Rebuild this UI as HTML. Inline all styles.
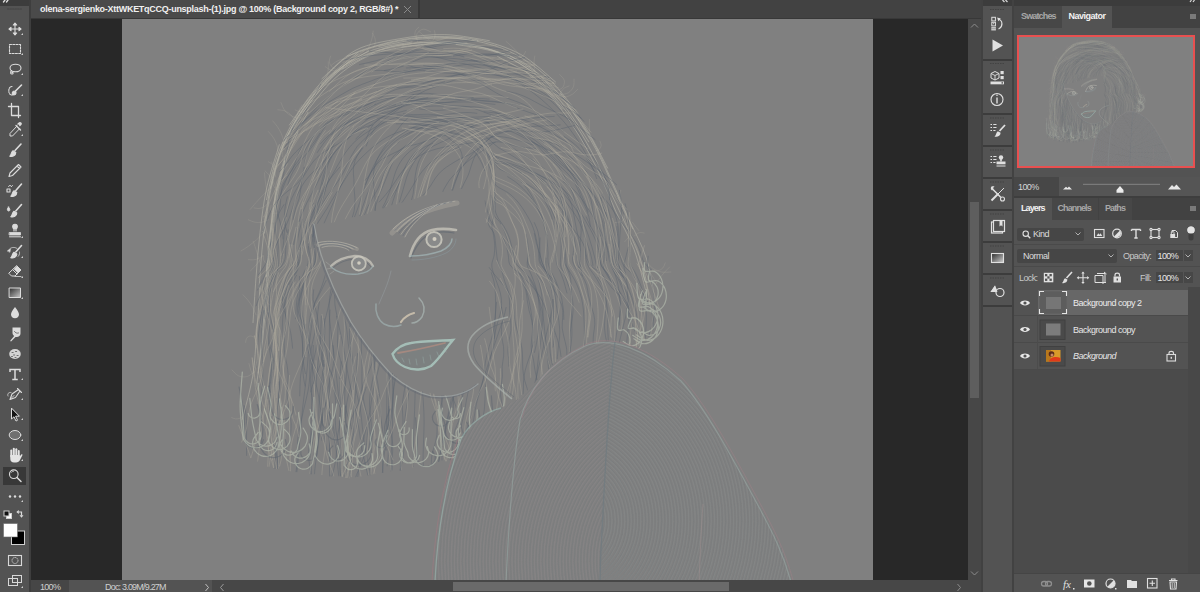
<!DOCTYPE html>
<html><head><meta charset="utf-8">
<style>
*{margin:0;padding:0;box-sizing:border-box}
html,body{width:1200px;height:592px;overflow:hidden;background:#282828;font-family:"Liberation Sans",sans-serif;}
.a{position:absolute}
.t{position:absolute;white-space:nowrap;color:#d6d6d6;font-size:9px;line-height:10px}
svg{position:absolute;overflow:visible}
</style></head><body>
<!-- top strip -->
<div class="a" style="left:0;top:0;width:1200px;height:6px;background:#3c3c3c"></div>
<!-- left toolbar -->
<div class="a" style="left:0;top:6px;width:29px;height:586px;background:#535353"></div>
<div class="a" style="left:29px;top:0;width:2px;height:592px;background:#3e3e3e"></div>
<svg style="left:0;top:0" width="29" height="592" viewBox="0 0 29 592">
<g fill="none" stroke="#dcdcdc" stroke-width="1.1" stroke-linecap="round" stroke-linejoin="round">
<!-- top » -->
<path d="M5 0L3.5 2M8 0L6.5 2" stroke="#e0e0e0" stroke-width="1.3"/>
<!-- grip -->
<path d="M7.5 9H21.5" stroke="#454545" stroke-width="1" stroke-dasharray="1.5 1"/>
<!-- move -->
<path d="M9.5 29H20.5M15 23.5V34.5"/>
<path d="M9 29L11 27.3V30.7Z M21 29L19 27.3V30.7Z M15 23L13.3 25H16.7Z M15 35L13.3 33H16.7Z" fill="#dcdcdc"/>
<!-- marquee -->
<rect x="9.5" y="44.5" width="11" height="9" stroke-dasharray="2 1.3"/>
<!-- lasso -->
<ellipse cx="15.5" cy="68" rx="5.5" ry="3.8"/>
<path d="M11.5 70.5C10 72 10.5 74.5 12.5 74C13.5 73.7 13 72 12 72.5"/>
<!-- quick select -->
<path d="M12 86.5C9 86.5 8.5 90 9 92.5C9.5 95 12 95.5 13.5 94.5" stroke-dasharray="1.2 1"/>
<path d="M21.5 85L15.5 91" stroke-width="1.6"/>
<path d="M13.2 91.3C11.5 93 12 95.3 14.5 94.8C16 94.3 16.5 92.5 15.5 91.3Z" fill="#dcdcdc"/>
<!-- crop -->
<path d="M11.5 103.5V115.5H20.5M8.5 106.5H18.5V117.5" stroke-width="1.3"/>
<!-- eyedropper -->
<path d="M17 126L10 133.5V136H12.5L19.5 128.8" stroke-width="1"/>
<path d="M16 125.5L20.5 130M18 124L19.5 122.8C20.3 122.2 21.6 123.4 21 124.3L19.8 125.6" fill="#dcdcdc" stroke-width="1.4"/>
<!-- brush -->
<path d="M21 144L15 150.5" stroke-width="1.6"/>
<path d="M13 150.8C11 152 11.5 155 9.8 156.2C12.5 157 15.8 155.5 15.8 152.5Z" fill="#dcdcdc"/>
<!-- pencil -->
<path d="M18.5 164.5L21 167L12.5 175.5L9 176.5L10 173Z M17 166L19.5 168.5"/>
<!-- color replacement -->
<path d="M21.5 184L15.8 190.5" stroke-width="1.6"/>
<path d="M14 190.8C12 192 12.5 195 10.8 196.2C13.5 197 16.8 195.5 16.8 192.5Z" fill="#dcdcdc"/>
<rect x="7" y="189" width="3" height="3"/>
<path d="M8.5 186.5C9 185 11 185 11.5 186.5M11.5 186.5L12.5 185.5" stroke-width="0.9"/>
<!-- spot healing -->
<path d="M21.5 204.5L15.8 211" stroke-width="1.6"/>
<path d="M14 211.3C12 212.5 12.5 215.5 10.8 216.7C13.5 217.5 16.8 216 16.8 213Z" fill="#dcdcdc"/>
<path d="M8.5 207C7.3 208.5 7 209.8 7.7 210.6C8.3 211.3 9.3 211.2 9.7 210.5C10.2 209.7 9.8 208.5 8.5 207Z" fill="#dcdcdc" stroke-width="0.8"/>
<!-- clone stamp -->
<circle cx="15" cy="226.5" r="2.3" fill="#dcdcdc"/>
<path d="M14 228.5V231M16 228.5V231" stroke-width="1.2"/>
<path d="M9.5 232.5H20.5V235H9.5Z" fill="#dcdcdc" stroke-width="0.8"/>
<path d="M9.5 236.8H20.5" stroke-width="1"/>
<!-- history brush -->
<path d="M21.5 245.5L15.8 252" stroke-width="1.6"/>
<path d="M14 252.3C12 253.5 12.5 256.5 10.8 257.7C13.5 258.5 16.8 257 16.8 254Z" fill="#dcdcdc"/>
<path d="M8.5 250.5C10 247.5 14 246.5 17 248.5M19.5 252C19.8 254 19 255.5 18 256.5" stroke-width="0.8" stroke-dasharray="1 0.8"/>
<path d="M7.5 250.8L10.5 249L10 252Z" fill="#dcdcdc" stroke-width="0.5"/>
<!-- eraser -->
<path d="M17 266L21 270L15 276H11.5L9 273.5Z M13 270L17 274" stroke-width="1"/>
<path d="M17 266L21 270L18 273L14 269Z" fill="#dcdcdc" stroke-width="0.6"/>
<path d="M15 276.5H21" stroke-width="0.8"/>
<!-- gradient -->
<defs><linearGradient id="gr" x1="0" y1="0" x2="1" y2="1"><stop offset="0" stop-color="#2e2e2e"/><stop offset="1" stop-color="#c8c8c8"/></linearGradient></defs>
<rect x="9.5" y="288" width="11" height="9.5" fill="url(#gr)" stroke="#dcdcdc" stroke-width="1"/>
<!-- blur drop -->
<path d="M15 307C12.5 310.5 11 312.5 11 314.5C11 316.8 12.8 318.3 15 318.3C17.2 318.3 19 316.8 19 314.5C19 312.5 17.5 310.5 15 307Z" fill="#dcdcdc" stroke="none"/>
<!-- smudge -->
<path d="M12.5 327.5H20.5V333.5C20.5 335.8 18.8 337 16.8 337H15.5L11.3 341.3C10.8 341.8 10 341.2 10.4 340.6L14.2 336C13 335.3 12.5 334 12.5 332.8Z" fill="#dcdcdc" stroke="none"/>
<path d="M14.5 331.5C15.5 333 17 333.5 18.5 333" stroke="#535353" stroke-width="0.8"/>
<!-- sponge -->
<ellipse cx="15" cy="354" rx="5.8" ry="5" fill="#d4d4d4" stroke="none"/>
<path d="M12 352.5h1.2M15.5 351.5h1.2M13.5 355h1.2M17 355.5h1.2M11.5 356.5h1M15 357.5h1" stroke="#707070" stroke-width="1"/>
<!-- type -->
<path d="M10 369.5H20M10 369.5V371.3M20 369.5V371.3M15 369.5V379.5M13 379.5H17" stroke-width="1.5" stroke-linecap="square"/>
<!-- pen -->
<path d="M17.5 388.5L21.5 392.5M20 391L15.5 397.5L10 399.5L12 394L18.5 389.5" stroke-width="1.1"/>
<path d="M10.5 399L14 395.5" stroke-width="0.9"/>
<path d="M8 396C7 394 8.5 392 11 392.5" stroke-width="0.8"/>
<!-- path selection -->
<path d="M11.5 408.5V419L14 416.8L16 421L17.5 420.3L15.6 416.2H19Z" fill="#141414" stroke="#dcdcdc" stroke-width="1"/>
<!-- ellipse -->
<ellipse cx="15" cy="435" rx="5.8" ry="4.5" fill="#707070" stroke="#dcdcdc" stroke-width="1"/>
<!-- hand -->
<g stroke="none" fill="#e4e4e4">
<rect x="10.3" y="449.5" width="2" height="8" rx="1"/>
<rect x="12.8" y="447.8" width="2" height="9" rx="1"/>
<rect x="15.3" y="448.3" width="2" height="9" rx="1"/>
<rect x="17.8" y="450" width="1.9" height="7.5" rx="0.95"/>
<path d="M10.3 455H19.7V456.5L21.2 454.5C21.8 453.8 22.8 454.3 22.4 455.2L20 460C19.2 461.6 18 462.5 16 462.5H14C11.8 462.5 10.3 461 10.3 459Z"/>
</g>
</g>
<!-- zoom selected -->
<rect x="3" y="467" width="23" height="18" fill="#383838"/>
<g fill="none" stroke="#dcdcdc" stroke-linecap="round">
<circle cx="13.8" cy="474.2" r="4.3" stroke-width="1.1"/>
<path d="M17 477.5L21 481.5" stroke-width="1.5"/>
<path d="M11.5 472.3C12 471.6 12.8 471.3 13.6 471.3" stroke-width="0.8"/>
</g>
<!-- dots -->
<g fill="#dcdcdc"><circle cx="10" cy="496.5" r="1.2"/><circle cx="15" cy="496.5" r="1.2"/><circle cx="20" cy="496.5" r="1.2"/></g>
<!-- default colors -->
<rect x="6.5" y="513.5" width="5" height="5" fill="#ffffff" stroke="#cfcfcf" stroke-width="1"/>
<rect x="4" y="511" width="5" height="5" fill="#111" stroke="#cfcfcf" stroke-width="1"/>
<path d="M18.5 512H21.5V515.5" fill="none" stroke="#dcdcdc" stroke-width="1.2"/><path d="M16.3 512L18.8 510V514Z M21.5 517.8L19.5 515.3H23.5Z" fill="#dcdcdc"/>
<!-- fg/bg -->
<rect x="11.5" y="531" width="13" height="13.5" fill="#000" stroke="#d0d0d0" stroke-width="1"/>
<rect x="3.5" y="523.5" width="14" height="13.5" fill="#fff" stroke="#6a6a6a" stroke-width="0.6"/>
<!-- quick mask -->
<rect x="8.5" y="555.5" width="13" height="10" fill="none" stroke="#d8d8d8" stroke-width="1.1"/>
<circle cx="15" cy="560.5" r="3" fill="none" stroke="#d8d8d8" stroke-width="1" stroke-dasharray="1.2 0.8"/>
<!-- screen mode -->
<rect x="12.5" y="575.5" width="9" height="7" fill="#535353" stroke="#d8d8d8" stroke-width="1"/>
<rect x="8.5" y="578.5" width="9" height="7" fill="#535353" stroke="#d8d8d8" stroke-width="1"/>
<rect x="12.5" y="575.5" width="9" height="7" fill="none" stroke="#d8d8d8" stroke-width="1"/>
<!-- corner triangles -->
<g fill="#cfcfcf">
<path d="M21 35h2v-2z"/><path d="M21 55h2v-2z"/><path d="M21 75h2v-2z"/><path d="M21 96h2v-2z"/><path d="M21 136h2v-2z"/>
<path d="M21 238h2v-2z"/><path d="M21 258h2v-2z"/><path d="M21 278h2v-2z"/><path d="M21 299h2v-2z"/>
<path d="M21 380h2v-2z"/><path d="M21 400h2v-2z"/><path d="M21 420h2v-2z"/><path d="M21 441h2v-2z"/><path d="M21 461h2v-2z"/>
<path d="M21 502h2v-2z"/><path d="M21 588h2v-2z"/>
</g>
</svg>

<!-- tab bar -->
<div class="a" style="left:31px;top:0;width:950px;height:18px;background:#424242"></div>
<div class="a" style="left:31px;top:0;width:387px;height:18px;background:#4a4a4a"></div>
<div class="a" style="left:418px;top:0;width:2px;height:18px;background:#383838"></div>
<div class="a" style="left:31px;top:18px;width:950px;height:1px;background:#383838"></div>
<div class="t" id="tabtxt" style="left:40px;top:4px;font-weight:bold;color:#f0f0f0;letter-spacing:-0.28px">olena-sergienko-XttWKETqCCQ-unsplash-(1).jpg @ 100% (Background copy 2, RGB/8#) *</div>
<svg style="left:403px;top:5px" width="9" height="9"><path d="M1 1L8 8M8 1L1 8" stroke="#8a8a8a" stroke-width="1"/></svg>
<!-- canvas -->
<div class="a" style="left:31px;top:19px;width:937px;height:561px;background:#282828"></div>
<div class="a" id="img" style="left:122px;top:19px;width:751px;height:561px;background:#808080;overflow:hidden">
<svg style="left:0;top:0" width="751" height="561" viewBox="122 19 751 561"><g id="imgc">
<g fill="none" stroke-linecap="round">
<path d="M346.2 58.6C345.3 58.7 342.5 59.1 340.7 59.6C339.0 60.2 337.2 61.0 335.6 62.0C334.1 62.9 332.0 64.8 331.2 65.4 M523.8 59.9C524.3 60.2 526.0 61.0 526.9 61.8C527.8 62.5 528.6 63.5 529.2 64.5C529.8 65.6 530.3 67.4 530.5 67.9 M295.7 122.3C295.9 121.3 296.2 118.2 296.8 116.2C297.3 114.2 298.0 112.2 298.8 110.3C299.7 108.4 301.3 105.8 301.8 104.9 M271.0 205.6C271.0 206.3 270.3 208.6 270.7 209.9C271.1 211.1 272.4 212.4 273.6 213.0C274.8 213.5 277.1 213.0 277.8 213.0 M629.1 222.7C629.3 223.9 630.6 227.2 630.6 229.5C630.7 231.7 630.1 234.2 629.1 236.2C628.1 238.2 625.5 240.7 624.8 241.6 M260.3 313.5C260.1 314.3 259.1 316.7 259.0 318.4C258.9 320.0 259.2 321.8 259.7 323.4C260.2 324.9 261.7 327.0 262.1 327.7 M655.4 284.5C656.1 283.4 658.1 280.3 659.6 278.3C661.1 276.3 662.7 274.3 664.3 272.5C666.0 270.6 668.7 268.0 669.5 267.1 M366.8 50.9C367.3 49.9 369.1 46.8 369.9 44.7C370.8 42.5 371.5 40.3 372.1 38.0C372.6 35.7 373.0 32.3 373.2 31.1 M595.6 150.9C596.2 150.6 598.5 150.0 599.4 149.1C600.4 148.2 601.1 146.6 601.2 145.2C601.2 143.9 600.1 141.9 599.9 141.2 M325.7 80.2C326.0 79.2 327.0 76.3 327.4 74.2C327.9 72.2 328.2 70.2 328.3 68.1C328.4 66.1 328.3 63.0 328.2 61.9 M647.0 262.7C648.1 263.7 651.1 267.3 653.6 268.8C656.1 270.4 659.1 271.5 661.9 272.1C664.8 272.6 669.4 272.0 670.9 272.0 M260.8 284.9C261.0 285.7 261.0 288.2 261.6 289.7C262.2 291.2 263.2 292.7 264.4 293.8C265.6 294.9 267.9 295.9 268.6 296.3 M516.9 57.6C516.3 57.1 514.4 55.7 513.0 55.0C511.6 54.2 510.1 53.6 508.6 53.1C507.2 52.6 504.8 52.2 504.0 52.0 M295.1 121.8C294.5 120.7 293.0 117.1 291.4 115.3C289.7 113.5 287.5 112.0 285.2 111.0C283.0 110.1 279.1 110.0 277.8 109.8 M301.8 118.0C300.2 117.8 295.3 117.7 292.6 116.5C289.8 115.3 287.0 113.3 285.1 111.0C283.1 108.6 281.7 104.0 281.0 102.6 M285.4 150.0C284.8 149.4 282.1 147.7 281.9 146.4C281.8 145.1 283.3 142.6 284.5 142.1C285.7 141.6 288.5 143.2 289.3 143.5 M403.0 44.1C401.7 44.0 397.8 43.4 395.3 43.7C392.8 44.1 390.2 44.9 387.9 46.0C385.6 47.1 382.7 49.8 381.7 50.6 M252.0 373.4C251.8 372.8 251.2 371.2 250.8 370.2C250.4 369.1 250.1 368.0 249.8 366.9C249.5 365.8 249.2 364.1 249.0 363.6 M417.0 39.4C416.7 38.7 415.2 36.7 415.0 35.2C414.7 33.8 415.0 32.0 415.6 30.6C416.3 29.3 418.2 27.7 418.8 27.2 M555.5 90.7C556.6 90.2 560.9 89.5 562.4 87.8C563.9 86.1 564.8 82.7 564.3 80.5C563.9 78.3 560.4 75.6 559.7 74.6 M272.3 175.5C272.2 176.2 271.8 178.4 271.8 179.8C271.9 181.2 272.2 182.7 272.7 184.1C273.2 185.4 274.4 187.3 274.8 187.9 M282.7 156.6C282.7 155.8 282.7 153.4 282.7 151.7C282.8 150.1 282.8 148.4 282.8 146.8C282.8 145.2 282.9 142.7 282.9 141.9 M275.7 176.9C275.5 176.1 275.3 173.5 274.9 171.8C274.6 170.1 274.1 168.4 273.6 166.8C273.1 165.1 272.0 162.8 271.7 162.0 M254.2 372.1C252.9 372.9 249.5 376.0 246.9 376.6C244.3 377.3 240.9 376.9 238.4 375.8C235.9 374.7 233.2 371.0 232.1 370.0 M647.8 269.7C648.3 270.4 650.0 272.6 651.1 274.1C652.1 275.5 653.1 277.0 654.1 278.6C655.0 280.1 656.3 282.5 656.8 283.3 M256.0 314.8C255.5 313.6 254.0 309.8 252.8 307.5C251.5 305.2 250.1 302.9 248.4 300.8C246.8 298.7 244.0 295.9 243.1 294.9 M516.6 58.5C517.3 58.3 519.4 58.1 520.6 57.5C521.8 56.9 522.9 56.0 523.8 55.0C524.6 53.9 525.3 52.0 525.6 51.4 M534.8 70.2C534.7 69.4 534.3 67.1 534.1 65.5C534.0 63.9 534.0 62.3 534.1 60.8C534.3 59.2 534.7 56.8 534.8 56.1 M523.7 60.3C522.8 59.1 520.3 55.7 518.4 53.5C516.6 51.3 514.6 49.2 512.6 47.2C510.5 45.2 507.2 42.4 506.1 41.5 M652.4 270.1C653.3 270.2 656.2 271.1 657.9 270.8C659.7 270.4 661.6 269.3 662.8 268.0C664.0 266.7 664.8 263.8 665.2 262.9 M243.1 416.0C242.5 416.4 241.0 417.8 239.7 418.3C238.5 418.8 237.0 419.0 235.6 418.9C234.3 418.7 232.4 417.8 231.7 417.6 M417.5 42.0C417.4 40.7 415.9 36.2 416.8 34.0C417.8 31.9 420.9 29.5 423.2 29.2C425.5 28.8 429.5 31.5 430.7 31.9 M619.9 203.2C619.7 202.5 619.2 200.4 618.8 199.0C618.5 197.6 618.1 196.3 617.6 194.9C617.2 193.6 616.5 191.5 616.3 190.9 M305.3 111.6C304.7 111.6 303.0 112.0 301.8 112.0C300.7 111.9 299.5 111.7 298.4 111.4C297.3 111.0 295.7 110.1 295.2 109.9 M621.0 202.8C620.9 202.1 620.6 200.0 620.5 198.6C620.4 197.2 620.4 195.8 620.4 194.4C620.4 193.0 620.6 190.9 620.7 190.2 M262.4 255.8C261.9 256.7 260.2 259.5 259.0 261.2C257.8 262.9 256.5 264.6 255.0 266.2C253.6 267.8 251.3 270.0 250.5 270.8 M560.9 94.9C560.3 94.3 558.7 92.2 557.3 91.5C555.9 90.8 554.0 90.5 552.4 90.7C550.8 90.9 548.6 92.5 547.9 92.8 M336.8 70.8C336.1 70.8 334.0 70.8 332.6 70.5C331.2 70.2 329.9 69.7 328.6 69.0C327.4 68.4 325.8 67.0 325.2 66.6 M268.4 219.8C267.3 220.2 264.1 221.8 261.8 222.2C259.6 222.6 257.1 222.6 254.8 222.2C252.5 221.8 249.3 220.1 248.3 219.7 M283.6 140.3C283.2 139.1 282.1 135.5 281.1 133.2C280.1 131.0 278.8 128.8 277.4 126.7C276.0 124.6 273.5 121.8 272.7 120.9 M274.5 184.2C274.1 183.3 273.0 180.8 272.0 179.2C271.1 177.7 270.0 176.2 268.9 174.8C267.7 173.4 265.7 171.5 265.0 170.8 M536.6 66.1C535.8 65.5 533.5 63.6 531.8 62.8C530.1 61.9 528.2 61.4 526.3 61.1C524.4 60.9 521.5 61.3 520.5 61.3 M626.4 208.8C626.4 209.9 627.1 213.7 626.3 215.8C625.6 217.9 623.8 220.1 621.9 221.2C620.0 222.3 616.2 222.4 615.0 222.6 M278.3 154.2C278.1 152.8 277.9 148.5 277.1 145.8C276.3 143.2 275.2 140.5 273.7 138.2C272.3 135.8 269.3 132.7 268.4 131.6 M578.0 118.8C578.7 119.5 580.7 121.8 581.9 123.4C583.0 125.0 584.1 126.8 585.0 128.5C585.9 130.3 587.0 133.1 587.4 134.0 M268.8 197.5C268.4 196.1 267.3 192.1 266.7 189.4C266.1 186.7 265.6 183.9 265.3 181.2C264.9 178.4 264.6 174.2 264.5 172.8 M634.6 235.9C635.0 235.5 636.2 234.1 637.2 233.5C638.2 233.0 639.4 232.6 640.6 232.5C641.8 232.4 643.5 233.0 644.1 233.1 M335.6 69.0C334.9 68.5 332.3 67.4 331.2 66.1C330.2 64.8 329.4 62.9 329.3 61.3C329.2 59.6 330.4 57.0 330.6 56.2 M263.5 255.8C263.5 256.5 263.3 258.8 263.7 260.1C264.2 261.4 265.2 262.8 266.3 263.6C267.4 264.5 269.6 265.0 270.3 265.2 M632.3 222.1C632.7 222.6 633.7 224.0 634.4 225.0C635.2 225.9 635.9 226.8 636.6 227.7C637.3 228.7 638.5 230.1 638.8 230.5 M268.6 189.7C267.5 190.7 264.2 193.9 262.1 196.0C260.0 198.2 258.0 200.4 256.0 202.6C254.0 204.9 251.1 208.4 250.1 209.5 M276.0 169.3C275.7 168.8 274.8 167.2 274.0 166.3C273.3 165.4 272.4 164.5 271.5 163.7C270.5 163.0 269.0 162.1 268.4 161.8 M260.2 263.2C259.8 261.9 258.7 258.3 258.0 255.9C257.2 253.5 256.4 251.0 255.7 248.6C254.9 246.2 253.7 242.6 253.3 241.4 M559.5 97.1C560.6 97.1 564.1 97.3 566.3 96.8C568.5 96.3 570.8 95.3 572.6 94.1C574.5 92.8 576.8 90.2 577.6 89.4 M262.8 255.8C262.1 256.2 260.0 257.8 258.5 258.5C257.0 259.2 255.3 259.6 253.6 259.8C251.9 260.0 249.4 259.6 248.5 259.6 M262.7 233.7C261.6 234.8 258.4 238.2 256.1 240.2C253.8 242.2 251.4 244.1 248.9 245.9C246.4 247.7 242.4 250.1 241.1 250.9 M432.2 42.3C431.4 41.7 429.2 40.0 427.7 38.8C426.3 37.6 424.8 36.4 423.3 35.2C421.9 34.0 419.7 32.1 419.0 31.5 M373.5 47.9C373.8 47.1 375.0 44.7 375.2 43.0C375.5 41.4 375.3 39.5 374.9 37.9C374.4 36.3 372.9 34.1 372.5 33.3 M260.9 284.9C260.8 286.2 259.8 290.4 260.3 293.0C260.7 295.6 262.0 298.3 263.7 300.4C265.4 302.4 269.2 304.3 270.3 305.1 M561.0 94.8C562.3 94.4 566.4 94.0 568.5 92.7C570.5 91.4 572.5 89.0 573.4 86.8C574.3 84.5 573.9 80.4 574.0 79.1 M254.2 337.1C253.5 336.9 251.4 335.8 250.1 336.0C248.8 336.2 247.2 337.2 246.5 338.3C245.8 339.3 245.9 341.7 245.7 342.4 M266.9 204.5C266.3 205.0 264.5 206.7 263.2 207.3C261.8 208.0 260.2 208.4 258.7 208.5C257.2 208.6 254.8 208.0 254.1 207.9 M267.7 212.2C267.3 213.3 266.1 216.2 265.5 218.3C264.9 220.4 264.4 222.5 264.1 224.6C263.8 226.7 263.6 230.0 263.6 231.0 M432.1 41.6C432.5 41.0 433.8 39.5 434.3 38.3C434.8 37.2 435.1 35.8 435.1 34.5C435.2 33.3 434.5 31.3 434.4 30.7 M556.7 88.6C556.3 88.3 555.2 86.8 554.2 86.4C553.3 85.9 552.0 85.6 551.0 85.7C549.9 85.8 548.3 86.7 547.8 86.9 M260.8 292.0C260.8 290.9 260.6 287.6 260.9 285.4C261.2 283.2 261.7 281.0 262.6 279.0C263.4 277.0 265.3 274.2 265.8 273.3 M559.4 97.3C559.6 96.4 560.0 93.7 560.8 92.2C561.6 90.6 562.9 89.2 564.2 88.1C565.6 87.1 568.3 86.4 569.1 86.0 M312.9 99.0C312.1 99.6 309.6 101.4 308.2 102.9C306.8 104.4 305.6 106.1 304.6 107.9C303.7 109.7 302.9 112.7 302.6 113.7 M281.4 147.5C281.8 146.5 282.6 143.4 283.4 141.5C284.1 139.5 285.1 137.6 286.2 135.8C287.2 134.0 289.2 131.5 289.8 130.6 M589.4 137.6C589.4 136.6 589.3 133.6 589.3 131.6C589.3 129.6 589.3 127.5 589.3 125.5C589.4 123.5 589.4 120.5 589.5 119.5" stroke="#a8a69c" stroke-width="0.7" opacity="0.4"/>
<path d="M259.0 288.2C259.6 280.8 261.1 258.7 262.6 244.0C264.1 229.3 265.4 214.5 268.0 200.1C270.6 185.6 273.5 170.9 278.5 157.1C283.4 143.3 289.8 129.7 297.5 117.3C305.2 104.9 314.7 93.0 324.8 82.5C334.9 72.0 352.6 59.0 358.2 54.3 M266.5 199.6C268.3 192.4 272.1 170.2 277.1 156.3C282.1 142.5 288.5 128.8 296.3 116.3C304.1 103.8 313.7 91.9 323.9 81.3C334.1 70.7 351.9 57.7 357.5 52.9 M265.9 276.4C266.6 269.3 268.2 247.9 269.9 233.7C271.6 219.5 273.1 205.2 276.1 191.3C279.0 177.3 282.4 163.2 287.7 150.0C293.0 136.9 304.6 118.6 308.0 112.3 M270.2 189.2C272.3 182.1 276.9 160.3 282.5 146.7C288.0 133.2 295.2 120.0 303.5 108.0C311.8 95.9 321.4 83.9 332.3 74.3C343.1 64.8 362.6 54.7 368.6 50.7 M242.2 419.5C244.0 412.2 250.2 390.8 252.7 376.2C255.1 361.7 255.5 346.8 256.7 332.1C257.9 317.4 259.4 295.4 259.9 288.0 M256.8 383.0C257.7 375.8 261.0 354.3 262.7 340.0C264.3 325.8 265.2 311.5 266.5 297.4C267.7 283.2 268.8 269.1 270.2 255.0C271.6 241.0 272.8 226.9 274.9 213.0C276.9 199.0 278.7 184.8 282.6 171.3C286.5 157.7 295.4 138.3 298.0 131.8 M566.8 103.3C570.9 109.3 584.3 126.8 591.6 139.4C599.0 152.0 604.8 165.5 610.9 178.8C617.1 192.0 622.8 205.5 628.7 218.8C634.7 232.2 642.2 245.1 646.6 259.0C651.0 272.8 653.8 294.9 655.2 302.1 M560.7 93.5C565.0 99.5 578.8 116.9 586.6 129.3C594.4 141.8 604.1 161.7 607.6 168.1 M258.1 373.0C258.9 365.8 261.3 344.1 262.7 329.8C264.0 315.4 264.9 301.2 266.1 287.0C267.4 272.7 268.4 258.6 269.9 244.4C271.4 230.3 272.5 216.1 275.0 202.1C277.5 188.1 283.2 167.5 284.8 160.6 M253.0 322.6C253.5 315.1 254.9 292.6 256.0 277.6C257.2 262.6 258.2 247.5 260.0 232.6C261.8 217.6 263.4 202.6 266.7 187.9C269.9 173.3 277.2 151.9 279.3 144.7 M288.7 137.9C292.5 131.7 302.7 112.2 311.5 100.7C320.4 89.2 330.3 77.4 341.7 68.9C353.1 60.4 366.5 54.1 380.1 49.7C393.6 45.2 408.8 43.4 423.2 42.3C437.7 41.2 459.6 42.9 466.9 43.0 M401.9 46.9C409.1 46.2 430.8 42.7 445.2 43.0C459.6 43.4 474.2 45.3 488.0 49.1C501.9 52.8 516.4 57.6 528.2 65.5C540.0 73.3 553.7 91.2 558.8 96.4 M292.7 127.6C297.0 121.7 309.0 103.2 318.4 92.0C327.9 80.9 344.1 65.9 349.2 60.6 M341.9 69.3C348.3 66.1 366.6 54.5 380.2 50.1C393.8 45.6 408.8 43.8 423.3 42.7C437.7 41.6 452.6 41.4 466.8 43.5C481.1 45.6 501.8 53.4 508.7 55.4 M264.5 233.1C265.5 225.8 267.8 203.8 270.9 189.4C274.0 175.1 277.6 160.6 283.1 147.1C288.6 133.6 295.8 120.5 304.1 108.5C312.3 96.5 321.9 84.5 332.7 74.9C343.5 65.4 355.7 56.9 368.9 51.4C382.1 45.9 404.8 43.6 412.0 42.0 M378.9 46.4C386.2 45.1 408.0 40.0 422.7 38.9C437.4 37.8 452.6 37.4 467.1 39.6C481.6 41.7 496.6 45.5 509.7 51.6C522.9 57.7 535.3 66.5 546.2 76.2C557.1 85.9 570.3 104.3 575.2 109.9 M266.3 276.4C266.9 269.3 268.5 247.9 270.2 233.7C271.9 219.6 273.4 205.3 276.4 191.4C279.3 177.5 286.1 157.1 288.0 150.2 M508.9 54.9C514.8 58.9 534.0 69.6 544.7 79.2C555.4 88.8 564.5 100.8 573.0 112.5C581.6 124.3 589.1 136.9 596.0 149.6C602.9 162.4 608.4 176.0 614.5 189.2C620.6 202.4 629.8 222.2 632.8 228.8 M497.6 56.5C503.7 60.0 523.2 68.9 534.1 77.6C544.9 86.4 557.8 103.8 562.5 109.1 M307.0 111.3C311.6 105.8 324.4 87.7 335.0 78.3C345.6 68.9 357.5 60.5 370.5 55.1C383.5 49.8 398.6 47.9 412.8 46.0C427.1 44.1 441.8 42.7 456.1 43.7C470.4 44.8 485.2 47.4 498.5 52.5C511.7 57.5 529.5 70.3 535.7 73.8 M525.8 71.5C530.7 76.6 546.3 91.0 555.3 101.8C564.2 112.6 572.1 124.3 579.4 136.2C586.7 148.0 592.9 160.5 599.0 173.0C605.0 185.5 609.9 198.5 615.7 211.2C621.5 223.9 628.9 236.0 633.9 249.1C638.9 262.2 643.6 282.9 645.5 289.6 M456.1 44.4C463.1 45.8 485.1 48.1 498.3 53.1C511.6 58.1 524.4 65.6 535.5 74.4C546.5 83.3 555.7 95.0 564.6 106.2C573.5 117.5 584.8 135.9 588.8 141.8 M542.5 83.6C547.0 89.0 561.6 104.8 569.9 116.3C578.1 127.8 585.4 140.1 592.1 152.6C598.8 165.0 604.0 178.2 609.9 191.0C615.9 203.9 622.4 216.5 628.0 229.5C633.6 242.6 639.7 255.6 643.5 269.2C647.4 282.9 649.8 304.4 651.1 311.4 M346.9 56.3C353.9 54.0 374.7 45.5 389.1 42.2C403.6 38.9 418.8 36.9 433.6 36.5C448.5 36.1 463.7 36.9 478.2 39.9C492.6 42.8 507.6 47.3 520.5 54.3C533.4 61.3 549.7 77.3 555.5 81.9 M321.9 78.7C327.6 73.9 343.1 56.7 356.1 50.0C369.1 43.4 385.0 41.3 399.8 38.7C414.6 36.1 429.9 34.2 444.8 34.6C459.7 34.9 482.0 39.7 489.4 40.7 M289.4 125.0C293.8 119.0 306.1 100.2 315.7 88.8C325.4 77.5 335.0 64.6 347.2 57.0C359.5 49.3 374.9 46.2 389.3 42.9C403.8 39.6 418.9 37.6 433.7 37.2C448.5 36.8 470.7 40.0 478.1 40.6" stroke="#b8b6aa" stroke-width="1" opacity="0.55"/>
<path d="M495.2 142.0C493.6 142.5 488.7 143.6 485.6 144.9C482.5 146.1 479.7 148.0 476.9 149.7C474.0 151.4 471.4 153.5 468.5 155.1C465.6 156.7 462.3 157.7 459.4 159.2C456.4 160.8 453.6 162.5 450.8 164.3C448.0 166.1 445.1 167.9 442.6 170.0C440.1 172.2 437.9 174.8 435.9 177.4C433.9 180.0 432.4 183.1 430.5 185.9C428.6 188.6 425.7 192.2 424.4 193.8C423.2 195.3 423.3 195.0 423.1 195.3 M616.9 226.6C617.0 228.3 617.4 233.2 617.7 236.6C618.0 239.9 618.2 243.2 618.6 246.5C619.1 249.8 619.5 253.2 620.3 256.4C621.2 259.5 621.9 262.8 623.6 265.5C625.4 268.2 628.6 270.0 630.7 272.5C632.8 275.1 634.7 277.9 636.4 280.7C638.2 283.6 639.5 286.6 641.1 289.6C642.7 292.5 644.4 295.4 645.9 298.4C647.4 301.3 648.9 304.3 650.1 307.4C651.2 310.5 652.2 313.8 652.8 317.0C653.3 320.3 653.3 325.0 653.4 327.0C653.5 329.0 653.4 328.7 653.4 329.0 M491.2 195.3C491.5 196.9 492.6 201.8 493.1 205.1C493.6 208.4 492.8 212.1 494.0 215.1C495.2 218.0 498.5 220.0 500.3 222.8C502.1 225.6 503.4 228.7 504.7 231.8C505.9 234.9 506.9 238.1 507.9 241.2C508.9 244.4 509.8 247.6 510.8 250.8C511.8 254.0 512.3 257.5 513.8 260.3C515.3 263.2 517.5 265.5 519.7 267.9C521.9 270.3 524.8 272.3 527.0 274.7C529.2 277.2 531.2 279.9 532.9 282.8C534.5 285.7 535.8 288.8 536.9 292.0C537.9 295.1 538.6 298.4 539.3 301.7C539.9 304.9 540.5 308.2 540.8 311.5C541.1 314.8 541.1 318.2 541.2 321.5C541.4 324.8 541.3 328.2 541.6 331.5C541.9 334.8 542.4 338.1 543.1 341.4C543.8 344.6 544.7 347.9 545.7 351.1C546.6 354.3 547.9 358.0 548.6 360.6C549.4 363.2 550.0 365.4 550.2 366.4 M451.3 398.8C451.0 400.5 450.0 405.4 449.3 408.6C448.7 411.9 448.0 415.2 447.4 418.4C446.7 421.7 446.0 425.0 445.4 428.2C444.7 431.5 444.0 434.8 443.4 438.0C442.7 441.3 442.0 444.6 441.4 447.8C440.7 451.1 439.8 455.3 439.4 457.6C438.9 459.9 438.7 460.9 438.6 461.5 M313.3 345.4C313.2 347.0 313.1 352.0 313.0 355.4C312.9 358.7 312.7 362.0 312.6 365.4C312.5 368.7 312.3 372.0 312.2 375.4C312.1 378.7 312.0 382.0 311.9 385.3C311.8 388.7 311.8 392.0 311.7 395.3C311.7 398.7 311.6 402.0 311.6 405.3C311.6 408.7 311.5 412.0 311.4 415.3C311.4 418.7 311.3 422.0 311.1 425.3C311.0 428.7 310.9 432.0 310.8 435.3C310.6 438.7 310.5 442.0 310.4 445.3C310.3 448.7 310.1 453.3 310.0 455.3C310.0 457.3 310.0 457.0 310.0 457.3 M489.2 267.5C490.2 268.8 493.1 272.9 495.2 275.4C497.3 278.0 499.6 280.4 501.7 283.0C503.9 285.6 506.1 288.1 507.8 290.9C509.5 293.7 510.9 296.9 511.9 300.0C512.9 303.2 513.2 306.5 513.7 309.8C514.2 313.1 514.2 316.5 514.7 319.8C515.3 323.1 516.0 326.3 516.9 329.5C517.7 332.8 519.0 335.9 519.9 339.1C520.7 342.3 521.6 345.5 522.0 348.8C522.5 352.1 522.5 355.5 522.6 358.8C522.7 362.1 522.5 365.5 522.8 368.8C523.1 372.1 523.6 375.4 524.3 378.7C525.0 381.9 526.5 386.4 527.1 388.3C527.6 390.2 527.5 389.9 527.6 390.2 M491.3 272.6C491.7 274.2 493.4 279.0 494.1 282.2C494.8 285.5 495.1 288.8 495.3 292.1C495.5 295.5 495.5 298.8 495.5 302.1C495.6 305.5 495.5 308.8 495.5 312.1C495.4 315.5 495.3 318.8 495.2 322.1C495.1 325.5 495.0 328.8 494.8 332.1C494.6 335.4 494.4 338.8 493.9 342.1C493.4 345.4 492.7 348.6 492.0 351.9C491.3 355.1 490.4 358.4 489.6 361.6C488.9 364.8 488.0 368.1 487.4 371.3C486.8 374.6 486.2 377.9 485.9 381.2C485.5 384.5 485.4 387.9 485.3 391.2C485.1 394.5 485.1 397.9 484.9 401.2C484.7 404.5 484.5 407.9 484.1 411.2C483.6 414.5 483.0 417.7 482.3 421.0C481.6 424.3 480.7 427.5 480.0 430.7C479.2 434.0 478.3 437.9 477.8 440.5C477.2 443.1 477.0 445.4 476.8 446.4 M453.4 396.7C453.0 398.4 451.6 403.2 450.8 406.4C449.9 409.6 449.1 412.8 448.4 416.1C447.7 419.4 447.2 422.7 446.6 426.0C446.1 429.2 445.6 432.5 444.9 435.8C444.2 439.0 443.2 442.3 442.4 445.5C441.6 448.7 440.6 452.6 440.0 455.2C439.4 457.8 439.1 460.1 438.9 461.1 M427.7 97.8C426.1 98.2 421.2 99.3 418.0 100.2C414.8 101.2 411.6 102.2 408.5 103.4C405.4 104.6 402.4 106.1 399.4 107.5C396.4 109.0 393.5 110.6 390.6 112.3C387.7 113.9 384.8 115.6 382.0 117.3C379.1 119.1 376.4 121.0 373.7 123.0C371.0 124.9 368.4 127.0 365.9 129.2C363.4 131.4 360.3 134.4 358.6 136.0C356.9 137.7 356.3 138.5 355.9 139.0 M334.7 295.2C334.8 296.9 334.7 301.9 335.0 305.2C335.4 308.5 336.3 311.7 336.8 315.0C337.3 318.3 337.8 321.6 337.9 324.9C338.1 328.3 337.8 331.6 337.7 334.9C337.6 338.3 337.3 341.6 337.5 344.9C337.7 348.2 338.3 351.6 339.0 354.8C339.7 358.0 341.0 361.1 341.9 364.4C342.8 367.6 343.9 370.7 344.5 374.0C345.0 377.3 345.2 380.6 345.2 384.0C345.3 387.3 344.8 390.6 344.8 394.0C344.7 397.3 344.6 400.7 345.0 403.9C345.4 407.2 346.2 410.5 347.1 413.7C348.0 416.9 349.4 420.7 350.1 423.2C350.9 425.8 351.3 428.1 351.6 429.1 M524.6 57.6C523.0 58.0 518.1 59.0 514.8 59.9C511.6 60.7 508.4 61.6 505.3 62.8C502.2 63.9 499.1 65.4 496.1 66.7C493.0 68.0 490.1 69.5 487.0 70.8C483.9 72.0 480.7 73.1 477.5 74.1C474.3 75.0 471.0 75.6 467.8 76.4C464.6 77.2 461.3 77.9 458.1 78.8C454.9 79.8 451.8 81.1 448.7 82.2C445.6 83.3 442.4 84.5 439.3 85.6C436.1 86.7 432.9 87.6 429.8 88.8C426.7 90.0 423.6 91.3 420.7 92.9C417.8 94.5 415.0 96.4 412.3 98.3C409.6 100.3 407.1 102.5 404.5 104.6C401.9 106.6 399.3 108.7 396.6 110.7C394.0 112.7 391.1 114.5 388.4 116.5C385.7 118.4 382.9 120.2 380.4 122.5C378.0 124.7 375.7 127.2 373.8 129.9C371.9 132.6 370.3 135.9 369.0 138.7C367.8 141.4 366.7 144.9 366.2 146.1 M388.9 406.6C388.8 408.3 388.6 413.3 388.7 416.6C388.7 419.9 388.6 423.3 389.1 426.5C389.6 429.8 391.0 433.0 391.6 436.2C392.3 439.5 392.7 442.8 392.8 446.1C392.9 449.4 392.4 452.8 392.3 456.1C392.2 459.4 392.2 463.8 392.2 466.1C392.1 468.4 392.0 469.4 392.0 470.1 M353.0 327.5C352.9 329.2 352.7 334.2 352.3 337.5C351.8 340.8 350.9 344.0 350.2 347.2C349.5 350.5 348.4 353.7 347.8 357.0C347.2 360.2 346.9 363.6 346.7 366.9C346.4 370.2 346.6 373.6 346.3 376.9C346.0 380.2 345.6 383.5 344.9 386.8C344.3 390.0 343.2 393.2 342.5 396.5C341.8 399.7 341.0 403.0 340.6 406.3C340.2 409.6 340.3 412.9 340.1 416.3C339.8 419.6 339.8 422.9 339.4 426.2C338.9 429.5 338.0 432.8 337.5 436.1C337.1 439.4 336.8 442.7 336.6 446.0C336.4 449.3 336.5 452.7 336.2 456.0C335.8 459.3 335.2 462.6 334.6 465.9C333.9 469.1 332.5 473.9 332.1 475.5 M377.3 90.9C378.9 90.5 383.7 89.0 386.9 88.1C390.1 87.2 393.3 86.2 396.5 85.5C399.8 84.7 403.0 84.1 406.3 83.6C409.6 83.2 413.0 82.9 416.3 82.6C419.6 82.3 422.9 82.1 426.3 81.8C429.6 81.4 432.9 81.0 436.2 80.4C439.4 79.8 442.7 79.0 445.9 78.2C449.1 77.4 452.3 76.3 455.5 75.4C458.7 74.5 461.9 73.6 465.2 73.0C468.5 72.4 471.8 72.0 475.1 71.8C478.5 71.7 481.8 71.8 485.1 72.0C488.5 72.1 491.8 72.5 495.1 72.8C498.4 73.1 501.7 73.4 505.1 73.6C508.4 73.8 511.7 73.9 515.1 74.0C518.4 74.1 521.7 74.0 525.0 74.2C528.4 74.3 531.7 74.4 535.0 74.8C538.3 75.2 542.6 76.1 544.9 76.5C547.1 77.0 548.1 77.4 548.7 77.6 M272.7 241.9C272.7 243.6 272.1 248.6 272.3 251.9C272.4 255.2 273.9 258.5 273.7 261.7C273.6 265.0 272.3 268.0 271.3 271.2C270.3 274.3 268.9 277.4 267.6 280.5C266.3 283.5 264.7 286.5 263.3 289.5C261.8 292.5 260.1 295.7 258.9 298.5C257.7 301.2 256.6 304.7 256.1 305.9 M382.1 89.0C383.7 88.8 388.7 88.2 392.0 87.9C395.3 87.6 398.7 87.5 402.0 87.1C405.3 86.8 408.6 86.5 411.9 86.0C415.2 85.4 418.5 84.8 421.7 84.0C424.9 83.2 428.1 82.1 431.3 81.2C434.5 80.2 437.7 79.2 440.9 78.3C444.1 77.4 447.3 76.5 450.6 75.9C453.9 75.3 457.2 74.8 460.5 74.5C463.8 74.2 467.1 74.2 470.5 74.2C473.8 74.1 477.1 74.3 480.5 74.3C483.8 74.4 487.1 74.3 490.5 74.6C493.8 74.8 497.1 75.2 500.4 75.6C503.7 76.0 507.0 76.6 510.3 77.0C513.6 77.4 516.9 77.8 520.2 78.1C523.6 78.4 526.9 78.6 530.2 78.8C533.5 79.0 536.9 79.1 540.2 79.5C543.5 79.9 548.1 80.6 550.1 80.9C552.1 81.3 551.7 81.3 552.0 81.4 M600.3 194.7C601.5 196.0 605.1 199.4 607.2 202.0C609.3 204.6 611.0 207.4 612.9 210.2C614.8 212.9 616.6 215.8 618.5 218.5C620.5 221.2 622.5 223.8 624.6 226.4C626.6 229.1 628.7 231.6 630.7 234.3C632.6 237.1 634.6 239.8 636.2 242.7C637.8 245.6 639.1 248.7 640.3 251.8C641.5 254.9 641.9 258.5 643.5 261.3C645.1 264.0 648.4 267.1 649.7 268.4C651.0 269.8 651.1 269.4 651.4 269.5 M554.2 116.4C552.5 116.5 547.5 116.8 544.2 117.0C540.9 117.3 537.5 117.6 534.2 118.0C530.9 118.3 527.6 118.8 524.3 119.1C521.0 119.5 517.7 119.8 514.3 120.1C511.0 120.4 507.7 120.6 504.4 120.8C501.0 121.1 497.7 121.2 494.4 121.6C491.1 122.0 487.8 122.6 484.5 123.3C481.3 124.0 478.0 124.8 474.8 125.6C471.6 126.3 468.3 127.1 465.1 127.9C461.9 128.7 458.6 129.4 455.4 130.4C452.2 131.4 449.0 132.5 446.0 133.9C443.0 135.3 440.1 137.0 437.3 138.8C434.6 140.6 431.9 142.6 429.3 144.8C426.8 147.0 424.4 149.3 422.2 151.8C419.9 154.2 417.8 156.8 415.8 159.5C413.9 162.2 412.1 165.0 410.6 168.0C409.0 170.9 407.8 174.0 406.7 177.2C405.6 180.3 404.9 183.6 403.9 186.8C403.0 190.0 401.9 193.8 401.1 196.4C400.4 198.9 399.6 201.1 399.3 202.1 M518.6 117.9C516.9 118.0 511.9 118.4 508.6 118.7C505.3 118.9 502.0 119.1 498.6 119.2C495.3 119.2 492.0 119.1 488.6 119.1C485.3 119.1 482.0 119.0 478.6 119.1C475.3 119.3 472.0 119.6 468.6 119.8C465.3 120.0 462.0 120.4 458.7 120.6C455.4 120.8 452.0 120.8 448.7 121.0C445.4 121.3 442.0 121.4 438.7 122.0C435.5 122.5 432.2 123.3 429.0 124.3C425.9 125.4 422.8 126.8 419.8 128.2C416.8 129.5 413.7 131.0 410.9 132.7C408.1 134.4 405.3 136.4 402.7 138.5C400.1 140.5 397.6 142.8 395.2 145.1C392.8 147.3 390.4 149.6 388.2 152.1C386.0 154.6 383.9 157.3 382.1 160.1C380.3 162.8 378.8 165.9 377.4 168.9C376.0 171.9 374.9 175.1 373.7 178.2C372.5 181.3 371.3 184.4 370.1 187.5C368.8 190.6 367.5 193.6 366.2 196.7C365.0 199.8 363.9 203.0 362.9 206.1C361.8 209.3 360.4 214.1 359.9 215.7 M495.0 104.4C493.3 104.2 488.4 103.7 485.1 103.3C481.8 103.0 478.4 102.5 475.1 102.2C471.8 102.0 468.5 101.9 465.1 101.9C461.8 101.9 458.5 102.1 455.1 102.2C451.8 102.3 448.5 102.5 445.1 102.5C441.8 102.6 438.5 102.5 435.1 102.6C431.8 102.6 428.5 102.5 425.2 102.7C421.8 102.8 418.5 103.0 415.2 103.6C411.9 104.1 408.7 104.9 405.5 105.8C402.3 106.8 399.2 108.0 396.0 109.1C392.9 110.2 389.7 111.3 386.6 112.4C383.4 113.4 380.2 114.3 377.0 115.4C373.9 116.5 369.5 118.1 367.6 118.8C365.8 119.5 366.1 119.5 365.8 119.6 M319.4 301.9C319.1 303.5 318.3 308.4 317.9 311.7C317.5 315.0 317.4 318.4 316.9 321.7C316.5 325.0 315.8 328.3 315.2 331.5C314.5 334.8 313.5 338.0 312.8 341.2C312.1 344.5 311.3 347.8 310.8 351.0C310.4 354.3 310.1 357.7 309.9 361.0C309.8 364.3 309.9 367.7 309.8 371.0C309.7 374.3 309.7 377.7 309.4 381.0C309.1 384.3 308.6 387.6 308.0 390.9C307.4 394.2 306.5 397.4 305.8 400.6C305.0 403.9 304.3 407.1 303.5 410.4C302.8 413.6 302.1 416.9 301.3 420.1C300.6 423.4 299.7 426.6 299.1 429.9C298.5 433.1 298.0 436.5 297.7 439.8C297.4 443.1 297.4 446.4 297.3 449.8C297.2 453.1 297.3 456.4 297.2 459.8C297.0 463.1 296.5 467.7 296.3 469.7C296.1 471.7 296.0 471.4 295.9 471.7 M507.6 176.7C509.0 177.6 513.2 180.2 515.9 182.2C518.5 184.3 521.1 186.5 523.4 188.8C525.7 191.2 528.0 193.7 530.0 196.4C532.0 199.0 533.8 201.8 535.5 204.7C537.2 207.6 538.7 210.6 540.0 213.6C541.3 216.7 542.4 219.8 543.4 223.0C544.3 226.2 545.1 229.5 545.7 232.7C546.4 236.0 546.8 239.3 547.2 242.6C547.6 245.9 547.8 249.3 548.0 252.6C548.1 255.9 547.6 259.4 548.1 262.6C548.6 265.8 549.9 268.7 551.1 271.7C552.4 274.7 554.3 277.6 555.7 280.6C557.0 283.7 558.2 286.8 559.3 289.9C560.3 293.1 561.2 296.3 561.9 299.6C562.5 302.8 563.0 306.2 563.4 309.5C563.7 312.8 563.7 317.8 563.8 319.5 M536.2 273.4C536.7 275.0 538.4 279.7 539.3 282.9C540.1 286.2 540.8 289.4 541.4 292.7C541.9 296.0 542.3 299.3 542.6 302.6C542.9 305.9 543.0 309.3 543.0 312.6C543.0 315.9 542.7 319.3 542.5 322.6C542.3 325.9 542.0 329.2 541.6 332.6C541.3 335.9 540.9 339.2 540.5 342.5C540.1 345.8 539.6 349.1 539.2 352.4C538.7 355.7 538.2 359.0 537.9 362.3C537.5 365.6 537.1 369.3 536.9 372.3C536.6 375.3 536.3 378.9 536.2 380.2 M432.6 95.1C431.0 95.5 426.1 96.5 422.9 97.5C419.7 98.5 416.7 99.9 413.6 101.0C410.4 102.2 407.3 103.3 404.1 104.3C400.9 105.3 397.7 106.0 394.4 106.8C391.2 107.7 387.9 108.4 384.8 109.5C381.7 110.6 378.6 111.9 375.7 113.6C372.8 115.2 370.1 117.2 367.5 119.2C364.8 121.3 362.3 123.5 359.9 125.8C357.5 128.1 355.3 130.6 353.0 133.0C350.7 135.4 348.4 137.8 346.1 140.2C343.7 142.6 341.3 144.9 339.1 147.4C336.9 149.9 334.6 152.4 332.8 155.2C331.0 157.9 329.6 161.0 328.3 164.1C327.1 167.1 326.3 170.4 325.4 173.6C324.4 176.8 323.2 181.3 322.6 183.2C322.0 185.1 322.0 184.8 321.9 185.1 M443.1 395.4C442.8 397.0 442.0 401.9 441.2 405.2C440.4 408.4 439.0 411.5 438.3 414.8C437.7 418.0 437.4 421.4 437.2 424.7C436.9 428.0 437.3 431.4 436.9 434.7C436.5 438.0 435.7 441.2 434.9 444.4C434.1 447.7 432.7 450.8 432.1 454.1C431.5 457.3 431.3 462.3 431.2 464.0 M363.1 147.9C362.1 149.2 358.8 153.1 356.9 155.8C355.0 158.5 353.2 161.3 351.5 164.2C349.8 167.0 348.2 170.0 346.8 173.0C345.3 176.0 344.0 179.0 342.6 182.1C341.2 185.1 339.8 188.1 338.5 191.2C337.1 194.2 335.8 197.3 334.4 200.3C333.0 203.3 331.7 206.4 330.3 209.4C328.9 212.5 327.3 216.1 326.2 218.5C325.1 221.0 324.1 223.1 323.7 224.0 M408.6 100.6C410.3 100.6 415.3 100.7 418.6 100.9C422.0 101.1 425.3 101.1 428.6 101.6C431.9 102.0 435.1 102.9 438.4 103.5C441.7 104.2 444.9 105.0 448.2 105.4C451.5 105.8 454.9 105.6 458.2 105.9C461.5 106.1 464.9 106.2 468.1 106.8C471.4 107.5 474.6 108.6 477.7 109.7C480.9 110.8 483.9 112.2 487.0 113.3C490.2 114.4 493.4 115.2 496.6 116.2C499.8 117.2 503.1 118.0 506.1 119.3C509.2 120.6 512.1 122.3 514.9 124.1C517.7 125.8 520.3 128.0 523.0 129.9C525.8 131.7 528.6 133.5 531.4 135.3C534.2 137.1 537.3 138.5 540.0 140.4C542.7 142.3 545.4 144.4 547.8 146.7C550.1 149.0 552.1 151.8 554.3 154.3C556.5 156.8 558.5 159.4 560.8 161.9C563.0 164.3 565.6 166.6 567.7 169.1C569.9 171.6 572.1 174.2 573.8 177.0C575.5 179.8 576.8 183.0 578.1 186.0C579.4 189.1 580.4 192.3 581.7 195.3C582.9 198.4 584.5 201.7 585.6 204.5C586.7 207.3 587.7 210.9 588.2 212.1 M526.4 183.6C527.7 184.5 532.0 187.1 534.7 189.1C537.4 191.0 539.8 193.4 542.5 195.3C545.2 197.2 548.2 198.7 551.0 200.5C553.8 202.4 556.8 204.0 559.1 206.3C561.5 208.6 563.3 211.5 565.1 214.3C566.8 217.2 567.9 220.4 569.6 223.3C571.2 226.1 573.2 228.9 575.1 231.6C577.0 234.3 579.4 236.7 581.1 239.6C582.7 242.5 584.0 245.6 585.0 248.7C586.0 251.9 585.9 255.6 587.0 258.5C588.1 261.5 589.6 264.3 591.8 266.6C593.9 268.9 597.5 270.1 599.9 272.3C602.3 274.6 604.2 277.5 606.2 280.1C608.2 282.8 610.0 285.6 612.1 288.2C614.3 290.7 616.9 292.8 619.1 295.3C621.4 297.8 623.8 300.1 625.5 302.9C627.2 305.8 628.2 309.0 629.2 312.2C630.2 315.4 630.4 318.8 631.4 322.0C632.4 325.1 633.7 328.2 635.1 331.2C636.6 334.2 638.9 338.2 639.8 340.0C640.8 341.8 640.5 341.6 640.6 341.9 M388.6 370.8C388.4 372.5 387.8 377.4 387.5 380.8C387.2 384.1 387.0 387.4 386.9 390.7C386.8 394.1 386.8 397.4 386.8 400.7C386.8 404.1 386.7 407.4 386.7 410.7C386.6 414.1 386.6 417.4 386.5 420.7C386.5 424.1 386.5 427.4 386.4 430.7C386.3 434.1 386.1 437.4 385.9 440.7C385.6 444.0 385.1 447.3 384.7 450.7C384.4 454.0 383.8 457.3 383.5 460.6C383.1 463.9 382.7 468.5 382.6 470.5C382.4 472.5 382.5 472.2 382.4 472.5 M489.0 153.8C489.9 155.2 491.8 160.6 494.3 162.2C496.8 163.9 501.0 163.0 504.2 163.7C507.5 164.3 510.7 165.1 513.9 166.1C517.1 167.2 520.1 168.6 523.1 170.0C526.2 171.3 529.2 172.7 532.2 174.2C535.2 175.6 538.3 176.9 541.2 178.6C544.0 180.3 546.8 182.2 549.4 184.2C552.0 186.3 554.3 188.7 556.7 191.1C559.0 193.5 561.2 195.9 563.4 198.5C565.5 201.1 567.3 203.9 569.3 206.6C571.3 209.3 573.3 211.9 575.1 214.7C576.9 217.5 578.6 220.4 580.0 223.4C581.4 226.4 582.4 229.6 583.5 232.8C584.7 235.9 585.6 239.1 586.7 242.2C587.8 245.4 589.0 248.5 590.0 251.7C590.9 254.9 591.8 259.1 592.3 261.4C592.8 263.7 592.8 264.7 592.9 265.4 M490.3 152.4C491.6 153.2 495.2 156.2 498.2 157.4C501.1 158.6 504.7 158.8 507.9 159.8C511.0 160.8 514.1 162.1 517.2 163.5C520.2 164.8 523.2 166.4 526.1 167.9C529.1 169.4 532.0 171.0 535.0 172.6C537.9 174.1 540.9 175.7 543.8 177.2C546.8 178.8 549.7 180.3 552.6 182.0C555.4 183.8 558.3 185.6 560.9 187.6C563.5 189.7 566.0 191.9 568.3 194.3C570.5 196.8 572.5 199.5 574.4 202.3C576.2 205.0 577.8 207.9 579.6 210.8C581.3 213.7 583.0 216.5 584.7 219.4C586.4 222.3 588.1 225.1 589.7 228.1C591.2 231.0 592.8 233.9 594.2 237.0C595.5 240.0 596.7 243.2 597.7 246.3C598.7 249.5 599.5 252.8 600.1 256.0C600.7 259.3 600.1 263.0 601.4 266.0C602.6 268.9 605.5 271.2 607.5 273.8C609.5 276.5 611.3 279.3 613.2 282.0C615.1 284.8 617.5 288.4 618.8 290.3C620.1 292.3 620.6 293.1 621.0 293.7 M417.8 149.3C416.7 150.6 413.2 154.2 411.3 156.9C409.3 159.6 407.5 162.4 406.0 165.3C404.4 168.3 403.1 171.4 401.9 174.5C400.7 177.6 399.7 180.8 398.7 183.9C397.6 187.1 396.5 190.3 395.5 193.4C394.4 196.6 393.0 201.0 392.4 202.9C391.8 204.8 391.9 204.5 391.8 204.8 M314.0 308.8C313.7 310.4 312.9 315.4 312.5 318.7C312.0 322.0 311.7 325.3 311.3 328.6C310.9 331.9 310.4 335.2 310.0 338.5C309.6 341.8 309.2 345.1 308.8 348.4C308.5 351.8 308.2 355.1 308.0 358.4C307.7 361.7 307.4 365.0 307.2 368.4C306.9 371.7 306.6 375.0 306.2 378.3C305.9 381.6 305.5 384.9 305.1 388.2C304.6 391.6 304.2 394.9 303.8 398.2C303.4 401.5 303.0 404.8 302.6 408.1C302.3 411.4 302.0 414.7 301.7 418.1C301.4 421.4 301.2 424.7 300.9 428.0C300.6 431.3 300.3 434.7 300.0 438.0C299.7 441.3 299.4 444.6 299.2 448.0C298.9 451.3 298.7 454.6 298.4 457.9C298.1 461.2 297.6 465.5 297.4 467.9C297.1 470.2 297.0 471.2 296.9 471.8 M619.4 190.3C619.6 191.9 620.7 196.8 621.0 200.1C621.3 203.4 621.4 206.8 621.4 210.1C621.4 213.4 621.3 216.8 621.1 220.1C620.9 223.4 620.6 226.7 620.3 230.1C620.0 233.4 619.8 236.7 619.6 240.0C619.4 243.4 619.2 246.7 619.1 250.0C618.9 253.4 618.4 256.8 618.6 260.0C618.7 263.3 619.4 267.3 619.8 269.6C620.3 271.8 621.1 272.6 621.4 273.2 M326.2 280.4C325.4 281.9 323.3 286.4 321.8 289.4C320.3 292.3 318.7 295.3 317.3 298.3C315.8 301.3 314.2 304.3 313.0 307.4C311.9 310.4 310.8 313.6 310.1 316.9C309.4 320.1 309.2 323.5 308.9 326.8C308.6 330.1 308.7 333.5 308.4 336.8C308.0 340.1 307.6 343.4 307.0 346.7C306.3 350.0 305.4 353.2 304.6 356.4C303.8 359.6 302.8 362.8 302.2 366.1C301.5 369.4 300.9 372.7 300.6 376.0C300.2 379.3 300.1 382.6 300.0 385.9C299.9 389.3 299.8 394.3 299.7 395.9 M403.3 113.7C404.9 113.9 409.9 114.5 413.2 114.6C416.6 114.7 419.9 114.4 423.2 114.4C426.6 114.3 429.9 114.2 433.2 114.5C436.5 114.7 439.8 115.4 443.1 115.8C446.4 116.3 449.7 116.9 453.0 117.2C456.3 117.5 459.7 117.4 463.0 117.6C466.3 117.7 469.7 117.7 473.0 118.2C476.3 118.7 479.6 119.4 482.7 120.5C485.8 121.6 488.7 123.5 491.7 124.8C494.8 126.1 497.9 127.2 501.1 128.3C504.2 129.4 507.5 130.1 510.6 131.3C513.7 132.5 516.7 134.0 519.7 135.5C522.7 137.0 525.6 138.6 528.5 140.2C531.5 141.7 534.6 143.0 537.4 144.8C540.1 146.6 542.8 148.7 545.3 150.9C547.8 153.1 549.9 155.7 552.2 158.1C554.5 160.5 556.8 163.0 559.1 165.3C561.5 167.7 564.1 169.8 566.4 172.2C568.6 174.7 570.9 177.1 572.8 179.9C574.7 182.6 576.1 185.6 577.5 188.7C578.9 191.7 580.0 194.8 581.3 197.9C582.6 201.0 584.0 204.0 585.3 207.1C586.5 210.2 587.9 213.3 588.8 216.5C589.6 219.7 590.1 224.7 590.4 226.3 M287.4 196.8C287.0 198.5 285.7 203.3 285.2 206.6C284.7 209.9 284.4 213.2 284.4 216.6C284.5 219.9 285.0 223.2 285.6 226.5C286.2 229.8 287.2 233.0 288.0 236.2C288.8 239.4 289.9 242.6 290.6 245.8C291.3 249.1 292.1 252.4 292.4 255.7C292.7 258.9 293.1 262.2 292.3 265.4C291.6 268.5 289.4 271.3 288.1 274.4C286.8 277.5 285.4 280.6 284.5 283.7C283.6 286.9 282.7 290.2 282.4 293.5C282.1 296.8 282.3 300.2 282.7 303.5C283.1 306.8 284.1 310.0 285.0 313.2C285.9 316.4 287.2 319.5 288.2 322.7C289.1 325.9 290.0 329.1 290.6 332.4C291.3 335.6 291.6 339.6 292.0 342.3C292.3 344.9 292.5 347.2 292.6 348.2 M314.9 319.9C315.1 321.5 316.1 326.4 316.4 329.8C316.8 333.1 317.0 336.4 316.9 339.7C316.9 343.1 316.4 346.4 315.9 349.7C315.3 352.9 314.4 356.2 313.7 359.4C312.9 362.7 312.0 365.9 311.4 369.2C310.9 372.4 310.5 375.8 310.4 379.1C310.3 382.4 310.5 385.8 310.9 389.1C311.2 392.4 311.9 395.7 312.4 398.9C312.9 402.2 313.6 405.5 313.9 408.8C314.2 412.2 314.3 415.5 314.1 418.8C313.9 422.1 313.4 425.5 312.8 428.7C312.2 432.0 311.2 435.2 310.5 438.5C309.9 441.7 309.2 445.0 308.9 448.3C308.6 451.6 308.6 455.0 308.8 458.3C309.0 461.6 309.7 465.6 310.1 468.2C310.5 470.9 310.9 473.2 311.1 474.1 M560.3 196.4C560.7 198.0 561.9 202.8 562.3 206.1C562.7 209.4 562.7 212.8 562.9 216.1C563.0 219.4 562.9 222.8 563.1 226.1C563.2 229.4 563.4 232.8 563.7 236.1C564.0 239.4 564.5 242.7 564.8 246.0C565.1 249.4 565.3 252.7 565.6 256.0C565.9 259.3 565.7 262.6 566.4 265.7C567.1 268.9 569.1 271.9 569.9 275.1C570.7 278.3 571.0 281.7 571.2 285.0C571.5 288.3 571.4 291.6 571.4 295.0C571.5 298.3 571.4 301.6 571.4 305.0C571.4 308.3 571.5 311.6 571.6 315.0C571.6 318.3 571.7 321.6 571.8 325.0C571.8 328.3 572.0 331.6 571.9 335.0C571.7 338.3 571.4 342.0 571.0 344.9C570.6 347.9 569.7 351.4 569.4 352.8 M577.2 209.4C577.8 210.9 579.9 215.5 580.9 218.6C581.9 221.8 582.7 225.1 583.3 228.3C583.9 231.6 584.2 234.9 584.5 238.2C584.8 241.6 584.9 244.9 585.2 248.2C585.4 251.6 585.2 255.0 585.8 258.2C586.4 261.4 587.3 264.4 588.8 267.3C590.2 270.2 592.7 272.7 594.5 275.5C596.3 278.3 598.0 281.2 599.5 284.1C601.1 287.1 602.6 290.1 603.7 293.2C604.9 296.3 605.8 299.6 606.5 302.8C607.2 306.1 607.5 309.4 607.7 312.7C607.9 316.0 607.7 319.4 607.7 322.7C607.7 326.1 607.7 329.7 607.9 332.7C608.0 335.7 608.3 339.4 608.4 340.7 M563.2 181.5C564.6 182.5 568.7 185.4 571.2 187.5C573.7 189.7 576.1 192.1 578.2 194.6C580.4 197.2 582.3 199.9 584.2 202.7C586.1 205.4 587.8 208.3 589.6 211.1C591.4 213.9 593.2 216.7 594.9 219.6C596.5 222.5 598.0 225.5 599.4 228.5C600.9 231.5 602.4 234.5 603.6 237.5C604.9 240.6 606.1 243.7 607.1 246.9C608.1 250.1 608.8 253.3 609.6 256.6C610.4 259.8 610.1 263.6 611.7 266.4C613.3 269.1 617.2 271.2 619.2 273.0C621.1 274.9 622.8 276.5 623.5 277.2 M326.2 184.8C325.9 186.4 325.0 191.4 324.1 194.6C323.3 197.8 322.2 201.0 321.0 204.1C319.8 207.2 318.4 210.2 317.1 213.3C315.9 216.4 314.3 219.4 313.5 222.6C312.7 225.8 312.6 229.2 312.6 232.5C312.6 235.8 313.1 239.1 313.5 242.5C313.8 245.8 314.3 249.1 314.6 252.4C314.9 255.7 315.8 259.3 315.1 262.4C314.5 265.5 312.2 268.1 310.7 271.0C309.1 273.9 307.3 276.8 306.0 279.8C304.7 282.9 303.8 286.1 302.8 289.3C301.7 292.4 300.6 295.6 299.7 298.8C298.9 302.0 298.1 305.3 297.8 308.6C297.5 311.9 297.6 315.3 297.9 318.6C298.3 321.9 299.2 325.1 299.9 328.4C300.5 331.7 301.3 334.9 301.8 338.2C302.3 341.5 302.6 344.8 302.8 348.1C303.0 351.5 302.8 354.8 302.8 358.1C302.8 361.5 302.6 364.8 302.7 368.1C302.9 371.5 303.2 375.1 303.6 378.1C304.0 381.1 304.8 384.6 305.1 386.0 M323.6 360.4C323.5 362.0 323.2 367.0 322.9 370.4C322.6 373.7 322.1 377.0 321.6 380.3C321.2 383.6 320.6 386.9 320.2 390.2C319.8 393.5 319.4 396.8 319.2 400.1C319.0 403.4 318.9 406.8 318.9 410.1C318.8 413.4 319.0 416.8 319.0 420.1C319.1 423.4 319.2 426.8 319.1 430.1C319.0 433.4 318.9 436.8 318.6 440.1C318.3 443.4 317.9 446.7 317.4 450.0C317.0 453.3 316.4 456.6 316.0 459.9C315.5 463.2 315.1 467.5 314.8 469.9C314.6 472.2 314.6 473.2 314.5 473.8 M476.9 113.3C475.3 113.1 470.3 112.5 467.0 112.5C463.6 112.5 460.3 112.8 457.0 113.1C453.7 113.4 450.4 113.9 447.1 114.4C443.8 114.8 440.5 115.3 437.1 115.6C433.8 115.9 430.5 116.1 427.2 116.2C423.8 116.2 420.5 116.0 417.2 116.0C413.8 116.0 410.5 115.8 407.2 116.0C403.8 116.2 400.5 116.6 397.3 117.3C394.0 118.1 390.8 119.1 387.8 120.6C384.8 122.0 382.0 123.9 379.3 125.8C376.7 127.8 374.2 130.1 371.7 132.3C369.3 134.5 366.8 136.8 364.4 139.1C362.0 141.4 359.5 143.7 357.4 146.2C355.4 148.8 353.7 151.8 352.1 154.7C350.4 157.6 349.2 160.7 347.7 163.7C346.2 166.7 344.9 169.7 343.3 172.6C341.7 175.6 339.9 178.4 338.1 181.2C336.3 184.0 334.2 186.6 332.2 189.3C330.3 192.0 328.2 194.6 326.3 197.4C324.5 200.1 322.7 203.0 321.2 206.0C319.8 208.9 318.6 212.1 317.4 215.2C316.3 218.3 315.3 221.5 314.6 224.8C313.9 228.0 313.8 231.4 313.3 234.7C312.9 238.0 312.4 242.3 312.0 244.6C311.6 246.9 311.3 247.9 311.2 248.5 M533.8 341.8C533.4 343.4 532.3 348.3 531.4 351.5C530.4 354.6 529.1 357.7 528.1 360.9C527.1 364.1 525.9 367.2 525.2 370.5C524.4 373.7 523.9 377.0 523.6 380.3C523.3 383.6 523.5 388.0 523.4 390.3C523.3 392.7 523.1 393.6 523.1 394.3 M559.1 223.0C559.5 224.7 561.1 229.4 561.8 232.7C562.5 235.9 563.0 239.2 563.4 242.5C563.8 245.9 564.0 249.2 564.2 252.5C564.4 255.8 563.7 259.4 564.5 262.5C565.4 265.6 567.6 268.2 569.2 271.0C570.9 273.9 572.8 276.7 574.4 279.6C575.9 282.5 577.4 285.6 578.6 288.7C579.7 291.8 580.7 295.0 581.5 298.2C582.3 301.5 582.8 304.8 583.2 308.1C583.6 311.4 583.8 314.7 583.9 318.0C584.1 321.4 584.2 324.7 584.3 328.0C584.3 331.4 584.4 335.0 584.5 338.0C584.5 341.0 584.5 344.7 584.5 346.0 M332.8 152.1C331.7 153.4 328.4 157.1 326.1 159.5C323.8 161.9 321.3 164.1 318.9 166.4C316.5 168.7 313.9 170.9 311.7 173.4C309.4 175.8 307.2 178.3 305.2 181.0C303.3 183.7 301.6 186.6 300.0 189.6C298.5 192.5 297.0 195.5 295.8 198.6C294.5 201.7 293.7 204.9 292.6 208.1C291.5 211.2 290.6 214.4 289.4 217.5C288.2 220.7 286.9 223.7 285.4 226.7C284.0 229.7 282.4 232.6 280.8 235.6C279.3 238.6 277.7 241.5 276.4 244.6C275.1 247.6 273.9 250.8 273.1 254.0C272.3 257.2 272.7 260.8 271.7 263.9C270.6 267.0 268.7 269.6 267.1 272.5C265.6 275.4 263.9 278.4 262.3 281.3C260.7 284.2 258.3 288.6 257.5 290.1 M415.2 390.6C415.1 392.3 415.0 397.3 414.9 400.6C414.8 403.9 414.7 407.3 414.6 410.6C414.5 413.9 414.3 417.3 414.2 420.6C414.1 423.9 414.0 427.3 413.9 430.6C413.8 433.9 413.7 437.2 413.6 440.6C413.5 443.9 413.5 447.2 413.4 450.6C413.4 453.9 413.4 457.9 413.3 460.6C413.3 463.2 413.3 465.6 413.3 466.6 M501.4 306.9C501.7 308.5 503.0 313.4 503.0 316.7C503.1 320.0 501.9 323.3 501.6 326.6C501.4 329.9 501.3 333.3 501.6 336.6C501.9 339.9 503.2 343.1 503.5 346.4C503.8 349.7 503.8 353.0 503.6 356.3C503.4 359.6 502.4 362.9 502.2 366.2C501.9 369.5 502.6 372.9 502.4 376.2C502.2 379.5 501.4 382.8 501.1 386.1C500.8 389.4 500.4 392.8 500.7 396.1C500.9 399.4 502.1 402.6 502.5 405.9C502.9 409.2 503.2 412.9 503.0 415.9C502.9 418.8 502.0 422.4 501.8 423.8 M444.6 81.8C443.0 82.2 438.2 83.6 434.9 84.4C431.7 85.1 428.4 85.9 425.1 86.4C421.8 86.8 418.5 86.9 415.2 87.1C411.8 87.3 408.5 87.1 405.2 87.6C401.9 88.0 398.6 88.6 395.4 89.7C392.3 90.7 389.3 92.3 386.4 93.9C383.5 95.5 380.8 97.6 377.9 99.2C375.0 100.9 372.2 102.6 369.1 104.0C366.1 105.4 362.9 106.4 359.8 107.6C356.7 108.8 353.5 109.9 350.4 111.1C347.3 112.3 344.2 113.5 341.2 114.9C338.2 116.4 335.2 117.9 332.5 119.8C329.8 121.8 327.4 124.2 325.3 126.7C323.2 129.2 321.5 132.2 319.7 135.0C317.9 137.8 316.3 140.7 314.5 143.5C312.6 146.2 310.5 148.8 308.4 151.5C306.3 154.1 304.1 156.6 302.0 159.2C299.9 161.7 297.7 164.2 295.8 167.0C294.0 169.8 292.4 172.7 291.0 175.7C289.7 178.8 288.3 183.6 287.7 185.2 M414.7 121.1C416.4 121.2 421.4 121.6 424.7 121.7C428.0 121.8 431.4 121.7 434.7 121.8C438.0 122.0 441.4 122.0 444.7 122.5C448.0 123.1 451.3 123.8 454.3 125.0C457.4 126.2 460.4 127.9 463.1 129.8C465.9 131.6 468.4 133.9 470.9 136.0C473.4 138.2 476.0 140.4 478.3 142.7C480.7 145.0 483.1 147.4 485.1 150.0C487.2 152.6 489.2 155.4 490.6 158.4C492.0 161.3 493.1 166.3 493.6 167.9 M490.9 150.5C491.9 151.7 494.4 155.7 496.8 157.8C499.2 159.8 502.6 161.1 505.4 162.8C508.3 164.6 511.1 166.4 513.9 168.1C516.7 169.9 519.6 171.6 522.4 173.5C525.1 175.4 527.9 177.3 530.3 179.5C532.8 181.8 535.0 184.3 537.0 186.9C539.0 189.6 540.6 192.5 542.2 195.5C543.8 198.4 545.2 201.4 546.6 204.5C548.0 207.5 549.6 210.5 550.7 213.6C551.8 216.7 552.7 220.0 553.3 223.2C553.9 226.5 554.2 229.8 554.5 233.1C554.8 236.5 555.0 239.8 555.3 243.1C555.5 246.4 555.9 249.8 556.1 253.1C556.3 256.4 555.8 259.9 556.5 263.1C557.2 266.2 559.1 269.0 560.3 272.0C561.5 275.1 562.8 278.2 563.8 281.4C564.8 284.6 565.9 289.1 566.4 291.1C567.0 293.0 566.8 292.7 566.9 293.0 M459.5 147.5C458.0 148.0 453.2 149.5 450.1 150.8C447.0 152.0 444.0 153.4 441.1 155.1C438.2 156.7 435.4 158.6 432.8 160.6C430.2 162.7 427.7 165.0 425.5 167.5C423.2 169.9 421.2 172.6 419.3 175.3C417.4 178.0 415.8 181.0 414.0 183.8C412.3 186.6 410.6 189.5 408.8 192.3C407.0 195.1 404.4 199.0 403.3 200.7C402.2 202.3 402.3 202.0 402.1 202.3 M576.6 166.2C577.9 167.4 581.6 170.7 583.9 173.1C586.2 175.5 588.5 177.9 590.5 180.6C592.5 183.2 594.4 186.0 596.0 188.9C597.6 191.8 599.0 194.9 600.3 198.0C601.5 201.0 602.6 204.2 603.6 207.4C604.6 210.6 605.5 213.8 606.4 217.0C607.3 220.2 608.2 223.4 609.1 226.6C609.9 229.9 610.8 233.1 611.5 236.3C612.3 239.6 613.1 242.8 613.7 246.1C614.3 249.4 614.6 252.7 615.1 256.0C615.6 259.2 615.6 262.6 616.8 265.6C618.0 268.6 620.4 271.2 622.0 274.1C623.6 277.0 625.0 280.0 626.3 283.1C627.7 286.2 628.9 289.3 630.0 292.4C631.2 295.5 632.3 298.7 633.2 301.9C634.2 305.1 635.1 308.3 635.9 311.5C636.6 314.8 637.2 318.1 637.6 321.3C638.1 324.6 638.4 328.0 638.7 331.3C638.9 334.6 639.1 339.3 639.2 341.3C639.3 343.3 639.2 342.9 639.2 343.3 M410.0 70.3C408.4 70.7 403.5 71.6 400.2 72.3C397.0 73.0 393.7 73.6 390.4 74.4C387.2 75.2 384.0 76.2 380.9 77.3C377.7 78.3 374.6 79.6 371.5 80.8C368.4 82.0 365.2 83.1 362.2 84.3C359.1 85.6 355.9 86.8 352.9 88.2C349.9 89.7 347.1 91.4 344.2 93.0C341.3 94.6 338.4 96.4 335.5 98.1C332.7 99.8 329.7 101.4 326.9 103.2C324.1 105.0 321.4 106.9 318.7 108.9C316.1 110.9 313.6 113.1 311.0 115.2C308.5 117.4 305.9 119.5 303.4 121.7C300.9 123.9 298.4 126.1 296.0 128.4C293.5 130.7 290.9 133.2 288.7 135.3C286.6 137.4 284.2 140.2 283.3 141.2 M531.9 141.8C533.4 142.6 537.8 144.9 540.8 146.4C543.8 147.9 546.8 149.3 549.7 150.9C552.6 152.6 555.5 154.3 558.2 156.3C560.8 158.2 563.3 160.5 565.7 162.8C568.1 165.2 570.2 167.8 572.4 170.2C574.6 172.7 576.8 175.2 579.0 177.7C581.3 180.2 583.6 182.6 585.8 185.1C587.9 187.7 590.1 190.2 591.9 193.0C593.7 195.8 595.3 198.8 596.6 201.8C597.9 204.9 598.8 208.1 599.8 211.3C600.7 214.5 601.6 217.7 602.4 221.0C603.1 224.2 603.7 227.5 604.2 230.8C604.8 234.1 605.1 237.4 605.7 240.7C606.2 244.0 606.9 247.2 607.5 250.5C608.2 253.8 608.6 257.2 609.4 260.3C610.3 263.5 611.2 266.5 612.6 269.4C614.0 272.4 616.2 275.1 617.7 278.0C619.3 281.0 620.5 284.1 621.8 287.1C623.2 290.2 624.5 293.3 625.7 296.3C627.0 299.4 628.3 302.5 629.3 305.7C630.3 308.8 631.3 312.7 631.8 315.3C632.3 318.0 632.2 320.3 632.3 321.3 M473.3 97.6C471.7 97.3 466.7 96.4 463.4 96.1C460.1 95.8 456.8 96.0 453.4 95.8C450.1 95.7 446.8 95.6 443.5 95.3C440.1 95.0 436.9 94.2 433.6 93.9C430.2 93.6 426.9 93.1 423.6 93.3C420.3 93.4 417.0 94.0 413.7 94.5C410.4 95.1 407.2 96.0 403.9 96.6C400.6 97.1 397.3 97.4 394.0 97.8C390.7 98.1 387.3 98.2 384.0 98.8C380.8 99.4 377.5 100.4 374.4 101.5C371.3 102.6 368.3 104.2 365.3 105.6C362.3 107.0 359.4 108.7 356.3 110.1C353.3 111.5 350.3 112.9 347.2 114.1C344.1 115.4 340.9 116.2 337.8 117.6C334.8 118.9 331.7 120.2 328.9 122.1C326.1 123.9 323.7 126.2 321.2 128.4C318.7 130.6 316.4 133.1 314.0 135.3C311.5 137.5 308.8 139.6 306.4 141.8C303.9 144.0 301.5 146.3 299.1 148.7C296.7 151.0 294.3 153.3 292.2 155.9C290.0 158.4 288.3 161.3 286.2 163.9C284.1 166.5 280.8 170.2 279.7 171.5 M509.5 51.1C507.8 51.5 503.0 52.5 499.7 53.2C496.5 53.9 493.2 55.0 489.9 55.4C486.7 55.8 483.3 55.7 480.0 55.6C476.6 55.5 473.3 54.9 470.0 54.8C466.7 54.6 463.3 54.7 460.0 55.0C456.7 55.3 453.5 56.2 450.2 56.5C446.8 56.9 443.5 56.7 440.2 56.8C436.8 56.8 433.5 56.4 430.2 56.8C426.9 57.1 423.5 57.7 420.4 58.7C417.2 59.7 414.3 61.3 411.2 62.6C408.1 63.9 405.1 65.4 402.0 66.5C398.8 67.5 395.2 68.2 392.3 68.9C389.4 69.6 385.8 70.3 384.5 70.5 M502.8 60.3C501.2 60.5 496.2 61.0 492.9 61.3C489.5 61.5 486.2 61.7 482.9 61.9C479.6 62.0 476.2 62.1 472.9 62.2C469.6 62.3 466.2 62.3 462.9 62.4C459.6 62.6 456.2 62.7 452.9 63.0C449.6 63.3 446.3 63.8 443.0 64.3C439.7 64.8 436.4 65.4 433.1 66.0C429.9 66.6 426.6 67.4 423.4 68.1C420.1 68.8 416.9 69.6 413.6 70.4C410.4 71.1 407.1 71.9 403.9 72.7C400.7 73.6 397.5 74.4 394.3 75.5C391.1 76.5 388.0 77.7 384.9 79.0C381.9 80.3 377.7 82.4 375.9 83.2C374.1 84.1 374.4 84.0 374.1 84.1 M488.9 214.7C488.9 216.4 487.7 221.6 488.6 224.7C489.4 227.8 492.7 230.1 493.8 233.1C495.0 236.2 495.1 239.7 495.5 243.0C495.9 246.3 496.0 249.6 496.5 252.9C496.9 256.2 497.1 259.6 498.1 262.8C499.0 265.9 500.9 268.7 502.0 271.8C503.1 274.9 503.7 278.2 504.7 281.4C505.7 284.6 507.2 287.6 508.0 290.8C508.8 294.0 509.3 297.4 509.5 300.7C509.8 304.0 509.3 307.3 509.5 310.7C509.6 314.0 510.3 317.3 510.5 320.6C510.8 323.9 511.2 327.3 510.9 330.6C510.7 333.9 509.5 337.1 509.0 340.4C508.6 343.7 508.0 347.0 507.9 350.3C507.9 353.6 508.6 357.6 508.8 360.3C509.0 362.9 508.9 365.2 508.9 366.2 M341.1 361.7C340.9 363.4 340.6 368.4 340.4 371.7C340.1 375.0 339.6 378.3 339.5 381.6C339.5 385.0 339.8 388.3 340.0 391.6C340.3 394.9 340.8 398.3 340.9 401.6C341.0 404.9 340.6 408.2 340.4 411.6C340.2 414.9 339.5 418.2 339.4 421.5C339.3 424.8 339.5 428.2 339.7 431.5C340.0 434.8 340.4 438.1 340.7 441.4C341.0 444.8 341.4 448.1 341.6 451.4C341.9 454.7 342.1 458.1 342.0 461.4C341.9 464.7 341.2 469.0 341.0 471.3C340.8 473.7 340.7 474.6 340.6 475.3 M324.0 364.3C324.1 366.0 324.3 371.0 324.5 374.3C324.7 377.6 325.0 380.9 325.3 384.3C325.6 387.6 325.9 390.9 326.2 394.2C326.4 397.5 326.7 400.9 326.9 404.2C327.1 407.5 327.2 410.9 327.3 414.2C327.5 417.5 327.6 420.8 327.8 424.2C328.0 427.5 328.3 430.8 328.6 434.1C328.9 437.5 329.2 440.8 329.5 444.1C329.8 447.4 330.0 450.8 330.2 454.1C330.4 457.4 330.5 460.7 330.6 464.1C330.8 467.4 331.0 472.1 331.1 474.1C331.3 476.1 331.3 475.7 331.3 476.0 M378.6 394.5C378.2 396.1 377.4 401.1 376.5 404.2C375.5 407.4 374.1 410.5 372.9 413.6C371.7 416.7 370.3 419.7 369.4 422.9C368.5 426.1 367.9 429.4 367.5 432.7C367.0 436.0 367.1 439.4 366.7 442.7C366.3 446.0 365.9 449.4 365.1 452.6C364.3 455.8 363.1 458.9 361.9 462.0C360.7 465.1 359.1 468.8 358.0 471.3C357.0 473.7 356.2 475.9 355.8 476.8 M307.1 166.8C306.5 168.3 304.7 173.0 303.4 176.0C302.0 179.1 300.5 182.0 298.9 185.0C297.4 187.9 295.5 190.7 294.0 193.7C292.5 196.6 291.1 199.7 289.9 202.8C288.7 205.9 287.8 209.1 287.0 212.3C286.2 215.6 285.7 218.9 285.3 222.2C284.9 225.5 284.7 228.8 284.4 232.1C284.1 235.5 283.9 238.8 283.6 242.1C283.3 245.4 283.0 248.8 282.6 252.1C282.3 255.4 282.7 259.0 281.7 262.0C280.7 265.1 278.4 267.6 276.8 270.5C275.2 273.3 273.4 276.2 272.0 279.2C270.7 282.3 269.7 285.5 268.7 288.6C267.7 291.8 266.9 295.1 266.1 298.3C265.4 301.6 264.7 304.8 264.1 308.1C263.6 311.4 263.1 314.7 262.7 318.0C262.3 321.3 262.1 324.6 261.9 328.0C261.7 331.3 261.6 334.6 261.5 338.0C261.5 341.3 261.6 344.6 261.7 348.0C261.9 351.3 262.2 354.6 262.3 357.9C262.5 361.3 262.7 364.6 262.8 367.9C262.8 371.3 262.8 374.6 262.7 377.9C262.6 381.3 262.3 384.6 262.1 387.9C261.8 391.2 261.5 394.6 261.3 397.9C261.2 401.2 261.0 404.5 261.0 407.9C261.1 411.2 261.3 416.2 261.4 417.9 M437.0 100.3C435.4 100.3 430.4 100.4 427.0 100.6C423.7 100.9 420.4 101.2 417.1 101.5C413.8 101.8 410.4 102.1 407.1 102.5C403.8 103.0 400.5 103.5 397.3 104.3C394.0 105.0 390.8 105.9 387.6 106.8C384.4 107.7 381.2 108.7 378.0 109.7C374.9 110.7 371.6 111.6 368.5 112.7C365.4 113.9 362.3 115.2 359.3 116.6C356.3 117.9 353.3 119.5 350.3 121.0C347.4 122.6 344.4 124.1 341.6 125.8C338.7 127.6 335.9 129.4 333.3 131.5C330.7 133.5 328.0 136.1 325.9 138.1C323.7 140.2 321.3 143.0 320.4 143.9 M480.9 145.0C481.9 146.4 484.9 150.4 486.5 153.3C488.2 156.2 489.6 159.2 490.7 162.3C491.9 165.5 492.8 168.7 493.3 172.0C493.8 175.3 493.4 178.8 493.6 182.0C493.8 185.1 494.3 187.9 494.6 190.9C494.8 193.9 494.8 197.0 494.8 200.1C494.9 203.2 494.4 206.5 494.9 209.5C495.5 212.5 496.7 215.3 498.2 218.1C499.7 220.9 502.2 223.5 503.9 226.4C505.6 229.2 507.2 232.2 508.4 235.3C509.7 238.3 510.5 241.6 511.3 244.8C512.2 248.0 512.9 251.3 513.5 254.6C514.1 257.9 513.8 261.4 514.8 264.5C515.8 267.6 518.0 270.1 519.5 273.1C521.0 276.0 522.6 279.0 523.9 282.1C525.1 285.1 526.0 288.4 526.9 291.6C527.7 294.8 528.4 298.1 529.1 301.3C529.8 304.6 530.4 307.9 531.0 311.2C531.5 314.4 532.0 317.7 532.3 321.1C532.6 324.4 532.9 327.7 533.0 331.0C533.1 334.4 533.1 338.4 533.1 341.0C533.0 343.7 532.8 346.0 532.7 347.0 M299.5 276.4C299.6 278.1 299.8 283.1 299.8 286.4C299.7 289.7 299.4 293.0 299.1 296.3C298.7 299.7 297.7 303.0 297.8 306.2C297.8 309.5 298.5 312.9 299.5 316.0C300.5 319.2 302.6 321.9 303.8 325.1C304.9 328.2 305.9 331.4 306.4 334.7C307.0 337.9 306.6 341.4 307.1 344.6C307.6 347.9 308.3 351.2 309.4 354.3C310.5 357.4 312.4 360.3 313.7 363.3C315.1 366.4 316.3 369.5 317.6 372.5C319.0 375.6 320.8 378.5 321.8 381.6C322.8 384.8 323.1 388.2 323.5 391.4C324.0 394.7 323.7 398.2 324.4 401.4C325.0 404.6 326.3 407.8 327.6 410.8C328.8 413.9 330.8 416.8 331.8 419.9C332.9 423.0 333.4 426.4 333.9 429.6C334.3 432.9 334.0 436.4 334.6 439.6C335.2 442.9 336.4 446.4 337.5 449.1C338.6 451.9 340.4 455.1 341.0 456.3 M554.2 194.7C555.3 196.0 558.9 199.6 560.7 202.3C562.5 205.1 564.0 208.2 565.0 211.3C566.1 214.4 566.1 217.9 566.8 221.1C567.5 224.4 568.3 227.6 569.2 230.8C570.2 234.0 571.8 237.0 572.5 240.2C573.3 243.5 573.6 246.8 573.6 250.1C573.6 253.4 572.1 257.0 572.5 260.1C572.9 263.2 574.4 266.1 576.0 268.8C577.7 271.5 580.7 273.6 582.5 276.4C584.2 279.2 585.7 282.3 586.7 285.4C587.7 288.6 587.7 292.0 588.4 295.3C589.1 298.5 589.9 301.8 590.8 305.0C591.7 308.2 593.1 311.3 593.8 314.5C594.5 317.8 594.9 321.1 594.8 324.4C594.8 327.7 593.8 331.0 593.5 334.3C593.2 337.6 593.1 342.6 593.1 344.3 M612.3 252.3C612.0 253.9 610.6 259.0 610.8 262.2C611.1 265.4 612.9 268.3 613.9 271.4C615.0 274.5 616.3 277.6 617.1 280.9C618.0 284.1 618.5 287.4 619.0 290.7C619.5 294.0 619.9 297.3 620.0 300.6C620.2 303.9 620.3 307.3 620.2 310.6C620.0 313.9 619.4 317.2 618.9 320.5C618.4 323.8 617.6 327.1 617.1 330.4C616.5 333.6 615.9 338.3 615.6 340.2C615.3 342.2 615.3 341.9 615.3 342.2 M487.6 162.6C488.2 164.1 490.2 168.7 491.1 171.9C492.0 175.1 491.6 179.1 493.0 181.7C494.3 184.4 496.6 185.9 499.1 187.7C501.6 189.5 505.1 190.6 507.8 192.5C510.5 194.4 513.1 196.7 515.4 199.1C517.6 201.4 519.7 204.1 521.6 206.8C523.5 209.5 525.3 212.4 527.0 215.3C528.6 218.2 530.4 221.0 531.7 224.1C533.0 227.1 534.1 230.3 535.0 233.5C535.9 236.7 536.5 240.0 537.1 243.3C537.8 246.5 538.3 249.8 538.9 253.1C539.5 256.4 539.5 260.0 540.7 263.0C541.8 266.0 543.7 268.5 545.7 271.1C547.6 273.7 550.4 276.2 552.3 278.6C554.2 280.9 556.2 284.0 556.9 285.1 M534.3 222.6C534.9 224.1 537.2 228.7 538.0 231.8C538.9 235.0 539.1 238.4 539.3 241.7C539.5 245.1 539.2 248.4 539.1 251.7C539.1 255.1 538.4 258.7 539.3 261.7C540.2 264.7 542.8 267.1 544.7 269.8C546.5 272.5 548.8 275.1 550.3 278.1C551.8 281.0 552.9 284.2 553.7 287.4C554.6 290.6 554.9 294.0 555.4 297.3C555.9 300.6 556.2 303.9 556.6 307.2C557.1 310.5 557.8 313.8 558.3 317.1C558.8 320.4 559.3 323.7 559.5 327.0C559.8 330.3 559.8 333.7 559.6 337.0C559.4 340.3 558.7 343.6 558.4 346.9C558.0 350.2 557.6 354.9 557.4 356.8C557.2 358.8 557.4 358.5 557.4 358.8 M357.6 353.5C357.5 355.2 357.0 360.1 356.8 363.5C356.6 366.8 356.6 370.1 356.5 373.5C356.4 376.8 356.4 380.1 356.3 383.5C356.1 386.8 355.9 390.1 355.6 393.4C355.3 396.7 354.9 400.1 354.6 403.4C354.2 406.7 353.9 410.0 353.7 413.3C353.5 416.7 353.4 420.0 353.3 423.3C353.3 426.7 353.3 430.0 353.2 433.3C353.1 436.7 353.0 440.0 352.7 443.3C352.5 446.6 352.1 450.0 351.8 453.3C351.5 456.6 351.0 459.9 350.8 463.2C350.5 466.5 350.3 470.9 350.2 473.2C350.1 475.5 350.2 476.5 350.2 477.2 M518.6 55.3C517.0 55.2 512.0 54.9 508.6 54.8C505.3 54.6 502.0 54.4 498.7 54.3C495.3 54.2 492.0 54.1 488.7 54.1C485.3 54.1 482.0 54.2 478.7 54.2C475.3 54.2 472.0 54.2 468.7 54.1C465.3 54.1 462.0 53.9 458.7 53.8C455.3 53.8 452.0 53.8 448.7 53.9C445.3 54.0 442.0 54.2 438.7 54.4C435.4 54.6 432.0 54.8 428.7 55.0C425.4 55.3 422.0 55.5 418.7 55.8C415.4 56.1 412.1 56.5 408.8 57.0C405.5 57.6 402.2 58.2 399.0 59.0C395.8 59.8 392.6 60.7 389.4 61.6C386.2 62.6 381.7 64.0 379.8 64.6C377.9 65.2 378.2 65.1 377.9 65.2 M529.0 255.0C528.7 256.6 526.8 261.6 527.2 264.8C527.5 268.0 529.8 271.0 531.0 274.1C532.2 277.1 533.5 280.2 534.6 283.4C535.7 286.5 536.7 289.7 537.4 293.0C538.1 296.2 538.5 299.5 538.8 302.9C539.1 306.2 539.2 309.5 539.3 312.8C539.3 316.2 539.3 319.5 539.1 322.8C538.9 326.2 538.6 329.5 538.2 332.8C537.8 336.1 537.2 339.4 536.6 342.7C536.0 345.9 534.9 350.8 534.5 352.4 M279.5 350.3C279.5 352.0 279.4 357.0 279.5 360.3C279.5 363.6 279.7 367.0 279.7 370.3C279.8 373.6 279.8 377.0 279.7 380.3C279.6 383.6 279.5 387.0 279.2 390.3C279.0 393.6 278.6 396.9 278.4 400.3C278.1 403.6 277.8 406.9 277.5 410.2C277.3 413.5 277.2 416.9 277.2 420.2C277.1 423.5 277.2 426.9 277.2 430.2C277.3 433.5 277.4 436.9 277.5 440.2C277.5 443.5 277.5 446.9 277.6 450.2C277.6 453.5 277.7 457.2 277.8 460.2C277.8 463.2 277.8 466.9 277.8 468.2 M336.7 316.2C337.1 317.9 338.1 322.7 338.9 326.0C339.6 329.2 340.4 332.5 341.1 335.7C341.9 339.0 342.6 342.2 343.2 345.5C343.8 348.8 344.4 352.1 344.9 355.4C345.4 358.7 345.9 362.0 346.4 365.3C346.9 368.6 347.5 371.8 348.1 375.1C348.7 378.4 349.3 381.7 350.0 384.9C350.7 388.2 351.5 391.4 352.3 394.7C353.0 397.9 353.8 401.2 354.5 404.4C355.2 407.7 355.9 410.9 356.5 414.2C357.1 417.5 357.6 420.8 358.2 424.1C358.7 427.4 359.2 430.7 359.7 434.0C360.2 437.3 360.7 440.6 361.2 443.8C361.8 447.1 362.3 450.4 363.0 453.7C363.6 457.0 364.4 460.2 365.1 463.5C365.8 466.7 366.9 471.2 367.4 473.2C367.8 475.1 367.8 474.8 367.8 475.1 M373.6 354.3C373.3 355.9 372.7 360.9 371.7 364.1C370.8 367.3 369.4 370.3 368.0 373.3C366.7 376.4 364.7 379.2 363.6 382.3C362.5 385.4 362.0 388.8 361.2 392.0C360.5 395.2 360.2 398.6 359.1 401.8C358.1 404.9 356.3 407.8 354.9 410.8C353.6 413.9 351.9 416.8 350.9 420.0C349.9 423.1 349.4 427.5 348.9 429.8C348.5 432.0 348.3 433.0 348.2 433.7 M420.4 90.3C418.7 90.7 413.8 91.6 410.6 92.4C407.4 93.2 404.1 94.1 400.9 95.0C397.8 96.0 394.6 97.0 391.4 98.1C388.3 99.2 385.2 100.4 382.1 101.7C379.0 103.0 376.0 104.4 373.0 105.8C370.0 107.2 367.0 108.8 364.1 110.4C361.2 111.9 358.2 113.6 355.4 115.3C352.5 117.0 349.7 118.8 347.0 120.7C344.2 122.6 341.5 124.6 339.0 126.7C336.5 128.9 334.1 131.2 331.8 133.6C329.5 136.0 327.3 138.5 325.2 141.2C323.2 143.8 320.7 147.4 319.4 149.3C318.1 151.2 317.6 152.1 317.2 152.7 M392.5 373.5C392.5 375.2 392.5 380.2 392.6 383.5C392.6 386.8 392.8 390.2 392.8 393.5C392.8 396.8 392.7 400.2 392.5 403.5C392.2 406.8 391.7 410.1 391.1 413.4C390.5 416.7 389.6 419.9 388.8 423.1C388.0 426.4 387.0 429.6 386.2 432.8C385.5 436.0 384.6 439.3 384.1 442.6C383.5 445.8 383.1 449.2 382.9 452.5C382.6 455.8 382.6 459.1 382.6 462.5C382.6 465.8 382.8 470.8 382.9 472.5 M403.8 71.0C405.4 70.8 410.4 70.4 413.7 70.1C417.0 69.8 420.4 69.4 423.7 68.9C427.0 68.4 430.2 67.9 433.5 67.3C436.8 66.6 440.0 65.9 443.3 65.3C446.6 64.6 449.8 63.8 453.1 63.2C456.4 62.6 459.6 61.9 462.9 61.5C466.2 61.1 469.6 60.8 472.9 60.6C476.2 60.5 480.6 60.6 482.9 60.7C485.2 60.7 486.2 60.8 486.9 60.8 M379.9 362.8C379.5 364.4 378.4 369.3 377.6 372.5C376.8 375.8 375.9 379.0 375.1 382.2C374.3 385.4 373.5 388.7 372.9 392.0C372.3 395.2 371.8 398.5 371.3 401.8C370.8 405.1 370.5 408.4 369.9 411.7C369.3 415.0 368.6 418.3 367.9 421.5C367.2 424.8 366.3 428.0 365.5 431.2C364.7 434.5 363.8 437.7 363.1 440.9C362.3 444.2 361.7 447.5 361.2 450.7C360.6 454.0 360.2 457.3 359.8 460.7C359.4 464.0 359.0 467.9 358.6 470.6C358.3 473.2 357.9 475.5 357.8 476.5 M527.9 276.4C528.8 277.9 531.4 282.1 533.0 285.0C534.5 288.0 536.0 291.0 537.2 294.1C538.5 297.2 539.6 300.3 540.5 303.5C541.4 306.7 542.1 310.0 542.6 313.3C543.2 316.6 543.5 319.9 543.9 323.2C544.2 326.5 544.6 329.8 544.9 333.2C545.3 336.5 545.7 339.8 546.0 343.1C546.4 346.4 546.7 349.7 547.0 353.0C547.4 356.4 547.8 360.3 548.0 363.0C548.3 365.6 548.5 368.0 548.6 369.0 M488.5 123.0C486.8 123.1 481.8 123.2 478.5 123.6C475.2 124.0 471.9 124.6 468.6 125.3C465.4 126.0 462.2 126.9 459.0 127.9C455.8 128.8 452.6 129.9 449.5 131.1C446.4 132.2 443.3 133.5 440.2 134.8C437.1 136.0 434.1 137.4 431.0 138.8C428.0 140.2 425.0 141.6 422.1 143.2C419.2 144.8 416.2 146.4 413.6 148.4C410.9 150.4 408.3 152.5 406.0 154.9C403.7 157.3 401.6 160.0 399.9 162.8C398.2 165.6 396.8 168.7 395.6 171.8C394.4 174.9 393.7 178.2 392.7 181.4C391.7 184.6 390.9 187.8 389.8 191.0C388.7 194.1 387.3 197.5 386.1 200.3C384.9 203.0 383.2 206.2 382.6 207.4 M483.9 111.7C485.5 111.9 490.5 112.4 493.8 112.8C497.1 113.3 500.4 113.8 503.7 114.4C506.9 115.0 510.2 115.7 513.4 116.6C516.6 117.4 519.8 118.4 523.0 119.5C526.1 120.6 529.2 121.8 532.3 123.1C535.4 124.4 538.4 125.9 541.3 127.4C544.3 128.9 547.2 130.5 550.2 132.1C553.1 133.7 555.9 135.4 558.8 137.2C561.6 138.9 564.4 140.7 567.2 142.6C570.0 144.4 572.7 146.4 575.3 148.4C578.0 150.4 580.6 152.5 583.1 154.6C585.7 156.8 588.2 159.0 590.6 161.3C592.9 163.7 595.2 166.1 597.4 168.6C599.6 171.1 601.7 173.7 603.7 176.4C605.7 179.0 607.6 181.8 609.4 184.6C611.2 187.4 612.9 190.3 614.5 193.2C616.1 196.1 617.6 199.1 619.0 202.1C620.4 205.2 621.7 208.2 622.9 211.3C624.2 214.4 625.3 217.6 626.3 220.7C627.3 223.9 628.5 228.8 628.9 230.4 M517.6 132.0C519.2 132.5 524.0 134.0 527.0 135.4C530.0 136.9 532.8 138.6 535.5 140.6C538.2 142.5 540.7 144.8 543.1 147.0C545.6 149.3 547.9 151.7 550.3 154.1C552.6 156.4 555.0 158.8 557.4 161.1C559.9 163.3 562.4 165.5 564.9 167.6C567.5 169.8 570.2 171.8 572.8 173.9C575.3 176.0 577.9 178.1 580.4 180.3C582.8 182.6 585.1 185.0 587.4 187.5C589.6 190.0 591.9 192.4 593.9 195.1C595.8 197.8 597.7 200.6 599.2 203.5C600.7 206.5 601.8 209.7 602.7 212.9C603.6 216.1 604.0 219.4 604.3 222.7C604.6 226.1 604.6 229.4 604.7 232.7C604.7 236.1 604.6 239.4 604.7 242.7C604.8 246.1 605.0 249.7 605.3 252.7C605.5 255.7 606.2 259.3 606.3 260.6 M458.3 122.0C459.9 122.6 464.6 124.1 467.7 125.3C470.9 126.4 474.0 127.6 477.1 128.9C480.1 130.2 483.3 131.4 486.2 133.0C489.1 134.6 491.5 137.0 494.4 138.6C497.4 140.2 500.7 140.9 503.7 142.4C506.6 143.9 509.4 145.8 512.2 147.6C515.0 149.4 517.7 151.3 520.6 153.1C523.4 154.9 526.3 156.6 529.1 158.3C532.0 160.0 534.9 161.6 537.6 163.5C540.3 165.5 542.9 167.6 545.4 169.8C547.8 172.1 549.8 174.8 552.1 177.2C554.4 179.6 556.8 181.9 559.1 184.4C561.3 186.9 563.6 189.4 565.4 192.1C567.3 194.9 568.9 197.8 570.2 200.9C571.5 203.9 572.2 207.2 573.0 210.5C573.8 213.7 574.2 217.0 574.8 220.3C575.4 223.6 576.1 226.8 576.7 230.1C577.4 233.4 578.3 236.6 578.9 239.9C579.4 243.2 580.0 246.5 580.2 249.8C580.3 253.1 579.9 256.8 579.8 259.8C579.8 262.7 579.8 266.2 579.8 267.5 M274.0 263.0C273.8 264.6 273.1 269.4 272.6 272.7C272.1 276.0 271.5 279.3 271.1 282.6C270.6 285.9 270.2 289.2 269.9 292.5C269.7 295.8 269.4 299.2 269.4 302.5C269.4 305.8 269.6 309.2 270.0 312.5C270.3 315.8 270.8 319.1 271.5 322.4C272.2 325.6 273.1 328.8 274.0 332.0C275.0 335.2 276.2 338.7 277.1 341.5C278.1 344.4 279.1 347.9 279.5 349.2 M507.5 74.1C508.9 75.0 513.1 77.7 515.9 79.6C518.7 81.4 521.4 83.3 524.3 85.0C527.1 86.7 530.1 88.3 533.0 89.9C535.9 91.5 538.9 92.9 541.8 94.6C544.6 96.3 547.5 98.1 550.1 100.2C552.7 102.2 555.1 104.6 557.4 107.0C559.7 109.4 561.7 112.1 563.9 114.6C566.0 117.2 568.0 119.8 570.1 122.4C572.3 125.0 574.6 127.4 576.6 130.0C578.6 132.7 580.3 135.6 582.0 138.5C583.7 141.3 585.2 144.3 586.8 147.2C588.5 150.1 590.2 153.0 592.0 155.8C593.8 158.6 595.7 161.3 597.5 164.1C599.3 166.9 601.2 169.7 602.8 172.6C604.3 175.6 605.7 178.6 606.8 181.8C607.8 184.9 608.5 188.5 609.0 191.5C609.5 194.4 609.7 198.1 609.8 199.5 M288.3 229.8C288.0 231.5 287.0 236.4 286.5 239.7C286.1 243.0 286.0 246.3 285.7 249.6C285.4 252.9 285.7 256.5 284.8 259.6C283.9 262.6 282.1 265.3 280.4 268.0C278.6 270.7 276.0 273.1 274.2 275.9C272.4 278.7 270.8 281.6 269.4 284.6C268.0 287.7 266.9 290.8 265.9 294.0C264.9 297.2 264.0 300.4 263.3 303.6C262.5 306.9 262.0 310.2 261.4 313.5C260.9 316.8 260.5 320.1 260.0 323.4C259.6 326.7 259.0 330.0 258.7 333.3C258.3 336.6 258.0 339.9 257.8 343.2C257.6 346.6 257.7 349.9 257.6 353.2C257.4 356.6 257.3 360.9 257.2 363.2C257.1 365.6 256.9 366.6 256.8 367.2 M319.7 133.3C318.8 134.7 316.0 138.9 314.2 141.6C312.3 144.4 310.0 146.9 308.5 149.9C307.0 152.8 306.0 156.1 305.3 159.3C304.5 162.5 304.5 165.9 303.9 169.2C303.3 172.4 302.2 175.6 301.7 178.9C301.1 182.2 301.2 185.6 300.8 188.9C300.3 192.2 299.9 195.5 299.1 198.7C298.3 201.9 296.6 204.9 295.7 208.1C294.8 211.3 293.8 215.9 293.4 217.8C293.0 219.8 293.4 219.5 293.3 219.8 M324.0 318.6C324.1 320.2 324.7 325.2 324.8 328.5C324.8 331.9 324.6 335.2 324.4 338.5C324.2 341.8 323.8 345.2 323.5 348.5C323.2 351.8 322.9 355.1 322.8 358.4C322.7 361.8 322.8 365.1 322.9 368.4C323.0 371.8 323.4 375.1 323.4 378.4C323.5 381.7 323.2 385.1 323.0 388.4C322.7 391.7 322.3 395.0 322.0 398.4C321.8 401.7 321.4 405.0 321.4 408.3C321.3 411.7 321.6 416.0 321.7 418.3C321.8 420.7 322.1 421.6 322.1 422.3 M463.5 391.6C463.1 393.3 462.0 398.1 461.6 401.4C461.2 404.7 461.5 408.1 461.0 411.4C460.6 414.7 459.7 417.9 458.6 421.1C457.6 424.2 455.8 427.2 454.9 430.4C454.0 433.5 453.5 436.9 453.1 440.2C452.7 443.5 453.1 446.9 452.6 450.1C452.1 453.4 450.6 458.2 450.2 459.8 M372.7 124.9C371.1 125.4 366.2 126.4 363.2 127.7C360.1 129.0 357.3 130.8 354.5 132.6C351.7 134.5 349.2 136.6 346.4 138.5C343.7 140.4 340.9 142.2 338.0 144.0C335.2 145.7 332.1 147.1 329.3 148.8C326.4 150.5 323.4 152.1 320.8 154.1C318.2 156.2 315.8 158.5 313.7 161.1C311.5 163.6 309.8 166.5 308.0 169.3C306.1 172.1 304.6 175.1 302.6 177.7C300.5 180.3 298.1 182.6 295.7 184.9C293.2 187.1 290.4 189.0 287.9 191.1C285.3 193.3 282.7 195.3 280.3 197.7C278.0 200.0 275.7 202.5 273.9 205.3C272.1 208.0 270.7 211.1 269.3 214.2C268.0 217.2 267.2 220.5 266.0 223.6C264.9 226.7 263.0 231.4 262.4 232.9 M541.4 189.3C542.2 190.8 544.6 195.2 546.0 198.2C547.5 201.2 548.8 204.2 550.2 207.3C551.5 210.3 552.9 213.4 554.1 216.5C555.4 219.6 556.6 222.7 557.6 225.8C558.6 229.0 559.6 232.2 560.2 235.5C560.8 238.8 561.1 242.1 561.2 245.4C561.3 248.7 560.9 252.1 560.8 255.4C560.7 258.7 559.9 262.0 560.5 265.1C561.1 268.3 563.1 271.3 564.3 274.4C565.6 277.5 566.7 280.6 567.8 283.7C569.0 286.9 570.3 290.0 571.1 293.2C572.0 296.4 572.6 299.7 572.9 303.0C573.2 306.3 573.1 309.7 572.9 313.0C572.7 316.3 572.0 319.6 571.5 322.9C571.1 326.2 570.5 329.5 570.2 332.8C570.0 336.1 569.8 339.5 569.8 342.8C569.8 346.1 570.1 351.1 570.1 352.8 M350.3 323.1C350.1 324.7 349.4 329.7 349.4 333.0C349.4 336.4 349.7 339.7 350.1 343.0C350.4 346.3 351.1 349.6 351.6 352.9C352.1 356.2 352.6 359.5 352.9 362.8C353.1 366.1 353.2 369.5 353.0 372.8C352.7 376.1 352.2 379.4 351.5 382.7C350.9 385.9 349.9 389.1 349.1 392.4C348.4 395.6 347.4 398.8 346.9 402.1C346.3 405.4 345.9 408.7 345.8 412.1C345.7 415.4 345.9 418.7 346.2 422.0C346.5 425.4 347.2 428.6 347.6 431.9C348.1 435.2 348.8 440.2 349.0 441.8 M320.7 84.3C319.9 85.8 317.7 90.3 316.2 93.2C314.6 96.2 313.4 99.3 311.7 102.2C310.0 105.0 308.0 107.7 305.9 110.4C303.9 113.0 301.5 115.3 299.5 118.0C297.4 120.6 295.3 123.2 293.7 126.1C292.1 129.0 291.0 132.2 290.0 135.4C289.1 138.6 288.7 141.9 288.1 145.2C287.4 148.5 286.7 151.7 286.2 155.0C285.7 158.3 285.6 161.7 285.1 165.0C284.7 168.3 284.2 171.6 283.5 174.8C282.7 178.1 281.5 181.2 280.5 184.4C279.5 187.5 278.1 190.6 277.4 193.9C276.7 197.1 276.2 200.5 276.2 203.8C276.2 207.1 276.9 210.4 277.6 213.6C278.3 216.9 279.6 220.0 280.4 223.3C281.2 226.5 282.1 230.4 282.5 233.0C283.0 235.6 283.0 238.0 283.1 239.0 M491.1 152.3C491.5 153.9 493.0 158.8 493.5 161.9C494.0 165.0 493.9 168.1 494.3 171.0C494.6 173.9 495.4 176.4 495.5 179.3C495.6 182.1 494.8 185.2 494.6 188.1C494.5 191.1 494.7 194.2 494.7 197.3C494.8 200.3 495.0 203.5 494.9 206.6C494.8 209.7 494.6 212.9 494.1 216.0C493.5 219.1 491.9 222.2 491.8 225.4C491.7 228.6 493.1 231.9 493.5 235.2C494.0 238.5 494.6 241.9 494.7 245.2C494.8 248.5 494.6 251.9 494.2 255.1C493.7 258.4 491.8 261.6 491.8 264.8C491.7 268.0 492.9 271.2 493.8 274.3C494.8 277.4 496.3 280.5 497.3 283.7C498.4 286.8 499.7 290.0 500.4 293.2C501.1 296.4 501.6 299.8 501.6 303.1C501.6 306.4 501.0 309.8 500.4 313.0C499.7 316.3 498.5 319.4 497.6 322.6C496.8 325.8 495.8 329.7 495.2 332.3C494.7 334.9 494.6 337.3 494.4 338.3 M509.6 56.9C508.0 56.7 503.0 55.8 499.7 55.4C496.4 54.9 493.1 54.5 489.8 54.3C486.5 54.1 483.1 54.3 479.8 54.3C476.5 54.4 473.1 54.6 469.8 54.5C466.5 54.4 463.2 54.1 459.8 53.7C456.5 53.4 453.3 52.6 450.0 52.2C446.6 51.9 443.3 51.6 440.0 51.6C436.7 51.7 433.3 52.2 430.0 52.4C426.7 52.6 423.4 52.7 420.0 52.8C416.7 52.8 413.3 52.7 410.0 52.8C406.7 53.0 403.4 53.3 400.1 53.9C396.8 54.5 393.6 55.5 390.4 56.4C387.2 57.3 384.1 58.5 380.9 59.4C377.7 60.4 374.5 61.2 371.2 61.9C368.0 62.7 363.4 63.6 361.4 64.1C359.5 64.5 359.8 64.5 359.5 64.6 M397.1 114.9C398.8 115.0 403.7 115.4 407.0 115.9C410.4 116.3 413.6 117.0 416.9 117.5C420.2 118.0 423.5 118.4 426.8 118.7C430.2 119.0 433.5 119.1 436.8 119.4C440.1 119.7 443.5 119.9 446.7 120.5C450.0 121.0 453.3 121.8 456.5 122.7C459.7 123.6 462.9 124.6 466.0 125.7C469.2 126.9 472.3 128.0 475.3 129.6C478.2 131.1 481.0 133.0 483.7 134.9C486.3 136.9 488.8 139.3 491.3 141.4C493.8 143.6 496.0 145.9 498.7 147.8C501.4 149.6 504.5 151.0 507.4 152.7C510.2 154.4 513.0 156.2 515.9 158.0C518.7 159.8 521.6 161.4 524.3 163.4C526.9 165.4 529.5 167.5 531.9 169.8C534.3 172.1 536.5 174.7 538.7 177.2C540.9 179.7 543.8 183.3 545.1 184.8C546.4 186.3 546.2 186.1 546.4 186.4 M384.1 122.3C382.6 123.1 378.2 125.4 375.3 127.0C372.4 128.7 369.6 130.5 366.8 132.4C364.1 134.2 361.3 136.1 358.7 138.2C356.2 140.4 353.7 142.6 351.4 145.1C349.2 147.5 347.2 150.2 345.3 152.9C343.4 155.7 341.7 158.6 340.0 161.4C338.3 164.3 336.6 167.2 335.0 170.1C333.3 173.0 331.7 175.9 330.1 178.8C328.5 181.7 326.9 184.7 325.4 187.6C323.9 190.6 322.4 193.6 320.9 196.5C319.3 199.5 317.7 202.4 316.1 205.3C314.6 208.3 313.1 211.3 311.6 214.3C310.2 217.3 308.7 220.3 307.6 223.4C306.6 226.6 306.0 229.9 305.3 233.1C304.6 236.4 304.0 239.7 303.4 242.9C302.8 246.2 302.1 249.5 301.6 252.8C301.1 256.1 301.2 259.6 300.4 262.7C299.6 265.9 297.7 269.6 296.8 271.6C295.8 273.7 295.0 274.5 294.7 275.0 M313.7 289.8C313.6 291.4 312.8 296.4 313.1 299.7C313.5 302.9 315.0 306.1 315.7 309.3C316.5 312.6 317.2 315.8 317.7 319.1C318.3 322.4 318.1 325.8 318.8 329.1C319.5 332.3 320.8 335.4 321.9 338.5C323.1 341.6 325.0 344.5 325.9 347.7C326.8 350.9 326.9 354.3 327.4 357.5C328.0 360.8 328.1 364.2 329.0 367.4C329.9 370.6 331.8 373.5 332.8 376.7C333.7 379.8 334.3 383.1 334.8 386.4C335.3 389.7 335.2 393.1 336.0 396.3C336.8 399.5 338.4 402.5 339.6 405.6C340.8 408.7 342.4 411.7 343.2 414.9C344.0 418.1 343.9 421.6 344.4 424.8C345.0 428.1 345.4 431.5 346.4 434.6C347.5 437.8 349.4 440.6 350.5 443.7C351.7 446.8 352.7 451.4 353.2 453.3C353.7 455.3 353.4 455.0 353.5 455.3 M369.4 51.2C371.0 51.3 376.0 51.7 379.3 52.0C382.7 52.2 386.0 52.4 389.3 52.7C392.6 52.9 395.9 53.2 399.3 53.5C402.6 53.8 405.9 54.2 409.2 54.6C412.5 54.9 415.8 55.3 419.1 55.7C422.5 56.0 425.8 56.4 429.1 56.7C432.4 57.0 435.7 57.2 439.1 57.5C442.4 57.7 445.7 57.9 449.0 58.2C452.4 58.4 455.7 58.6 459.0 59.0C462.3 59.4 465.6 59.9 468.9 60.5C472.2 61.0 475.4 61.7 478.7 62.5C482.0 63.2 485.2 64.0 488.4 64.8C491.6 65.6 494.9 66.4 498.1 67.4C501.3 68.3 504.4 69.4 507.6 70.5C510.7 71.6 513.8 72.8 516.9 74.1C520.0 75.4 523.0 76.7 526.1 78.1C529.1 79.5 532.1 80.9 535.1 82.3C538.1 83.8 541.1 85.2 544.1 86.8C547.0 88.4 549.9 90.0 552.7 91.8C555.6 93.5 558.3 95.4 561.1 97.3C563.8 99.3 566.7 101.5 569.0 103.4C571.3 105.3 574.1 107.7 575.1 108.5 M332.6 290.9C332.2 292.5 330.6 297.2 329.8 300.4C328.9 303.7 328.3 307.0 327.5 310.2C326.8 313.4 325.8 316.6 325.1 319.9C324.5 323.2 324.0 326.5 323.7 329.8C323.4 333.1 323.4 336.4 323.2 339.8C323.1 343.1 323.1 346.4 322.8 349.8C322.5 353.1 322.1 356.4 321.4 359.6C320.7 362.9 319.7 366.1 318.6 369.2C317.5 372.4 316.2 375.5 315.0 378.6C313.9 381.7 312.4 385.8 311.7 388.0C311.0 390.2 310.8 391.2 310.7 391.9 M533.6 145.2C532.0 144.7 527.3 142.9 524.1 141.9C520.9 140.9 517.7 140.0 514.5 139.2C511.2 138.4 508.0 137.7 504.7 137.2C501.4 136.8 498.1 136.1 494.8 136.5C491.6 136.8 488.4 138.2 485.2 139.1C482.0 140.0 478.8 141.1 475.6 141.9C472.4 142.7 469.1 143.3 465.8 143.8C462.5 144.3 459.2 144.5 455.9 145.0C452.6 145.5 449.3 146.0 446.0 146.7C442.8 147.4 439.5 148.1 436.3 149.0C433.1 149.9 429.9 150.9 426.8 152.2C423.8 153.5 420.7 155.0 417.9 156.7C415.1 158.5 412.4 160.6 410.0 162.8C407.5 165.0 405.3 167.5 403.2 170.1C401.1 172.7 399.3 175.5 397.4 178.3C395.5 181.0 393.8 183.9 391.9 186.6C389.9 189.3 387.9 191.9 385.8 194.5C383.7 197.1 380.3 200.8 379.2 202.0 M244.3 405.6C244.6 407.2 245.7 412.1 246.1 415.4C246.5 418.7 246.7 422.0 246.7 425.4C246.8 428.7 246.6 432.0 246.5 435.4C246.5 438.7 246.5 442.0 246.5 445.4C246.5 448.7 246.6 453.7 246.6 455.4 M597.8 277.3C598.7 278.8 601.6 282.8 603.0 285.9C604.3 288.9 605.2 292.2 605.7 295.5C606.2 298.7 606.2 302.1 606.1 305.4C606.0 308.8 605.5 312.1 605.2 315.4C604.9 318.7 604.5 322.0 604.5 325.4C604.5 328.7 605.0 332.7 605.4 335.3C605.7 338.0 606.4 340.2 606.6 341.2 M586.2 217.0C586.9 218.5 588.9 223.1 590.4 226.0C592.0 229.0 594.0 231.7 595.5 234.6C597.0 237.6 598.6 240.6 599.5 243.8C600.4 247.0 600.7 250.4 600.9 253.7C601.1 257.0 599.8 260.6 600.7 263.7C601.6 266.7 604.4 269.2 606.1 272.1C607.8 274.9 609.2 278.0 611.0 280.8C612.7 283.6 614.8 286.3 616.8 288.9C618.8 291.6 621.3 293.9 623.1 296.7C625.0 299.4 627.0 303.3 628.0 305.4C629.0 307.5 628.9 308.6 629.1 309.2 M506.5 91.3C508.1 91.6 513.1 92.5 516.3 93.4C519.5 94.4 522.6 95.6 525.6 96.9C528.7 98.3 531.6 99.9 534.5 101.5C537.5 103.0 540.4 104.7 543.3 106.2C546.3 107.7 549.3 109.2 552.3 110.6C555.3 112.1 558.4 113.4 561.4 114.9C564.3 116.4 567.3 118.0 570.1 119.8C572.8 121.6 575.4 123.8 578.0 125.9C580.6 128.0 583.1 130.2 585.7 132.3C588.3 134.4 592.0 137.2 593.6 138.4C595.1 139.7 594.9 139.5 595.1 139.7 M441.5 396.1C441.6 397.8 441.9 402.8 442.1 406.1C442.2 409.5 442.2 412.8 442.2 416.1C442.3 419.4 442.3 422.8 442.4 426.1C442.5 429.4 442.9 432.8 443.0 436.1C443.1 439.4 442.9 442.8 442.8 446.1C442.6 449.4 442.2 453.7 442.1 456.1C441.9 458.4 442.0 459.4 442.0 460.1 M445.2 135.6C443.5 135.8 438.5 135.9 435.3 136.8C432.1 137.7 429.2 139.6 426.2 140.9C423.1 142.1 419.9 143.3 416.8 144.2C413.6 145.2 410.1 145.3 407.0 146.5C403.9 147.6 401.1 149.5 398.2 151.0C395.2 152.5 392.1 153.9 389.2 155.4C386.3 157.0 383.0 158.2 380.5 160.3C378.0 162.4 376.0 165.2 374.1 167.9C372.1 170.5 370.1 174.1 368.6 176.2C367.0 178.4 365.2 179.9 364.5 180.7 M325.7 273.4C325.3 275.0 324.0 279.8 322.9 283.0C321.9 286.1 320.7 289.3 319.4 292.3C318.1 295.4 316.4 298.3 315.2 301.4C314.1 304.5 313.4 307.8 312.7 311.0C312.0 314.3 311.6 317.6 311.0 320.9C310.4 324.2 309.5 327.4 309.2 330.7C308.9 334.0 308.8 337.4 309.1 340.7C309.3 344.0 310.3 347.3 310.8 350.5C311.3 353.8 311.9 358.1 312.2 360.4C312.4 362.8 312.1 363.8 312.1 364.4 M302.5 219.1C302.1 220.7 300.7 225.5 299.9 228.7C299.1 231.9 298.3 235.2 297.8 238.5C297.4 241.8 297.1 245.1 297.2 248.5C297.3 251.8 298.4 255.1 298.5 258.4C298.7 261.6 298.8 264.8 297.9 267.8C297.0 270.9 294.7 273.7 293.1 276.6C291.5 279.5 289.5 282.3 288.2 285.3C286.9 288.4 285.8 291.6 285.3 294.9C284.7 298.1 284.8 301.5 284.9 304.8C284.9 308.2 285.4 311.5 285.5 314.8C285.7 318.1 285.7 321.5 285.5 324.8C285.4 328.1 285.0 331.4 284.7 334.8C284.5 338.1 284.1 341.4 284.1 344.7C284.1 348.1 284.4 351.4 284.9 354.7C285.3 358.0 286.3 361.2 286.9 364.5C287.4 367.8 288.0 371.1 288.1 374.4C288.2 377.7 287.9 381.1 287.7 384.4C287.6 387.7 287.1 391.1 287.1 394.4C287.2 397.7 287.6 401.0 288.0 404.3C288.5 407.6 289.5 410.8 290.0 414.1C290.5 417.4 291.0 420.7 291.2 424.1C291.3 427.4 290.9 430.7 290.7 434.0C290.5 437.4 290.2 441.4 290.2 444.0C290.1 446.7 290.5 449.0 290.6 450.0 M525.9 234.3C526.2 235.9 527.4 240.8 527.8 244.0C528.2 247.3 528.1 250.7 528.1 254.0C528.2 257.4 527.1 261.1 528.2 264.0C529.2 267.0 532.3 269.3 534.4 271.9C536.5 274.5 538.7 276.9 540.7 279.6C542.7 282.3 544.7 285.0 546.2 288.0C547.7 290.9 549.0 294.1 549.8 297.3C550.6 300.5 551.0 303.8 551.2 307.1C551.4 310.5 551.3 313.8 551.2 317.1C551.2 320.5 551.1 323.8 550.9 327.1C550.7 330.5 550.3 333.8 550.1 337.1C549.9 340.4 549.7 343.8 549.8 347.1C550.0 350.4 550.4 354.1 550.8 357.0C551.3 360.0 552.1 363.6 552.4 364.9 M334.2 390.5C334.4 392.2 335.3 397.1 335.5 400.4C335.8 403.7 335.7 407.1 335.6 410.4C335.6 413.8 335.2 417.1 335.3 420.4C335.4 423.7 335.6 427.1 336.0 430.4C336.4 433.7 337.2 436.9 337.8 440.2C338.4 443.5 339.2 446.8 339.5 450.1C339.9 453.4 339.8 456.7 339.9 460.0C340.0 463.4 339.8 467.4 339.9 470.0C340.0 472.7 340.4 475.0 340.5 476.0 M319.2 335.5C319.5 337.1 320.4 342.0 320.8 345.3C321.2 348.6 321.4 352.0 321.7 355.3C322.0 358.6 322.2 361.9 322.6 365.2C323.0 368.5 323.6 371.8 324.2 375.1C324.8 378.4 325.6 381.6 326.3 384.9C327.0 388.2 327.7 391.4 328.1 394.7C328.6 398.0 328.9 401.3 329.2 404.7C329.6 408.0 329.7 411.3 330.0 414.6C330.4 417.9 330.7 421.3 331.3 424.5C331.8 427.8 332.6 431.1 333.2 434.3C333.9 437.6 334.7 440.9 335.3 444.1C335.9 447.4 336.3 450.7 336.7 454.0C337.1 457.3 337.2 460.7 337.5 464.0C337.8 467.3 338.3 472.0 338.5 473.9C338.8 475.9 338.8 475.6 338.8 475.9 M275.1 275.3C274.2 276.8 271.4 280.9 269.9 283.9C268.4 286.8 267.0 289.9 266.1 293.1C265.2 296.3 264.6 299.6 264.4 302.9C264.1 306.2 264.3 309.6 264.6 312.9C264.9 316.2 265.6 319.5 266.0 322.8C266.5 326.1 266.8 329.4 267.2 332.8C267.6 336.1 267.9 339.4 268.3 342.7C268.8 346.0 269.5 349.2 270.0 352.5C270.5 355.8 271.1 359.1 271.5 362.4C271.8 365.7 272.0 369.1 272.0 372.4C272.1 375.7 271.9 379.1 271.6 382.4C271.4 385.7 270.8 390.7 270.6 392.3 M331.0 156.7C330.3 158.2 328.0 162.6 326.7 165.7C325.5 168.8 324.4 172.0 323.5 175.2C322.5 178.4 321.9 181.6 321.1 184.9C320.3 188.1 319.6 191.4 318.8 194.6C318.0 197.8 317.1 201.1 316.1 204.2C315.1 207.4 314.0 210.6 312.9 213.7C311.8 216.8 310.2 219.9 309.5 223.1C308.7 226.3 308.6 229.7 308.4 233.0C308.2 236.4 308.3 239.7 308.2 243.0C308.1 246.4 308.1 249.7 308.0 253.0C308.0 256.4 308.7 259.9 308.1 263.0C307.5 266.2 305.5 268.9 304.2 272.0C303.0 275.0 301.6 278.1 300.6 281.3C299.6 284.4 298.9 287.7 298.2 291.0C297.6 294.3 297.2 297.6 296.8 300.9C296.4 304.2 296.1 307.9 296.0 310.9C295.8 313.8 295.8 317.5 295.7 318.8 M405.4 384.8C405.1 386.4 404.2 391.3 403.7 394.6C403.2 397.9 402.5 401.2 402.3 404.5C402.2 407.8 402.6 411.2 402.7 414.5C402.8 417.8 403.2 421.2 403.0 424.5C402.7 427.8 402.0 431.1 401.4 434.4C400.9 437.7 400.1 440.9 399.8 444.2C399.6 447.5 399.9 450.9 400.0 454.2C400.1 457.5 400.4 461.5 400.4 464.2C400.5 466.9 400.3 469.2 400.2 470.2 M471.4 39.7C469.7 39.9 464.8 40.5 461.5 41.0C458.2 41.4 454.9 41.8 451.6 42.2C448.3 42.7 444.9 43.2 441.7 43.7C438.4 44.3 435.1 45.0 431.9 45.7C428.6 46.4 425.4 47.2 422.1 48.0C418.9 48.8 415.6 49.5 412.4 50.4C409.2 51.3 406.0 52.1 402.8 53.2C399.6 54.2 395.0 55.9 393.4 56.5 M313.1 203.6C312.4 205.1 310.4 209.6 309.0 212.7C307.7 215.7 306.0 218.7 305.0 221.8C303.9 225.0 303.2 228.2 302.5 231.5C301.9 234.7 301.5 238.1 301.0 241.4C300.6 244.7 300.4 248.0 300.1 251.3C299.8 254.7 300.2 258.2 299.5 261.3C298.7 264.4 297.3 267.3 295.8 270.2C294.3 273.0 292.1 275.7 290.5 278.6C288.9 281.6 287.4 284.6 286.1 287.6C284.7 290.7 283.2 295.4 282.6 297.0 M452.9 397.6C453.4 399.2 455.1 403.9 456.1 407.1C457.1 410.3 458.0 413.5 458.9 416.7C459.7 419.9 460.3 423.2 461.2 426.4C462.0 429.6 462.9 432.8 464.0 436.0C465.0 439.2 466.3 442.6 467.2 445.5C468.1 448.3 469.1 451.9 469.5 453.1 M419.5 108.9C421.1 109.1 426.1 109.9 429.4 110.2C432.7 110.4 436.1 110.5 439.4 110.4C442.7 110.2 446.0 109.8 449.3 109.3C452.6 108.9 455.9 108.1 459.2 107.7C462.5 107.2 465.8 106.7 469.1 106.7C472.4 106.6 475.8 106.8 479.1 107.3C482.4 107.8 485.6 108.6 488.8 109.7C491.9 110.7 495.0 112.1 498.1 113.4C501.1 114.7 504.1 116.2 507.1 117.6C510.2 118.9 513.3 120.1 516.4 121.5C519.4 122.8 522.5 124.1 525.4 125.8C528.2 127.5 530.9 129.5 533.6 131.4C536.3 133.4 538.8 135.6 541.4 137.6C544.1 139.7 546.7 141.8 549.4 143.7C552.1 145.6 554.9 147.4 557.8 149.2C560.6 151.0 563.5 152.6 566.3 154.4C569.1 156.2 572.0 157.9 574.6 159.9C577.2 162.0 579.8 164.1 582.1 166.6C584.4 169.0 586.4 171.7 588.2 174.4C590.0 177.2 592.1 181.8 592.9 183.3 M484.8 200.8C485.2 202.4 486.4 207.3 487.3 210.5C488.2 213.7 488.8 217.2 490.2 220.1C491.7 222.9 493.9 225.2 495.9 227.8C497.9 230.4 500.3 232.8 502.0 235.7C503.7 238.5 504.9 241.7 506.0 244.8C507.0 248.0 507.6 251.3 508.2 254.6C508.8 257.8 508.3 261.6 509.7 264.4C511.2 267.3 514.4 269.2 516.8 271.5C519.2 273.9 521.7 276.1 524.1 278.4C526.5 280.7 528.9 282.9 531.2 285.4C533.5 287.8 535.7 290.3 537.6 293.0C539.5 295.8 541.1 298.7 542.6 301.7C544.0 304.7 545.1 307.9 546.4 311.0C547.6 314.1 548.9 317.1 550.2 320.2C551.4 323.3 552.7 326.4 553.9 329.5C555.1 332.6 556.3 335.7 557.3 338.9C558.3 342.1 559.2 345.7 559.8 348.6C560.4 351.5 560.8 355.2 561.0 356.5 M563.9 136.3C565.3 137.3 569.5 140.1 572.1 142.1C574.7 144.2 577.3 146.3 579.5 148.8C581.7 151.2 583.6 154.0 585.5 156.8C587.3 159.6 588.8 162.6 590.6 165.4C592.4 168.2 594.4 170.9 596.3 173.6C598.3 176.3 600.6 178.7 602.4 181.5C604.2 184.3 605.9 187.2 607.2 190.3C608.5 193.3 609.1 196.7 610.0 199.8C611.0 203.0 612.1 206.2 613.1 209.4C614.2 212.5 615.6 215.6 616.4 218.8C617.3 222.0 618.0 225.3 618.3 228.6C618.6 231.9 618.3 235.3 618.2 238.6C618.1 241.9 617.6 245.2 617.6 248.6C617.5 251.9 617.5 255.3 617.9 258.5C618.3 261.8 619.3 266.2 619.8 268.1C620.3 270.0 620.8 269.4 621.0 269.7 M501.2 115.6C499.5 115.7 494.5 116.1 491.2 116.3C487.9 116.5 484.6 116.8 481.2 116.9C477.9 117.1 474.6 117.1 471.2 117.2C467.9 117.3 464.6 117.3 461.3 117.5C457.9 117.7 454.6 117.9 451.3 118.3C448.0 118.6 444.7 119.0 441.4 119.5C438.1 119.9 434.7 120.3 431.5 121.0C428.2 121.7 425.0 122.5 421.8 123.6C418.7 124.7 415.6 126.1 412.7 127.6C409.7 129.1 406.8 130.8 404.0 132.6C401.2 134.3 398.4 136.2 395.8 138.3C393.2 140.4 390.7 142.6 388.4 145.0C386.0 147.3 383.7 149.8 381.7 152.4C379.7 155.1 377.9 157.9 376.3 160.8C374.6 163.7 373.2 166.7 371.8 169.8C370.4 172.8 369.1 175.9 367.9 179.0C366.6 182.0 365.5 185.2 364.4 188.3C363.3 191.5 362.3 194.7 361.2 197.8C360.2 201.0 359.2 204.2 358.1 207.3C357.0 210.5 355.2 215.1 354.6 216.7 M546.0 258.1C546.0 259.7 545.6 264.5 546.2 267.7C546.7 270.8 548.4 274.0 549.3 277.2C550.1 280.4 550.9 283.7 551.4 286.9C551.9 290.2 552.2 293.6 552.3 296.9C552.5 300.2 552.4 303.6 552.1 306.9C551.8 310.2 551.2 313.5 550.6 316.8C549.9 320.0 549.0 323.2 548.2 326.5C547.4 329.7 546.7 333.0 545.9 336.2C545.1 339.5 544.4 342.7 543.7 346.0C543.0 349.2 542.2 352.5 541.5 355.7C540.7 359.0 539.9 362.2 539.1 365.4C538.3 368.7 537.4 372.2 536.8 375.1C536.1 378.1 535.2 381.6 534.9 382.9 M547.0 184.5C548.1 185.7 551.6 189.3 553.7 192.0C555.7 194.6 557.6 197.4 559.3 200.2C561.1 203.0 562.6 206.0 564.1 209.0C565.5 212.0 566.8 215.1 568.1 218.2C569.3 221.3 570.4 224.4 571.4 227.6C572.4 230.8 573.2 234.0 573.9 237.3C574.6 240.5 575.2 243.8 575.6 247.1C576.1 250.4 576.2 253.8 576.7 257.0C577.2 260.3 578.0 264.7 578.5 266.6C579.0 268.4 579.5 267.9 579.7 268.2 M506.1 307.5C505.7 309.1 504.7 314.0 503.8 317.2C502.8 320.4 501.7 323.5 500.6 326.7C499.5 329.8 498.5 333.0 497.4 336.1C496.3 339.3 495.3 342.5 494.2 345.6C493.1 348.8 492.1 351.9 491.0 355.1C490.0 358.3 489.0 361.5 488.0 364.6C486.9 367.8 485.9 371.0 484.9 374.2C483.9 377.3 482.9 380.5 481.9 383.7C480.9 386.9 479.9 390.0 478.9 393.2C477.8 396.4 476.8 399.5 475.7 402.7C474.7 405.9 473.6 409.0 472.5 412.2C471.5 415.3 470.4 418.5 469.3 421.7C468.3 424.8 467.2 428.0 466.1 431.1C465.1 434.3 463.7 438.4 463.0 440.6C462.3 442.9 462.0 443.8 461.8 444.4 M473.7 125.4C472.1 126.1 467.5 128.0 464.5 129.5C461.6 131.0 458.8 132.9 455.9 134.6C453.0 136.2 450.1 137.9 447.2 139.4C444.2 140.9 441.1 142.2 438.1 143.7C435.2 145.2 432.0 146.5 429.4 148.5C426.7 150.4 424.1 152.7 422.2 155.3C420.2 158.0 418.8 161.1 417.7 164.3C416.6 167.4 416.1 170.7 415.5 174.0C414.9 177.3 414.7 180.6 414.3 183.9C413.9 187.2 413.5 191.2 413.1 193.8C412.6 196.5 411.8 198.7 411.6 199.6 M560.2 124.9C558.6 125.1 553.6 125.4 550.3 125.6C546.9 125.8 543.6 125.8 540.3 126.0C536.9 126.2 533.6 126.3 530.3 126.7C527.0 127.1 523.7 127.6 520.4 128.2C517.1 128.9 513.9 129.7 510.7 130.5C507.5 131.4 504.2 132.1 501.0 133.2C497.9 134.2 494.8 135.3 491.9 136.9C489.1 138.5 486.6 140.8 484.0 143.0C481.4 145.1 478.9 147.3 476.6 149.7C474.2 152.0 472.1 154.6 469.9 157.1C467.8 159.7 465.6 162.2 463.7 164.9C461.8 167.6 460.1 170.5 458.5 173.5C457.0 176.4 455.7 179.9 454.6 182.6C453.5 185.4 452.5 189.0 452.0 190.2 M489.2 99.1C487.5 99.0 482.6 98.6 479.2 98.6C475.9 98.6 472.6 98.9 469.3 99.3C465.9 99.6 462.7 100.2 459.4 100.6C456.1 101.1 452.8 101.6 449.5 102.1C446.1 102.5 442.8 102.9 439.5 103.1C436.2 103.4 432.9 103.5 429.5 103.5C426.2 103.6 422.9 103.5 419.5 103.6C416.2 103.7 412.8 103.7 409.5 104.0C406.2 104.3 402.9 104.8 399.7 105.6C396.5 106.4 393.3 107.7 390.2 108.9C387.2 110.1 384.2 111.7 381.1 113.0C378.1 114.3 374.9 115.4 371.8 116.5C368.6 117.7 365.4 118.6 362.3 119.7C359.2 120.8 356.0 121.9 353.0 123.3C350.0 124.8 347.0 126.4 344.4 128.4C341.7 130.4 339.2 132.7 337.0 135.2C334.9 137.7 333.0 140.5 331.3 143.4C329.6 146.2 328.2 149.3 326.8 152.3C325.4 155.3 324.1 158.4 322.7 161.4C321.2 164.4 319.3 168.2 318.2 170.3C317.1 172.4 316.5 173.2 316.2 173.8 M476.5 41.1C474.8 41.2 469.8 41.7 466.5 42.0C463.2 42.4 459.9 42.7 456.6 43.2C453.3 43.6 450.0 44.0 446.7 44.5C443.4 45.1 440.1 45.6 436.8 46.2C433.5 46.8 430.3 47.5 427.0 48.2C423.7 48.9 420.5 49.6 417.3 50.4C414.0 51.3 410.8 52.2 407.6 53.2C404.5 54.2 401.3 55.3 398.2 56.5C395.1 57.7 392.0 58.9 389.0 60.3C385.9 61.6 382.9 63.0 379.8 64.4C376.8 65.8 373.8 67.2 370.9 68.8C367.9 70.3 365.0 72.0 362.1 73.7C359.3 75.3 356.4 77.1 353.6 78.9C350.8 80.7 348.0 82.5 345.2 84.4C342.5 86.2 339.7 88.1 337.0 90.1C334.4 92.1 331.7 94.1 329.1 96.2C326.5 98.3 324.0 100.5 321.6 102.8C319.2 105.0 316.8 107.4 314.5 109.8C312.2 112.2 309.9 114.7 307.7 117.1C305.5 119.6 303.3 122.2 301.2 124.8C299.1 127.3 297.0 129.9 295.0 132.6C293.0 135.2 290.8 138.2 289.1 140.7C287.4 143.1 285.5 146.3 284.7 147.4 M361.5 337.8C361.4 339.4 361.3 344.4 361.4 347.8C361.4 351.1 361.6 354.4 361.7 357.8C361.8 361.1 361.9 364.4 362.0 367.8C362.0 371.1 361.9 374.4 361.9 377.8C361.9 381.1 361.9 384.4 362.1 387.8C362.3 391.1 362.7 394.4 363.2 397.7C363.7 401.0 364.4 404.3 365.1 407.5C365.8 410.8 366.7 414.0 367.4 417.2C368.1 420.5 368.9 423.8 369.4 427.0C369.9 430.3 370.3 434.0 370.6 437.0C370.8 440.0 370.8 443.6 370.9 445.0 M443.3 106.2C441.6 106.1 436.6 105.9 433.3 106.0C430.0 106.2 426.6 106.4 423.3 106.9C420.0 107.3 416.8 108.0 413.5 108.7C410.2 109.4 407.0 110.3 403.8 111.1C400.6 111.9 397.3 112.7 394.1 113.6C390.9 114.5 387.6 115.3 384.5 116.3C381.3 117.3 378.1 118.4 375.1 119.7C372.1 121.1 369.1 122.7 366.3 124.4C363.4 126.2 360.8 128.2 358.1 130.2C355.5 132.2 352.9 134.3 350.4 136.5C347.8 138.7 345.3 140.9 343.0 143.2C340.6 145.6 338.2 148.0 336.1 150.5C333.9 153.0 331.9 155.7 330.1 158.5C328.2 161.2 326.6 164.2 325.1 167.1C323.5 170.1 322.2 173.1 320.7 176.1C319.2 179.1 317.8 182.1 316.3 185.1C314.8 188.1 313.1 191.0 311.6 193.9C310.0 196.9 308.4 199.8 306.9 202.8C305.5 205.8 304.1 208.8 302.8 211.9C301.5 214.9 300.2 218.0 299.2 221.2C298.1 224.3 297.6 227.6 296.8 230.9C296.0 234.1 295.0 238.3 294.5 240.6C294.0 242.9 293.8 243.9 293.7 244.5 M284.0 204.6C283.2 206.0 280.4 210.2 279.1 213.2C277.8 216.3 277.1 219.6 276.2 222.8C275.4 226.0 275.1 229.4 274.2 232.6C273.4 235.8 272.2 238.9 271.2 242.1C270.1 245.3 268.8 248.4 268.0 251.6C267.3 254.8 267.7 258.4 266.6 261.5C265.6 264.5 263.2 267.7 261.8 269.9C260.4 272.2 259.0 274.1 258.4 274.9 M411.6 142.5C410.1 143.4 405.7 145.8 403.0 147.8C400.3 149.7 397.7 151.8 395.4 154.2C393.2 156.6 391.1 159.4 389.4 162.2C387.7 165.0 386.4 168.1 385.1 171.2C383.7 174.2 382.8 177.5 381.5 180.5C380.2 183.6 378.9 186.7 377.4 189.6C375.8 192.6 374.0 195.4 372.4 198.3C370.8 201.2 369.0 204.4 367.7 207.1C366.4 209.8 365.2 213.3 364.6 214.5 M519.4 104.6C517.7 104.4 512.8 103.8 509.5 103.5C506.1 103.1 502.8 102.7 499.5 102.4C496.2 102.1 492.9 101.7 489.6 101.5C486.2 101.2 482.9 100.9 479.6 100.7C476.3 100.5 472.9 100.3 469.6 100.1C466.3 99.9 462.9 99.7 459.6 99.6C456.3 99.4 453.0 99.2 449.6 99.1C446.3 99.0 443.0 98.9 439.6 98.9C436.3 98.9 433.0 99.0 429.6 99.1C426.3 99.3 423.0 99.5 419.7 99.7C416.3 100.0 413.0 100.4 409.7 100.8C406.4 101.3 403.1 101.9 399.9 102.6C396.6 103.3 393.4 104.2 390.2 105.1C387.0 106.0 383.8 107.1 380.7 108.2C377.6 109.4 374.5 110.6 371.4 111.9C368.3 113.2 365.3 114.5 362.3 115.9C359.2 117.3 356.2 118.8 353.3 120.3C350.3 121.8 347.4 123.4 344.5 125.2C341.7 126.9 338.4 129.3 336.3 130.8C334.1 132.4 332.4 134.0 331.6 134.6 M296.5 275.3C295.7 276.7 293.2 281.1 291.7 284.1C290.3 287.1 289.0 290.2 287.9 293.3C286.8 296.4 285.8 299.6 285.0 302.9C284.3 306.1 283.6 309.4 283.2 312.7C282.8 316.0 282.7 319.3 282.5 322.7C282.3 326.0 282.1 329.3 282.0 332.7C281.8 336.0 281.7 339.3 281.5 342.6C281.3 346.0 281.2 349.3 281.0 352.6C280.8 356.0 280.6 359.3 280.4 362.6C280.2 365.9 280.0 369.3 279.9 372.6C279.7 375.9 279.5 379.3 279.3 382.6C279.2 385.9 279.0 389.2 278.9 392.6C278.7 395.9 278.5 399.2 278.4 402.6C278.2 405.9 278.1 409.2 277.9 412.6C277.7 415.9 277.6 419.2 277.4 422.5C277.2 425.9 277.0 429.2 276.9 432.5C276.7 435.9 276.5 439.2 276.3 442.5C276.1 445.8 275.9 449.2 275.7 452.5C275.6 455.8 275.4 459.8 275.2 462.5C275.1 465.1 275.0 467.5 275.0 468.5 M329.6 172.6C329.3 174.3 328.4 179.2 327.6 182.4C326.7 185.6 325.7 188.8 324.6 192.0C323.5 195.1 322.1 198.2 320.9 201.3C319.7 204.4 318.3 207.4 317.2 210.5C316.1 213.7 314.9 216.9 314.3 220.1C313.7 223.3 313.5 226.7 313.5 230.0C313.5 233.3 314.1 236.6 314.3 240.0C314.6 243.3 314.9 246.6 315.1 249.9C315.2 253.3 315.8 256.8 315.2 259.9C314.7 263.1 313.2 265.9 311.8 268.9C310.4 271.8 308.3 274.6 306.8 277.5C305.2 280.5 303.6 283.4 302.5 286.5C301.3 289.7 300.4 292.9 299.9 296.2C299.4 299.4 299.3 302.8 299.4 306.2C299.5 309.5 300.0 312.8 300.5 316.1C300.9 319.4 301.7 322.7 302.0 326.0C302.4 329.3 302.6 332.6 302.7 335.9C302.8 339.3 302.6 342.6 302.6 345.9C302.7 349.3 302.6 352.6 302.8 355.9C303.0 359.3 303.4 362.9 303.9 365.9C304.3 368.8 305.2 372.4 305.4 373.7 M424.1 45.9C425.7 46.3 430.6 47.6 433.8 48.4C437.0 49.3 440.2 50.3 443.4 51.1C446.6 52.0 449.9 52.9 453.1 53.8C456.3 54.7 459.5 55.5 462.7 56.5C465.9 57.4 469.0 58.5 472.2 59.7C475.3 60.8 478.4 62.1 481.5 63.3C484.6 64.6 487.6 65.9 490.7 67.3C493.7 68.6 496.7 70.1 499.7 71.6C502.6 73.1 505.5 74.8 508.4 76.4C511.3 78.1 514.1 79.9 517.0 81.7C519.8 83.4 522.6 85.3 525.3 87.2C528.0 89.1 530.8 91.0 533.4 93.0C536.1 95.0 538.7 97.1 541.2 99.2C543.8 101.4 546.2 103.6 548.7 105.9C551.1 108.2 553.4 110.6 555.8 113.0C558.1 115.4 560.4 117.8 562.6 120.3C564.8 122.8 566.9 125.3 569.0 128.0C571.0 130.6 572.9 133.3 574.8 136.1C576.7 138.8 578.6 141.6 580.4 144.4C582.1 147.2 583.9 150.1 585.4 153.0C587.0 155.9 588.5 158.9 589.9 162.0C591.3 165.0 592.7 168.4 593.9 171.2C595.0 173.9 596.2 177.4 596.7 178.6 M422.6 127.1C421.0 127.7 416.4 129.4 413.3 130.8C410.3 132.1 407.2 133.5 404.3 135.2C401.4 136.8 398.6 138.6 396.0 140.7C393.4 142.7 391.0 145.1 388.8 147.6C386.5 150.0 384.5 152.7 382.5 155.3C380.4 158.0 378.5 160.7 376.6 163.4C374.7 166.2 372.9 169.0 371.2 171.9C369.6 174.8 367.8 178.7 366.9 180.8C365.9 183.0 365.6 183.9 365.4 184.6 M280.0 315.5C279.8 317.2 279.3 322.1 278.9 325.5C278.5 328.8 278.2 332.1 277.7 335.4C277.2 338.7 276.7 342.0 276.1 345.2C275.5 348.5 274.8 351.8 274.2 355.1C273.6 358.3 273.0 361.6 272.4 364.9C271.8 368.2 271.1 371.5 270.6 374.7C270.1 378.0 269.7 381.3 269.3 384.7C268.9 388.0 268.5 392.3 268.2 394.6C268.0 396.9 267.9 397.9 267.8 398.6 M375.0 355.5C375.0 357.1 375.2 362.1 374.9 365.4C374.7 368.8 374.0 372.1 373.5 375.3C372.9 378.6 372.2 381.9 371.6 385.2C371.0 388.4 370.3 391.7 370.0 395.0C369.6 398.3 369.5 401.7 369.6 405.0C369.6 408.3 370.1 411.7 370.4 415.0C370.7 418.3 371.2 421.6 371.3 424.9C371.4 428.3 371.3 431.6 371.0 434.9C370.7 438.2 370.0 441.5 369.4 444.8C368.9 448.1 368.1 451.3 367.7 454.6C367.4 457.9 367.1 461.3 367.2 464.6C367.2 467.9 367.8 472.9 367.9 474.6 M504.4 124.1C505.8 125.0 509.9 127.9 512.7 129.6C515.6 131.4 518.5 133.0 521.4 134.6C524.3 136.2 527.4 137.5 530.2 139.4C532.9 141.3 535.3 143.6 537.7 145.9C540.1 148.3 542.1 151.0 544.4 153.3C546.8 155.7 549.4 157.8 551.8 160.2C554.1 162.5 556.7 164.6 558.8 167.2C560.8 169.8 562.4 172.8 564.1 175.7C565.7 178.6 567.1 181.6 568.6 184.6C570.1 187.6 571.7 190.5 572.9 193.7C574.0 196.8 574.4 200.1 575.3 203.3C576.2 206.6 577.2 209.7 578.1 212.9C579.0 216.2 580.2 219.3 580.7 222.6C581.2 225.9 581.1 229.2 581.1 232.6C581.0 235.9 580.4 239.2 580.2 242.5C580.1 245.9 580.4 249.2 580.4 252.5C580.3 255.9 580.0 259.2 580.2 262.5C580.4 265.8 581.1 269.9 581.5 272.1C581.9 274.3 582.5 275.3 582.6 275.9 M304.7 143.1C303.8 144.5 300.8 148.5 299.3 151.5C297.9 154.4 297.0 157.7 295.8 160.8C294.6 163.9 293.6 167.1 292.1 170.1C290.5 173.0 288.2 175.5 286.5 178.4C284.8 181.2 283.0 184.1 282.0 187.2C281.1 190.4 281.2 193.8 280.8 197.1C280.5 200.5 280.6 203.8 280.0 207.1C279.4 210.4 278.0 213.5 277.2 216.7C276.4 219.9 275.4 223.2 275.3 226.5C275.2 229.7 276.1 233.1 276.6 236.4C277.1 239.6 278.1 242.9 278.2 246.2C278.4 249.5 277.6 252.9 277.6 256.2C277.6 259.5 278.5 262.8 278.2 266.1C277.9 269.4 276.5 272.6 275.6 275.8C274.7 279.0 273.9 282.2 272.7 285.3C271.5 288.4 269.5 291.2 268.5 294.4C267.5 297.5 266.7 300.9 266.7 304.1C266.6 307.4 267.8 310.7 268.3 314.0C268.8 317.3 269.6 320.6 269.7 323.9C269.8 327.2 269.0 330.5 269.0 333.8C268.9 337.2 268.8 340.5 269.4 343.8C269.9 347.1 271.4 350.1 272.2 353.4C273.0 356.6 273.8 360.5 274.1 363.2C274.4 365.8 273.9 368.2 273.8 369.2 M496.6 302.2C496.4 303.9 496.0 308.9 495.6 312.2C495.3 315.5 495.0 318.8 494.6 322.1C494.2 325.4 493.9 328.8 493.2 332.0C492.6 335.3 491.6 338.5 490.7 341.7C489.8 344.9 488.6 348.0 487.8 351.3C486.9 354.5 486.2 357.7 485.6 361.0C485.0 364.3 484.8 367.6 484.4 370.9C483.9 374.2 483.6 377.6 482.9 380.8C482.2 384.1 481.2 387.3 480.3 390.5C479.4 393.7 478.2 396.8 477.4 400.0C476.5 403.3 475.9 406.6 475.3 409.8C474.7 413.1 474.4 416.4 473.7 419.7C473.0 422.9 471.9 426.1 471.0 429.3C470.1 432.5 468.9 435.7 468.1 438.9C467.3 442.1 466.6 446.1 466.2 448.7C465.8 451.3 465.6 453.7 465.5 454.7 M537.8 139.1C539.4 139.5 544.3 140.6 547.5 141.6C550.7 142.5 553.9 143.6 557.0 144.8C560.0 146.1 563.1 147.5 566.0 149.0C569.0 150.5 571.9 152.2 574.7 154.0C577.6 155.7 580.3 157.6 583.1 159.4C585.9 161.3 588.6 163.1 591.4 165.1C594.1 167.0 596.8 168.9 599.5 170.8C602.2 172.8 604.9 174.8 607.5 176.9C610.1 179.0 613.6 182.0 615.1 183.4C616.6 184.7 616.3 184.5 616.6 184.7 M394.1 374.8C394.1 376.5 394.0 381.5 393.9 384.8C393.8 388.2 393.6 391.5 393.4 394.8C393.3 398.2 393.1 401.5 392.9 404.8C392.8 408.1 392.7 411.5 392.6 414.8C392.5 418.1 392.5 421.5 392.5 424.8C392.4 428.1 392.3 431.5 392.2 434.8C392.0 438.1 391.9 441.5 391.7 444.8C391.5 448.1 391.3 451.5 391.2 454.8C391.1 458.1 391.0 462.1 390.9 464.8C390.8 467.4 390.8 469.8 390.8 470.8 M413.7 94.6C412.3 95.6 408.1 98.3 405.5 100.4C403.0 102.5 400.9 105.2 398.3 107.3C395.7 109.4 393.0 111.3 390.2 113.1C387.4 114.9 384.1 116.0 381.4 117.9C378.6 119.7 375.8 121.6 373.7 124.1C371.5 126.6 370.2 129.8 368.7 132.8C367.2 135.7 366.4 139.0 364.9 142.0C363.5 145.0 361.8 147.9 360.2 150.8C358.6 153.7 356.6 156.5 355.4 159.6C354.3 162.7 353.6 166.0 353.3 169.3C353.1 172.6 353.7 176.0 353.9 179.3C354.0 182.6 353.9 186.0 354.1 189.3C354.3 192.6 354.9 195.9 355.0 199.3C355.0 202.6 354.9 206.3 354.4 209.2C354.0 212.2 352.7 215.7 352.4 216.9 M390.0 372.1C389.9 373.8 389.6 378.8 389.4 382.1C389.3 385.4 389.1 388.8 388.9 392.1C388.8 395.4 388.8 398.8 388.7 402.1C388.6 405.4 388.5 408.8 388.4 412.1C388.3 415.4 388.1 418.8 387.9 422.1C387.7 425.4 387.4 428.7 387.2 432.1C387.1 435.4 386.9 439.1 386.8 442.1C386.7 445.1 386.7 448.7 386.7 450.1 M308.5 246.5C308.8 248.1 309.7 253.1 310.0 256.4C310.3 259.6 311.0 262.9 310.4 266.1C309.7 269.2 307.5 272.1 306.3 275.2C305.1 278.3 304.1 281.5 303.2 284.7C302.4 288.0 301.8 291.3 301.4 294.6C301.0 297.9 300.9 301.2 301.1 304.5C301.2 307.9 301.6 311.2 302.2 314.5C302.7 317.8 303.6 321.0 304.3 324.2C305.0 327.5 305.8 330.7 306.4 334.0C307.1 337.3 307.6 340.6 308.2 343.9C308.7 347.2 309.1 350.5 309.6 353.8C310.2 357.0 310.8 360.3 311.4 363.6C312.1 366.9 312.8 370.1 313.6 373.4C314.3 376.6 315.1 379.8 315.8 383.1C316.6 386.4 317.3 389.6 318.0 392.9C318.6 396.1 319.2 399.4 319.7 402.7C320.2 406.0 320.7 409.3 321.1 412.6C321.5 415.9 321.9 419.2 322.3 422.5C322.8 425.9 323.2 429.2 323.7 432.5C324.2 435.8 324.8 439.4 325.3 442.3C325.9 445.3 326.7 448.8 326.9 450.2 M628.4 247.2C627.9 248.8 626.6 253.7 625.9 256.9C625.1 260.1 624.0 263.2 624.0 266.4C624.0 269.6 625.6 272.9 626.1 276.2C626.7 279.5 627.1 282.8 627.3 286.1C627.6 289.4 627.7 292.8 627.7 296.1C627.7 299.4 627.5 302.8 627.2 306.1C626.9 309.4 626.4 312.7 625.8 316.0C625.1 319.3 624.2 322.5 623.4 325.7C622.6 328.9 621.7 332.5 621.0 335.4C620.3 338.3 619.4 341.9 619.1 343.2 M602.8 193.7C603.4 195.3 605.3 199.9 606.4 203.0C607.5 206.2 608.4 209.4 609.3 212.6C610.2 215.8 611.1 219.0 611.9 222.2C612.6 225.5 613.3 228.8 613.8 232.1C614.3 235.3 614.7 238.7 615.1 242.0C615.4 245.3 615.8 248.6 616.1 251.9C616.3 255.2 616.0 258.7 616.6 261.9C617.2 265.1 618.6 268.3 619.8 271.0C621.0 273.6 623.0 276.8 623.7 278.0 M396.8 118.0C398.4 118.5 403.1 120.3 406.3 121.2C409.5 122.1 412.7 123.0 416.0 123.5C419.3 124.0 422.8 123.6 426.0 124.3C429.2 124.9 432.6 125.7 435.5 127.2C438.4 128.8 440.8 131.3 443.3 133.4C445.9 135.5 448.4 137.7 450.9 139.9C453.4 142.1 456.5 144.0 458.3 146.6C460.2 149.2 461.7 152.5 462.1 155.7C462.6 158.8 461.7 162.3 461.0 165.6C460.3 168.8 459.0 171.9 457.9 175.1C456.9 178.2 455.5 182.0 454.6 184.5C453.7 187.0 453.0 189.2 452.7 190.2 M269.4 389.8C269.6 391.4 270.4 396.4 270.5 399.7C270.6 403.0 270.1 406.4 269.9 409.7C269.7 413.0 269.1 416.3 269.2 419.7C269.2 423.0 269.5 426.3 270.0 429.6C270.6 432.9 271.6 436.1 272.5 439.3C273.3 442.5 274.3 445.7 275.1 448.9C275.9 452.2 276.8 455.4 277.3 458.7C277.7 462.0 277.7 467.0 277.8 468.7 M408.1 117.5C407.0 118.7 403.5 122.3 401.3 124.8C399.2 127.4 397.2 130.1 395.2 132.7C393.1 135.3 391.1 138.0 389.1 140.7C387.1 143.3 385.1 146.0 383.2 148.7C381.4 151.5 379.5 154.3 378.1 157.3C376.6 160.3 375.4 163.4 374.6 166.6C373.8 169.9 373.4 173.2 373.3 176.5C373.2 179.9 373.6 183.2 373.9 186.5C374.1 189.8 374.7 193.1 374.9 196.5C375.2 199.8 375.3 204.1 375.3 206.5C375.4 208.8 375.4 209.8 375.4 210.5 M331.1 289.2C330.8 290.9 329.9 295.8 329.5 299.1C329.2 302.4 329.0 305.7 329.1 309.1C329.1 312.4 329.4 315.7 329.6 319.0C329.9 322.4 330.3 325.7 330.7 329.0C331.1 332.3 331.5 335.6 331.9 338.9C332.3 342.2 332.7 345.5 333.1 348.8C333.5 352.2 333.9 355.5 334.3 358.8C334.7 362.1 335.0 365.4 335.4 368.7C335.8 372.0 336.3 375.3 336.7 378.6C337.1 381.9 337.4 385.3 337.8 388.6C338.2 391.9 338.5 395.2 338.9 398.5C339.3 401.8 339.6 405.1 340.0 408.4C340.4 411.8 340.8 415.1 341.2 418.4C341.6 421.7 342.0 425.0 342.4 428.3C342.8 431.6 343.2 434.9 343.5 438.2C343.9 441.6 344.3 445.5 344.6 448.2C344.9 450.8 345.2 453.1 345.3 454.1 M648.2 256.2C648.1 257.8 647.1 262.7 647.5 265.9C647.8 269.1 649.4 272.3 650.2 275.5C651.0 278.8 651.5 282.1 652.1 285.3C652.7 288.6 653.3 291.9 653.8 295.2C654.2 298.5 654.7 301.8 654.8 305.2C654.8 308.5 654.7 311.8 654.3 315.1C653.8 318.4 652.8 321.6 652.0 324.9C651.2 328.1 649.9 332.6 649.4 334.5C648.9 336.5 649.0 336.1 648.9 336.5 M574.6 125.5C573.0 125.9 568.1 127.0 564.9 127.8C561.6 128.5 558.4 129.5 555.2 130.2C551.9 130.9 548.6 131.5 545.3 131.7C542.0 132.0 538.6 132.0 535.3 131.9C532.0 131.8 528.7 131.3 525.3 131.2C522.0 131.0 518.7 130.7 515.3 130.8C512.0 130.8 508.7 131.1 505.4 131.6C502.1 132.1 498.5 132.4 495.6 133.8C492.7 135.2 490.4 137.8 487.9 140.1C485.4 142.3 482.8 144.5 480.7 147.0C478.6 149.6 476.8 152.5 475.3 155.4C473.7 158.3 472.7 161.6 471.6 164.7C470.5 167.8 469.8 171.1 468.6 174.2C467.4 177.3 465.4 180.8 464.2 183.2C463.1 185.6 462.0 187.7 461.6 188.6 M413.3 127.8C415.0 127.9 419.9 128.2 423.3 128.5C426.6 128.7 429.9 128.9 433.2 129.3C436.5 129.7 439.9 130.1 443.1 130.6C446.4 131.2 449.7 131.9 452.9 132.8C456.1 133.6 459.3 134.6 462.4 135.9C465.5 137.1 468.5 138.6 471.4 140.2C474.4 141.7 477.4 143.2 480.1 145.2C482.8 147.1 485.3 149.4 487.5 151.8C489.7 154.3 490.7 158.3 493.3 160.0C495.9 161.6 499.9 161.1 503.1 161.9C506.4 162.6 509.6 163.4 512.8 164.4C516.0 165.3 519.2 166.3 522.3 167.5C525.4 168.7 528.5 170.0 531.5 171.4C534.5 172.8 537.5 174.3 540.4 175.9C543.4 177.5 546.3 179.2 549.0 181.0C551.7 182.9 554.4 185.0 556.9 187.2C559.4 189.4 561.7 191.8 564.0 194.2C566.2 196.7 568.4 199.2 570.4 201.9C572.5 204.5 574.5 207.2 576.3 210.0C578.1 212.7 579.8 215.6 581.4 218.6C582.9 221.5 584.3 224.6 585.5 227.7C586.8 230.7 587.8 233.9 588.9 237.1C589.9 240.2 590.9 243.4 591.8 246.6C592.7 249.8 593.6 253.1 594.4 256.3C595.2 259.5 596.0 264.2 596.6 266.0C597.2 267.9 597.8 267.2 598.1 267.4 M490.5 85.0C488.9 84.4 484.2 82.7 481.1 81.5C478.0 80.3 475.0 78.7 471.9 77.6C468.8 76.5 465.6 75.4 462.3 74.7C459.1 74.0 455.8 73.7 452.4 73.4C449.1 73.1 445.8 73.1 442.5 72.8C439.1 72.5 435.9 71.8 432.6 71.4C429.3 71.0 425.9 70.5 422.6 70.4C419.3 70.4 416.0 70.8 412.7 71.1C409.3 71.3 406.0 71.8 402.7 71.9C399.4 71.9 396.0 71.8 392.7 71.5C389.4 71.3 386.1 70.7 382.8 70.5C379.4 70.3 374.4 70.4 372.8 70.4 M433.0 143.2C431.5 143.9 426.8 145.7 424.0 147.4C421.2 149.1 418.5 151.2 416.1 153.5C413.8 155.8 411.7 158.6 409.9 161.3C408.1 164.1 406.6 167.1 405.2 170.1C403.7 173.1 402.6 176.3 401.2 179.3C399.8 182.3 398.5 185.4 396.8 188.3C395.2 191.2 393.4 194.0 391.5 196.8C389.7 199.5 387.1 203.0 385.7 204.9C384.3 206.8 383.8 207.6 383.4 208.1 M406.3 68.0C408.0 67.9 413.0 67.7 416.3 67.7C419.7 67.8 423.0 68.1 426.3 68.2C429.6 68.4 433.0 68.6 436.3 68.5C439.6 68.4 443.0 68.1 446.3 67.7C449.6 67.3 452.8 66.5 456.1 65.9C459.4 65.4 462.7 64.7 466.0 64.5C469.3 64.2 472.7 64.1 476.0 64.3C479.3 64.5 482.6 65.2 485.9 65.7C489.2 66.2 492.4 66.9 495.7 67.4C499.0 67.9 502.4 68.2 505.7 68.5C509.0 68.8 512.3 68.9 515.7 69.2C519.0 69.5 522.3 69.7 525.6 70.3C528.8 71.0 532.1 71.8 535.2 72.9C538.4 73.9 541.7 75.5 544.4 76.8C547.1 78.1 550.4 79.9 551.5 80.5 M333.1 345.7C333.3 347.3 333.8 352.3 333.8 355.6C333.8 359.0 333.6 362.3 333.2 365.6C332.7 368.9 331.8 372.1 331.0 375.4C330.3 378.6 329.2 381.8 328.6 385.1C328.0 388.3 327.8 391.7 327.3 395.0C326.7 398.3 326.1 401.5 325.4 404.8C324.7 408.0 323.6 411.2 322.9 414.5C322.3 417.7 321.6 421.0 321.3 424.3C321.0 427.6 321.2 431.7 321.3 434.3C321.4 437.0 321.7 439.3 321.8 440.3 M396.3 123.8C397.9 123.8 402.9 123.7 406.3 123.8C409.6 123.9 412.9 124.2 416.2 124.6C419.5 125.0 422.8 125.6 426.1 126.2C429.4 126.9 432.6 127.8 435.8 128.7C439.0 129.6 442.2 130.5 445.4 131.6C448.5 132.6 451.8 133.5 454.8 134.9C457.8 136.3 460.8 137.9 463.4 139.9C466.0 141.9 468.2 144.5 470.5 146.9C472.7 149.4 474.9 151.9 476.8 154.6C478.7 157.4 480.5 160.6 481.8 163.3C483.1 166.0 484.2 169.5 484.7 170.8 M406.6 65.0C408.2 65.4 413.0 67.0 416.2 67.6C419.5 68.2 422.9 68.4 426.2 68.6C429.5 68.8 432.8 68.7 436.2 68.9C439.5 69.1 442.8 69.3 446.1 69.9C449.4 70.4 452.7 71.2 455.8 72.3C459.0 73.3 462.0 74.8 465.0 76.2C468.1 77.6 471.0 79.1 474.0 80.5C477.0 82.0 480.1 83.3 483.0 84.9C485.9 86.5 488.7 88.5 491.5 90.1C494.4 91.8 497.3 93.6 500.2 95.0C503.2 96.5 506.3 97.8 509.4 99.0C512.5 100.2 515.7 101.2 518.8 102.4C521.9 103.7 525.0 104.9 527.9 106.6C530.8 108.2 534.2 110.9 536.1 112.3C537.9 113.7 538.5 114.6 539.0 115.1 M534.4 233.5C534.8 235.2 535.5 240.1 536.4 243.3C537.2 246.5 538.6 249.6 539.5 252.8C540.5 256.0 540.9 259.4 542.0 262.5C543.1 265.6 545.0 268.3 546.3 271.3C547.6 274.3 548.5 277.6 549.8 280.7C551.1 283.8 552.4 286.8 553.9 289.8C555.4 292.8 557.4 295.5 558.8 298.5C560.2 301.5 561.7 304.6 562.3 307.8C563.0 311.0 562.6 314.4 562.6 317.8C562.6 321.1 562.0 324.5 562.2 327.8C562.5 331.1 563.4 334.3 564.1 337.6C564.8 340.8 565.9 344.3 566.4 347.3C566.9 350.2 566.8 353.9 566.9 355.3 M339.9 167.0C338.8 168.3 335.5 172.1 333.4 174.7C331.3 177.3 329.2 179.8 327.4 182.6C325.5 185.4 323.8 188.3 322.4 191.3C321.0 194.3 319.9 197.4 318.7 200.6C317.6 203.7 316.7 206.9 315.5 210.0C314.3 213.1 312.9 216.2 311.5 219.2C310.0 222.2 308.3 225.0 306.8 228.0C305.4 231.0 304.0 234.1 302.8 237.2C301.5 240.2 300.3 243.4 299.4 246.6C298.6 249.8 298.3 253.2 297.9 256.4C297.4 259.7 297.8 263.1 296.8 266.1C295.8 269.2 293.6 272.0 292.0 274.9C290.5 277.9 288.9 280.8 287.7 283.9C286.4 287.0 285.6 290.2 284.6 293.4C283.7 296.6 283.0 299.9 282.1 303.1C281.2 306.3 280.2 309.5 279.2 312.7C278.2 315.9 277.1 319.0 276.1 322.2C275.2 325.4 274.2 328.6 273.5 331.8C272.8 335.1 272.3 338.4 272.0 341.7C271.8 345.0 271.9 348.4 272.0 351.7C272.1 355.1 272.5 358.4 272.5 361.7C272.6 365.0 272.7 368.4 272.4 371.7C272.0 375.0 271.4 378.3 270.7 381.6C270.0 384.8 268.8 388.3 268.0 391.2C267.2 394.1 266.2 397.6 265.9 398.9 M321.4 315.9C321.3 317.6 321.1 322.5 321.0 325.9C320.9 329.2 320.8 332.5 320.6 335.9C320.4 339.2 320.2 342.5 319.9 345.8C319.6 349.2 319.3 352.5 318.9 355.8C318.5 359.1 318.1 362.4 317.7 365.7C317.4 369.0 317.0 372.3 316.7 375.7C316.4 379.0 316.1 382.3 315.9 385.6C315.7 389.0 315.6 392.3 315.5 395.6C315.4 399.0 315.3 402.3 315.2 405.6C315.0 409.0 314.9 412.3 314.7 415.6C314.5 418.9 314.1 422.3 313.8 425.6C313.5 428.9 313.1 432.2 312.9 435.5C312.6 438.9 312.4 442.2 312.3 445.5C312.1 448.8 312.0 452.2 311.9 455.5C311.8 458.8 311.7 462.5 311.5 465.5C311.4 468.5 311.2 472.2 311.1 473.5 M600.9 197.7C601.3 199.4 602.2 204.3 603.3 207.4C604.3 210.6 606.0 213.5 607.1 216.7C608.2 219.8 609.5 222.9 610.0 226.2C610.5 229.5 610.0 232.9 610.0 236.2C610.1 239.5 609.9 242.9 610.3 246.2C610.7 249.5 611.6 252.7 612.2 256.0C612.8 259.2 612.9 262.5 613.8 265.7C614.7 268.8 616.2 271.9 617.6 274.9C618.9 278.0 620.3 281.0 621.8 283.9C623.4 286.9 625.5 289.6 626.6 292.7C627.8 295.8 628.4 299.1 628.7 302.4C629.0 305.7 628.4 309.1 628.4 312.4C628.5 315.8 629.1 319.1 629.0 322.4C628.8 325.7 628.0 329.0 627.7 332.3C627.3 335.6 627.0 340.3 626.8 342.3C626.7 344.2 627.0 343.9 627.0 344.2 M540.0 237.9C540.0 239.5 539.7 244.5 539.8 247.9C540.0 251.2 540.0 254.6 540.7 257.8C541.4 261.0 542.6 263.9 543.8 266.9C545.1 270.0 547.1 272.8 548.2 275.9C549.3 279.0 549.8 282.4 550.6 285.6C551.3 288.9 552.4 292.1 552.9 295.3C553.4 298.6 553.3 302.0 553.4 305.3C553.5 308.6 553.3 312.0 553.4 315.3C553.5 318.6 554.0 322.0 554.2 325.3C554.4 328.6 554.8 331.9 554.7 335.3C554.6 338.6 553.7 343.2 553.4 345.2C553.1 347.1 553.0 346.8 553.0 347.1 M535.6 148.3C533.9 148.2 528.9 148.1 525.6 147.7C522.3 147.4 519.0 146.7 515.7 146.0C512.5 145.3 509.4 144.1 506.1 143.4C502.8 142.7 499.3 141.3 496.2 141.9C493.2 142.6 490.6 145.5 487.8 147.3C485.0 149.1 482.1 150.9 479.4 152.8C476.7 154.7 474.0 156.6 471.3 158.6C468.7 160.7 466.1 162.7 463.7 165.0C461.2 167.3 459.0 169.8 456.7 172.2C454.4 174.6 451.9 176.9 449.9 179.5C447.9 182.2 445.8 186.0 444.6 188.0C443.4 190.0 443.2 191.0 442.9 191.6 M375.3 104.2C373.7 104.9 369.1 106.7 366.1 108.2C363.1 109.7 360.1 111.3 357.4 113.2C354.7 115.1 352.1 117.3 349.8 119.7C347.5 122.1 345.5 124.8 343.6 127.5C341.6 130.2 339.8 133.0 338.2 135.9C336.5 138.8 335.1 141.8 333.6 144.8C332.0 147.7 330.5 150.7 328.9 153.6C327.3 156.5 325.3 159.6 323.8 162.2C322.3 164.8 320.6 168.0 319.9 169.2 M423.6 65.7C425.3 65.9 430.2 66.6 433.6 66.9C436.9 67.2 440.2 67.4 443.5 67.5C446.9 67.6 450.2 67.4 453.5 67.4C456.9 67.4 460.2 67.2 463.5 67.5C466.9 67.7 470.2 68.1 473.5 68.7C476.7 69.3 480.0 70.2 483.2 71.1C486.4 72.0 489.5 73.0 492.7 74.0C495.9 75.0 499.1 75.9 502.3 76.8C505.5 77.7 508.8 78.5 512.0 79.4C515.2 80.2 518.5 81.0 521.6 82.1C524.7 83.2 527.9 84.4 530.9 85.9C533.9 87.3 536.7 89.0 539.6 90.7C542.4 92.5 545.2 94.4 548.0 96.2C550.8 98.0 553.6 99.8 556.4 101.6C559.2 103.4 562.1 105.0 564.9 106.8C567.8 108.5 570.7 110.2 573.4 112.1C576.1 114.0 580.0 117.2 581.3 118.2 M396.0 376.6C395.7 378.2 394.6 383.1 394.0 386.4C393.5 389.7 393.0 393.0 392.8 396.3C392.5 399.6 392.8 403.0 392.6 406.3C392.4 409.6 392.1 413.0 391.6 416.3C391.1 419.6 390.2 422.8 389.7 426.1C389.1 429.4 388.6 432.7 388.3 436.0C388.1 439.3 388.2 442.6 388.2 446.0C388.2 449.3 388.4 452.7 388.2 456.0C388.0 459.3 387.3 464.3 387.1 465.9 M422.5 392.0C422.7 393.7 423.1 398.7 423.3 402.0C423.5 405.3 423.8 408.7 423.9 412.0C424.0 415.3 424.1 418.7 424.1 422.0C424.1 425.3 424.0 428.7 423.9 432.0C423.8 435.3 423.7 438.7 423.5 442.0C423.4 445.3 423.3 448.7 423.2 452.0C423.1 455.3 423.1 459.7 423.2 462.0C423.2 464.3 423.2 465.3 423.3 466.0 M411.3 98.6C413.0 98.6 418.0 98.4 421.3 98.5C424.7 98.6 428.0 99.2 431.3 99.2C434.6 99.3 438.0 99.3 441.3 99.1C444.6 98.8 447.9 98.2 451.2 97.9C454.6 97.7 457.9 97.5 461.2 97.6C464.5 97.8 467.8 98.5 471.1 98.9C474.4 99.4 477.7 100.0 481.0 100.4C484.3 100.7 487.7 100.8 491.0 101.1C494.3 101.5 497.7 101.6 500.9 102.3C504.2 103.0 507.3 104.1 510.5 105.2C513.6 106.3 516.6 107.8 519.7 109.0C522.8 110.2 526.0 111.3 529.1 112.4C532.3 113.4 535.6 114.3 538.6 115.6C541.7 116.9 544.7 118.4 547.5 120.1C550.3 121.8 552.9 124.0 555.6 125.9C558.4 127.8 562.5 130.6 563.9 131.6 M522.0 281.8C522.6 283.4 525.0 287.8 525.9 290.9C526.8 294.1 526.7 297.6 527.3 300.8C527.8 304.1 528.4 307.4 529.1 310.7C529.9 313.9 531.2 317.0 531.7 320.3C532.3 323.6 532.7 326.9 532.6 330.2C532.6 333.6 531.7 336.9 531.5 340.2C531.2 343.5 531.0 346.9 531.4 350.1C531.7 353.4 532.9 356.6 533.5 359.9C534.1 363.2 534.3 366.5 534.9 369.8C535.5 373.1 536.6 377.9 537.0 379.6 M554.7 152.9C555.9 154.1 559.8 157.2 561.9 159.8C564.0 162.3 565.5 165.4 567.4 168.1C569.3 170.8 571.2 173.6 573.3 176.2C575.5 178.7 578.1 180.8 580.4 183.2C582.7 185.6 585.2 187.9 587.0 190.7C588.8 193.5 590.1 196.7 591.0 199.8C591.9 203.0 592.0 206.4 592.6 209.7C593.2 213.0 593.7 216.3 594.6 219.5C595.5 222.7 596.9 225.7 598.0 228.9C599.1 232.0 600.3 235.1 601.3 238.3C602.3 241.5 603.5 244.7 603.9 247.9C604.4 251.2 604.2 254.6 604.1 257.9C604.0 261.2 602.8 264.5 603.4 267.6C604.0 270.7 606.2 273.7 607.8 276.6C609.5 279.4 611.6 282.0 613.4 284.9C615.2 287.7 617.2 290.4 618.4 293.5C619.6 296.5 620.3 299.9 620.6 303.2C620.8 306.5 620.2 309.8 620.0 313.2C619.8 316.5 619.6 321.2 619.5 323.1C619.4 325.1 619.6 324.8 619.6 325.1 M373.7 354.8C373.8 356.5 374.2 361.4 374.7 364.7C375.1 368.0 375.7 371.3 376.2 374.6C376.8 377.9 377.4 381.2 377.9 384.5C378.4 387.8 379.0 391.1 379.4 394.4C379.8 397.7 380.0 401.0 380.3 404.3C380.5 407.6 380.6 411.0 380.8 414.3C381.0 417.6 381.3 421.0 381.7 424.3C382.1 427.6 382.7 430.9 383.2 434.2C383.7 437.4 384.4 441.4 384.8 444.0C385.2 446.7 385.4 449.0 385.5 450.0 M330.0 310.0C329.9 311.7 329.6 316.7 329.5 320.0C329.4 323.3 329.4 326.7 329.4 330.0C329.4 333.3 329.4 336.7 329.4 340.0C329.4 343.3 329.5 346.7 329.5 350.0C329.5 353.3 329.5 356.7 329.5 360.0C329.5 363.3 329.4 366.7 329.4 370.0C329.4 373.3 329.4 376.7 329.4 380.0C329.4 383.3 329.5 386.7 329.5 390.0C329.5 393.3 329.6 396.7 329.6 400.0C329.6 403.3 329.5 406.7 329.5 410.0C329.4 413.3 329.4 416.7 329.4 420.0C329.4 423.3 329.5 426.7 329.5 430.0C329.5 433.3 329.6 436.7 329.6 440.0C329.6 443.3 329.6 446.7 329.6 450.0C329.5 453.3 329.5 456.7 329.5 460.0C329.5 463.3 329.5 467.3 329.5 470.0C329.5 472.7 329.6 475.0 329.6 476.0 M486.7 69.8C485.1 69.4 480.3 67.9 477.1 67.0C473.9 66.1 470.7 65.3 467.5 64.5C464.2 63.7 460.9 63.1 457.7 62.3C454.5 61.6 451.2 60.8 448.0 60.0C444.7 59.2 441.5 58.3 438.2 57.7C435.0 57.0 431.7 56.5 428.4 56.1C425.1 55.7 421.7 55.6 418.4 55.3C415.1 55.1 411.7 54.9 408.4 54.7C405.1 54.5 401.8 54.1 398.4 54.0C395.1 53.9 391.8 53.9 388.4 54.1C385.1 54.2 381.8 54.6 378.5 54.9C375.2 55.2 371.8 55.5 368.5 55.9C365.2 56.3 361.9 56.8 358.6 57.4C355.4 57.9 351.1 58.8 348.8 59.2C346.5 59.6 345.5 59.8 344.9 59.9 M366.2 387.1C365.7 388.7 364.2 393.4 363.2 396.6C362.3 399.8 361.4 403.0 360.6 406.3C359.9 409.5 359.5 412.8 358.8 416.1C358.2 419.4 357.4 422.6 356.5 425.8C355.7 429.0 354.4 432.2 353.5 435.4C352.6 438.6 351.8 441.8 351.1 445.1C350.4 448.3 350.0 451.6 349.3 454.9C348.6 458.2 347.7 461.4 347.0 464.6C346.4 467.9 345.6 472.5 345.2 474.5C344.9 476.4 344.9 476.1 344.9 476.4 M343.0 309.3C343.3 310.9 344.2 315.8 344.8 319.1C345.4 322.4 346.2 325.6 346.7 328.9C347.2 332.2 347.3 335.6 347.7 338.9C348.1 342.2 348.5 345.5 349.1 348.8C349.7 352.0 350.6 355.3 351.3 358.5C352.0 361.8 352.9 365.0 353.4 368.3C353.9 371.6 354.1 374.9 354.5 378.2C354.9 381.5 355.2 384.9 355.7 388.2C356.3 391.4 357.1 394.7 357.8 397.9C358.6 401.2 359.5 404.4 360.1 407.7C360.6 411.0 361.0 414.3 361.4 417.6C361.8 420.9 362.0 424.2 362.4 427.5C362.8 430.8 363.3 434.1 363.7 437.4C364.1 440.8 364.3 444.1 364.8 447.4C365.3 450.7 366.0 453.9 366.7 457.2C367.4 460.5 368.4 464.0 369.0 466.9C369.6 469.9 370.1 473.5 370.3 474.8 M502.5 49.4C500.8 49.1 495.9 48.3 492.6 47.8C489.3 47.3 486.0 46.9 482.7 46.5C479.4 46.1 476.1 45.8 472.8 45.4C469.4 45.0 466.1 44.7 462.8 44.3C459.5 44.0 456.2 43.5 452.9 43.1C449.6 42.8 446.3 42.3 443.0 42.0C439.6 41.6 436.3 41.3 433.0 41.1C429.7 40.8 426.3 40.6 423.0 40.5C419.7 40.4 415.7 40.3 413.0 40.3C410.4 40.3 408.0 40.3 407.0 40.3 M468.4 390.6C468.1 392.2 467.0 397.1 466.4 400.4C465.8 403.6 465.4 406.9 464.7 410.2C464.1 413.5 463.4 416.8 462.6 420.0C461.9 423.2 460.9 426.4 460.1 429.7C459.3 432.9 458.5 436.2 457.9 439.4C457.2 442.7 456.6 446.3 456.1 449.3C455.6 452.2 455.0 455.8 454.8 457.2 M450.6 124.5C448.9 124.5 443.9 124.5 440.6 124.6C437.2 124.6 433.9 124.7 430.6 125.0C427.3 125.2 423.9 125.4 420.6 125.9C417.4 126.4 414.1 127.2 410.9 128.1C407.7 128.9 404.5 130.0 401.3 131.1C398.2 132.2 395.1 133.3 392.0 134.7C389.0 136.1 386.1 137.7 383.2 139.5C380.4 141.2 377.8 143.3 375.1 145.3C372.5 147.4 370.0 149.5 367.5 151.8C365.0 154.0 362.6 156.3 360.3 158.7C358.0 161.2 355.8 163.7 353.8 166.3C351.8 168.9 350.0 171.8 348.1 174.5C346.3 177.3 344.6 180.2 342.8 183.0C341.0 185.8 339.1 188.6 337.3 191.4C335.6 194.2 333.8 197.1 332.1 199.9C330.4 202.8 328.8 205.7 327.0 208.5C325.3 211.4 323.4 214.1 321.6 216.9C319.9 219.8 317.7 222.4 316.3 225.4C314.9 228.4 313.7 233.0 313.1 234.9C312.4 236.7 312.6 236.4 312.5 236.8 M411.3 119.5C413.0 119.6 418.0 119.9 421.3 120.0C424.6 120.1 428.0 120.0 431.3 120.1C434.6 120.3 438.0 120.4 441.3 120.9C444.6 121.3 447.9 121.9 451.0 122.9C454.2 123.8 457.4 124.9 460.4 126.4C463.4 127.8 466.2 129.6 469.0 131.4C471.9 133.1 474.7 134.9 477.4 136.9C480.0 138.9 482.6 141.1 484.9 143.5C487.1 145.9 489.2 148.7 490.7 151.6C492.3 154.5 492.7 158.2 494.0 161.0C495.4 163.8 496.6 166.5 498.9 168.5C501.2 170.4 505.0 171.1 507.9 172.7C510.9 174.3 513.8 176.0 516.4 178.0C519.1 180.0 521.6 182.2 523.9 184.7C526.1 187.1 528.0 189.9 529.8 192.7C531.6 195.5 533.2 198.4 534.7 201.4C536.3 204.3 537.7 207.3 539.1 210.4C540.5 213.4 541.9 216.4 543.1 219.5C544.3 222.6 545.5 226.5 546.2 229.0C546.8 231.6 547.1 234.0 547.2 234.9 M513.0 119.1C511.4 119.3 506.4 119.8 503.1 119.9C499.8 120.1 496.4 119.9 493.1 119.9C489.7 119.9 486.4 119.7 483.1 119.8C479.8 120.0 476.4 120.3 473.1 120.7C469.8 121.1 466.6 121.8 463.3 122.4C460.0 122.9 456.7 123.4 453.4 123.8C450.1 124.3 446.7 124.6 443.5 125.1C440.2 125.7 436.9 126.3 433.7 127.3C430.6 128.4 427.5 129.7 424.6 131.4C421.7 133.0 419.0 135.1 416.4 137.1C413.7 139.1 411.2 141.3 408.7 143.5C406.2 145.7 403.6 147.8 401.3 150.2C399.1 152.7 397.0 155.3 395.2 158.1C393.4 160.9 392.1 164.0 390.7 167.0C389.4 170.1 388.3 173.2 387.0 176.3C385.7 179.4 384.5 182.5 383.2 185.6C381.9 188.6 380.5 191.7 379.3 194.8C378.2 197.9 377.0 201.7 376.2 204.3C375.4 206.8 374.9 209.1 374.7 210.1 M508.4 64.9C510.0 65.3 514.9 66.3 518.1 67.4C521.2 68.4 524.3 69.7 527.3 71.2C530.2 72.7 533.1 74.5 535.8 76.4C538.5 78.3 541.1 80.4 543.7 82.5C546.3 84.6 548.8 86.8 551.4 88.9C554.0 91.0 556.7 92.9 559.3 95.1C561.8 97.2 564.3 99.4 566.7 101.8C569.0 104.1 571.2 106.7 573.4 109.2C575.6 111.7 578.1 114.8 579.8 116.8C581.6 118.8 583.2 120.5 583.9 121.3 M625.1 203.8C625.5 205.4 626.8 210.2 627.4 213.5C628.0 216.8 628.5 220.1 628.8 223.4C629.2 226.7 629.4 230.0 629.7 233.3C629.9 236.7 630.1 240.0 630.2 243.3C630.3 246.7 630.4 250.0 630.3 253.3C630.3 256.7 629.2 260.2 629.9 263.3C630.7 266.4 633.3 269.1 634.9 272.0C636.4 275.0 637.9 278.0 639.1 281.1C640.4 284.1 641.5 287.3 642.4 290.5C643.3 293.7 644.1 297.0 644.7 300.2C645.3 303.5 645.8 306.8 646.0 310.1C646.3 313.5 646.4 316.8 646.3 320.1C646.3 323.5 646.0 327.1 645.8 330.1C645.6 333.1 645.4 336.8 645.3 338.1 M409.0 386.7C408.9 388.4 408.7 393.4 408.3 396.7C407.9 400.0 407.3 403.3 406.7 406.6C406.2 409.9 405.5 413.1 405.2 416.4C404.8 419.8 404.6 423.1 404.5 426.4C404.4 429.8 404.5 433.1 404.4 436.4C404.4 439.8 404.4 443.1 404.2 446.4C403.9 449.7 403.6 453.1 403.1 456.4C402.6 459.6 401.6 463.9 401.2 466.2C400.7 468.5 400.4 469.4 400.3 470.1 M328.1 121.4C326.8 122.5 322.8 125.6 320.5 127.9C318.1 130.3 316.0 132.9 314.0 135.5C312.1 138.2 310.4 141.1 308.7 144.0C307.0 146.9 305.5 149.9 303.8 152.7C302.0 155.5 300.2 158.3 298.2 161.0C296.3 163.7 294.1 166.2 292.3 169.0C290.4 171.8 288.8 174.7 287.3 177.7C285.8 180.7 284.6 183.8 283.4 186.9C282.1 190.0 281.0 193.1 279.9 196.2C278.7 199.4 277.5 202.5 276.7 205.7C275.8 208.9 275.3 212.2 274.8 215.5C274.2 218.8 273.8 222.1 273.3 225.4C272.8 228.7 272.3 232.0 271.8 235.3C271.3 238.6 270.7 241.9 270.4 245.2C270.1 248.5 269.9 251.9 269.9 255.2C269.9 258.5 271.2 262.1 270.4 265.2C269.7 268.3 267.1 270.9 265.4 273.8C263.8 276.7 261.7 280.5 260.6 282.6C259.5 284.6 259.1 285.6 258.8 286.2" stroke="#5b636e" stroke-width="0.9" opacity="0.5"/>
<path d="M544.3 143.9C545.6 144.8 549.8 147.6 552.4 149.7C555.0 151.7 557.6 153.9 560.1 156.1C562.6 158.3 565.0 160.6 567.3 163.0C569.7 165.3 571.9 167.8 574.1 170.3C576.4 172.8 578.5 175.3 580.6 178.0C582.6 180.6 584.6 183.3 586.4 186.1C588.2 188.9 589.8 191.8 591.3 194.8C592.8 197.8 594.1 200.8 595.3 203.9C596.5 207.1 597.5 210.2 598.5 213.4C599.4 216.6 600.2 219.9 601.0 223.1C601.7 226.3 602.4 229.6 603.0 232.9C603.5 236.2 604.0 239.5 604.4 242.8C604.8 246.1 605.1 249.4 605.3 252.8C605.5 256.1 605.1 259.6 605.7 262.8C606.3 265.9 607.6 268.8 608.9 271.8C610.3 274.8 612.3 277.6 613.7 280.6C615.2 283.5 616.9 287.9 617.7 289.7C618.5 291.6 618.3 291.3 618.4 291.6 M322.0 314.4C322.3 316.0 323.4 320.9 323.7 324.2C324.0 327.5 324.0 330.9 323.9 334.2C323.8 337.5 323.0 340.9 323.1 344.2C323.2 347.5 323.9 350.8 324.4 354.1C324.8 357.4 325.6 360.7 325.7 364.0C325.8 367.3 325.1 370.6 325.0 373.9C324.8 377.3 324.7 380.6 325.1 383.9C325.4 387.2 326.5 390.4 326.9 393.7C327.2 397.0 327.2 400.4 327.1 403.7C327.0 407.0 326.2 410.4 326.3 413.7C326.4 417.0 327.1 420.3 327.5 423.6C328.0 426.9 328.4 430.2 328.9 433.5C329.3 436.8 329.8 440.1 330.2 443.4C330.7 446.7 331.4 450.0 331.5 453.3C331.6 456.6 330.8 459.9 330.7 463.2C330.6 466.6 330.8 471.2 330.9 473.2C331.0 475.2 331.2 474.8 331.2 475.2 M349.7 327.6C350.4 329.1 352.3 333.8 353.7 336.8C355.1 339.8 356.7 342.8 358.0 345.8C359.2 348.9 360.4 352.1 361.2 355.3C362.1 358.5 362.5 361.8 363.1 365.1C363.7 368.4 364.0 371.7 364.7 375.0C365.4 378.2 366.3 381.5 367.4 384.6C368.5 387.7 370.0 390.7 371.4 393.8C372.7 396.8 374.2 399.8 375.3 402.9C376.4 406.1 377.3 409.3 378.0 412.6C378.7 415.8 379.0 419.2 379.6 422.4C380.2 425.7 380.6 429.0 381.5 432.2C382.3 435.5 383.5 438.6 384.7 441.7C386.0 444.8 387.6 447.7 389.0 450.7C390.4 453.8 392.3 458.4 393.0 459.9 M537.6 187.0C538.9 188.1 542.9 191.2 545.3 193.5C547.7 195.8 550.0 198.2 552.2 200.7C554.3 203.3 556.3 205.9 558.2 208.7C560.1 211.4 561.8 214.3 563.5 217.2C565.1 220.1 566.5 223.1 567.8 226.2C569.2 229.2 570.4 232.3 571.5 235.5C572.6 238.6 573.5 241.8 574.4 245.0C575.3 248.3 576.0 251.5 576.8 254.8C577.5 258.0 577.4 261.6 578.7 264.6C580.0 267.5 582.5 269.8 584.5 272.4C586.5 275.0 588.8 277.5 590.7 280.2C592.7 282.9 594.5 285.7 596.3 288.5C598.0 291.4 599.5 294.3 601.0 297.4C602.4 300.4 603.7 303.5 604.8 306.6C605.9 309.7 606.8 312.9 607.6 316.2C608.4 319.4 608.9 322.7 609.5 326.0C610.2 329.3 611.0 333.9 611.3 335.8C611.7 337.8 611.6 337.5 611.7 337.8 M299.1 250.4C298.8 252.1 298.6 257.3 297.5 260.3C296.4 263.3 294.2 265.7 292.5 268.5C290.9 271.3 288.8 274.1 287.5 277.1C286.2 280.2 285.7 283.5 284.7 286.7C283.7 289.9 282.7 293.1 281.6 296.2C280.4 299.3 278.7 302.3 277.7 305.5C276.7 308.6 275.8 311.9 275.5 315.2C275.3 318.5 276.0 321.8 276.3 325.1C276.6 328.4 277.2 331.8 277.2 335.1C277.2 338.4 276.5 341.7 276.3 345.0C276.1 348.3 276.0 351.7 276.1 355.0C276.3 358.3 277.2 361.6 277.4 364.9C277.6 368.2 277.7 371.6 277.5 374.9C277.2 378.2 276.2 381.4 275.6 384.7C275.1 388.0 274.4 391.3 274.3 394.6C274.2 397.9 274.7 401.3 275.0 404.6C275.3 407.9 276.0 411.2 276.0 414.5C276.1 417.8 275.6 421.2 275.2 424.5C274.7 427.8 273.6 431.6 273.2 434.3C272.8 436.9 272.7 439.2 272.6 440.2 M546.1 75.3C544.5 75.6 539.6 76.5 536.3 77.0C533.0 77.5 529.7 78.1 526.4 78.3C523.1 78.5 519.7 78.3 516.4 78.4C513.0 78.5 509.7 78.6 506.4 79.0C503.1 79.4 499.9 80.3 496.6 80.8C493.3 81.3 490.0 81.7 486.6 81.9C483.3 82.1 480.0 81.8 476.6 81.9C473.3 82.0 470.0 82.5 466.7 82.6C463.3 82.7 460.0 82.5 456.7 82.7C453.3 82.8 450.0 83.0 446.7 83.6C443.4 84.1 440.3 85.2 437.0 86.0C433.8 86.7 430.5 87.4 427.2 88.0C423.9 88.6 420.6 88.8 417.4 89.6C414.1 90.4 411.0 91.5 407.9 92.8C404.8 94.0 401.9 95.7 398.8 97.0C395.8 98.4 392.7 99.5 389.6 100.8C386.5 102.0 383.2 103.0 380.3 104.5C377.3 106.0 374.5 107.8 371.8 109.7C369.0 111.6 365.7 114.3 363.8 115.7C361.9 117.1 361.0 117.6 360.5 117.9 M373.1 352.6C373.0 354.3 372.5 359.3 372.6 362.6C372.6 365.9 372.8 369.3 373.3 372.6C373.7 375.9 374.6 379.1 375.3 382.3C376.0 385.6 376.9 388.8 377.7 392.1C378.4 395.3 379.3 398.5 379.9 401.8C380.4 405.1 380.8 408.4 380.9 411.8C381.0 415.1 380.7 418.4 380.5 421.7C380.3 425.1 379.8 428.4 379.8 431.7C379.7 435.0 379.8 438.4 380.2 441.7C380.5 445.0 381.3 448.3 382.0 451.5C382.7 454.8 383.9 459.3 384.3 461.3C384.8 463.2 384.6 462.9 384.7 463.2 M355.2 92.7C354.0 93.9 350.4 97.3 348.0 99.6C345.7 102.0 343.5 104.5 341.2 107.0C338.9 109.4 336.7 111.9 334.4 114.2C332.0 116.6 329.6 118.9 327.2 121.2C324.8 123.6 322.3 125.8 320.1 128.3C318.0 130.8 315.9 133.5 314.2 136.3C312.4 139.1 311.0 142.2 309.8 145.3C308.6 148.4 307.7 151.6 306.8 154.8C306.0 158.0 305.1 162.6 304.6 164.6C304.2 166.5 304.3 166.2 304.2 166.5 M402.3 128.1C403.9 128.4 408.9 129.0 412.2 129.6C415.5 130.2 418.7 130.8 422.0 131.6C425.2 132.5 428.4 133.4 431.5 134.6C434.6 135.8 437.7 137.1 440.6 138.7C443.5 140.4 446.4 142.2 448.9 144.2C451.5 146.3 454.0 148.7 456.0 151.3C458.0 153.9 459.8 156.9 461.0 159.9C462.1 163.0 462.8 166.4 463.0 169.7C463.2 173.0 462.6 176.7 462.2 179.6C461.7 182.6 460.6 186.1 460.3 187.4 M490.1 123.3C491.5 124.3 495.4 127.4 498.2 129.1C501.0 130.9 504.0 132.4 507.0 133.9C510.0 135.4 513.1 136.7 516.1 138.1C519.1 139.6 522.1 140.9 525.0 142.6C527.9 144.3 530.5 146.4 533.2 148.3C536.0 150.2 538.8 152.0 541.5 154.0C544.2 155.9 546.9 157.9 549.3 160.2C551.7 162.5 553.9 165.1 555.8 167.8C557.7 170.5 559.7 174.8 560.7 176.5C561.6 178.3 561.4 178.0 561.5 178.3 M452.7 55.9C451.0 55.8 446.0 55.5 442.7 55.5C439.4 55.4 436.0 55.4 432.7 55.5C429.4 55.5 426.0 55.7 422.7 55.9C419.4 56.2 416.1 56.6 412.8 57.0C409.5 57.4 406.2 58.0 402.9 58.5C399.6 59.1 396.3 59.7 393.1 60.4C389.8 61.1 386.6 61.8 383.3 62.6C380.1 63.4 376.9 64.3 373.7 65.2C370.5 66.2 367.3 67.2 364.2 68.3C361.0 69.4 357.9 70.6 354.8 71.8C351.7 73.0 348.6 74.3 345.5 75.6C342.5 76.9 339.4 78.3 336.4 79.7C333.4 81.1 329.3 83.3 327.5 84.2C325.7 85.1 326.0 85.0 325.7 85.1 M367.7 128.3C366.1 128.8 361.3 130.4 358.3 131.7C355.2 133.0 352.1 134.4 349.3 136.1C346.5 137.9 343.8 139.9 341.4 142.1C338.9 144.4 336.8 147.0 334.8 149.6C332.8 152.3 331.1 155.2 329.3 158.0C327.5 160.8 325.9 163.8 324.2 166.6C322.4 169.4 320.6 172.2 318.7 174.9C316.7 177.7 314.6 180.2 312.6 182.9C310.5 185.5 308.4 188.1 306.5 190.8C304.6 193.6 302.8 196.4 301.3 199.4C299.8 202.3 298.5 205.4 297.3 208.5C296.2 211.6 295.4 214.9 294.4 218.1C293.4 221.3 292.6 224.5 291.6 227.7C290.6 230.8 289.5 234.0 288.3 237.1C287.1 240.2 285.8 243.3 284.6 246.4C283.4 249.5 281.6 254.2 281.0 255.7 M387.1 370.8C387.1 372.4 387.0 377.5 387.2 380.8C387.4 384.1 387.9 387.4 388.3 390.7C388.8 394.0 389.4 397.3 389.8 400.6C390.1 403.9 390.4 407.2 390.4 410.6C390.5 413.9 390.2 417.2 389.9 420.6C389.7 423.9 389.1 427.2 388.8 430.5C388.5 433.8 388.2 437.1 388.2 440.5C388.2 443.8 388.5 447.1 388.8 450.4C389.1 453.8 389.8 457.0 390.1 460.4C390.5 463.7 390.8 468.7 390.9 470.3 M563.7 145.2C564.9 146.3 568.8 149.5 571.0 152.0C573.2 154.4 575.0 157.3 576.9 160.0C578.8 162.7 580.5 165.6 582.5 168.3C584.5 170.9 586.7 173.5 588.8 176.0C591.0 178.5 593.5 180.8 595.6 183.4C597.7 185.9 599.9 188.5 601.6 191.4C603.2 194.2 604.6 197.4 605.5 200.5C606.5 203.7 606.9 207.1 607.4 210.4C607.9 213.6 608.0 217.0 608.5 220.3C609.0 223.6 609.6 226.9 610.4 230.1C611.2 233.4 612.2 236.5 613.1 239.7C613.9 243.0 614.8 246.2 615.3 249.5C615.7 252.8 615.2 256.3 615.8 259.5C616.4 262.6 617.2 265.7 618.8 268.4C620.4 271.2 623.4 273.3 625.3 276.0C627.3 278.7 629.3 281.4 630.6 284.4C632.0 287.4 632.9 290.7 633.6 294.0C634.2 297.2 634.3 300.6 634.5 303.9C634.7 307.3 634.6 310.6 634.8 313.9C635.0 317.2 635.3 320.6 635.7 323.9C636.2 327.2 636.9 330.4 637.4 333.7C637.9 337.0 638.4 341.7 638.6 343.7C638.8 345.6 638.6 345.3 638.6 345.7 M520.5 120.7C518.9 121.0 514.0 122.0 510.8 122.8C507.5 123.5 504.2 124.2 501.0 125.1C497.8 125.9 494.6 126.7 491.4 127.7C488.3 128.8 485.2 130.1 482.1 131.4C479.0 132.7 476.0 134.1 473.0 135.4C469.9 136.8 466.8 138.1 463.9 139.6C461.0 141.2 458.1 142.9 455.4 144.8C452.6 146.8 450.1 148.9 447.6 151.1C445.1 153.3 442.7 155.6 440.5 158.1C438.3 160.6 436.2 163.3 434.5 166.1C432.7 168.9 431.3 172.0 430.1 175.1C429.0 178.2 428.4 181.6 427.8 184.8C427.1 188.1 426.4 193.0 426.2 194.7 M446.0 96.5C447.6 96.7 452.6 97.4 455.9 97.9C459.2 98.5 462.5 99.1 465.7 99.9C468.9 100.6 472.2 101.5 475.3 102.5C478.5 103.4 481.7 104.5 484.9 105.5C488.0 106.6 491.2 107.7 494.3 109.0C497.4 110.2 500.4 111.5 503.4 113.0C506.4 114.4 509.4 116.0 512.3 117.6C515.2 119.3 518.0 121.0 520.8 122.8C523.7 124.6 526.4 126.4 529.2 128.3C531.9 130.2 534.6 132.2 537.2 134.2C539.9 136.3 542.4 138.4 544.9 140.6C547.4 142.9 549.8 145.2 552.1 147.6C554.4 150.0 556.6 152.5 558.7 155.1C560.9 157.6 563.2 160.5 565.0 162.8C566.9 165.2 569.0 168.2 569.7 169.3 M389.6 86.6C388.1 87.2 383.2 88.7 380.3 90.2C377.4 91.8 374.7 93.8 372.2 96.0C369.8 98.2 367.8 101.0 365.5 103.4C363.3 105.9 361.3 108.6 358.8 110.9C356.4 113.1 353.7 115.1 351.0 117.1C348.4 119.1 345.3 120.6 342.8 122.8C340.3 124.9 337.8 127.3 336.0 130.0C334.2 132.8 333.0 136.0 331.9 139.1C330.9 142.3 330.3 145.6 329.6 148.9C328.8 152.1 327.8 155.3 327.3 158.6C326.8 161.9 326.8 165.2 326.5 168.5C326.1 171.8 325.8 175.2 325.1 178.4C324.3 181.7 323.1 184.8 321.9 187.9C320.8 191.0 319.2 194.0 318.2 197.2C317.3 200.4 316.5 203.7 316.1 206.9C315.7 210.2 316.0 213.6 316.0 216.9C315.9 220.3 315.8 223.6 315.8 226.9C315.8 230.3 316.0 233.9 315.9 236.9C315.7 239.9 315.2 243.5 315.0 244.9 M398.4 120.8C396.9 121.5 392.2 123.2 389.1 124.5C386.0 125.8 382.8 127.0 380.1 128.8C377.3 130.6 375.0 133.1 372.6 135.4C370.3 137.8 368.3 140.5 366.0 142.9C363.7 145.3 361.1 147.5 359.0 150.0C356.8 152.5 354.7 155.1 353.0 158.0C351.4 160.9 350.4 164.1 349.1 167.2C347.7 170.2 346.4 173.3 344.9 176.3C343.5 179.3 341.4 182.7 340.2 185.1C339.0 187.5 338.3 189.7 337.9 190.6 M553.8 197.6C554.2 199.2 555.5 204.0 556.4 207.2C557.3 210.5 558.1 213.7 559.0 216.9C559.9 220.1 560.9 223.3 561.8 226.5C562.6 229.7 563.5 233.0 564.0 236.2C564.5 239.5 564.8 242.9 564.8 246.2C564.7 249.5 564.0 252.9 563.7 256.1C563.3 259.4 562.2 262.6 562.6 265.8C562.9 269.0 564.8 272.1 565.9 275.2C567.0 278.4 568.4 281.4 569.3 284.6C570.2 287.8 571.1 291.1 571.4 294.4C571.8 297.7 571.7 301.0 571.5 304.3C571.4 307.7 570.9 311.0 570.5 314.3C570.2 317.6 569.7 320.9 569.5 324.2C569.4 327.6 569.4 330.9 569.5 334.2C569.5 337.6 569.7 341.2 569.7 344.2C569.7 347.2 569.5 350.9 569.4 352.2 M438.7 122.2C437.1 122.8 432.3 124.2 429.3 125.7C426.4 127.2 423.6 129.2 421.0 131.2C418.4 133.2 416.0 135.6 413.7 138.0C411.3 140.3 409.1 142.8 406.8 145.3C404.6 147.8 402.4 150.2 400.2 152.8C398.0 155.3 395.8 157.8 393.9 160.5C391.9 163.2 389.9 165.9 388.3 168.8C386.7 171.7 385.5 174.9 384.3 178.0C383.2 181.1 382.4 184.4 381.2 187.5C380.1 190.6 378.6 193.6 377.3 196.7C375.9 199.7 374.2 203.3 373.1 205.8C372.1 208.2 371.2 210.4 370.9 211.3 M396.4 104.2C398.0 104.0 403.0 103.5 406.3 103.3C409.6 103.0 413.0 102.7 416.3 102.7C419.6 102.6 423.0 102.7 426.3 102.9C429.6 103.2 432.9 103.6 436.2 104.0C439.5 104.5 442.8 105.1 446.1 105.6C449.4 106.1 452.7 106.5 456.0 106.9C459.3 107.3 462.7 107.6 466.0 107.9C469.3 108.2 472.6 108.3 476.0 108.5C479.3 108.8 482.6 108.9 485.9 109.2C489.2 109.6 492.6 109.9 495.8 110.5C499.1 111.2 502.4 112.0 505.5 113.1C508.6 114.2 511.7 115.5 514.7 117.0C517.7 118.5 520.5 120.3 523.3 122.0C526.2 123.8 529.0 125.6 531.8 127.3C534.7 129.1 537.5 130.8 540.4 132.4C543.3 134.1 546.3 135.6 549.2 137.3C552.1 138.9 555.0 140.5 557.8 142.3C560.6 144.1 563.5 145.9 566.1 148.0C568.7 150.0 571.2 152.3 573.4 154.7C575.7 157.1 577.8 159.7 579.7 162.4C581.7 165.1 583.4 168.0 585.1 170.9C586.7 173.8 588.3 176.7 589.9 179.7C591.5 182.6 593.0 185.5 594.6 188.5C596.1 191.4 597.7 194.4 599.2 197.3C600.7 200.3 602.5 203.9 603.7 206.3C604.8 208.7 605.7 210.9 606.1 211.8 M535.2 65.2C533.6 64.9 528.7 64.0 525.4 63.5C522.1 63.0 518.8 62.5 515.5 62.1C512.2 61.6 508.9 61.1 505.6 60.6C502.3 60.2 499.0 59.7 495.7 59.1C492.4 58.6 489.1 58.0 485.9 57.4C482.6 56.8 479.3 56.2 476.0 55.6C472.7 55.1 469.4 54.5 466.2 54.0C462.9 53.4 459.6 52.9 456.3 52.4C453.0 51.9 449.7 51.3 446.4 50.8C443.1 50.3 439.8 49.9 436.5 49.6C433.2 49.2 429.8 49.0 426.5 48.8C423.2 48.7 419.8 48.7 416.5 48.7C413.2 48.7 409.8 48.9 406.5 49.0C403.2 49.2 399.9 49.4 396.5 49.7C393.2 50.0 389.9 50.2 386.6 50.6C383.3 50.9 379.0 51.5 376.7 51.8C374.3 52.1 373.4 52.3 372.7 52.4 M299.0 222.3C298.6 224.0 297.3 228.8 297.0 232.1C296.7 235.4 297.2 238.8 297.2 242.1C297.2 245.4 297.4 248.8 297.0 252.1C296.6 255.4 296.4 259.0 295.1 261.9C293.8 264.8 290.9 266.9 289.2 269.7C287.4 272.4 285.8 275.4 284.6 278.5C283.4 281.6 282.9 285.0 281.9 288.2C281.0 291.3 280.0 294.5 278.8 297.6C277.7 300.8 276.0 303.7 275.0 306.9C274.0 310.1 273.1 313.4 272.9 316.6C272.7 319.9 273.4 323.3 273.7 326.6C274.0 329.9 274.6 333.2 274.8 336.5C275.1 339.8 275.1 343.2 275.4 346.5C275.7 349.8 276.5 353.1 276.7 356.4C276.8 359.7 276.7 363.1 276.3 366.4C275.9 369.7 274.7 372.9 274.2 376.2C273.7 379.4 273.1 382.8 273.1 386.1C273.0 389.4 273.7 392.7 274.0 396.0C274.3 399.3 275.0 402.7 275.0 406.0C275.0 409.3 274.5 412.6 274.0 415.9C273.5 419.2 272.4 422.4 271.9 425.7C271.5 429.0 271.3 432.3 271.4 435.6C271.5 439.0 272.3 442.2 272.7 445.6C273.0 448.9 273.2 453.2 273.2 455.5C273.2 457.8 272.9 458.8 272.8 459.5 M433.6 395.0C434.0 396.6 435.1 401.5 435.7 404.8C436.3 408.1 436.7 411.4 437.1 414.7C437.5 418.0 437.6 421.3 438.0 424.6C438.3 427.9 438.7 431.3 439.3 434.5C439.8 437.8 440.5 441.1 441.2 444.4C441.9 447.6 442.9 451.5 443.5 454.1C444.1 456.7 444.6 459.0 444.9 459.9 M454.9 98.3C453.2 98.0 448.3 97.2 445.0 96.8C441.7 96.5 438.3 96.4 435.0 96.2C431.7 96.0 428.4 96.0 425.0 95.8C421.7 95.7 418.4 95.6 415.0 95.5C411.7 95.4 408.4 95.3 405.0 95.4C401.7 95.5 398.4 95.7 395.1 96.2C391.8 96.6 388.5 97.2 385.2 97.9C382.0 98.6 378.7 99.5 375.5 100.3C372.3 101.2 369.1 102.2 365.9 103.1C362.7 104.1 359.5 105.1 356.4 106.1C353.2 107.0 350.0 108.0 346.8 109.0C343.6 110.0 340.5 111.1 337.4 112.3C334.3 113.5 331.2 114.9 328.2 116.4C325.3 117.9 322.4 119.6 319.6 121.4C316.8 123.2 313.5 125.5 311.3 127.0C309.2 128.6 307.3 130.0 306.5 130.6 M522.9 109.1C521.3 109.5 516.4 110.8 513.2 111.5C510.0 112.3 506.7 113.0 503.5 113.8C500.2 114.6 497.0 115.3 493.7 116.1C490.5 116.9 487.3 117.8 484.1 118.7C480.9 119.6 477.6 120.5 474.5 121.4C471.3 122.4 468.1 123.5 465.0 124.6C461.8 125.8 458.7 126.9 455.7 128.2C452.6 129.6 449.6 131.0 446.7 132.8C443.9 134.5 441.2 136.5 438.7 138.7C436.2 140.9 433.9 143.4 431.8 145.9C429.8 148.5 427.9 151.3 426.2 154.2C424.5 157.1 423.0 160.1 421.7 163.1C420.5 166.2 419.5 169.4 418.7 172.6C417.9 175.9 417.5 179.2 417.0 182.5C416.5 185.8 416.0 189.8 415.6 192.4C415.2 195.0 414.8 197.3 414.7 198.3 M490.8 165.2C491.2 166.8 491.4 172.6 493.1 174.9C494.7 177.3 498.0 178.0 500.9 179.4C503.7 180.8 507.1 181.8 510.0 183.4C513.0 184.9 515.8 186.6 518.6 188.5C521.3 190.4 523.9 192.5 526.4 194.8C528.8 197.0 531.2 199.4 533.4 201.9C535.5 204.4 537.6 207.1 539.4 209.8C541.3 212.6 543.0 215.5 544.5 218.4C546.1 221.4 547.5 224.4 548.7 227.5C550.0 230.6 551.2 233.7 552.2 236.9C553.2 240.1 554.0 243.3 554.8 246.5C555.6 249.8 556.2 253.1 556.7 256.4C557.2 259.6 556.8 263.3 558.0 266.3C559.3 269.2 562.3 271.4 564.3 274.1C566.3 276.8 568.1 279.5 569.8 282.4C571.5 285.2 573.1 288.2 574.6 291.2C576.0 294.2 577.7 298.5 578.5 300.4C579.2 302.2 579.0 302.0 579.1 302.3 M461.2 147.1C459.7 147.8 455.2 149.9 452.3 151.5C449.4 153.2 446.5 154.9 443.9 156.9C441.3 159.0 438.8 161.3 436.7 163.9C434.7 166.5 433.0 169.5 431.6 172.5C430.3 175.5 429.6 178.8 428.7 182.0C427.8 185.2 426.9 189.5 426.3 191.7C425.7 194.0 425.3 194.9 425.1 195.5 M344.0 311.2C344.1 312.9 344.1 317.9 344.2 321.2C344.3 324.5 344.8 327.9 344.8 331.2C344.7 334.5 344.1 337.8 343.9 341.1C343.6 344.5 343.2 347.8 343.2 351.1C343.2 354.4 343.7 357.8 343.8 361.1C344.0 364.4 344.3 367.7 344.2 371.1C344.1 374.4 343.4 377.7 343.2 381.0C342.9 384.3 342.6 387.7 342.7 391.0C342.7 394.3 343.3 397.6 343.5 401.0C343.6 404.3 343.7 407.6 343.6 411.0C343.4 414.3 342.7 417.6 342.5 420.9C342.3 424.2 342.1 427.6 342.2 430.9C342.3 434.2 342.9 437.5 343.1 440.8C343.2 444.2 343.3 447.5 343.1 450.8C342.9 454.2 342.2 457.4 342.0 460.8C341.8 464.1 341.8 468.1 341.8 470.8C341.9 473.4 342.2 475.7 342.3 476.7 M553.4 164.4C554.5 165.6 557.8 169.4 559.9 172.0C562.0 174.6 564.0 177.2 565.9 180.0C567.8 182.7 569.7 185.5 571.3 188.4C573.0 191.3 574.5 194.2 575.9 197.3C577.2 200.3 578.3 203.5 579.2 206.7C580.2 209.9 580.9 213.2 581.6 216.4C582.2 219.7 582.7 223.0 583.2 226.3C583.7 229.6 584.1 232.9 584.3 236.2C584.6 239.5 584.8 242.9 584.8 246.2C584.8 249.5 584.5 252.9 584.5 256.2C584.5 259.5 584.0 262.8 584.8 265.9C585.6 269.0 588.0 271.8 589.4 274.8C590.8 277.8 592.1 280.9 593.2 284.0C594.3 287.2 595.3 290.4 596.0 293.6C596.7 296.9 597.2 300.2 597.5 303.5C597.9 306.8 598.1 310.2 598.1 313.5C598.2 316.8 598.0 320.2 597.9 323.5C597.7 326.8 597.5 330.2 597.3 333.5C597.0 336.8 596.5 341.8 596.4 343.4 M534.5 180.7C535.6 181.9 539.3 185.3 541.3 187.9C543.3 190.6 544.5 193.8 546.4 196.5C548.4 199.2 550.9 201.5 552.9 204.2C554.9 206.8 556.9 209.4 558.6 212.3C560.2 215.2 561.2 218.4 562.7 221.4C564.1 224.4 566.3 227.2 567.3 230.3C568.4 233.4 568.7 236.8 568.9 240.1C569.1 243.4 568.7 247.7 568.8 250.1C568.8 252.4 569.2 253.4 569.3 254.0 M273.4 215.9C273.3 217.6 272.9 222.6 272.6 225.9C272.4 229.2 272.0 232.5 271.9 235.9C271.9 239.2 272.1 242.5 272.4 245.8C272.7 249.1 273.4 252.4 273.9 255.7C274.4 259.0 275.7 262.4 275.3 265.6C274.8 268.8 272.5 271.7 271.4 274.8C270.3 278.0 269.5 281.2 268.6 284.4C267.6 287.6 266.7 290.8 265.9 294.1C265.1 297.3 264.4 301.2 264.0 303.9C263.7 306.5 263.8 308.9 263.8 309.9 M314.2 248.3C313.9 250.0 313.3 255.0 312.6 258.2C311.8 261.3 311.0 264.4 309.5 267.3C308.0 270.2 305.6 272.7 303.8 275.5C301.9 278.3 300.2 281.1 298.5 284.0C296.8 286.8 295.1 289.7 293.7 292.7C292.2 295.7 290.8 298.8 289.8 301.9C288.8 305.1 288.0 308.4 287.4 311.6C286.7 314.9 286.3 318.2 285.8 321.5C285.3 324.8 284.8 328.1 284.3 331.4C283.8 334.7 283.2 338.0 282.7 341.3C282.3 344.6 281.9 347.9 281.6 351.2C281.3 354.5 281.1 357.8 280.8 361.2C280.6 364.5 280.4 367.8 280.1 371.1C279.7 374.4 279.0 379.4 278.8 381.1 M428.3 52.6C426.8 53.3 422.3 55.5 419.3 56.9C416.2 58.3 413.2 59.5 410.1 60.9C407.1 62.3 404.0 63.6 401.0 65.1C398.1 66.6 395.1 68.2 392.3 70.0C389.5 71.8 386.8 73.7 384.2 75.8C381.6 77.9 379.1 80.2 376.7 82.4C374.3 84.7 371.9 87.1 369.5 89.4C367.1 91.7 364.8 94.1 362.4 96.4C360.0 98.7 357.5 100.9 355.1 103.2C352.6 105.5 350.1 107.7 347.7 110.0C345.4 112.3 343.0 114.7 340.8 117.2C338.6 119.7 336.0 123.2 334.7 125.1C333.3 127.0 333.0 128.0 332.7 128.6 M506.6 194.1C507.8 195.3 511.5 198.6 513.6 201.2C515.7 203.8 517.5 206.6 519.2 209.5C520.9 212.3 522.4 215.4 523.8 218.4C525.2 221.4 526.5 224.5 527.7 227.6C528.9 230.7 530.1 233.8 531.1 237.0C532.1 240.2 533.0 243.4 533.6 246.7C534.2 249.9 534.3 253.3 534.7 256.6C535.0 259.9 534.7 263.2 535.6 266.3C536.6 269.4 538.8 272.2 540.2 275.2C541.7 278.2 543.0 281.3 544.2 284.3C545.5 287.4 546.8 290.5 547.9 293.6C549.0 296.8 550.2 299.9 550.9 303.2C551.6 306.4 552.1 309.7 552.3 313.1C552.5 316.4 552.2 319.7 552.1 323.0C551.9 326.4 551.6 329.7 551.5 333.0C551.4 336.4 551.4 339.7 551.5 343.0C551.7 346.4 551.9 349.7 552.2 353.0C552.4 356.3 552.9 361.3 553.0 363.0 M313.9 384.7C314.0 386.3 314.6 391.3 314.8 394.6C315.0 397.9 314.8 401.3 315.0 404.6C315.1 407.9 315.2 411.3 315.7 414.6C316.1 417.9 316.9 421.2 317.8 424.4C318.7 427.6 319.9 430.7 321.0 433.8C322.0 437.0 323.2 440.1 324.1 443.3C325.0 446.5 325.5 449.9 326.3 453.1C327.2 456.3 328.2 459.4 329.3 462.6C330.3 465.8 331.9 469.8 332.6 472.0C333.3 474.3 333.5 475.2 333.7 475.9 M501.3 224.6C502.0 226.0 504.6 230.4 505.9 233.4C507.3 236.4 508.4 239.6 509.4 242.8C510.3 246.0 511.1 249.2 511.8 252.5C512.5 255.7 512.4 259.3 513.6 262.3C514.7 265.3 517.1 267.7 519.0 270.4C520.8 273.1 522.9 275.8 524.6 278.7C526.3 281.5 527.8 284.5 529.2 287.5C530.5 290.6 531.7 293.7 532.7 296.9C533.7 300.1 534.5 303.3 535.3 306.6C536.0 309.8 536.7 313.1 537.1 316.4C537.5 319.7 537.6 323.0 537.8 326.4C538.0 329.7 538.2 333.0 538.4 336.3C538.6 339.7 538.9 343.0 539.3 346.3C539.6 349.6 540.0 352.9 540.4 356.2C540.8 359.6 541.3 363.2 541.6 366.2C542.0 369.2 542.3 372.8 542.5 374.1 M533.6 115.7C531.9 115.9 526.9 116.6 523.7 117.2C520.4 117.9 517.2 118.8 514.0 119.6C510.8 120.4 507.5 121.4 504.3 122.1C501.0 122.8 497.7 123.3 494.5 123.9C491.2 124.6 487.9 125.2 484.7 125.9C481.4 126.7 478.1 127.4 475.0 128.4C471.8 129.4 468.6 130.5 465.6 131.9C462.7 133.4 459.8 135.1 457.0 137.0C454.3 138.9 451.7 141.0 449.2 143.2C446.7 145.4 444.3 147.8 442.0 150.1C439.6 152.5 437.3 154.9 435.2 157.5C433.1 160.1 431.1 162.8 429.4 165.6C427.8 168.5 426.6 171.7 425.4 174.8C424.1 177.8 423.0 181.0 422.0 184.2C420.9 187.3 419.6 191.4 418.9 193.7C418.2 195.9 418.0 196.9 417.9 197.5 M330.4 286.9C329.3 288.1 326.0 291.9 323.9 294.5C321.8 297.1 319.7 299.7 318.0 302.5C316.2 305.3 314.5 308.3 313.3 311.3C312.1 314.4 311.3 317.7 310.6 320.9C309.8 324.2 309.5 327.5 308.9 330.8C308.4 334.1 308.1 337.4 307.5 340.7C306.9 344.0 306.2 347.3 305.4 350.5C304.5 353.7 303.4 356.8 302.2 360.0C301.1 363.1 299.7 366.1 298.4 369.2C297.1 372.3 295.7 375.3 294.5 378.4C293.3 381.5 292.2 384.7 291.3 387.9C290.3 391.1 289.8 394.4 288.9 397.6C288.0 400.8 287.0 404.0 285.8 407.1C284.7 410.2 283.3 413.3 282.0 416.3C280.7 419.4 279.3 422.4 278.1 425.5C276.9 428.6 275.7 431.8 274.8 435.0C273.9 438.2 273.1 441.4 272.5 444.7C271.9 448.0 271.5 451.3 270.9 454.6C270.4 457.9 269.7 462.5 269.4 464.5C269.1 466.4 269.1 466.1 269.1 466.4 M388.9 64.3C390.6 64.4 395.6 64.7 398.9 64.7C402.2 64.8 405.6 64.7 408.9 64.7C412.2 64.6 415.6 64.5 418.9 64.5C422.2 64.5 425.6 64.6 428.9 64.7C432.2 64.9 435.5 65.2 438.9 65.5C442.2 65.8 445.5 66.3 448.8 66.6C452.1 66.9 455.4 67.1 458.8 67.4C462.1 67.6 465.4 67.8 468.7 68.0C472.1 68.3 475.4 68.4 478.7 68.8C482.0 69.1 485.4 69.5 488.6 70.1C491.9 70.7 495.2 71.4 498.4 72.4C501.6 73.3 504.7 74.4 507.8 75.5C511.0 76.7 514.1 77.9 517.1 79.2C520.2 80.4 523.3 81.8 526.4 83.1C529.4 84.4 532.5 85.6 535.6 86.9C538.7 88.2 541.8 89.4 544.8 90.8C547.9 92.2 550.9 93.5 553.8 95.1C556.8 96.7 559.7 98.4 562.4 100.2C565.2 102.1 567.8 104.1 570.4 106.2C573.0 108.3 576.8 111.6 578.0 112.7 M491.2 160.7C491.6 162.3 493.3 167.2 493.9 170.3C494.5 173.4 494.8 176.3 494.9 179.2C494.9 182.2 494.2 185.2 494.2 188.2C494.2 191.2 493.7 194.6 495.1 197.2C496.5 199.7 500.7 201.0 502.8 203.5C504.8 206.0 506.1 209.2 507.6 212.2C509.1 215.2 510.3 218.3 511.7 221.3C513.2 224.3 515.1 227.1 516.3 230.2C517.4 233.3 518.1 236.7 518.4 239.9C518.7 243.2 518.0 246.6 517.9 249.9C517.9 253.2 517.6 256.8 518.3 259.9C519.1 263.0 520.9 265.7 522.5 268.6C524.0 271.4 526.4 274.0 527.6 277.1C528.9 280.1 529.2 283.5 530.0 286.8C530.7 290.0 531.3 293.3 532.1 296.5C532.9 299.8 534.4 302.9 534.9 306.1C535.4 309.4 535.4 312.8 535.2 316.1C534.9 319.4 533.5 322.6 533.2 325.9C532.8 329.2 533.0 332.5 533.0 335.8C533.0 339.2 533.6 342.5 533.4 345.8C533.2 349.1 532.2 352.4 531.7 355.7C531.1 358.9 530.3 362.2 530.1 365.5C529.9 368.8 530.5 373.5 530.6 375.5C530.7 377.5 530.7 377.2 530.7 377.5 M290.2 244.8C289.9 246.4 289.0 251.3 288.2 254.5C287.4 257.8 287.0 261.4 285.3 264.1C283.6 266.8 280.1 268.4 278.0 270.9C275.9 273.5 274.1 276.4 272.7 279.4C271.4 282.4 270.6 285.7 269.9 289.0C269.1 292.2 268.9 295.5 268.3 298.8C267.7 302.1 266.8 305.3 266.3 308.6C265.8 311.9 265.2 315.2 265.2 318.5C265.2 321.8 266.0 325.1 266.3 328.4C266.7 331.8 267.3 335.1 267.4 338.4C267.4 341.7 267.2 345.1 266.7 348.4C266.3 351.6 265.2 354.8 264.4 358.1C263.5 361.3 262.3 364.4 261.6 367.7C260.9 370.9 260.3 375.9 260.1 377.5 M464.7 57.2C466.3 57.5 471.2 58.4 474.5 59.1C477.7 59.9 481.0 60.7 484.2 61.5C487.4 62.4 490.6 63.3 493.8 64.3C497.0 65.3 500.2 66.3 503.3 67.4C506.5 68.5 509.6 69.6 512.7 70.8C515.8 72.0 518.9 73.2 522.0 74.6C525.0 76.0 528.0 77.4 531.0 79.0C533.9 80.5 536.8 82.2 539.7 83.9C542.5 85.6 545.4 87.4 548.1 89.2C550.9 91.0 553.7 92.9 556.4 94.8C559.1 96.7 561.8 98.7 564.4 100.8C567.1 102.8 570.1 105.4 572.1 107.2C574.2 108.9 575.8 110.5 576.6 111.2 M522.1 183.7C523.6 184.5 528.2 186.5 530.9 188.4C533.7 190.2 536.2 192.4 538.7 194.6C541.2 196.8 543.6 199.2 546.0 201.5C548.3 203.9 550.7 206.2 553.0 208.7C555.2 211.1 557.4 213.6 559.4 216.3C561.5 218.9 563.5 221.6 565.2 224.4C566.9 227.3 568.3 230.4 569.6 233.4C570.8 236.5 571.7 239.7 572.8 242.9C573.9 246.0 575.3 250.5 575.9 252.4C576.6 254.3 576.5 253.9 576.6 254.3 M573.2 255.8C573.6 257.3 574.0 262.4 575.5 265.1C577.0 267.9 580.2 269.9 582.2 272.5C584.3 275.1 586.3 277.9 587.7 280.8C589.2 283.8 590.3 287.0 590.9 290.3C591.6 293.5 591.7 296.9 591.7 300.2C591.8 303.5 591.5 306.9 591.2 310.2C590.9 313.5 590.5 316.8 589.9 320.1C589.3 323.4 588.3 326.6 587.8 329.9C587.2 333.2 586.8 337.5 586.7 339.8C586.5 342.1 586.7 343.1 586.7 343.8 M551.4 80.4C549.7 80.4 544.7 80.4 541.4 80.3C538.1 80.2 534.7 80.0 531.4 79.9C528.1 79.7 524.7 79.5 521.4 79.3C518.1 79.1 514.8 79.0 511.4 78.9C508.1 78.9 504.8 78.9 501.4 78.9C498.1 78.9 494.8 79.0 491.4 79.1C488.1 79.1 484.8 79.2 481.4 79.1C478.1 79.1 474.8 79.0 471.4 78.9C468.1 78.7 464.8 78.5 461.4 78.4C458.1 78.2 454.8 77.9 451.5 77.9C448.1 77.9 444.8 77.9 441.5 78.1C438.1 78.3 434.8 78.8 431.5 79.1C428.2 79.5 424.9 79.9 421.6 80.3C418.3 80.7 415.0 81.1 411.7 81.7C408.4 82.2 405.1 82.7 401.8 83.4C398.6 84.1 395.3 84.9 392.1 85.9C388.9 86.8 385.8 87.9 382.7 89.1C379.6 90.3 376.5 91.6 373.4 92.9C370.4 94.3 367.4 95.7 364.4 97.1C361.3 98.5 358.3 99.9 355.3 101.4C352.3 102.9 349.3 104.4 346.4 106.0C343.5 107.5 340.6 109.2 337.8 111.0C335.0 112.8 332.2 114.7 329.6 116.7C326.9 118.7 323.6 121.5 321.9 123.1C320.1 124.6 319.5 125.4 319.0 125.8 M457.5 121.1C459.1 121.0 464.1 120.5 467.4 120.4C470.8 120.2 474.1 120.1 477.4 120.1C480.8 120.1 484.1 120.2 487.4 120.3C490.7 120.5 494.1 120.8 497.4 121.1C500.7 121.4 504.0 121.8 507.3 122.3C510.6 122.8 513.9 123.4 517.1 124.2C520.4 124.9 523.6 125.7 526.8 126.7C530.0 127.6 533.2 128.6 536.4 129.7C539.5 130.8 542.6 131.9 545.7 133.1C548.8 134.4 551.9 135.7 554.9 137.1C557.9 138.5 560.9 140.0 563.8 141.6C566.7 143.2 569.6 144.9 572.4 146.7C575.2 148.5 578.0 150.4 580.6 152.4C583.3 154.4 586.7 157.2 588.5 158.6C590.3 160.1 591.0 160.8 591.5 161.3 M364.3 50.6C363.0 51.6 359.2 54.9 356.5 56.9C353.9 58.9 351.1 60.8 348.4 62.7C345.7 64.6 342.8 66.4 340.1 68.3C337.4 70.3 334.7 72.2 332.2 74.4C329.7 76.6 327.3 78.9 325.1 81.4C322.9 83.9 320.9 86.6 319.0 89.4C317.1 92.1 315.5 95.0 313.9 97.9C312.2 100.8 310.8 103.8 309.2 106.8C307.5 109.7 306.0 112.6 304.2 115.5C302.5 118.3 300.7 121.1 298.9 123.9C297.0 126.7 295.0 129.4 293.1 132.1C291.3 134.8 289.1 137.8 287.5 140.4C285.9 142.9 284.2 146.1 283.5 147.3 M464.6 125.2C466.1 126.0 470.6 128.2 473.3 130.1C476.0 132.0 478.6 134.2 480.9 136.6C483.3 138.9 485.5 141.5 487.4 144.2C489.2 146.9 490.5 150.2 492.2 152.9C493.9 155.7 495.2 158.4 497.5 160.6C499.8 162.8 503.1 164.2 505.8 166.2C508.5 168.2 511.0 170.3 513.5 172.5C516.1 174.6 518.6 176.8 521.0 179.1C523.5 181.4 525.9 183.7 528.0 186.3C530.1 188.8 532.0 191.6 533.7 194.5C535.4 197.3 536.7 200.4 538.1 203.5C539.5 206.5 540.8 209.6 541.9 212.7C543.0 215.9 544.0 219.1 544.7 222.3C545.4 225.5 545.8 228.9 546.1 232.2C546.3 235.5 546.2 238.9 546.1 242.2C546.0 245.5 545.7 248.8 545.4 252.2C545.2 255.5 544.4 258.9 544.6 262.1C544.8 265.4 545.9 268.4 546.9 271.5C547.8 274.6 549.3 277.7 550.2 280.9C551.1 284.1 551.7 287.7 552.1 290.7C552.6 293.7 552.9 297.3 553.0 298.7 M493.3 161.3C493.3 163.0 493.0 168.2 493.2 171.3C493.5 174.5 494.5 177.1 494.5 180.2C494.6 183.4 492.5 187.4 493.5 190.2C494.5 193.0 498.7 194.4 500.7 197.0C502.8 199.6 504.3 202.6 505.7 205.6C507.2 208.6 508.2 211.8 509.5 214.9C510.7 218.0 512.0 221.1 513.2 224.2C514.4 227.3 515.8 230.4 516.6 233.6C517.5 236.8 518.3 240.1 518.5 243.4C518.7 246.7 518.3 250.1 517.7 253.3C517.2 256.6 515.3 259.8 515.2 263.0C515.2 266.2 516.5 269.3 517.5 272.4C518.5 275.5 520.2 278.6 521.1 281.8C521.9 285.0 522.2 288.3 522.4 291.6C522.6 295.0 522.3 298.3 522.2 301.6C522.2 305.0 522.0 308.3 522.0 311.6C522.0 315.0 522.2 318.3 522.2 321.6C522.2 325.0 522.2 328.3 521.9 331.6C521.6 334.9 521.1 338.2 520.3 341.5C519.6 344.7 518.4 347.9 517.5 351.1C516.6 354.3 515.5 357.5 514.9 360.7C514.3 364.0 514.0 367.3 513.8 370.7C513.6 374.0 513.8 377.3 513.7 380.7C513.6 384.0 513.4 387.7 513.0 390.6C512.6 393.6 511.6 397.1 511.3 398.4 M319.7 244.9C319.3 246.6 318.2 251.4 317.5 254.7C316.8 258.0 316.9 261.6 315.5 264.5C314.2 267.4 311.2 269.5 309.2 272.2C307.3 274.9 305.7 277.9 304.0 280.8C302.3 283.6 300.6 286.5 299.1 289.4C297.5 292.4 295.8 295.3 294.5 298.3C293.2 301.4 292.2 304.6 291.4 307.8C290.7 311.1 290.4 314.4 290.0 317.7C289.6 321.0 289.3 324.4 289.0 327.7C288.7 331.0 288.6 334.3 288.3 337.7C288.0 341.0 287.6 344.3 287.1 347.6C286.6 350.9 285.8 354.1 285.3 357.4C284.7 360.7 284.1 364.0 283.7 367.3C283.4 370.6 283.3 373.9 283.0 377.3C282.7 380.6 282.5 383.9 282.0 387.2C281.6 390.5 280.8 393.8 280.3 397.1C279.7 400.3 279.0 403.6 278.5 406.9C278.1 410.2 277.8 414.5 277.6 416.9C277.4 419.2 277.4 420.2 277.4 420.8 M274.3 332.5C274.2 334.1 274.1 339.1 273.9 342.5C273.7 345.8 273.5 349.1 273.3 352.4C273.1 355.8 272.9 359.1 272.7 362.4C272.6 365.7 272.4 369.1 272.3 372.4C272.2 375.7 272.1 379.1 271.9 382.4C271.8 385.7 271.7 389.1 271.5 392.4C271.3 395.7 271.1 399.0 270.9 402.4C270.7 405.7 270.5 409.0 270.3 412.4C270.1 415.7 269.9 419.0 269.8 422.3C269.6 425.7 269.3 429.0 269.2 432.3C269.0 435.7 268.8 439.0 268.7 442.3C268.6 445.6 268.5 449.0 268.4 452.3C268.2 455.6 268.0 460.0 267.9 462.3C267.8 464.6 267.7 465.6 267.7 466.3 M484.1 81.5C485.6 82.4 489.8 85.1 492.8 86.5C495.8 88.0 499.0 89.1 502.1 90.3C505.2 91.4 508.5 92.2 511.6 93.4C514.7 94.6 517.8 95.9 520.6 97.6C523.4 99.3 526.1 101.5 528.5 103.8C530.9 106.1 532.8 108.8 535.0 111.3C537.2 113.8 539.2 116.5 541.6 118.9C543.9 121.2 546.4 123.5 549.0 125.6C551.6 127.7 554.4 129.4 557.0 131.5C559.6 133.6 562.4 135.6 564.6 138.0C566.9 140.4 569.2 143.7 570.6 146.0C572.0 148.2 572.8 150.5 573.2 151.4 M287.5 163.8C286.6 165.2 284.2 169.6 282.5 172.4C280.8 175.3 278.5 177.9 277.2 180.9C276.0 183.9 275.6 187.3 275.1 190.6C274.7 193.9 275.0 197.3 274.5 200.6C274.0 203.8 272.5 207.0 272.0 210.2C271.4 213.5 271.0 216.8 271.1 220.1C271.2 223.4 272.4 226.7 272.6 230.0C272.8 233.3 272.6 236.7 272.4 240.0C272.1 243.3 271.1 247.2 270.9 249.9C270.7 252.5 271.2 254.9 271.3 255.9 M448.1 37.6C446.5 38.1 441.7 39.4 438.5 40.3C435.3 41.3 432.1 42.3 428.9 43.4C425.8 44.5 422.6 45.5 419.5 46.7C416.4 48.0 413.3 49.3 410.3 50.6C407.3 52.0 404.2 53.4 401.3 54.9C398.3 56.3 395.3 57.8 392.3 59.4C389.4 60.9 386.5 62.6 383.6 64.3C380.7 66.0 377.1 68.4 375.2 69.6C373.2 70.9 372.4 71.5 371.9 71.9 M644.4 245.7C643.9 247.3 642.5 252.1 641.6 255.3C640.7 258.5 638.7 261.8 638.9 264.9C639.1 268.0 641.7 271.0 642.9 274.1C644.0 277.2 645.3 280.4 645.9 283.6C646.5 286.8 646.7 290.2 646.6 293.6C646.6 296.9 646.0 300.2 645.6 303.5C645.3 306.8 645.0 310.1 644.5 313.4C644.0 316.7 643.4 320.0 642.5 323.2C641.7 326.4 640.3 329.5 639.3 332.7C638.3 335.9 637.2 340.0 636.6 342.3C636.1 344.6 636.1 345.6 636.0 346.3 M408.9 125.7C410.6 125.7 415.6 125.7 418.9 126.0C422.2 126.4 425.5 127.0 428.7 127.7C432.0 128.4 435.2 129.4 438.4 130.3C441.6 131.3 444.7 132.3 447.9 133.3C451.1 134.3 454.3 135.1 457.5 136.1C460.7 137.0 463.9 138.0 467.1 139.0C470.3 140.0 473.6 140.7 476.6 142.0C479.7 143.2 482.9 144.5 485.6 146.3C488.4 148.1 490.3 151.2 493.1 152.9C495.8 154.6 499.0 155.3 502.0 156.5C505.1 157.6 508.3 158.8 511.4 159.9C514.5 161.1 517.7 162.3 520.8 163.3C524.0 164.4 527.2 165.3 530.4 166.3C533.6 167.2 536.8 168.0 540.0 169.0C543.2 170.0 546.4 171.0 549.4 172.3C552.5 173.6 555.5 175.0 558.3 176.8C561.1 178.6 563.8 180.7 566.2 183.0C568.6 185.2 570.7 187.9 572.7 190.6C574.6 193.3 576.2 196.2 577.9 199.1C579.6 202.0 581.2 205.3 582.6 207.9C584.1 210.5 585.9 213.7 586.5 214.9 M376.1 362.1C376.0 363.8 375.5 368.8 375.1 372.1C374.8 375.4 374.0 378.7 374.0 382.0C373.9 385.3 374.5 388.6 374.9 392.0C375.2 395.3 376.0 398.6 376.1 401.9C376.2 405.2 375.7 408.5 375.3 411.8C375.0 415.1 374.1 418.4 374.0 421.7C373.9 425.0 374.4 428.4 374.7 431.7C374.9 435.0 375.5 438.3 375.3 441.6C375.2 445.0 374.4 448.2 374.0 451.5C373.7 454.9 373.2 458.2 373.2 461.5C373.3 464.8 374.2 469.4 374.5 471.4C374.7 473.4 374.7 473.1 374.8 473.4 M432.7 84.7C434.3 84.8 439.3 84.8 442.6 85.2C445.9 85.5 449.2 86.2 452.5 86.8C455.8 87.5 459.0 88.5 462.2 89.2C465.4 90.0 468.7 90.8 471.9 91.6C475.2 92.3 478.5 92.7 481.7 93.6C484.9 94.5 488.0 95.7 491.1 97.0C494.2 98.2 497.1 99.8 500.2 101.2C503.2 102.6 506.6 104.1 509.3 105.2C512.1 106.3 515.6 107.5 516.9 108.0 M637.0 263.7C637.8 265.1 640.5 269.4 641.9 272.4C643.3 275.4 644.2 278.6 645.3 281.8C646.5 284.9 647.6 288.0 648.6 291.2C649.7 294.4 650.9 297.5 651.7 300.7C652.5 303.9 653.0 307.3 653.1 310.6C653.3 313.9 652.8 317.2 652.4 320.6C652.1 323.9 651.5 328.2 651.3 330.5C651.0 332.8 650.9 333.8 650.8 334.5 M488.4 134.4C486.8 134.8 481.9 135.8 478.6 136.6C475.4 137.4 472.1 138.1 469.0 139.2C465.9 140.3 462.8 141.7 460.0 143.4C457.1 145.2 454.7 147.5 452.1 149.6C449.6 151.8 447.2 154.1 444.7 156.3C442.1 158.5 439.4 160.4 436.9 162.6C434.5 164.9 431.8 167.1 429.9 169.7C427.9 172.4 426.5 175.4 425.3 178.5C424.1 181.6 423.5 185.3 422.7 188.2C421.9 191.1 420.8 194.6 420.4 195.8 M605.1 223.8C605.1 225.5 605.1 230.5 605.0 233.8C604.9 237.1 604.9 240.5 604.5 243.8C604.1 247.1 603.4 250.4 602.6 253.6C601.7 256.8 599.7 259.8 599.3 263.0C598.9 266.2 599.8 269.5 600.3 272.7C600.7 276.0 601.6 279.2 602.3 282.5C602.9 285.8 603.8 289.0 604.2 292.3C604.6 295.6 604.9 299.0 604.9 302.3C604.9 305.6 604.4 308.9 604.1 312.2C603.7 315.6 603.4 318.9 602.9 322.2C602.4 325.5 601.9 328.8 601.1 332.0C600.4 335.3 598.9 339.7 598.4 341.6C597.8 343.5 597.8 343.2 597.7 343.5 M371.3 350.3C371.0 351.9 369.9 356.8 369.3 360.1C368.8 363.4 368.4 366.7 367.9 370.0C367.4 373.3 366.8 376.6 366.1 379.8C365.3 383.1 364.4 386.3 363.5 389.5C362.6 392.7 361.6 395.9 360.7 399.1C359.9 402.3 359.1 405.6 358.4 408.8C357.8 412.1 357.4 415.4 356.9 418.7C356.4 422.0 356.1 425.3 355.5 428.6C355.0 431.9 354.4 435.2 353.6 438.4C352.9 441.7 351.9 444.9 351.0 448.1C350.1 451.3 349.0 455.1 348.3 457.7C347.6 460.3 347.1 462.5 346.8 463.5 M415.9 132.0C414.4 132.8 410.0 135.0 407.0 136.6C404.1 138.2 401.0 139.5 398.3 141.5C395.7 143.5 393.2 145.8 391.2 148.4C389.2 151.1 387.8 154.2 386.2 157.1C384.6 160.0 383.3 163.1 381.7 166.0C380.0 168.9 378.1 171.6 376.4 174.5C374.8 177.4 373.0 180.3 371.7 183.3C370.4 186.4 369.4 189.6 368.6 192.8C367.7 196.0 367.3 199.4 366.4 202.6C365.5 205.8 364.0 209.8 363.2 212.0C362.3 214.2 361.7 215.0 361.4 215.6 M286.4 217.7C285.8 219.3 284.2 224.0 283.0 227.1C281.7 230.2 280.3 233.2 279.0 236.3C277.6 239.3 276.2 242.3 275.0 245.5C273.9 248.6 272.8 251.8 272.1 255.0C271.3 258.2 271.7 262.0 270.3 264.9C269.0 267.7 266.1 270.1 264.1 272.2C262.1 274.4 259.2 276.7 258.2 277.6 M514.3 273.3C515.4 274.6 518.9 278.1 521.0 280.7C523.1 283.3 525.1 286.0 526.8 288.8C528.6 291.6 530.2 294.6 531.6 297.6C533.1 300.6 534.3 303.7 535.4 306.9C536.5 310.0 537.5 313.2 538.4 316.4C539.3 319.6 540.1 322.9 540.9 326.1C541.6 329.3 542.4 332.6 543.1 335.8C543.8 339.1 544.4 342.4 545.1 345.6C545.7 348.9 546.4 352.2 547.1 355.4C547.8 358.7 548.9 363.2 549.4 365.2C549.9 367.1 549.8 366.8 549.9 367.1 M353.5 126.8C352.6 128.2 349.6 132.3 348.2 135.3C346.7 138.2 345.7 141.5 344.9 144.7C344.0 147.9 343.6 151.2 343.2 154.5C342.7 157.8 342.6 161.2 342.3 164.5C341.9 167.8 341.7 171.1 341.3 174.4C340.9 177.7 340.4 181.0 339.7 184.3C339.0 187.6 338.2 190.8 337.3 194.0C336.5 197.2 335.5 200.4 334.7 203.7C333.9 206.9 333.2 210.2 332.6 213.5C332.1 216.7 331.6 221.7 331.4 223.4 M550.2 177.3C551.3 178.6 554.8 182.2 556.7 184.9C558.6 187.6 560.1 190.6 561.6 193.6C563.1 196.6 564.3 199.7 565.6 202.8C566.9 205.9 568.3 208.9 569.3 212.1C570.4 215.2 571.3 218.4 571.9 221.7C572.5 225.0 572.7 228.3 573.0 231.6C573.3 235.0 573.5 238.3 573.7 241.6C574.0 244.9 574.3 248.3 574.4 251.6C574.5 254.9 573.9 258.4 574.4 261.6C575.0 264.8 576.4 267.6 577.7 270.6C578.9 273.7 580.6 276.6 581.8 279.7C582.9 282.8 583.8 286.1 584.7 289.3C585.7 292.5 586.7 295.7 587.4 298.9C588.1 302.2 588.8 305.5 589.0 308.8C589.2 312.1 588.9 315.4 588.7 318.8C588.5 322.1 588.0 325.7 587.9 328.7C587.7 331.7 587.8 335.4 587.7 336.7 M371.1 135.6C370.0 136.9 366.6 140.6 364.4 143.1C362.3 145.7 360.1 148.2 357.9 150.7C355.7 153.2 353.4 155.7 351.3 158.2C349.1 160.7 346.9 163.2 344.9 165.9C342.9 168.5 341.0 171.3 339.4 174.2C337.7 177.1 336.6 180.3 335.2 183.3C333.7 186.3 332.3 189.3 330.7 192.2C329.0 195.1 327.1 197.9 325.4 200.7C323.6 203.5 321.7 206.3 320.0 209.1C318.4 212.0 316.7 214.9 315.4 218.0C314.1 221.0 312.8 224.8 312.2 227.4C311.5 230.0 311.7 232.4 311.6 233.4 M546.5 119.9C544.8 120.2 539.9 121.0 536.6 121.6C533.3 122.2 530.1 122.9 526.8 123.5C523.5 124.2 520.3 124.9 517.0 125.6C513.8 126.3 510.5 127.1 507.3 127.8C504.0 128.5 500.6 128.9 497.5 129.9C494.4 131.0 491.4 132.6 488.5 134.2C485.7 135.9 482.9 137.9 480.4 140.0C477.8 142.1 475.4 144.4 473.1 146.8C470.8 149.2 468.5 151.7 466.5 154.3C464.4 156.9 462.3 159.6 460.7 162.4C459.0 165.3 457.6 168.3 456.3 171.4C455.1 174.5 454.2 178.1 453.4 181.0C452.7 183.9 452.0 187.5 451.7 188.8 M413.6 141.4C412.3 142.5 408.5 145.8 406.0 148.0C403.6 150.2 401.0 152.4 398.6 154.7C396.1 156.9 393.6 159.1 391.3 161.5C388.9 163.8 386.6 166.2 384.5 168.8C382.5 171.5 380.6 174.2 379.0 177.2C377.4 180.1 376.1 183.2 374.9 186.3C373.7 189.4 372.8 192.6 371.9 195.8C371.0 199.0 370.3 202.6 369.5 205.5C368.8 208.4 367.9 212.0 367.5 213.3 M355.4 356.8C355.1 358.4 353.9 363.3 353.3 366.6C352.7 369.8 352.2 373.1 352.0 376.5C351.8 379.8 351.8 383.1 352.0 386.5C352.2 389.8 352.7 393.1 353.1 396.4C353.5 399.7 354.0 403.0 354.2 406.3C354.5 409.6 354.6 413.0 354.4 416.3C354.3 419.6 353.8 423.0 353.2 426.2C352.7 429.5 351.8 432.8 351.1 436.0C350.5 439.3 349.8 442.5 349.1 445.8C348.4 449.1 347.5 452.3 346.9 455.6C346.3 458.8 345.8 462.1 345.5 465.5C345.2 468.8 345.4 473.5 345.4 475.4C345.4 477.4 345.5 477.1 345.5 477.4 M295.3 282.0C294.4 283.4 291.3 287.4 289.9 290.4C288.6 293.4 287.8 296.7 287.3 300.0C286.8 303.3 287.1 306.7 287.1 310.0C287.1 313.3 287.5 316.7 287.4 320.0C287.2 323.3 286.8 326.6 286.2 329.9C285.5 333.2 284.4 336.3 283.6 339.6C282.9 342.8 282.0 346.1 281.7 349.4C281.3 352.7 281.4 356.0 281.6 359.3C281.8 362.7 282.5 366.0 282.9 369.3C283.3 372.6 283.8 375.9 284.2 379.2C284.6 382.5 285.2 385.8 285.3 389.1C285.5 392.4 285.3 395.8 284.9 399.1C284.4 402.4 283.4 405.6 282.6 408.8C281.9 412.1 280.8 415.2 280.2 418.5C279.7 421.8 279.4 425.2 279.5 428.5C279.5 431.8 280.1 435.1 280.5 438.4C280.8 441.7 281.5 445.0 281.7 448.3C281.8 451.7 281.6 455.3 281.3 458.3C280.9 461.3 279.9 464.8 279.6 466.1 M501.0 147.4C502.6 147.8 507.5 148.8 510.7 149.8C513.9 150.8 517.0 152.0 520.0 153.5C523.0 154.9 525.9 156.7 528.7 158.4C531.5 160.2 534.2 162.2 536.9 164.1C539.7 166.0 542.4 167.9 545.1 169.9C547.8 171.8 550.6 173.7 553.2 175.7C555.8 177.8 558.5 179.8 560.9 182.1C563.2 184.4 565.5 187.0 567.4 189.7C569.3 192.4 571.0 195.3 572.5 198.2C574.1 201.2 575.4 204.3 576.7 207.3C578.1 210.4 579.5 213.4 580.6 216.5C581.7 219.7 582.8 222.8 583.6 226.1C584.4 229.3 584.8 232.6 585.4 235.9C586.0 239.2 586.4 242.5 586.9 245.8C587.5 249.1 588.1 252.4 588.6 255.6C589.2 258.9 588.9 262.6 590.3 265.5C591.6 268.4 594.7 270.5 596.6 273.2C598.5 276.0 600.1 278.9 601.6 281.9C603.0 284.9 604.2 288.0 605.3 291.2C606.5 294.3 607.4 297.5 608.4 300.7C609.4 303.8 610.5 307.7 611.2 310.3C612.0 312.8 612.4 315.1 612.6 316.1 M496.2 45.5C494.6 45.4 489.6 44.9 486.2 45.0C482.9 45.1 479.6 45.5 476.3 46.1C473.0 46.7 469.8 47.7 466.6 48.5C463.4 49.4 460.2 50.4 457.0 51.1C453.7 51.9 450.4 52.5 447.1 52.9C443.8 53.3 440.5 53.4 437.2 53.5C433.8 53.6 430.5 53.3 427.2 53.4C423.8 53.4 420.5 53.6 417.2 53.8C413.9 54.0 410.5 54.2 407.2 54.5C403.9 54.8 400.5 55.0 397.3 55.6C394.0 56.2 390.7 57.0 387.6 58.1C384.5 59.3 381.5 60.9 378.7 62.6C375.9 64.4 373.2 66.5 370.5 68.4C367.8 70.4 365.3 72.5 362.5 74.3C359.7 76.2 356.9 78.0 353.9 79.5C351.0 81.1 346.4 83.0 344.8 83.7 M396.5 85.0C395.0 85.7 390.5 87.8 387.5 89.3C384.5 90.7 381.5 92.2 378.6 93.8C375.6 95.4 372.7 97.0 369.9 98.7C367.1 100.5 364.3 102.4 361.6 104.4C359.0 106.4 356.4 108.5 353.7 110.5C351.1 112.6 348.5 114.6 345.9 116.8C343.4 118.9 340.7 121.0 338.4 123.3C336.0 125.6 333.1 128.9 331.6 130.7C330.1 132.4 329.6 133.4 329.2 133.9 M273.1 229.0C273.3 230.6 273.6 235.6 274.0 238.9C274.4 242.3 274.7 245.6 275.3 248.9C275.8 252.2 276.9 255.4 277.2 258.7C277.5 261.9 277.7 265.1 277.1 268.2C276.6 271.4 274.8 274.5 274.0 277.7C273.1 280.9 272.4 284.2 271.8 287.5C271.3 290.8 270.9 294.1 270.7 297.4C270.5 300.7 270.4 304.1 270.5 307.4C270.7 310.7 271.1 314.1 271.7 317.3C272.3 320.6 273.2 323.8 273.9 327.1C274.7 330.3 275.3 333.6 276.0 336.9C276.6 340.1 277.4 344.4 277.9 346.7C278.3 349.0 278.5 350.0 278.7 350.6 M318.0 190.2C317.4 191.7 315.3 196.3 314.1 199.4C312.9 202.5 311.6 205.6 310.7 208.8C309.7 212.0 308.9 215.3 308.4 218.6C308.0 221.8 307.9 225.2 308.1 228.5C308.3 231.8 309.2 235.0 309.8 238.3C310.3 241.6 310.9 244.9 311.4 248.2C311.8 251.5 312.0 254.9 312.2 258.2C312.4 261.5 313.0 264.7 312.6 267.9C312.3 271.2 310.7 274.3 310.0 277.6C309.4 280.8 309.1 284.2 308.7 287.5C308.4 290.8 308.2 294.1 307.9 297.5C307.5 300.8 307.2 304.1 306.8 307.4C306.5 310.7 306.1 314.7 305.9 317.4C305.7 320.0 305.7 322.4 305.7 323.4 M489.5 281.2C490.4 282.5 493.6 286.4 495.1 289.4C496.7 292.3 497.8 295.5 498.7 298.7C499.6 301.9 500.0 305.2 500.7 308.5C501.3 311.8 501.8 315.1 502.6 318.3C503.3 321.6 504.3 324.8 505.1 328.0C505.9 331.2 507.0 334.4 507.6 337.7C508.3 340.9 508.7 344.2 508.9 347.6C509.2 350.9 509.0 354.2 509.2 357.6C509.3 360.9 509.5 364.2 510.0 367.5C510.5 370.8 511.4 374.0 512.2 377.3C513.0 380.5 514.1 383.7 514.8 386.9C515.5 390.2 516.0 394.2 516.2 396.8C516.5 399.5 516.4 401.8 516.5 402.8 M324.1 367.2C324.3 368.9 324.9 373.8 325.2 377.2C325.6 380.5 326.0 383.8 326.0 387.1C326.0 390.5 325.6 393.8 325.3 397.1C324.9 400.4 324.2 403.7 323.9 407.0C323.6 410.3 323.3 413.7 323.4 417.0C323.4 420.3 323.9 423.6 324.3 426.9C324.6 430.3 325.2 433.6 325.4 436.9C325.5 440.2 325.5 443.5 325.2 446.9C325.0 450.2 324.4 453.5 324.0 456.8C323.5 460.1 322.9 463.7 322.5 466.7C322.2 469.7 322.0 473.3 321.9 474.6 M252.3 358.0C252.5 359.6 253.0 364.6 253.3 367.9C253.7 371.2 253.9 374.6 254.2 377.9C254.6 381.2 254.9 384.5 255.4 387.8C255.9 391.1 256.6 394.4 257.3 397.6C258.0 400.9 258.8 404.1 259.7 407.4C260.5 410.6 261.5 413.8 262.3 417.0C263.1 420.2 263.9 423.5 264.7 426.7C265.5 429.9 266.4 433.2 267.2 436.4C268.1 439.6 269.0 442.8 269.8 446.0C270.6 449.3 271.4 452.5 272.0 455.8C272.6 459.1 273.3 463.7 273.6 465.7C273.9 467.7 273.8 467.3 273.8 467.7 M330.4 130.0C329.2 131.1 325.0 134.0 322.8 136.5C320.7 138.9 318.9 141.9 317.3 144.8C315.8 147.7 314.7 150.9 313.4 154.0C312.0 157.0 310.7 160.1 309.1 163.0C307.4 165.9 305.6 168.7 303.6 171.4C301.7 174.1 299.3 176.4 297.4 179.2C295.5 181.9 293.7 184.7 292.4 187.8C291.1 190.8 290.5 194.2 289.7 197.4C288.9 200.6 288.5 204.0 287.6 207.2C286.8 210.4 285.7 213.6 284.6 216.7C283.5 219.8 281.9 222.9 281.0 226.1C280.2 229.3 279.6 232.6 279.4 235.9C279.3 239.2 279.7 242.6 279.9 245.9C280.1 249.2 280.5 252.5 280.5 255.9C280.4 259.2 280.9 263.0 279.6 265.8C278.3 268.7 274.8 270.4 272.7 273.0C270.6 275.6 268.5 278.3 267.0 281.2C265.5 284.1 264.6 287.4 263.9 290.7C263.1 293.9 263.0 297.3 262.5 300.6C262.0 303.9 261.5 307.5 261.0 310.5C260.5 313.4 259.5 317.0 259.3 318.3 M288.6 285.6C288.1 287.2 286.8 292.0 285.7 295.1C284.5 298.3 282.8 301.2 281.6 304.3C280.4 307.4 279.0 310.5 278.5 313.7C277.9 317.0 278.4 320.4 278.5 323.7C278.5 327.0 278.5 330.4 278.6 333.7C278.7 337.0 279.2 340.4 279.0 343.7C278.8 347.0 278.0 350.3 277.4 353.5C276.7 356.8 275.5 360.0 275.0 363.3C274.6 366.5 274.9 371.2 274.9 373.2C274.9 375.2 275.0 374.9 275.0 375.2 M491.4 115.8C493.1 116.2 497.9 117.4 501.1 118.2C504.4 119.1 507.6 120.0 510.7 121.1C513.9 122.1 517.1 123.1 520.2 124.3C523.3 125.5 526.4 126.8 529.4 128.2C532.4 129.6 535.4 131.2 538.3 132.8C541.1 134.5 543.9 136.3 546.7 138.2C549.4 140.1 552.1 142.1 554.7 144.2C557.3 146.3 559.8 148.5 562.3 150.7C564.8 152.9 567.2 155.2 569.6 157.5C572.0 159.9 574.4 162.2 576.6 164.7C578.8 167.1 581.0 169.7 583.0 172.4C585.0 175.0 587.0 177.7 588.8 180.5C590.6 183.3 592.4 186.1 594.0 189.0C595.6 191.9 597.1 194.9 598.5 197.9C600.0 200.9 601.3 204.0 602.5 207.1C603.7 210.2 604.8 213.4 605.8 216.5C606.8 219.7 607.7 223.0 608.4 226.2C609.1 229.5 609.7 233.8 610.1 236.1C610.5 238.4 610.5 239.4 610.6 240.0 M447.1 129.3C445.6 130.0 440.9 131.8 438.0 133.4C435.0 135.0 432.2 136.7 429.5 138.7C426.8 140.6 424.2 142.8 421.9 145.1C419.5 147.5 417.3 150.1 415.3 152.7C413.3 155.3 411.4 158.1 409.7 161.0C408.1 163.9 406.6 166.9 405.3 169.9C404.0 173.0 402.9 176.2 401.9 179.3C400.9 182.5 399.9 186.7 399.3 189.0C398.7 191.2 398.4 192.2 398.2 192.9 M494.4 154.1C496.0 154.6 500.7 156.3 503.8 157.5C506.9 158.7 510.0 159.9 513.1 161.3C516.1 162.7 519.1 164.2 521.9 165.9C524.8 167.6 527.5 169.5 530.2 171.5C532.8 173.5 535.4 175.7 537.8 177.9C540.3 180.2 542.7 182.5 545.1 184.8C547.4 187.2 549.6 189.7 551.8 192.3C553.9 194.9 555.9 197.5 557.7 200.3C559.5 203.1 561.6 207.3 562.5 209.1C563.4 210.9 563.1 210.6 563.3 210.9 M349.1 126.8C347.9 127.8 343.9 130.9 341.6 133.3C339.2 135.6 337.1 138.2 335.1 140.9C333.1 143.5 331.3 146.4 329.5 149.2C327.7 152.0 326.0 154.8 324.3 157.7C322.5 160.5 320.8 163.4 319.2 166.3C317.7 169.3 316.1 172.2 314.7 175.3C313.4 178.3 312.2 181.4 311.1 184.6C309.9 187.7 308.9 190.9 307.7 194.0C306.5 197.1 305.0 200.8 304.0 203.3C303.0 205.7 301.9 207.8 301.5 208.7 M545.5 180.0C546.6 181.3 550.0 184.9 552.0 187.6C554.0 190.2 555.9 193.0 557.5 195.9C559.1 198.8 560.5 201.9 561.7 205.0C562.9 208.1 563.9 211.3 564.7 214.5C565.5 217.7 566.1 221.0 566.6 224.3C567.1 227.6 567.4 230.9 567.7 234.3C568.0 237.6 568.2 240.9 568.4 244.2C568.5 247.6 568.6 250.9 568.7 254.2C568.8 257.6 567.8 261.2 568.7 264.2C569.6 267.3 572.4 269.8 574.0 272.8C575.5 275.7 576.9 278.7 578.1 281.8C579.4 284.9 580.6 288.0 581.6 291.2C582.6 294.4 583.5 297.6 584.2 300.9C584.9 304.1 585.4 307.4 585.7 310.7C586.0 314.1 586.0 317.4 585.9 320.7C585.8 324.1 585.4 327.4 585.2 330.7C584.9 334.0 584.5 338.0 584.2 340.7C583.9 343.3 583.7 345.6 583.6 346.6 M507.9 124.4C506.3 124.6 501.2 125.0 498.0 125.7C494.7 126.4 491.6 127.4 488.4 128.5C485.3 129.5 482.2 130.8 479.1 132.1C476.0 133.3 473.0 134.8 469.9 136.1C466.9 137.4 463.8 138.6 460.8 140.1C457.8 141.5 454.8 143.1 452.0 144.9C449.2 146.7 446.5 148.7 444.1 151.0C441.7 153.2 439.5 155.8 437.5 158.5C435.5 161.1 433.7 164.0 432.1 166.9C430.4 169.8 429.0 172.8 427.6 175.8C426.3 178.9 425.3 182.1 424.2 185.2C423.0 188.3 421.5 192.7 420.8 194.6C420.1 196.5 420.2 196.2 420.1 196.5 M525.0 115.9C526.5 116.6 531.1 118.5 534.1 119.9C537.1 121.4 540.1 122.9 543.0 124.5C546.0 126.1 548.8 127.7 551.7 129.5C554.5 131.3 557.2 133.2 559.9 135.1C562.7 137.1 565.3 139.1 567.9 141.1C570.5 143.2 573.1 145.3 575.6 147.6C578.1 149.8 580.5 152.0 582.9 154.4C585.3 156.7 588.2 159.9 589.8 161.6C591.4 163.3 592.0 164.1 592.4 164.6 M538.2 266.1C539.3 267.4 542.6 271.1 544.4 273.9C546.3 276.6 548.1 279.5 549.5 282.5C550.9 285.5 552.1 288.7 553.0 291.9C553.8 295.1 554.3 298.4 554.6 301.7C554.9 305.0 554.9 308.4 554.8 311.7C554.7 315.0 554.3 318.4 554.1 321.7C554.0 325.0 553.8 328.3 553.9 331.7C553.9 335.0 554.2 338.3 554.5 341.7C554.7 345.0 555.1 348.3 555.3 351.6C555.4 355.0 555.3 360.0 555.4 361.6 M497.4 114.9C498.8 115.8 503.0 118.5 505.7 120.4C508.4 122.4 511.1 124.3 513.8 126.4C516.4 128.4 519.0 130.5 521.5 132.7C524.0 134.9 526.4 137.2 528.8 139.6C531.1 141.9 533.4 144.4 535.5 146.9C537.7 149.5 539.8 152.1 541.8 154.7C543.8 157.4 545.8 160.1 547.6 162.9C549.5 165.6 551.3 168.4 553.0 171.3C554.7 174.2 556.3 177.1 557.7 180.1C559.1 183.1 560.4 186.2 561.5 189.4C562.6 192.5 563.5 195.7 564.2 199.0C565.0 202.2 565.6 205.5 566.0 208.8C566.4 212.1 566.7 215.5 566.8 218.8C566.9 222.1 566.8 225.8 566.6 228.8C566.4 231.8 565.9 235.4 565.8 236.7 M306.5 266.5C306.2 268.2 305.2 273.1 304.9 276.4C304.5 279.7 304.3 283.1 304.5 286.4C304.7 289.7 305.3 293.0 306.1 296.2C306.9 299.4 308.1 302.6 309.1 305.7C310.2 308.9 311.3 312.1 312.4 315.2C313.5 318.3 314.6 321.5 315.8 324.6C317.0 327.7 318.3 330.8 319.8 333.8C321.2 336.8 323.0 339.6 324.6 342.5C326.2 345.5 328.0 348.3 329.5 351.2C331.1 354.2 332.5 357.2 333.9 360.2C335.2 363.3 336.2 366.5 337.4 369.6C338.6 372.7 339.8 375.8 341.2 378.8C342.6 381.9 344.3 384.7 345.9 387.7C347.5 390.6 349.2 393.4 350.7 396.4C352.2 399.4 353.5 402.5 354.8 405.6C356.0 408.7 357.4 412.8 358.3 414.9C359.1 417.1 359.5 418.0 359.8 418.6 M316.0 360.7C316.1 362.4 316.5 367.4 316.3 370.7C316.2 374.0 315.4 377.3 315.1 380.6C314.8 383.9 314.5 387.3 314.6 390.6C314.7 393.9 315.3 397.2 315.5 400.5C315.8 403.9 315.8 407.2 316.1 410.5C316.3 413.8 317.0 417.1 317.1 420.5C317.3 423.8 317.2 427.1 316.9 430.4C316.7 433.8 315.9 437.0 315.6 440.4C315.4 443.7 315.6 448.4 315.6 450.4C315.6 452.3 315.8 452.0 315.8 452.3 M548.2 151.0C549.7 151.6 554.3 153.5 557.4 154.8C560.5 156.0 563.6 157.2 566.6 158.6C569.6 160.0 572.7 161.5 575.5 163.3C578.2 165.1 580.9 167.2 583.4 169.4C585.8 171.7 588.0 174.2 590.0 176.9C592.0 179.5 593.8 182.4 595.5 185.2C597.2 188.1 598.6 191.1 600.1 194.1C601.6 197.1 603.3 200.0 604.6 203.0C605.9 206.1 607.0 209.3 607.9 212.4C608.9 215.6 609.5 218.9 610.3 222.2C611.1 225.4 611.8 228.7 612.7 231.9C613.6 235.1 614.6 238.3 615.7 241.4C616.7 244.6 618.0 247.7 619.2 250.8C620.4 253.9 621.4 257.2 622.9 260.1C624.3 263.0 626.8 266.7 627.9 268.3C629.0 269.9 629.1 269.4 629.4 269.6 M354.8 92.8C353.4 93.8 349.5 96.8 346.8 98.8C344.1 100.8 341.3 102.7 338.6 104.6C335.9 106.5 333.1 108.4 330.5 110.4C327.8 112.4 325.1 114.4 322.6 116.6C320.2 118.8 317.7 121.1 315.6 123.7C313.5 126.2 311.6 129.0 309.8 131.8C308.1 134.7 306.7 137.7 305.2 140.7C303.8 143.7 302.7 146.9 301.2 149.9C299.7 152.8 297.9 155.6 296.1 158.4C294.3 161.3 292.4 164.0 290.6 166.8C288.8 169.6 287.0 172.4 285.3 175.3C283.7 178.2 282.1 181.1 280.8 184.2C279.5 187.3 278.5 190.4 277.6 193.7C276.8 196.9 276.3 200.2 275.8 203.5C275.3 206.8 275.1 210.1 274.8 213.4C274.5 216.8 274.3 220.1 274.0 223.4C273.7 226.7 273.3 230.0 273.0 233.4C272.7 236.7 272.3 240.0 272.1 243.3C271.8 246.6 271.6 250.0 271.6 253.3C271.6 256.6 272.4 260.4 272.1 263.3C271.8 266.2 270.1 269.4 269.7 270.7 M484.7 338.7C485.1 340.3 486.5 345.1 487.2 348.3C487.8 351.6 487.8 355.0 488.5 358.2C489.3 361.5 490.3 364.6 491.4 367.8C492.5 370.9 494.0 373.9 494.9 377.1C495.8 380.3 496.1 383.7 496.6 387.0C497.2 390.3 497.5 393.6 498.4 396.8C499.3 400.0 500.8 403.0 502.0 406.2C503.1 409.3 504.6 413.7 505.2 415.6C505.8 417.5 505.6 417.2 505.6 417.5 M488.2 117.6C489.8 118.1 494.6 119.5 497.8 120.5C501.0 121.4 504.2 122.2 507.4 123.1C510.6 124.0 513.9 124.9 517.0 126.0C520.2 127.1 523.3 128.3 526.3 129.7C529.3 131.2 532.1 132.9 534.9 134.8C537.7 136.6 540.3 138.7 542.9 140.8C545.5 142.8 548.0 145.0 550.6 147.1C553.2 149.2 555.8 151.3 558.4 153.4C561.0 155.5 563.6 157.6 566.0 159.9C568.4 162.2 570.6 164.8 572.6 167.4C574.7 170.0 576.5 172.8 578.4 175.6C580.2 178.3 582.0 181.1 583.8 184.0C585.6 186.8 587.3 189.6 589.0 192.5C590.7 195.3 592.5 198.2 594.0 201.2C595.5 204.1 596.9 207.2 598.0 210.3C599.2 213.4 600.1 217.7 600.7 219.9C601.2 222.2 601.2 223.2 601.3 223.9 M493.5 170.3C493.6 171.8 494.0 176.2 494.0 179.2C494.0 182.1 493.7 185.0 493.7 188.0C493.6 191.0 493.5 194.1 493.7 197.1C493.8 200.2 494.3 203.2 494.4 206.4C494.4 209.6 493.9 213.1 494.0 216.4C494.2 219.6 494.2 222.9 495.1 226.0C496.1 229.1 498.6 231.8 499.8 234.8C500.9 237.9 501.7 241.3 502.1 244.5C502.6 247.8 502.5 251.2 502.3 254.5C502.2 257.8 500.6 261.3 501.1 264.4C501.6 267.6 503.9 270.5 505.3 273.5C506.7 276.6 508.2 279.5 509.3 282.7C510.4 285.8 511.3 289.1 511.9 292.3C512.5 295.6 512.7 299.0 512.9 302.3C513.0 305.6 512.9 308.9 512.9 312.3C512.8 315.6 512.6 318.9 512.5 322.3C512.5 325.6 512.6 328.9 512.7 332.3C512.8 335.6 513.2 338.9 513.4 342.2C513.7 345.6 514.0 348.9 514.1 352.2C514.2 355.5 514.2 358.9 514.0 362.2C513.8 365.5 513.4 368.9 513.0 372.2C512.6 375.5 511.9 378.7 511.4 382.0C510.9 385.3 510.1 389.9 509.8 391.9C509.5 393.9 509.6 393.6 509.6 393.9 M523.4 300.8C523.1 302.4 522.2 307.3 521.6 310.6C521.0 313.9 520.2 317.1 519.8 320.4C519.5 323.7 519.5 327.1 519.6 330.4C519.6 333.7 520.1 337.1 520.1 340.4C520.1 343.7 520.1 347.1 519.6 350.4C519.0 353.6 518.0 356.8 517.0 360.0C516.1 363.2 514.7 366.3 513.8 369.5C512.9 372.7 512.3 376.0 511.4 379.2C510.5 382.4 509.3 385.5 508.3 388.7C507.3 391.9 506.1 395.0 505.5 398.3C504.9 401.5 504.6 404.9 504.5 408.2C504.4 411.5 504.9 416.5 505.0 418.2 M353.0 327.0C352.9 328.7 352.8 333.7 352.6 337.0C352.4 340.3 352.0 343.6 351.8 347.0C351.6 350.3 351.4 353.6 351.5 356.9C351.7 360.3 352.0 363.6 352.6 366.9C353.1 370.2 354.0 373.4 354.8 376.6C355.7 379.8 356.8 383.0 357.8 386.2C358.7 389.4 359.5 392.6 360.4 395.8C361.4 399.0 362.4 402.2 363.3 405.4C364.2 408.6 365.3 411.8 366.1 415.0C366.8 418.2 367.5 421.5 367.9 424.8C368.3 428.1 368.4 431.5 368.4 434.8C368.3 438.1 368.0 441.5 367.8 444.8C367.6 448.1 367.2 451.4 367.0 454.8C366.9 458.1 366.8 461.4 367.1 464.8C367.3 468.1 368.2 473.0 368.4 474.7 M444.7 96.9C443.2 97.5 438.4 99.1 435.3 100.2C432.2 101.4 429.0 102.5 425.9 103.8C422.9 105.0 419.8 106.3 416.8 107.8C413.8 109.3 410.9 110.9 408.1 112.6C405.2 114.4 402.5 116.3 399.8 118.3C397.1 120.2 394.5 122.3 392.0 124.5C389.6 126.8 387.2 129.2 385.0 131.6C382.7 134.1 380.6 136.7 378.7 139.4C376.8 142.1 375.0 145.0 373.5 147.9C372.0 150.9 370.7 154.0 369.7 157.2C368.6 160.3 367.9 163.6 367.1 166.8C366.4 170.1 365.8 173.4 365.2 176.6C364.6 179.9 364.0 183.2 363.5 186.5C362.9 189.8 362.3 193.1 361.8 196.4C361.3 199.7 360.8 203.3 360.5 206.3C360.1 209.2 359.8 212.9 359.6 214.2 M280.9 301.0C280.4 302.6 278.8 307.4 278.1 310.6C277.3 313.8 276.9 317.2 276.4 320.4C275.9 323.7 275.6 327.1 275.1 330.4C274.7 333.7 274.2 337.0 273.8 340.3C273.3 343.6 272.9 346.9 272.4 350.2C272.0 353.5 271.5 356.8 271.1 360.1C270.7 363.4 270.3 366.7 269.8 370.0C269.4 373.3 269.0 376.6 268.5 379.9C268.1 383.2 267.6 386.5 267.1 389.8C266.7 393.1 266.2 396.4 265.8 399.7C265.3 403.0 264.9 406.3 264.4 409.6C264.0 413.0 263.6 416.3 263.1 419.6C262.7 422.9 262.3 426.2 261.9 429.5C261.4 432.8 261.0 436.1 260.5 439.4C260.1 442.7 259.6 446.0 259.2 449.3C258.7 452.6 258.1 457.2 257.9 459.2C257.6 461.2 257.6 460.9 257.6 461.2 M287.0 233.1C287.3 234.8 288.5 239.6 289.2 242.9C289.8 246.2 290.0 249.5 290.7 252.8C291.4 256.0 292.9 259.2 293.3 262.4C293.7 265.7 293.2 268.9 293.2 272.2C293.1 275.5 293.2 278.9 293.2 282.2C293.2 285.5 293.2 288.9 293.1 292.2C293.1 295.5 292.7 298.9 292.9 302.2C293.0 305.5 293.3 308.9 294.1 312.1C295.0 315.3 296.5 318.3 297.9 321.3C299.3 324.3 301.2 327.1 302.6 330.2C304.0 333.2 305.4 336.2 306.4 339.4C307.4 342.6 308.0 345.9 308.7 349.1C309.5 352.4 310.0 355.7 311.0 358.9C312.0 362.0 313.3 365.1 314.7 368.1C316.1 371.1 318.0 374.0 319.4 377.0C320.9 380.0 322.3 383.0 323.4 386.1C324.5 389.3 325.2 392.5 326.0 395.8C326.7 399.0 327.3 402.7 328.1 405.5C328.9 408.4 330.3 411.8 330.8 413.1 M254.4 335.7C254.8 337.3 256.2 342.1 256.7 345.4C257.3 348.7 257.5 352.0 257.8 355.3C258.0 358.7 257.7 362.0 258.0 365.3C258.2 368.6 258.6 372.0 259.3 375.2C259.9 378.5 260.8 381.7 261.7 384.9C262.6 388.1 263.7 391.3 264.5 394.5C265.2 397.8 266.0 401.0 266.4 404.3C266.9 407.6 267.0 411.0 267.1 414.3C267.2 417.6 266.9 421.0 266.8 424.3C266.7 427.6 266.5 431.0 266.6 434.3C266.7 437.6 267.0 441.0 267.5 444.3C268.0 447.5 268.8 450.8 269.7 454.0C270.5 457.2 271.8 461.4 272.4 463.6C273.1 465.9 273.3 466.8 273.5 467.5 M624.1 214.8C624.5 216.4 625.6 221.3 626.6 224.5C627.6 227.7 628.9 230.7 630.3 233.8C631.6 236.8 633.4 239.7 634.7 242.7C636.1 245.8 637.5 248.8 638.4 252.0C639.3 255.2 639.2 258.7 640.2 261.8C641.2 264.9 643.1 267.6 644.6 270.6C646.0 273.5 647.7 276.5 649.0 279.5C650.4 282.6 651.6 285.7 652.7 288.8C653.8 292.0 654.6 295.2 655.7 298.4C656.8 301.5 658.6 306.2 659.2 307.7 M443.5 108.4C445.1 108.8 449.9 110.1 453.1 111.2C456.2 112.2 459.3 113.5 462.4 114.8C465.5 116.0 468.6 117.3 471.6 118.6C474.7 119.9 477.9 121.0 480.8 122.7C483.6 124.4 486.4 126.3 488.8 128.6C491.1 130.9 492.5 134.2 494.9 136.5C497.3 138.8 500.4 140.3 503.0 142.3C505.7 144.3 508.3 146.3 510.8 148.6C513.3 150.8 515.5 153.3 517.9 155.7C520.2 158.0 522.5 160.4 524.8 162.8C527.1 165.3 529.4 167.7 531.5 170.3C533.5 172.9 535.4 175.7 537.0 178.6C538.7 181.5 540.1 184.5 541.5 187.5C542.9 190.5 544.8 195.2 545.5 196.7 M477.0 78.1C478.6 78.3 483.6 79.3 486.9 79.6C490.2 79.9 493.5 80.0 496.8 80.0C500.2 79.9 503.5 79.2 506.8 79.5C510.1 79.7 513.4 80.5 516.6 81.4C519.8 82.3 522.9 83.8 526.1 84.6C529.3 85.4 532.7 85.5 535.9 86.4C539.1 87.3 542.1 88.8 545.2 90.1C548.2 91.4 551.1 93.1 554.3 94.2C557.4 95.3 562.0 96.1 564.0 96.6C565.9 97.1 565.6 97.0 565.9 97.1 M341.5 408.0C341.4 409.6 341.1 414.6 341.0 417.9C340.8 421.3 340.6 424.6 340.6 427.9C340.6 431.3 340.8 434.6 340.9 437.9C341.1 441.3 341.4 444.6 341.6 447.9C341.8 451.2 342.0 454.6 342.0 457.9C342.1 461.2 342.0 464.9 342.0 467.9C342.0 470.9 342.2 474.6 342.2 475.9 M500.4 368.7C500.4 370.4 500.5 375.4 500.4 378.7C500.3 382.1 500.0 385.4 499.6 388.7C499.2 392.0 498.6 395.3 498.1 398.6C497.6 401.9 497.1 405.2 496.7 408.5C496.3 411.8 496.0 415.1 495.6 418.4C495.2 421.7 494.6 425.7 494.2 428.3C493.9 431.0 493.5 433.3 493.3 434.2 M444.1 67.9C445.7 67.8 450.7 67.4 454.0 67.5C457.4 67.7 460.7 68.3 464.0 68.8C467.3 69.3 470.5 70.0 473.8 70.4C477.1 70.8 480.5 70.7 483.8 71.1C487.1 71.4 490.5 71.6 493.7 72.3C497.0 72.9 500.1 74.1 503.4 74.8C506.6 75.5 510.0 75.9 513.2 76.6C516.5 77.4 519.7 78.1 522.8 79.3C526.0 80.4 528.9 82.1 531.8 83.6C534.8 85.1 538.0 86.9 540.8 88.1C543.5 89.4 547.0 90.6 548.2 91.1 M552.0 219.8C552.4 221.5 553.7 226.3 554.3 229.6C554.8 232.8 555.2 236.2 555.2 239.5C555.2 242.8 554.8 246.2 554.1 249.4C553.5 252.7 551.9 255.8 551.3 259.0C550.6 262.2 550.0 265.3 550.3 268.5C550.6 271.7 552.1 274.9 553.0 278.1C554.0 281.3 555.1 284.5 556.0 287.7C556.9 290.9 557.9 294.1 558.5 297.4C559.0 300.6 559.3 304.0 559.1 307.3C558.9 310.6 558.1 313.9 557.3 317.1C556.4 320.3 554.9 323.4 553.8 326.5C552.7 329.6 551.7 332.8 550.6 336.0C549.5 339.1 548.3 342.2 547.1 345.4C546.0 348.5 544.8 351.6 543.9 354.8C543.0 358.0 542.4 361.3 541.9 364.6C541.4 367.9 541.2 372.6 541.1 374.6C540.9 376.6 541.0 376.2 541.0 376.6 M522.2 173.1C523.7 173.9 528.2 176.1 530.9 178.0C533.6 180.0 536.1 182.3 538.4 184.7C540.7 187.0 542.7 189.7 544.7 192.4C546.7 195.0 548.6 197.8 550.6 200.5C552.5 203.2 554.5 205.9 556.5 208.5C558.5 211.2 560.7 213.7 562.7 216.4C564.8 219.0 566.9 221.6 568.8 224.3C570.7 227.0 572.6 229.8 574.1 232.7C575.6 235.7 577.0 238.8 577.9 242.0C578.9 245.2 579.4 248.5 579.8 251.8C580.2 255.1 579.5 258.6 580.2 261.8C580.9 264.9 582.2 267.8 583.9 270.5C585.6 273.3 588.1 275.7 590.3 278.3C592.4 280.8 594.7 283.2 596.9 285.7C599.2 288.2 601.5 290.6 603.5 293.2C605.6 295.8 607.6 298.5 609.3 301.4C610.9 304.3 612.3 307.4 613.2 310.5C614.2 313.7 614.6 317.1 614.9 320.4C615.2 323.7 614.9 327.1 614.9 330.4C614.9 333.7 614.7 338.4 614.7 340.4C614.6 342.4 614.7 342.0 614.7 342.4 M322.4 258.4C321.6 259.8 319.7 264.2 317.4 266.4C315.2 268.7 311.7 269.9 309.0 271.9C306.4 273.8 303.7 275.9 301.5 278.4C299.2 280.8 297.4 283.7 295.8 286.6C294.1 289.4 292.9 292.6 291.4 295.5C289.8 298.5 288.3 301.5 286.7 304.4C285.0 307.3 283.1 310.0 281.6 313.0C280.0 315.9 278.6 318.9 277.5 322.1C276.4 325.2 276.0 328.6 275.0 331.7C273.9 334.9 272.7 338.0 271.4 341.1C270.1 344.1 268.4 347.1 267.2 350.2C266.0 353.3 264.9 356.4 264.2 359.7C263.4 362.9 263.2 366.3 262.6 369.5C262.1 372.8 261.8 376.2 260.9 379.4C260.1 382.6 259.0 385.8 257.7 388.8C256.5 391.9 254.8 394.8 253.5 397.9C252.2 401.0 251.0 404.1 250.1 407.3C249.2 410.5 248.8 413.9 248.3 417.1C247.7 420.4 247.5 423.8 246.8 427.0C246.1 430.3 244.9 434.1 244.0 436.6C243.1 439.1 242.0 441.2 241.6 442.1 M481.9 125.4C480.3 124.9 475.5 123.4 472.4 122.4C469.2 121.3 466.1 120.1 462.9 119.3C459.7 118.4 456.4 117.7 453.1 117.4C449.8 117.1 446.4 117.2 443.1 117.4C439.8 117.7 436.5 118.2 433.2 118.7C429.9 119.2 426.6 119.9 423.3 120.4C420.0 120.9 416.7 121.4 413.4 121.8C410.1 122.1 406.8 122.3 403.4 122.4C400.1 122.5 396.1 122.4 393.4 122.4C390.8 122.5 388.4 122.5 387.4 122.5 M340.9 114.1C339.6 115.2 335.9 118.5 333.2 120.5C330.6 122.5 327.7 124.3 325.0 126.2C322.3 128.2 319.5 130.0 317.0 132.2C314.5 134.4 312.0 136.7 310.0 139.3C308.0 142.0 306.4 144.9 305.0 148.0C303.7 151.0 302.9 154.3 302.0 157.5C301.0 160.7 300.4 164.0 299.2 167.1C298.0 170.1 296.2 173.0 294.5 175.9C292.8 178.7 290.8 181.4 288.9 184.2C287.1 186.9 285.0 189.6 283.3 192.4C281.6 195.3 279.9 198.2 278.8 201.3C277.6 204.4 276.8 207.8 276.4 211.0C276.0 214.3 276.1 217.7 276.1 221.0C276.1 224.3 276.4 227.7 276.3 231.0C276.2 234.3 276.0 237.7 275.6 241.0C275.2 244.3 274.4 247.5 273.8 250.8C273.1 254.1 272.6 257.4 271.8 260.6C270.9 263.8 269.9 266.8 268.7 269.8C267.5 272.8 265.5 275.7 264.5 278.8C263.4 281.9 262.9 285.3 262.4 288.6C261.8 291.9 261.7 295.2 261.3 298.5C260.9 301.8 260.5 305.1 260.0 308.4C259.5 311.7 258.8 315.0 258.2 318.3C257.6 321.5 256.9 324.8 256.4 328.1C255.9 331.4 255.4 334.7 255.4 338.1C255.3 341.4 255.8 346.4 255.9 348.0 M303.2 202.2C303.1 203.9 302.6 208.9 302.4 212.2C302.2 215.5 301.9 218.9 302.0 222.2C302.2 225.5 302.7 228.8 303.2 232.1C303.6 235.4 304.0 238.7 304.6 242.0C305.1 245.3 305.7 248.5 306.4 251.8C307.1 255.1 308.6 258.3 308.8 261.5C309.0 264.7 308.2 267.9 307.7 271.1C307.1 274.3 306.0 277.5 305.6 280.8C305.1 284.1 305.1 287.5 305.1 290.8C305.1 294.1 305.4 298.5 305.6 300.8C305.7 303.1 305.8 304.1 305.9 304.8 M353.3 390.4C353.0 392.0 352.3 397.0 351.7 400.3C351.1 403.5 350.2 406.8 349.6 410.0C349.1 413.3 348.7 416.7 348.6 420.0C348.5 423.3 348.8 426.6 349.1 430.0C349.3 433.3 349.8 436.6 350.1 439.9C350.3 443.2 350.7 446.6 350.7 449.9C350.7 453.2 350.5 456.6 350.0 459.9C349.6 463.1 348.6 466.7 348.1 469.7C347.5 472.6 346.8 476.2 346.5 477.5 M401.3 102.3C402.9 102.6 407.9 103.1 411.1 103.9C414.3 104.7 417.5 105.9 420.6 107.0C423.7 108.2 426.7 109.7 429.8 110.9C433.0 112.0 436.1 113.3 439.3 114.1C442.5 114.9 445.9 115.4 449.2 115.7C452.5 116.1 455.8 116.0 459.1 116.3C462.5 116.5 465.8 116.7 469.1 117.5C472.3 118.2 475.6 119.1 478.5 120.6C481.5 122.1 484.2 124.1 486.6 126.4C489.0 128.6 490.6 131.8 492.9 134.1C495.3 136.4 498.0 138.3 500.7 140.2C503.4 142.1 506.6 143.4 509.3 145.4C511.9 147.4 514.3 149.7 516.6 152.1C518.9 154.5 520.9 157.3 523.0 159.8C525.1 162.4 527.1 165.1 529.3 167.6C531.6 170.0 533.9 172.4 536.3 174.7C538.7 177.1 541.3 179.2 543.5 181.6C545.8 184.1 548.1 186.6 549.8 189.4C551.6 192.2 553.0 195.3 553.9 198.5C554.9 201.6 555.2 205.0 555.5 208.3C555.8 211.6 555.6 215.0 555.6 218.3C555.7 221.6 555.7 225.3 555.8 228.3C555.9 231.3 556.3 235.0 556.4 236.3 M319.0 241.5C319.1 243.1 319.6 248.1 319.8 251.5C320.1 254.8 321.1 258.3 320.5 261.4C319.9 264.5 317.8 267.2 316.2 270.1C314.7 273.0 312.7 275.8 311.2 278.8C309.6 281.7 308.2 284.7 306.9 287.8C305.6 290.9 304.4 294.0 303.5 297.2C302.7 300.4 302.0 303.7 301.7 307.0C301.5 310.3 301.6 313.7 301.8 317.0C302.1 320.3 302.9 323.6 303.4 326.9C303.9 330.2 304.5 333.5 304.9 336.8C305.3 340.1 305.6 343.4 305.7 346.7C305.9 350.1 305.8 355.1 305.8 356.7 M586.4 176.2C587.5 177.4 591.3 180.8 593.2 183.5C595.1 186.2 596.5 189.3 597.8 192.4C599.0 195.5 599.5 198.8 600.5 202.0C601.4 205.2 602.4 208.4 603.6 211.5C604.8 214.6 606.4 217.6 607.5 220.7C608.6 223.8 609.7 227.1 610.1 230.3C610.6 233.6 610.3 237.0 610.3 240.3C610.3 243.6 609.8 247.0 610.0 250.3C610.1 253.6 610.3 257.1 611.1 260.2C611.9 263.4 613.4 266.2 614.9 269.0C616.5 271.9 619.0 274.4 620.4 277.4C621.8 280.3 622.5 283.7 623.5 286.9C624.4 290.1 625.0 293.4 626.0 296.5C627.0 299.7 628.3 302.8 629.3 306.0C630.3 309.2 631.4 312.4 631.8 315.6C632.1 318.9 631.8 322.3 631.5 325.6C631.2 328.9 630.4 332.2 630.2 335.5C630.0 338.8 630.3 343.8 630.3 345.5 M467.5 137.9C468.8 138.9 473.0 141.8 475.4 144.0C477.9 146.3 480.2 148.7 482.2 151.4C484.2 154.0 486.0 156.9 487.5 159.8C489.0 162.8 490.3 165.9 491.2 169.1C492.1 172.3 491.4 176.5 493.0 178.9C494.5 181.3 497.9 181.9 500.7 183.4C503.5 184.8 506.8 186.1 509.8 187.6C512.7 189.2 515.6 190.8 518.4 192.7C521.1 194.5 523.8 196.5 526.3 198.7C528.8 200.9 531.2 203.3 533.3 205.8C535.5 208.4 537.4 211.1 539.1 214.0C540.8 216.8 542.3 219.9 543.6 222.9C544.9 226.0 546.2 230.5 546.8 232.4C547.5 234.3 547.3 234.0 547.4 234.3 M292.1 244.8C292.1 246.5 291.8 251.5 291.7 254.8C291.6 258.1 292.4 261.7 291.5 264.8C290.6 267.9 287.9 270.4 286.4 273.4C284.9 276.4 283.6 279.5 282.4 282.6C281.1 285.6 280.0 288.8 279.0 292.0C278.1 295.2 277.1 298.4 276.5 301.6C275.8 304.9 275.4 308.2 275.2 311.5C275.0 314.9 275.2 318.2 275.3 321.5C275.4 324.9 275.6 328.2 275.6 331.5C275.7 334.9 275.6 338.2 275.6 341.5C275.6 344.9 275.5 348.2 275.5 351.5C275.6 354.9 275.7 358.2 275.9 361.5C276.0 364.9 276.2 368.2 276.3 371.5C276.4 374.9 276.4 378.2 276.4 381.5C276.4 384.9 276.3 388.9 276.3 391.5C276.3 394.2 276.4 396.5 276.4 397.5 M471.7 50.0C470.1 50.4 465.2 51.3 461.9 52.0C458.6 52.7 455.4 53.6 452.1 54.2C448.9 54.8 445.6 55.4 442.3 55.7C438.9 56.0 435.6 56.0 432.3 56.0C428.9 56.0 425.6 55.7 422.3 55.7C418.9 55.7 415.6 55.6 412.3 55.9C409.0 56.2 405.7 56.8 402.5 57.7C399.3 58.6 396.2 60.1 393.1 61.2C389.9 62.2 386.7 63.2 383.5 64.0C380.3 64.9 377.0 65.4 373.7 66.0C370.4 66.7 367.1 67.2 363.9 68.1C360.7 69.0 357.5 70.0 354.5 71.4C351.5 72.8 348.6 74.6 345.9 76.5C343.2 78.5 340.8 80.8 338.3 83.0C335.8 85.2 332.5 88.5 331.1 89.9C329.6 91.3 329.8 91.0 329.6 91.3 M286.8 175.0C285.7 176.3 282.1 179.8 280.1 182.4C278.0 185.1 276.3 188.0 274.8 190.9C273.2 193.8 271.9 196.9 270.6 200.0C269.3 203.1 268.0 206.5 266.9 209.3C265.8 212.1 264.5 215.5 264.0 216.7 M405.3 128.8C406.9 129.1 411.7 130.4 415.0 130.8C418.3 131.3 421.7 131.2 425.0 131.3C428.3 131.4 431.7 131.0 435.0 131.4C438.3 131.9 441.6 132.8 444.7 133.9C447.7 135.1 450.6 137.0 453.5 138.5C456.5 140.0 459.5 141.6 462.4 143.1C465.3 144.7 468.4 146.1 471.2 147.9C473.9 149.8 476.8 151.7 478.8 154.2C480.9 156.8 482.2 160.0 483.4 163.1C484.7 166.1 485.5 169.4 486.4 172.6C487.3 175.8 488.4 179.0 488.9 182.3C489.3 185.6 489.0 188.9 489.0 192.3C489.0 195.6 488.7 199.0 489.1 202.3C489.5 205.6 490.4 208.8 491.2 212.0C492.0 215.3 492.8 218.6 494.0 221.6C495.1 224.7 496.9 227.4 498.3 230.3C499.8 233.2 501.3 236.2 502.8 239.2C504.3 242.2 505.6 245.2 507.2 248.2C508.7 251.2 510.6 253.9 512.0 257.0C513.3 260.0 513.7 263.8 515.1 266.4C516.5 269.1 519.3 271.6 520.1 272.7 M473.9 386.9C473.7 388.5 473.2 393.5 472.5 396.7C471.8 400.0 470.8 403.2 469.9 406.4C468.9 409.6 467.8 412.7 467.0 416.0C466.2 419.2 465.4 422.5 465.0 425.8C464.6 429.0 464.4 432.4 464.4 435.7C464.4 439.1 464.7 442.4 464.8 445.7C464.9 449.0 465.1 454.0 465.1 455.7 M313.7 204.8C312.9 206.3 310.5 210.7 309.1 213.7C307.6 216.7 306.0 219.6 304.9 222.8C303.9 225.9 303.4 229.2 302.9 232.5C302.5 235.8 302.3 239.1 302.1 242.5C301.8 245.8 301.6 249.1 301.4 252.5C301.2 255.8 301.7 259.4 300.7 262.4C299.7 265.5 297.3 267.9 295.4 270.6C293.6 273.3 291.4 276.0 289.7 278.8C288.0 281.6 286.3 284.6 285.0 287.6C283.7 290.7 282.6 293.8 281.7 297.1C280.9 300.3 280.3 303.6 279.9 306.9C279.5 310.2 279.4 313.5 279.3 316.9C279.2 320.2 279.3 323.5 279.3 326.9C279.4 330.2 279.5 333.5 279.6 336.9C279.6 340.2 279.7 343.5 279.6 346.9C279.5 350.2 279.4 353.5 279.1 356.8C278.9 360.2 278.6 363.5 278.2 366.8C277.9 370.1 277.4 373.4 277.1 376.7C276.7 380.1 276.4 383.4 276.2 386.7C275.9 390.0 275.8 393.4 275.7 396.7C275.7 400.0 275.7 403.4 275.8 406.7C275.8 410.0 275.9 413.3 276.0 416.7C276.0 420.0 276.0 423.3 275.9 426.7C275.9 430.0 275.6 433.7 275.4 436.7C275.2 439.7 274.8 443.3 274.6 444.6 M491.6 83.9C489.9 84.0 484.9 84.3 481.6 84.1C478.3 84.0 475.0 83.5 471.7 82.9C468.4 82.3 465.2 81.3 462.0 80.6C458.7 79.8 455.5 78.9 452.2 78.5C448.9 78.1 445.5 77.9 442.2 78.1C438.9 78.3 435.6 78.9 432.3 79.6C429.1 80.2 425.9 81.2 422.6 81.9C419.4 82.6 416.1 83.3 412.8 83.8C409.5 84.3 406.2 84.5 402.8 84.8C399.5 85.0 396.2 85.0 392.9 85.3C389.5 85.6 386.2 86.1 382.9 86.5C379.6 86.9 376.3 87.3 373.0 87.9C369.8 88.4 366.4 89.0 363.3 89.9C360.1 90.9 356.9 92.1 354.0 93.6C351.0 95.1 348.3 97.1 345.6 99.0C342.8 100.9 340.3 103.1 337.6 105.1C334.9 107.0 332.3 109.0 329.5 110.8C326.6 112.6 323.7 114.2 320.7 115.7C317.8 117.3 314.7 118.6 311.8 120.2C308.9 121.9 306.0 123.6 303.4 125.6C300.8 127.6 298.0 130.6 296.1 132.5C294.3 134.4 293.0 136.4 292.4 137.1 M397.6 45.0C399.3 45.0 404.3 44.5 407.6 44.8C410.9 45.1 414.2 45.9 417.4 46.7C420.6 47.6 423.7 49.0 426.9 49.8C430.1 50.7 433.4 51.4 436.7 51.6C440.0 51.9 443.4 51.4 446.7 51.2C450.0 51.0 453.4 50.3 456.7 50.4C460.0 50.5 463.3 51.0 466.5 51.8C469.7 52.7 472.8 54.2 475.9 55.4C478.9 56.7 481.9 58.2 485.0 59.5C488.0 60.9 491.0 62.5 494.1 63.6C497.2 64.7 500.5 65.5 503.8 66.1C507.0 66.8 510.4 66.8 513.7 67.5C516.9 68.2 520.2 68.9 523.3 70.3C526.3 71.6 529.1 73.6 531.8 75.5C534.5 77.4 536.8 79.8 539.5 81.8C542.2 83.7 545.3 85.7 547.9 87.2C550.6 88.6 554.1 89.8 555.3 90.4 M407.1 110.4C408.7 109.9 413.4 108.2 416.6 107.4C419.9 106.5 423.2 106.1 426.4 105.2C429.6 104.3 432.8 103.2 435.8 101.9C438.9 100.6 441.7 98.7 444.7 97.3C447.7 95.9 450.7 94.4 453.9 93.4C457.1 92.4 460.4 92.0 463.7 91.4C466.9 90.7 470.3 90.4 473.5 89.6C476.7 88.7 479.9 87.5 483.0 86.5C486.2 85.5 489.3 84.2 492.6 83.6C495.8 83.0 499.2 82.8 502.5 82.7C505.9 82.7 509.2 83.0 512.5 83.2C515.8 83.4 519.2 83.9 522.5 84.0C525.8 84.1 529.2 83.9 532.5 83.7C535.8 83.5 539.1 82.8 542.4 82.8C545.7 82.7 550.4 83.2 552.4 83.4C554.4 83.6 554.0 83.7 554.3 83.8 M380.5 119.8C382.2 119.9 387.1 120.2 390.5 120.5C393.8 120.8 397.1 121.2 400.4 121.4C403.7 121.7 407.1 122.0 410.4 122.2C413.7 122.5 417.0 122.6 420.4 122.8C423.7 123.0 427.0 123.1 430.4 123.3C433.7 123.5 437.0 123.6 440.3 124.0C443.6 124.4 447.0 124.8 450.2 125.5C453.5 126.2 456.8 127.0 459.8 128.2C462.9 129.4 465.9 131.0 468.7 132.7C471.6 134.4 474.4 136.2 477.0 138.3C479.6 140.4 482.0 142.8 484.2 145.3C486.4 147.7 488.4 150.4 490.1 153.3C491.8 156.1 492.6 159.7 494.4 162.3C496.2 164.9 498.3 166.8 500.8 168.6C503.4 170.5 506.7 171.8 509.5 173.5C512.4 175.3 515.1 177.2 517.9 179.1C520.6 181.0 523.2 183.0 525.8 185.2C528.4 187.3 530.9 189.5 533.2 191.9C535.6 194.2 537.9 196.7 539.9 199.3C542.0 201.9 543.9 204.6 545.6 207.5C547.3 210.3 548.8 213.4 550.0 216.5C551.2 219.5 552.2 222.8 553.0 226.0C553.8 229.2 554.3 233.2 554.7 235.8C555.1 238.5 555.2 240.8 555.3 241.8 M357.7 334.3C357.8 335.9 358.0 340.9 358.2 344.3C358.3 347.6 358.6 350.9 358.5 354.3C358.5 357.6 358.4 360.9 358.1 364.2C357.7 367.5 357.1 370.8 356.6 374.1C356.1 377.4 355.3 380.7 354.8 384.0C354.3 387.3 354.0 390.6 353.7 393.9C353.3 397.2 353.3 400.6 352.9 403.9C352.4 407.2 351.8 410.4 351.2 413.7C350.7 417.0 350.0 420.3 349.5 423.6C349.1 426.9 348.7 430.2 348.6 433.5C348.5 436.9 348.6 440.2 348.7 443.5C348.8 446.9 349.2 450.2 349.3 453.5C349.4 456.8 349.4 460.2 349.3 463.5C349.1 466.8 348.5 471.1 348.2 473.5C348.0 475.8 347.7 476.7 347.6 477.4 M397.0 143.3C395.7 144.4 391.7 147.4 389.4 149.8C387.1 152.3 385.2 155.0 383.4 157.8C381.6 160.6 380.1 163.6 378.5 166.5C376.9 169.5 375.5 172.5 373.8 175.4C372.2 178.3 370.6 181.2 368.8 184.0C367.0 186.8 364.9 189.4 362.9 192.1C360.9 194.8 358.8 197.4 356.8 200.0C354.9 202.7 352.9 205.4 351.1 208.2C349.4 211.1 347.3 215.2 346.3 217.0C345.4 218.8 345.6 218.5 345.5 218.8 M457.9 394.6C458.0 396.2 458.4 401.2 458.6 404.5C458.9 407.9 459.1 411.2 459.4 414.5C459.6 417.8 459.8 421.2 460.1 424.5C460.3 427.8 460.5 431.1 460.8 434.5C461.1 437.8 461.4 441.1 461.7 444.4C462.0 447.7 462.4 452.4 462.5 454.4C462.7 456.4 462.6 456.0 462.7 456.4 M462.0 37.6C460.3 37.7 455.3 37.6 452.0 37.8C448.7 38.1 445.3 38.6 442.0 38.9C438.7 39.3 435.4 39.7 432.1 40.1C428.8 40.4 425.4 40.6 422.2 41.2C418.9 41.7 415.7 42.6 412.4 43.3C409.2 44.1 405.9 45.0 402.7 45.7C399.4 46.4 396.1 47.0 392.9 47.6C389.6 48.2 386.3 48.6 383.0 49.2C379.7 49.9 376.5 50.6 373.3 51.6C370.1 52.7 367.0 53.9 364.0 55.3C361.0 56.7 358.1 58.3 355.1 59.8C352.1 61.3 347.6 63.5 346.1 64.3 M514.3 125.7C515.9 126.3 520.5 128.2 523.5 129.7C526.4 131.3 529.3 133.0 532.0 134.9C534.8 136.7 537.4 138.8 540.1 140.8C542.8 142.8 545.5 144.7 548.1 146.8C550.8 148.8 553.5 150.8 556.0 153.0C558.4 155.2 560.8 157.6 563.0 160.1C565.2 162.6 567.2 165.3 569.2 167.9C571.3 170.5 573.4 173.1 575.4 175.8C577.4 178.4 579.5 181.0 581.2 183.9C583.0 186.7 584.5 189.7 585.8 192.8C587.1 195.8 588.1 199.0 589.1 202.2C590.1 205.4 591.1 208.6 592.0 211.8C592.9 215.0 593.9 218.2 594.6 221.4C595.2 224.7 595.6 228.0 595.9 231.3C596.2 234.6 596.2 238.0 596.3 241.3C596.4 244.6 596.5 248.0 596.6 251.3C596.7 254.6 596.4 258.1 596.9 261.3C597.4 264.5 598.6 267.5 599.7 270.5C600.8 273.6 602.4 276.6 603.7 279.7C604.9 282.8 606.1 285.9 607.2 289.0C608.3 292.2 609.4 295.4 610.1 298.6C610.8 301.9 611.3 305.2 611.5 308.5C611.7 311.8 611.4 315.2 611.3 318.5C611.2 321.8 610.8 325.5 610.7 328.5C610.6 331.5 610.7 335.1 610.7 336.5 M431.6 86.7C429.9 86.5 425.0 85.6 421.7 85.1C418.4 84.7 415.1 84.2 411.8 84.1C408.5 84.0 405.1 84.1 401.8 84.5C398.5 84.9 395.2 85.7 392.0 86.6C388.8 87.4 385.7 88.6 382.5 89.7C379.4 90.8 376.3 92.1 373.1 93.1C369.9 94.1 366.7 95.1 363.5 95.9C360.3 96.8 357.0 97.4 353.8 98.1C350.5 98.8 347.2 99.4 344.0 100.3C340.8 101.1 337.6 102.1 334.5 103.3C331.4 104.6 328.4 106.1 325.6 107.8C322.7 109.6 320.1 111.6 317.5 113.7C314.8 115.7 312.3 117.9 309.8 120.1C307.3 122.4 305.0 124.7 302.6 127.0C300.1 129.3 297.8 131.6 295.2 133.8C292.7 135.9 289.4 138.2 287.3 139.8C285.1 141.4 283.1 142.7 282.3 143.3 M550.5 131.1C551.6 132.4 555.0 136.1 557.1 138.6C559.3 141.2 561.2 143.9 563.3 146.5C565.4 149.1 567.6 151.6 569.8 154.1C572.0 156.6 574.4 158.9 576.6 161.4C578.8 163.9 581.1 166.4 583.0 169.1C584.9 171.8 586.6 174.7 588.1 177.7C589.5 180.7 590.5 183.9 591.5 187.1C592.4 190.3 593.1 193.6 593.7 196.9C594.3 200.1 594.7 203.4 595.2 206.7C595.7 210.0 596.0 213.4 596.4 216.7C596.9 220.0 597.6 223.2 598.1 226.5C598.6 229.8 599.3 233.1 599.6 236.4C599.9 239.7 600.2 243.1 600.0 246.4C599.9 249.7 599.4 253.0 598.8 256.3C598.2 259.6 596.5 263.5 596.4 266.0C596.4 268.6 598.2 270.7 598.5 271.6 M317.4 232.9C317.7 234.6 318.5 239.5 319.0 242.8C319.5 246.1 320.1 249.4 320.5 252.7C320.8 256.0 321.8 259.5 321.3 262.6C320.8 265.8 318.7 268.5 317.3 271.5C316.0 274.5 314.4 277.5 313.3 280.7C312.3 283.8 311.6 287.2 311.3 290.4C310.9 293.7 311.1 297.1 311.3 300.4C311.5 303.7 312.1 307.0 312.6 310.3C313.2 313.6 313.9 316.9 314.4 320.2C314.9 323.5 315.3 326.8 315.6 330.1C315.9 333.4 315.9 336.8 316.2 340.1C316.5 343.4 317.0 346.7 317.6 350.0C318.2 353.2 319.1 356.5 320.0 359.7C320.9 362.9 322.0 366.1 322.9 369.3C323.7 372.5 324.7 375.7 325.3 379.0C326.0 382.2 326.4 385.5 326.8 388.8C327.1 392.2 327.2 395.5 327.4 398.8C327.5 402.2 327.6 405.5 327.8 408.8C328.1 412.1 328.5 415.5 329.1 418.7C329.7 422.0 330.5 425.2 331.4 428.5C332.3 431.7 333.4 434.8 334.3 438.0C335.2 441.2 336.1 444.4 336.8 447.7C337.5 451.0 338.1 455.9 338.4 457.6 M500.2 278.2C500.9 279.6 503.3 284.1 504.8 287.0C506.4 290.0 508.2 292.8 509.5 295.9C510.8 298.9 512.0 302.1 512.7 305.3C513.4 308.5 513.5 311.9 513.7 315.2C514.0 318.6 513.8 321.9 514.1 325.2C514.4 328.5 515.1 331.8 515.6 335.1C516.1 338.4 516.8 341.7 517.2 345.0C517.5 348.3 517.5 351.6 517.6 355.0C517.7 358.3 517.4 361.7 517.6 365.0C517.7 368.3 518.1 371.6 518.6 374.9C519.0 378.2 519.8 381.5 520.3 384.8C520.9 388.1 521.5 393.0 521.7 394.7 M402.4 94.4C400.8 94.4 395.8 94.2 392.4 94.4C389.1 94.5 385.8 94.7 382.5 95.3C379.2 95.8 376.0 96.7 372.8 97.7C369.7 98.8 366.6 100.2 363.6 101.6C360.6 103.0 357.7 104.7 354.8 106.3C351.8 107.8 348.9 109.4 345.9 110.9C342.9 112.4 339.9 113.8 336.8 115.1C333.8 116.4 330.6 117.5 327.5 118.8C324.4 120.0 321.3 121.2 318.3 122.7C315.3 124.1 312.5 125.9 309.7 127.6C306.8 129.4 304.0 131.2 301.2 133.0C298.4 134.7 295.4 136.3 292.7 138.2C289.9 140.0 286.7 142.5 284.6 144.1C282.6 145.8 281.1 147.6 280.3 148.3 M533.4 158.9C534.4 160.2 537.5 164.1 539.6 166.7C541.7 169.3 543.9 171.8 546.0 174.4C548.1 177.0 550.3 179.5 552.3 182.2C554.3 184.9 556.2 187.6 557.8 190.5C559.4 193.4 560.9 196.5 561.9 199.6C562.9 202.8 563.6 206.1 564.1 209.4C564.5 212.6 564.6 216.0 564.6 219.3C564.7 222.7 564.5 226.0 564.4 229.3C564.3 232.7 564.1 236.0 564.1 239.3C564.0 242.7 564.0 246.0 563.9 249.3C563.8 252.7 563.4 256.1 563.6 259.3C563.8 262.6 564.3 265.7 565.1 268.8C565.9 272.0 567.8 275.0 568.6 278.2C569.5 281.4 570.0 286.4 570.3 288.0 M402.7 49.5C401.2 50.2 396.5 52.1 393.5 53.5C390.5 55.0 387.6 56.6 384.7 58.3C381.8 59.9 379.0 61.7 376.2 63.5C373.3 65.2 370.5 67.0 367.7 68.7C364.9 70.5 362.0 72.2 359.2 74.0C356.4 75.7 353.5 77.5 350.8 79.4C348.0 81.3 345.3 83.2 342.7 85.3C340.1 87.3 337.6 89.6 335.2 91.9C332.8 94.2 330.5 96.6 328.2 99.1C326.0 101.5 323.8 104.0 321.6 106.6C319.4 109.1 317.3 111.7 315.2 114.2C313.0 116.7 310.8 119.2 308.7 121.8C306.6 124.4 304.6 127.1 302.6 129.8C300.7 132.5 298.9 135.3 297.1 138.1C295.3 140.9 293.6 143.8 292.0 146.7C290.5 149.6 289.1 152.7 287.7 155.7C286.4 158.8 285.2 161.9 284.0 165.0C282.8 168.1 281.3 172.2 280.5 174.4C279.7 176.6 279.3 177.5 279.1 178.1 M470.8 99.2C469.1 99.1 464.2 98.7 460.8 98.5C457.5 98.3 454.2 97.8 450.9 97.9C447.5 97.9 444.2 98.4 440.9 98.7C437.6 99.1 434.3 99.6 431.0 100.0C427.7 100.3 424.3 100.4 421.0 100.8C417.7 101.2 414.4 101.6 411.1 102.3C407.9 103.1 404.8 104.3 401.6 105.4C398.5 106.4 395.3 107.6 392.2 108.7C389.0 109.7 385.8 110.5 382.6 111.6C379.5 112.7 376.4 113.9 373.3 115.1C370.2 116.4 367.0 117.5 364.0 118.9C361.0 120.4 358.1 122.1 355.4 124.0C352.7 126.0 350.3 128.3 347.8 130.5C345.3 132.7 342.8 134.9 340.3 137.1C337.9 139.4 335.3 141.6 333.2 144.1C331.0 146.6 329.1 149.4 327.4 152.3C325.6 155.1 324.3 158.1 322.7 161.1C321.1 164.0 319.4 166.9 317.8 169.8C316.1 172.7 313.9 176.8 313.0 178.6C312.0 180.3 312.3 180.1 312.1 180.4 M302.2 246.0C302.1 247.7 301.9 252.7 301.5 256.0C301.1 259.2 301.0 262.6 299.8 265.5C298.5 268.4 295.7 270.8 293.7 273.5C291.8 276.2 289.9 279.0 288.2 281.8C286.6 284.7 285.0 287.7 283.7 290.7C282.4 293.8 281.2 297.0 280.4 300.2C279.5 303.4 278.9 306.7 278.5 310.0C278.0 313.3 277.9 316.6 277.7 319.9C277.5 323.3 277.4 326.6 277.2 329.9C277.0 333.3 276.9 336.6 276.8 339.9C276.7 343.2 276.7 346.6 276.5 349.9C276.4 353.2 276.3 356.6 276.1 359.9C275.8 363.2 275.5 366.5 275.2 369.9C274.9 373.2 274.4 376.5 274.0 379.8C273.7 383.1 273.3 386.4 273.0 389.7C272.7 393.1 272.4 396.4 272.2 399.7C272.1 403.0 272.0 407.0 271.9 409.7C271.8 412.4 271.8 414.7 271.7 415.7 M377.2 362.7C377.1 364.4 376.6 369.4 376.2 372.7C375.9 376.0 375.6 379.3 375.3 382.7C375.0 386.0 374.8 389.3 374.7 392.6C374.5 396.0 374.4 399.3 374.4 402.6C374.3 406.0 374.4 409.3 374.4 412.6C374.4 416.0 374.4 419.3 374.4 422.6C374.4 426.0 374.4 429.3 374.3 432.6C374.2 436.0 374.0 439.3 373.8 442.6C373.6 445.9 373.2 449.3 372.9 452.6C372.6 455.9 372.3 459.2 371.9 462.5C371.6 465.8 371.2 470.5 371.0 472.5C370.9 474.5 370.9 474.1 370.9 474.5 M337.6 101.0C336.4 102.0 332.5 105.2 330.0 107.5C327.6 109.7 325.2 112.1 322.8 114.3C320.3 116.6 317.8 118.8 315.3 121.0C312.8 123.2 310.2 125.3 307.8 127.6C305.3 129.8 303.0 132.3 300.8 134.7C298.5 137.1 296.2 139.5 294.1 142.1C292.1 144.8 290.4 147.7 288.6 150.5C286.7 153.2 285.0 156.1 283.1 158.8C281.2 161.6 279.2 164.2 277.3 167.0C275.4 169.7 272.5 173.8 271.5 175.1 M374.1 104.5C372.6 105.3 368.1 107.6 365.2 109.2C362.3 110.8 359.3 112.3 356.5 114.1C353.7 115.9 351.0 117.8 348.4 120.0C345.9 122.1 343.6 124.6 341.3 127.0C339.0 129.4 336.9 132.0 334.7 134.5C332.6 137.1 330.4 139.6 328.4 142.3C326.4 145.0 324.5 147.7 322.8 150.6C321.2 153.4 319.8 156.5 318.5 159.6C317.2 162.6 316.3 165.9 315.2 169.0C314.1 172.2 313.1 175.3 311.9 178.4C310.7 181.6 309.4 184.6 308.2 187.7C306.9 190.8 305.6 193.9 304.4 197.0C303.2 200.1 301.9 203.2 301.0 206.4C300.1 209.6 299.5 212.9 298.9 216.2C298.4 219.4 298.2 222.8 297.8 226.1C297.4 229.4 296.9 232.7 296.5 236.0C296.2 239.3 295.7 242.6 295.5 246.0C295.4 249.3 295.4 252.6 295.5 255.9C295.7 259.3 297.1 262.8 296.5 265.9C295.9 269.0 293.4 271.8 291.9 274.8C290.5 277.8 288.9 280.7 287.6 283.8C286.3 286.9 284.8 290.9 284.1 293.1C283.3 295.3 283.2 296.4 283.1 297.0 M570.9 113.0C569.2 113.0 564.2 113.0 560.9 113.0C557.5 113.0 554.2 112.9 550.9 113.1C547.6 113.4 544.2 113.9 541.0 114.5C537.7 115.2 534.5 116.2 531.3 116.9C528.0 117.6 524.7 118.4 521.4 118.8C518.1 119.2 514.8 119.3 511.5 119.4C508.1 119.4 504.8 119.1 501.5 119.2C498.1 119.3 494.8 119.4 491.5 119.8C488.2 120.3 484.9 121.0 481.7 121.9C478.5 122.8 475.5 124.2 472.3 125.2C469.1 126.2 465.9 127.2 462.7 128.0C459.5 128.8 456.1 129.2 452.9 129.9C449.6 130.7 446.3 131.3 443.2 132.3C440.0 133.3 436.8 134.4 433.9 136.1C431.1 137.7 428.4 139.8 426.0 142.1C423.6 144.4 421.6 147.1 419.5 149.7C417.5 152.4 415.7 155.2 413.8 157.9C411.8 160.6 409.8 163.3 408.0 166.1C406.2 168.9 404.4 171.7 403.0 174.7C401.6 177.7 400.7 181.0 399.8 184.2C399.0 187.4 398.7 190.7 398.1 194.0C397.6 197.3 396.8 202.3 396.6 203.9 M609.8 244.5C610.1 246.1 611.0 251.0 611.4 254.3C611.7 257.6 611.0 261.3 612.1 264.3C613.1 267.3 615.9 269.8 617.7 272.6C619.5 275.4 621.3 278.2 622.9 281.1C624.6 284.0 626.2 286.9 627.5 290.0C628.8 293.0 629.8 296.2 630.7 299.4C631.7 302.6 632.5 305.9 633.3 309.1C634.0 312.4 634.7 315.6 635.1 318.9C635.5 322.2 635.5 325.6 635.6 328.9C635.8 332.2 635.8 335.9 635.9 338.9C636.1 341.9 636.4 345.6 636.5 346.9 M332.1 192.6C331.3 194.1 328.8 198.4 327.1 201.3C325.3 204.1 323.7 207.0 321.9 209.8C320.1 212.6 318.1 215.3 316.2 218.0C314.2 220.7 312.0 223.2 310.2 226.1C308.5 228.9 307.0 231.9 305.5 234.9C304.1 237.9 302.7 240.9 301.4 244.0C300.0 247.0 298.7 250.1 297.5 253.2C296.3 256.3 295.6 259.7 294.1 262.6C292.6 265.4 290.5 267.9 288.5 270.4C286.4 273.0 283.9 275.3 281.9 278.0C279.9 280.6 277.8 284.0 276.4 286.3C275.0 288.5 274.0 290.7 273.5 291.5 M373.9 69.7C372.4 70.4 367.9 72.5 364.9 74.0C362.0 75.5 359.1 77.2 356.1 78.8C353.2 80.4 350.3 81.9 347.4 83.6C344.5 85.2 341.6 86.9 338.8 88.8C336.1 90.6 333.4 92.7 330.8 94.7C328.2 96.8 325.6 98.9 323.0 101.0C320.5 103.1 318.0 105.4 315.5 107.5C312.9 109.7 310.4 111.9 307.9 114.1C305.5 116.4 303.1 118.7 300.8 121.1C298.5 123.6 296.2 126.4 294.3 128.7C292.4 131.0 290.1 133.9 289.3 135.0 M489.2 307.3C489.4 308.9 490.0 313.9 490.4 317.2C490.9 320.5 491.6 323.7 492.1 327.0C492.5 330.3 492.9 333.7 493.1 337.0C493.2 340.3 492.7 343.6 492.7 347.0C492.8 350.3 492.9 353.6 493.3 356.9C493.7 360.3 494.6 363.5 495.0 366.8C495.3 370.1 495.4 373.5 495.4 376.8C495.5 380.1 495.2 384.4 495.1 386.8C495.1 389.1 495.3 390.1 495.4 390.8 M516.8 71.1C515.1 71.3 510.1 72.1 506.8 72.1C503.5 72.1 500.2 71.5 496.9 71.0C493.6 70.5 490.4 69.5 487.1 69.2C483.8 68.9 480.4 69.1 477.1 69.4C473.8 69.6 470.5 70.4 467.2 70.7C463.9 71.0 460.5 71.4 457.2 71.3C453.9 71.1 450.6 70.2 447.3 69.8C444.0 69.4 440.7 68.8 437.4 68.9C434.1 69.0 429.5 70.2 427.5 70.6C425.6 70.9 425.9 71.0 425.6 71.1 M289.6 375.4C289.5 377.0 289.0 382.0 288.9 385.4C288.8 388.7 289.0 392.0 289.1 395.3C289.2 398.7 289.6 402.0 289.7 405.3C289.8 408.7 289.7 412.0 289.7 415.3C289.6 418.7 289.4 422.0 289.4 425.3C289.4 428.7 289.7 432.0 289.8 435.3C290.0 438.6 290.2 442.0 290.3 445.3C290.3 448.6 290.1 453.0 289.9 455.3C289.8 457.6 289.6 458.6 289.5 459.3 M540.4 88.6C538.7 88.5 533.7 87.9 530.4 87.7C527.1 87.4 523.7 87.3 520.4 87.0C517.1 86.7 513.8 86.4 510.5 85.9C507.2 85.4 503.9 84.7 500.7 83.8C497.5 83.0 494.3 81.9 491.2 80.8C488.0 79.7 484.9 78.4 481.8 77.3C478.7 76.2 475.5 75.2 472.3 74.2C469.2 73.1 466.0 72.1 462.8 71.0C459.7 69.9 456.6 68.6 453.5 67.5C450.3 66.5 447.1 65.4 443.9 64.7C440.6 64.0 437.3 63.6 434.0 63.3C430.7 63.1 427.3 63.2 424.0 63.3C420.6 63.5 417.3 63.9 414.0 64.2C410.7 64.6 405.7 65.1 404.1 65.3 M341.3 306.9C340.8 308.5 339.4 313.3 338.4 316.5C337.5 319.7 336.4 322.9 335.5 326.1C334.6 329.3 333.6 332.4 332.9 335.7C332.2 339.0 331.7 342.3 331.3 345.6C330.9 348.9 330.8 352.2 330.5 355.5C330.2 358.9 329.9 362.2 329.4 365.5C328.8 368.8 327.9 372.0 327.1 375.2C326.3 378.4 325.2 381.6 324.5 384.9C323.8 388.1 323.4 391.4 323.0 394.7C322.6 398.0 322.5 401.4 322.2 404.7C321.9 408.0 321.6 411.4 321.1 414.6C320.5 417.9 319.7 421.2 318.8 424.4C317.9 427.6 316.8 430.7 315.9 433.9C314.9 437.1 314.0 440.3 313.4 443.6C312.7 446.9 312.3 450.2 312.0 453.5C311.6 456.8 311.6 460.2 311.2 463.5C310.9 466.8 310.1 471.7 309.9 473.4 M422.6 47.5C424.2 47.8 429.1 48.7 432.4 49.3C435.6 50.0 438.8 51.1 442.1 51.4C445.4 51.7 448.8 51.2 452.1 51.1C455.4 51.0 458.8 50.5 462.1 50.9C465.4 51.3 468.6 52.4 471.8 53.3C475.0 54.2 478.1 55.6 481.3 56.2C484.6 56.9 488.0 56.9 491.3 57.3C494.6 57.7 498.0 57.9 501.1 58.8C504.3 59.8 507.2 61.5 510.2 63.0C513.2 64.4 516.1 66.2 519.2 67.4C522.3 68.6 525.6 69.1 528.8 70.1C532.0 71.1 535.2 71.9 538.2 73.4C541.2 74.8 544.0 77.3 546.6 78.9C549.1 80.4 552.5 81.9 553.7 82.5 M254.5 336.1C254.9 337.7 256.3 342.6 257.0 345.8C257.7 349.1 258.1 352.4 258.6 355.7C259.1 359.0 259.5 362.3 260.0 365.6C260.5 368.9 260.8 372.2 261.5 375.5C262.1 378.7 263.0 382.0 263.8 385.2C264.7 388.4 265.7 391.6 266.4 394.8C267.1 398.1 267.5 401.4 268.0 404.7C268.5 408.0 269.0 412.0 269.5 414.6C270.0 417.2 270.6 419.5 270.8 420.4 M414.0 160.4C413.0 161.6 409.6 165.3 407.5 168.0C405.5 170.6 403.7 173.4 402.0 176.3C400.2 179.1 398.7 182.1 397.2 185.0C395.6 188.0 394.1 190.9 392.5 193.9C391.0 196.9 389.1 200.8 388.0 202.8C387.0 204.9 386.5 205.8 386.2 206.4 M496.2 130.8C497.8 130.6 502.8 129.7 506.1 129.8C509.4 129.8 512.8 130.3 516.0 131.1C519.2 131.9 522.2 133.6 525.3 134.7C528.4 135.9 531.6 137.0 534.8 137.8C538.0 138.6 541.5 138.7 544.7 139.4C547.9 140.1 551.3 140.9 554.2 142.3C557.2 143.6 559.8 145.8 562.6 147.7C565.3 149.6 568.0 151.5 570.7 153.6C573.3 155.6 576.0 157.6 578.5 159.8C581.0 162.0 583.2 164.5 585.8 166.6C588.4 168.7 591.3 170.3 594.1 172.1C596.9 173.9 600.0 175.3 602.6 177.5C605.1 179.6 607.3 182.2 609.2 184.9C611.2 187.5 612.4 190.7 614.2 193.5C616.0 196.3 618.0 199.0 620.0 201.7C622.1 204.3 625.5 207.9 626.6 209.2 M433.7 393.9C434.1 395.5 435.4 400.3 436.3 403.5C437.2 406.7 438.5 409.8 439.4 413.0C440.2 416.2 440.6 419.6 441.3 422.8C442.0 426.1 442.5 429.4 443.5 432.6C444.4 435.8 445.7 438.9 446.9 442.0C448.1 445.1 449.7 448.4 450.8 451.2C451.8 454.0 452.8 457.6 453.2 458.8 M612.4 218.4C612.9 220.0 614.5 224.7 615.2 228.0C616.0 231.2 616.7 234.5 617.0 237.8C617.3 241.1 617.2 244.5 617.3 247.8C617.3 251.1 616.9 254.6 617.4 257.8C617.9 260.9 619.0 263.9 620.5 266.8C621.9 269.7 624.6 272.1 626.2 275.0C627.8 277.9 629.0 281.0 630.2 284.1C631.3 287.3 632.1 290.5 633.1 293.7C634.1 296.9 635.2 300.0 636.0 303.3C636.8 306.5 637.7 309.7 638.1 313.0C638.4 316.3 638.2 319.7 638.1 323.0C638.0 326.4 637.7 329.7 637.6 333.0C637.4 336.3 637.1 340.7 637.0 343.0C636.9 345.3 636.9 346.3 636.8 347.0 M443.6 48.7C445.2 48.7 450.2 48.2 453.6 48.2C456.9 48.3 460.3 48.4 463.5 48.9C466.8 49.4 470.1 50.2 473.3 51.2C476.4 52.2 479.5 53.6 482.5 54.9C485.6 56.2 488.5 57.8 491.5 59.2C494.6 60.7 497.6 62.1 500.6 63.4C503.7 64.7 506.8 65.8 510.0 66.9C513.2 67.9 516.4 68.7 519.6 69.6C522.9 70.4 526.1 71.1 529.3 72.1C532.5 73.0 535.7 74.1 538.9 75.1C542.0 76.1 546.4 77.7 548.3 78.4C550.2 79.0 549.9 79.0 550.2 79.1 M589.5 266.4C590.7 267.5 594.3 271.0 596.9 273.1C599.5 275.1 602.5 276.7 605.2 278.6C607.9 280.5 610.9 282.3 613.2 284.6C615.5 287.0 617.3 289.8 619.0 292.7C620.7 295.5 621.8 298.7 623.4 301.7C625.0 304.6 626.7 307.4 628.5 310.3C630.2 313.1 632.4 315.7 634.0 318.6C635.6 321.5 636.6 324.7 638.1 327.7C639.5 330.7 641.6 334.5 642.8 336.5C643.9 338.6 644.5 339.4 644.8 339.9 M339.9 335.1C339.7 336.7 339.1 341.7 338.7 345.0C338.3 348.3 337.8 351.6 337.3 354.9C336.8 358.2 336.2 361.5 335.6 364.7C335.0 368.0 334.4 371.3 333.8 374.6C333.1 377.8 332.5 381.1 331.9 384.4C331.3 387.7 330.7 390.9 330.0 394.2C329.4 397.5 328.8 400.8 328.3 404.1C327.8 407.4 327.3 410.7 326.8 414.0C326.4 417.3 325.9 421.9 325.7 423.9C325.4 425.9 325.5 425.5 325.4 425.9 M600.7 236.8C600.7 238.4 600.7 243.4 600.8 246.8C601.0 250.1 601.3 253.5 601.8 256.7C602.3 260.0 602.7 263.2 603.9 266.2C605.2 269.2 607.9 271.6 609.4 274.6C610.9 277.5 611.8 280.8 612.9 283.9C614.1 287.0 615.0 290.2 616.1 293.4C617.2 296.5 618.4 299.7 619.3 302.9C620.2 306.1 621.2 309.3 621.7 312.6C622.2 315.8 622.2 319.9 622.2 322.5C622.1 325.2 621.6 327.5 621.5 328.5 M525.8 147.8C526.9 149.0 530.6 152.5 532.7 155.0C534.9 157.6 536.9 160.2 538.8 163.0C540.6 165.8 542.3 168.7 543.9 171.6C545.5 174.5 547.0 177.5 548.4 180.5C549.8 183.5 551.0 186.6 552.2 189.7C553.4 192.9 554.5 196.0 555.5 199.2C556.4 202.4 557.3 205.6 557.9 208.9C558.5 212.2 558.8 215.5 558.9 218.8C559.0 222.2 558.8 225.5 558.5 228.8C558.2 232.1 557.6 235.4 557.0 238.7C556.4 242.0 555.7 245.2 555.1 248.5C554.4 251.8 553.5 256.0 553.0 258.3C552.5 260.6 552.2 261.5 552.1 262.2 M364.8 65.0C366.5 65.0 371.5 65.1 374.8 65.1C378.1 65.0 381.5 64.9 384.8 64.6C388.1 64.4 391.4 64.1 394.8 63.8C398.1 63.6 401.4 63.3 404.7 63.1C408.1 63.0 411.4 62.9 414.7 62.9C418.1 63.0 421.4 63.1 424.7 63.2C428.1 63.3 431.4 63.5 434.7 63.5C438.1 63.5 441.4 63.5 444.7 63.3C448.0 63.2 451.4 62.8 454.7 62.6C458.0 62.4 461.3 62.1 464.7 62.1C468.0 62.0 471.4 62.1 474.7 62.3C478.0 62.6 481.3 63.1 484.6 63.6C487.9 64.1 491.1 64.8 494.4 65.4C497.7 66.0 501.0 66.6 504.3 67.1C507.6 67.7 510.9 68.2 514.1 68.8C517.4 69.4 520.7 70.0 523.9 70.8C527.1 71.6 530.4 72.6 533.5 73.7C536.6 74.8 539.7 76.1 542.8 77.5C545.8 78.8 549.6 80.8 551.7 81.9C553.8 82.9 554.7 83.4 555.3 83.7 M252.1 357.8C252.3 359.5 252.9 364.4 253.4 367.7C253.9 371.0 254.3 374.3 254.9 377.6C255.6 380.9 256.3 384.1 257.2 387.3C258.1 390.6 259.2 393.7 260.3 396.9C261.4 400.0 262.6 403.1 263.7 406.3C264.8 409.4 265.9 412.6 266.8 415.8C267.7 419.0 268.6 422.2 269.2 425.5C269.9 428.7 270.4 432.0 270.9 435.3C271.4 438.6 271.7 441.9 272.2 445.2C272.7 448.5 273.2 451.8 273.8 455.1C274.4 458.4 275.5 462.6 275.9 464.9C276.4 467.2 276.5 468.2 276.6 468.8 M272.0 358.2C271.7 359.8 270.5 364.7 269.9 368.0C269.3 371.2 268.9 374.6 268.6 377.9C268.3 381.2 268.1 384.5 267.8 387.8C267.5 391.2 267.2 394.5 266.7 397.8C266.2 401.1 265.6 404.4 264.8 407.6C264.1 410.8 263.1 414.0 262.1 417.2C261.2 420.4 260.1 423.6 259.2 426.8C258.2 430.0 257.4 433.2 256.6 436.5C255.8 439.7 255.2 443.0 254.4 446.2C253.5 449.4 252.1 453.9 251.5 455.8C250.9 457.7 251.0 457.4 250.9 457.7 M276.1 318.7C276.0 320.3 275.7 325.3 275.6 328.7C275.6 332.0 275.5 335.3 275.6 338.7C275.7 342.0 276.0 345.3 276.2 348.6C276.5 352.0 276.8 355.3 277.1 358.6C277.4 361.9 277.7 365.2 277.8 368.6C278.0 371.9 278.0 375.2 278.0 378.6C277.9 381.9 277.7 385.2 277.6 388.6C277.4 391.9 277.2 395.2 277.0 398.5C276.8 401.9 276.6 405.2 276.5 408.5C276.3 411.9 276.1 415.2 276.1 418.5C276.1 421.9 276.1 425.2 276.2 428.5C276.4 431.8 276.7 435.2 277.0 438.5C277.2 441.8 277.6 445.1 277.8 448.5C278.1 451.8 278.3 455.1 278.4 458.4C278.5 461.8 278.4 466.8 278.4 468.4 M475.2 76.6C473.5 76.8 468.6 77.5 465.3 77.8C462.0 78.1 458.6 78.4 455.3 78.4C452.0 78.5 448.6 78.3 445.3 78.2C442.0 78.1 438.6 77.8 435.3 77.8C432.0 77.8 428.6 77.7 425.3 78.1C422.0 78.4 418.7 79.0 415.5 79.9C412.3 80.7 409.1 81.9 406.0 83.0C402.9 84.2 399.8 85.5 396.8 86.8C393.7 88.1 390.7 89.6 387.6 90.9C384.6 92.2 381.5 93.5 378.4 94.7C375.3 95.9 372.1 96.8 368.9 97.9C365.8 99.0 362.5 99.9 359.5 101.2C356.4 102.4 353.3 103.8 350.4 105.4C347.5 107.1 344.8 109.0 342.2 111.1C339.6 113.1 336.2 116.4 334.7 117.7C333.2 119.1 333.5 118.9 333.3 119.1 M361.8 99.4C360.2 100.0 355.6 101.8 352.5 103.0C349.3 104.1 346.1 105.1 343.0 106.3C340.0 107.6 336.9 109.0 334.0 110.6C331.1 112.3 328.4 114.2 325.6 116.1C322.9 117.9 320.1 119.8 317.3 121.7C314.6 123.5 311.7 125.2 309.0 127.2C306.3 129.1 303.8 131.3 301.3 133.5C298.8 135.7 296.4 138.1 293.9 140.3C291.5 142.5 288.9 144.7 286.4 146.9C283.9 149.1 280.5 152.2 279.0 153.6C277.5 154.9 277.8 154.7 277.6 155.0 M519.0 120.7C517.3 120.8 512.3 121.0 509.0 121.4C505.7 121.8 502.4 122.7 499.1 123.1C495.8 123.6 492.5 124.1 489.2 124.3C485.9 124.4 482.6 124.1 479.2 123.8C475.9 123.6 472.6 122.8 469.3 122.7C466.0 122.6 462.6 122.6 459.3 123.0C456.0 123.5 452.8 124.5 449.7 125.5C446.5 126.5 443.4 127.9 440.2 128.9C437.1 129.9 433.7 130.4 430.6 131.5C427.5 132.6 424.3 133.9 421.5 135.6C418.8 137.4 416.4 139.9 413.9 142.1C411.5 144.4 409.3 146.9 406.8 149.2C404.4 151.4 401.8 153.5 399.2 155.7C396.7 157.9 394.0 159.8 391.8 162.3C389.6 164.8 387.5 167.5 386.0 170.4C384.5 173.4 383.8 176.7 382.9 179.9C382.0 183.1 381.4 187.1 380.7 189.6C380.0 192.2 379.0 194.3 378.6 195.3 M406.4 385.8C406.6 387.4 407.2 392.4 407.4 395.7C407.6 399.1 407.7 402.4 407.5 405.7C407.3 409.0 406.9 412.4 406.5 415.7C406.0 419.0 405.4 422.3 405.0 425.6C404.7 428.9 404.6 432.2 404.2 435.5C403.9 438.8 403.5 442.2 403.1 445.5C402.7 448.8 402.0 452.1 401.7 455.4C401.4 458.7 401.2 463.0 401.1 465.3C401.0 467.7 401.2 468.7 401.2 469.3 M610.5 237.1C610.7 238.7 611.4 243.7 611.8 247.0C612.3 250.3 612.5 253.7 613.3 256.9C614.0 260.1 614.5 263.4 616.1 266.1C617.8 268.9 620.9 270.8 623.2 273.2C625.4 275.7 627.7 278.2 629.7 280.8C631.6 283.5 633.5 286.3 635.0 289.3C636.5 292.2 637.8 295.3 638.8 298.5C639.8 301.6 640.5 304.9 641.1 308.2C641.6 311.5 641.8 314.8 642.1 318.2C642.4 321.5 642.5 324.8 642.8 328.1C643.2 331.5 643.8 336.1 644.0 338.1C644.3 340.1 644.2 339.7 644.2 340.1 M312.1 315.7C312.5 317.4 313.5 322.3 314.3 325.5C315.0 328.7 315.7 332.0 316.7 335.2C317.7 338.4 318.9 341.5 320.1 344.6C321.3 347.7 322.8 350.7 323.9 353.8C325.1 357.0 326.1 360.1 327.0 363.3C327.9 366.6 328.5 369.8 329.2 373.1C330.0 376.3 330.7 379.6 331.6 382.8C332.6 386.0 333.8 389.1 335.0 392.2C336.2 395.3 337.7 398.3 338.9 401.4C340.0 404.6 341.1 407.7 342.0 410.9C342.9 414.1 343.5 417.4 344.2 420.7C344.9 423.9 345.5 427.2 346.3 430.5C347.1 433.7 348.0 436.9 349.0 440.1C350.1 443.2 351.4 446.3 352.7 449.4C353.9 452.5 355.3 455.5 356.4 458.7C357.4 461.8 358.4 465.4 359.1 468.3C359.9 471.2 360.6 474.8 360.9 476.1 M410.3 387.6C409.6 389.1 407.6 393.7 406.2 396.7C404.8 399.8 403.2 402.7 401.8 405.7C400.5 408.8 399.2 411.8 398.0 415.0C396.8 418.1 395.9 421.3 394.7 424.4C393.6 427.5 392.4 430.6 391.0 433.7C389.7 436.7 388.1 439.7 386.7 442.7C385.2 445.7 383.7 448.7 382.3 451.7C380.8 454.7 379.3 457.6 378.0 460.7C376.7 463.8 375.3 467.9 374.5 470.1C373.7 472.3 373.4 473.2 373.2 473.9 M421.1 391.5C421.0 393.2 420.5 398.1 420.1 401.5C419.8 404.8 419.4 408.1 419.0 411.4C418.7 414.7 418.2 418.0 417.8 421.3C417.5 424.6 417.2 428.0 416.9 431.3C416.5 434.6 416.2 437.9 415.7 441.2C415.3 444.5 414.8 447.8 414.4 451.1C414.0 454.4 413.5 458.4 413.2 461.1C413.0 463.7 412.8 466.0 412.7 467.0 M448.5 122.5C450.1 122.9 455.0 123.9 458.2 124.8C461.4 125.7 464.5 127.0 467.8 127.9C471.0 128.7 474.3 129.1 477.6 129.8C480.8 130.5 484.2 131.0 487.3 132.2C490.4 133.3 493.1 135.3 496.1 136.7C499.1 138.2 502.1 139.5 505.2 140.9C508.2 142.3 511.2 143.9 514.3 145.0C517.4 146.2 520.7 147.0 523.9 147.9C527.0 148.8 530.3 149.6 533.4 150.7C536.6 151.8 539.8 152.8 542.7 154.5C545.6 156.1 548.2 158.2 550.7 160.4C553.1 162.7 555.1 165.4 557.4 167.8C559.7 170.2 562.0 172.7 564.5 174.9C567.0 177.1 569.8 178.9 572.4 181.0C574.9 183.2 577.6 185.2 579.7 187.8C581.7 190.4 583.3 193.4 584.7 196.4C586.0 199.5 587.2 204.0 587.8 205.9C588.4 207.8 588.3 207.5 588.4 207.9 M466.4 132.1C467.8 132.9 472.4 135.0 475.2 136.8C478.0 138.6 480.8 140.4 483.2 142.7C485.6 145.0 487.8 147.6 489.5 150.4C491.2 153.3 491.6 157.2 493.6 159.5C495.6 161.9 498.8 162.9 501.7 164.3C504.5 165.7 507.9 166.7 510.9 168.2C513.9 169.7 516.8 171.3 519.6 173.1C522.4 174.9 525.0 177.0 527.5 179.1C530.1 181.3 532.5 183.6 534.9 185.9C537.2 188.3 539.3 190.9 541.5 193.5C543.6 196.0 545.7 198.6 547.5 201.4C549.4 204.1 551.2 207.0 552.7 209.9C554.2 212.9 555.4 216.0 556.5 219.2C557.5 222.3 558.2 225.6 559.0 228.9C559.8 232.1 560.4 235.4 561.1 238.6C561.7 241.9 562.4 245.5 562.8 248.5C563.2 251.5 563.5 255.1 563.6 256.4 M480.5 142.5C481.6 143.8 484.9 147.5 486.9 150.2C488.8 152.9 490.9 155.7 492.1 158.7C493.2 161.8 493.4 165.4 493.7 168.5C494.0 171.6 494.1 174.4 493.8 177.5C493.6 180.6 492.3 184.0 492.0 187.3C491.7 190.6 492.0 194.0 491.8 197.3C491.6 200.6 491.5 204.0 490.9 207.2C490.3 210.5 488.9 214.3 488.1 216.8C487.3 219.4 486.5 221.6 486.2 222.5 M264.0 216.2C264.2 217.8 264.6 222.8 265.2 226.1C265.8 229.4 266.9 232.5 267.6 235.8C268.2 239.1 268.5 242.4 269.0 245.7C269.5 249.0 269.7 252.3 270.5 255.6C271.3 258.8 273.7 261.9 273.6 265.1C273.5 268.2 271.1 271.3 270.1 274.4C269.1 277.6 267.9 280.8 267.4 284.0C266.9 287.3 267.2 290.7 267.3 294.0C267.4 297.3 267.8 301.0 268.0 304.0C268.1 307.0 268.2 310.7 268.2 312.0 M238.8 425.6C239.4 427.1 241.2 431.8 242.4 434.9C243.6 438.0 244.8 441.1 246.0 444.2C247.1 447.4 248.6 451.4 249.3 453.6C250.1 455.8 250.4 456.8 250.6 457.4 M610.5 188.8C611.4 190.2 613.8 194.6 615.5 197.5C617.2 200.3 619.3 203.0 621.0 205.8C622.6 208.7 624.4 211.6 625.6 214.7C626.8 217.7 627.7 221.0 628.2 224.3C628.8 227.6 628.7 230.9 628.7 234.3C628.8 237.6 628.5 240.9 628.5 244.3C628.6 247.6 629.0 250.9 629.0 254.3C628.9 257.6 627.8 261.0 628.2 264.2C628.7 267.4 630.2 270.4 631.6 273.3C633.0 276.3 634.8 279.2 636.5 282.0C638.3 284.9 640.3 287.5 642.1 290.4C643.9 293.2 645.9 295.9 647.3 298.9C648.7 301.9 650.0 306.4 650.6 308.3C651.2 310.2 650.9 309.9 650.9 310.3 M430.0 393.0C430.4 394.6 431.7 399.4 432.8 402.6C433.8 405.8 435.2 408.8 436.0 412.0C436.9 415.2 437.4 418.5 438.0 421.8C438.6 425.1 439.0 428.4 439.6 431.7C440.3 435.0 441.3 438.1 442.0 441.4C442.6 444.7 442.8 448.0 443.4 451.3C444.1 454.6 445.4 459.4 445.7 461.0 M403.7 78.1C405.3 78.1 410.3 77.9 413.7 77.9C417.0 77.9 420.3 78.0 423.7 78.0C427.0 78.1 430.3 78.2 433.7 78.2C437.0 78.2 440.3 78.2 443.7 78.1C447.0 78.1 450.3 77.9 453.6 77.7C457.0 77.6 460.3 77.3 463.6 77.2C467.0 77.1 470.3 77.1 473.6 77.1C477.0 77.2 480.3 77.4 483.6 77.7C486.9 78.1 490.2 78.6 493.5 79.2C496.8 79.8 500.0 80.6 503.3 81.4C506.5 82.2 509.7 83.2 512.9 84.2C516.0 85.1 519.2 86.2 522.4 87.3C525.5 88.4 528.6 89.6 531.7 90.9C534.8 92.1 537.8 93.5 540.9 94.8C543.9 96.2 547.0 97.5 550.0 98.9C553.1 100.3 556.1 101.6 559.1 103.1C562.1 104.6 565.1 106.0 568.0 107.6C570.9 109.2 574.9 111.6 576.6 112.7C578.3 113.7 578.0 113.6 578.3 113.8 M437.4 117.0C439.0 117.5 443.8 118.9 447.0 120.0C450.1 121.1 453.2 122.2 456.3 123.5C459.4 124.8 462.5 126.0 465.4 127.6C468.4 129.2 471.4 130.8 473.9 132.9C476.4 135.0 478.8 137.5 480.6 140.3C482.4 143.0 483.7 146.2 484.7 149.4C485.8 152.5 486.5 155.8 486.9 159.1C487.3 162.4 487.3 165.8 487.1 169.1C487.0 172.4 486.6 175.7 485.9 179.0C485.3 182.3 483.9 187.1 483.5 188.7 M533.6 65.2C532.0 65.5 527.1 66.6 523.8 67.2C520.6 67.9 517.3 68.6 514.0 69.2C510.8 69.8 507.5 70.4 504.2 71.0C500.9 71.6 497.6 72.1 494.3 72.6C491.0 73.1 487.7 73.5 484.4 73.9C481.1 74.4 477.8 74.8 474.5 75.3C471.2 75.8 467.9 76.3 464.6 76.8C461.3 77.3 458.0 77.9 454.8 78.4C451.5 78.9 448.2 79.4 444.9 80.0C441.6 80.6 438.3 81.3 435.1 82.0C431.9 82.8 428.6 83.7 425.4 84.7C422.3 85.7 419.1 86.8 416.0 88.0C412.9 89.2 409.9 90.6 406.9 92.0C403.8 93.4 400.9 95.0 397.9 96.5C395.0 98.1 392.1 99.8 389.2 101.5C386.4 103.1 383.5 104.9 380.7 106.6C377.9 108.4 375.0 110.2 372.3 112.1C369.5 113.9 366.8 115.8 364.1 117.8C361.5 119.8 358.1 122.6 356.4 124.1C354.6 125.6 354.0 126.5 353.5 126.9 M368.9 347.8C368.5 349.4 367.2 354.2 366.5 357.5C365.7 360.7 364.9 364.0 364.5 367.3C364.1 370.6 364.2 373.9 364.1 377.3C363.9 380.6 364.1 383.9 363.7 387.2C363.3 390.5 362.4 393.8 361.7 397.0C360.9 400.3 359.8 403.5 359.3 406.7C358.7 410.0 358.7 413.4 358.4 416.7C358.1 420.0 358.1 423.4 357.5 426.6C357.0 429.9 355.9 433.1 355.1 436.3C354.4 439.6 353.5 442.8 353.1 446.1C352.7 449.4 352.9 452.8 352.7 456.1C352.6 459.4 352.7 462.8 352.3 466.1C351.9 469.4 350.7 473.9 350.3 475.9C349.9 477.8 349.9 477.5 349.8 477.8 M283.3 254.1C283.0 255.7 282.8 261.0 281.4 263.9C280.1 266.8 276.8 268.8 275.1 271.5C273.3 274.3 272.0 277.5 270.8 280.6C269.6 283.7 268.8 286.9 267.7 290.1C266.6 293.2 265.3 296.3 264.1 299.4C263.0 302.6 261.7 305.6 260.7 308.8C259.8 312.0 259.0 315.3 258.3 318.5C257.7 321.8 257.1 325.1 256.8 328.4C256.6 331.7 256.8 335.1 257.0 338.4C257.1 341.7 257.7 345.0 257.7 348.4C257.7 351.7 257.6 355.0 257.2 358.3C256.9 361.6 255.9 365.9 255.5 368.2C255.1 370.5 254.9 371.5 254.8 372.1 M496.6 260.7C497.3 262.1 499.0 266.6 500.7 269.3C502.4 272.1 505.0 274.4 506.9 277.2C508.8 279.9 510.6 282.7 512.0 285.8C513.3 288.8 514.4 292.0 515.1 295.2C515.8 298.5 516.1 301.8 516.4 305.1C516.6 308.5 516.6 311.8 516.8 315.1C517.0 318.5 517.1 321.8 517.4 325.1C517.7 328.4 518.4 331.7 518.8 335.0C519.3 338.3 519.9 341.6 520.1 344.9C520.4 348.2 520.5 351.6 520.4 354.9C520.3 358.2 519.9 361.6 519.6 364.9C519.4 368.2 519.1 371.5 518.8 374.9C518.5 378.2 518.1 381.5 517.9 384.8C517.8 388.1 517.9 392.5 517.9 394.8C518.0 397.1 518.2 398.1 518.3 398.8 M278.5 272.8C278.1 274.4 276.6 279.2 276.2 282.5C275.9 285.8 276.7 289.1 276.6 292.5C276.5 295.8 276.0 299.1 275.6 302.4C275.3 305.7 274.2 309.0 274.4 312.3C274.6 315.6 275.7 318.8 276.7 322.0C277.7 325.1 279.6 328.1 280.5 331.2C281.3 334.4 281.5 337.8 281.7 341.1C281.9 344.4 281.6 347.8 281.9 351.1C282.2 354.4 283.2 357.7 283.5 361.0C283.8 364.3 283.2 367.7 283.5 371.0C283.9 374.3 284.4 377.6 285.4 380.8C286.3 383.9 288.3 386.8 289.2 390.0C290.2 393.1 290.9 396.5 291.2 399.7C291.5 403.0 290.9 406.5 291.2 409.7C291.5 413.0 292.3 416.3 293.2 419.5C294.2 422.6 296.2 425.9 297.1 428.7C298.0 431.6 298.5 435.2 298.7 436.5 M325.6 107.6C327.2 107.8 332.2 108.4 335.5 108.8C338.8 109.2 342.1 109.6 345.4 110.0C348.8 110.4 352.1 110.8 355.4 111.2C358.7 111.6 362.0 112.0 365.3 112.4C368.6 112.8 371.9 113.2 375.2 113.6C378.5 114.0 381.8 114.4 385.2 114.9C388.5 115.3 391.8 115.7 395.1 116.1C398.4 116.5 401.7 116.9 405.0 117.3C408.3 117.7 411.6 118.1 414.9 118.5C418.2 118.9 421.6 119.3 424.9 119.7C428.2 120.1 431.5 120.5 434.8 121.1C438.1 121.6 441.3 122.2 444.6 122.9C447.8 123.7 451.1 124.5 454.2 125.5C457.4 126.5 460.6 127.6 463.6 129.0C466.6 130.5 469.5 132.2 472.2 134.1C474.9 136.0 477.6 138.0 480.0 140.4C482.3 142.7 484.5 145.4 486.2 148.1C488.0 150.9 489.5 154.0 490.6 157.1C491.7 160.2 492.4 163.6 492.8 166.9C493.1 170.1 493.0 173.5 492.7 176.8C492.3 180.1 491.4 183.4 490.8 186.7C490.1 189.9 489.4 193.2 488.7 196.4C488.0 199.7 487.2 203.6 486.6 206.2C486.1 208.8 485.6 211.1 485.4 212.1 M355.0 331.3C354.5 332.9 353.0 337.7 352.0 340.8C351.0 344.0 350.1 347.2 349.1 350.4C348.2 353.6 347.2 356.8 346.3 360.0C345.3 363.2 344.3 366.7 343.4 369.6C342.5 372.4 341.4 376.0 341.0 377.2 M483.4 140.7C484.4 142.0 488.0 145.6 489.8 148.3C491.6 151.1 491.9 155.1 494.2 157.3C496.4 159.5 500.3 159.9 503.3 161.4C506.3 162.9 509.2 164.4 512.1 166.1C515.0 167.8 517.8 169.6 520.5 171.5C523.3 173.4 526.0 175.4 528.5 177.5C531.1 179.6 533.7 181.7 536.0 184.1C538.4 186.5 540.6 189.0 542.6 191.6C544.6 194.3 546.4 197.1 548.0 200.0C549.7 202.9 551.2 206.2 552.5 209.0C553.7 211.7 554.9 215.2 555.4 216.4 M352.7 121.5C351.2 122.3 346.8 124.6 344.0 126.4C341.2 128.2 338.4 130.1 336.0 132.4C333.6 134.7 331.4 137.3 329.7 140.1C327.9 142.9 326.5 146.0 325.4 149.1C324.3 152.2 323.6 155.5 322.8 158.8C322.0 162.0 321.5 165.3 320.7 168.5C319.9 171.8 318.9 175.0 317.9 178.1C316.9 181.3 315.4 184.3 314.4 187.5C313.4 190.7 312.7 194.0 312.2 197.2C311.6 200.5 311.4 203.9 311.0 207.2C310.6 210.5 310.3 213.8 309.8 217.1C309.2 220.4 308.1 223.6 307.5 226.8C306.8 230.1 306.5 233.4 305.9 236.7C305.3 240.0 304.4 243.5 303.7 246.5C303.1 249.4 302.4 253.0 302.2 254.3 M404.3 73.4C402.7 73.7 397.7 74.2 394.5 75.1C391.3 76.0 388.2 77.3 385.2 78.7C382.2 80.1 379.3 81.8 376.4 83.4C373.5 85.1 370.7 86.8 367.7 88.3C364.7 89.8 361.7 91.2 358.6 92.5C355.5 93.7 352.3 94.7 349.1 95.7C346.0 96.8 342.7 97.6 339.6 98.8C336.5 100.0 333.4 101.3 330.5 102.9C327.6 104.5 324.9 106.5 322.3 108.6C319.8 110.8 317.6 113.3 315.3 115.8C313.1 118.2 311.1 120.9 309.0 123.5C306.9 126.1 304.8 128.7 302.9 131.4C300.9 134.1 299.3 137.0 297.5 139.8C295.7 142.6 294.0 145.5 292.1 148.2C290.2 151.0 288.2 153.7 286.1 156.2C284.0 158.8 281.6 161.2 279.4 163.6C277.1 166.0 273.5 169.6 272.4 170.8 M393.1 374.6C392.3 376.1 389.5 380.2 387.9 383.2C386.4 386.1 385.1 389.2 383.9 392.3C382.6 395.4 381.6 398.6 380.2 401.6C378.8 404.6 377.1 407.5 375.5 410.4C373.8 413.3 371.7 415.9 370.1 418.8C368.4 421.7 367.0 424.7 365.6 427.8C364.3 430.8 363.2 434.0 362.0 437.1C360.8 440.2 359.8 443.4 358.4 446.4C357.1 449.5 355.6 452.5 353.9 455.4C352.3 458.3 350.3 460.9 348.6 463.8C346.9 466.7 344.9 470.5 343.8 472.6C342.8 474.7 342.6 475.7 342.3 476.3 M508.0 97.6C506.4 97.4 501.4 96.7 498.1 96.4C494.8 96.1 491.5 95.8 488.1 95.7C484.8 95.7 481.5 95.9 478.1 96.0C474.8 96.1 471.5 96.3 468.1 96.3C464.8 96.2 461.5 96.0 458.2 95.7C454.8 95.5 451.5 94.9 448.2 94.7C444.9 94.6 441.5 94.5 438.2 94.7C434.9 94.9 431.6 95.5 428.3 96.1C425.0 96.7 421.8 97.5 418.5 98.2C415.3 98.8 412.0 99.3 408.7 100.0C405.4 100.6 402.1 101.2 399.0 102.2C395.8 103.1 392.7 104.4 389.6 105.7C386.5 106.9 383.5 108.3 380.4 109.6C377.3 110.8 374.1 111.9 371.0 113.1C367.9 114.3 364.7 115.3 361.7 116.7C358.7 118.1 355.7 119.6 352.9 121.4C350.1 123.2 347.5 125.4 345.0 127.5C342.5 129.7 340.2 132.1 337.8 134.5C335.4 136.8 333.0 139.1 330.7 141.5C328.4 143.9 325.0 147.6 323.9 148.8 M390.5 43.3C388.9 43.7 384.0 44.8 380.8 45.6C377.6 46.5 374.3 47.1 371.1 48.2C368.0 49.2 364.8 50.4 361.9 51.9C358.9 53.4 356.2 55.4 353.3 57.1C350.4 58.7 346.2 60.8 344.5 61.7C342.7 62.6 343.0 62.4 342.7 62.6 M601.8 153.1C600.2 153.4 595.3 154.7 592.0 154.9C588.7 155.1 585.3 154.9 582.0 154.5C578.7 154.0 575.5 152.9 572.2 152.4C568.9 152.0 565.6 151.6 562.3 151.8C559.0 151.9 555.7 152.9 552.4 153.4C549.1 153.9 545.9 154.8 542.6 154.9C539.3 155.0 535.9 154.4 532.6 153.9C529.3 153.4 526.1 152.3 522.8 151.9C519.5 151.6 516.2 151.5 512.9 151.8C509.6 152.1 506.2 152.9 503.0 153.7C499.9 154.4 496.5 154.6 493.9 156.3C491.3 158.0 489.5 161.3 487.5 164.0C485.5 166.6 483.2 169.2 481.8 172.2C480.4 175.1 479.5 179.1 479.0 181.7C478.6 184.3 479.2 186.7 479.2 187.7 M376.2 118.6C374.6 119.2 369.9 121.0 366.9 122.4C363.9 123.9 360.9 125.5 358.2 127.3C355.5 129.2 352.9 131.4 350.5 133.7C348.2 136.1 346.1 138.8 344.3 141.5C342.4 144.3 340.9 147.2 339.4 150.2C337.9 153.2 336.7 156.3 335.4 159.4C334.1 162.5 332.9 165.6 331.7 168.7C330.4 171.8 329.0 174.8 327.9 177.9C326.9 181.1 326.0 184.3 325.2 187.6C324.3 190.8 323.6 194.0 322.8 197.3C322.0 200.5 321.2 203.7 320.2 206.9C319.3 210.1 318.2 213.3 317.0 216.4C315.8 219.5 314.1 222.4 312.9 225.5C311.8 228.7 311.0 232.3 310.3 235.2C309.5 238.1 308.8 241.7 308.5 243.0 M411.4 79.9C413.0 79.7 418.0 79.1 421.3 78.4C424.5 77.7 427.7 76.6 430.9 75.6C434.1 74.7 437.2 73.5 440.4 72.6C443.6 71.8 446.9 71.0 450.2 70.6C453.5 70.2 456.8 70.1 460.2 70.3C463.5 70.4 466.8 71.0 470.1 71.5C473.4 72.0 476.7 72.7 480.0 73.1C483.3 73.5 486.6 73.8 489.9 73.9C493.2 74.0 496.6 73.8 499.9 73.6C503.2 73.5 506.6 73.0 509.9 72.9C513.2 72.7 516.6 72.5 519.9 72.7C523.2 72.9 526.5 73.4 529.7 74.3C532.9 75.1 536.1 76.4 539.1 77.8C542.1 79.1 545.0 80.9 547.9 82.4C550.9 84.0 555.0 86.2 556.7 87.1C558.5 88.1 558.3 87.8 558.6 88.0 M262.4 231.2C262.9 232.8 264.6 237.5 265.6 240.6C266.6 243.8 267.6 247.0 268.4 250.2C269.2 253.5 270.3 256.9 270.3 260.1C270.3 263.2 269.1 266.3 268.2 269.4C267.2 272.5 265.4 275.5 264.4 278.6C263.4 281.8 262.6 285.1 262.3 288.4C262.0 291.7 262.0 295.1 262.5 298.4C262.9 301.6 263.8 304.9 264.8 308.1C265.7 311.3 266.9 314.4 267.9 317.6C268.9 320.8 270.0 323.9 270.8 327.1C271.6 330.4 272.2 333.7 272.7 337.0C273.2 340.2 273.4 343.6 273.9 346.9C274.3 350.2 274.6 353.5 275.2 356.8C275.7 360.1 276.4 363.4 277.3 366.6C278.2 369.8 279.4 372.9 280.6 376.0C281.9 379.1 283.3 382.1 284.8 385.1C286.2 388.1 287.7 391.1 289.1 394.1C290.4 397.1 291.8 400.2 292.9 403.4C293.9 406.5 295.0 411.1 295.5 413.0C296.1 414.9 295.9 414.6 295.9 414.9 M310.2 202.5C310.0 204.1 309.6 209.1 308.9 212.4C308.2 215.6 307.0 218.7 306.2 222.0C305.5 225.2 304.8 228.5 304.5 231.8C304.3 235.1 304.2 238.5 304.5 241.8C304.8 245.1 305.6 248.4 306.4 251.6C307.2 254.8 309.0 258.0 309.4 261.1C309.8 264.3 309.2 267.5 308.7 270.6C308.1 273.8 306.5 277.0 305.9 280.2C305.3 283.5 305.2 286.8 305.1 290.2C305.0 293.5 305.2 296.8 305.2 300.2C305.2 303.5 305.1 306.8 305.1 310.2C305.1 313.5 304.9 316.8 305.0 320.2C305.1 323.5 305.2 326.9 305.7 330.1C306.1 333.4 307.1 337.7 307.6 339.9C308.1 342.2 308.6 343.1 308.8 343.8 M494.5 73.5C492.8 73.4 487.8 73.2 484.5 73.0C481.1 72.7 477.8 72.4 474.5 72.2C471.2 71.9 467.9 71.7 464.5 71.5C461.2 71.4 457.9 71.3 454.5 71.3C451.2 71.4 447.9 71.5 444.5 71.6C441.2 71.8 437.9 72.0 434.5 72.1C431.2 72.3 427.9 72.5 424.6 72.7C421.2 73.0 417.9 73.2 414.6 73.7C411.3 74.1 408.0 74.6 404.8 75.3C401.5 76.0 398.3 76.9 395.1 77.8C391.9 78.7 388.7 79.8 385.5 80.8C382.3 81.8 379.2 82.8 376.0 83.9C372.9 85.0 369.7 86.0 366.5 87.1C363.4 88.2 360.3 89.4 357.2 90.7C354.2 92.0 351.1 93.5 348.2 95.0C345.3 96.6 342.4 98.3 339.6 100.1C336.7 101.8 334.0 103.7 331.2 105.5C328.4 107.4 325.6 109.2 322.9 111.1C320.1 113.0 317.3 114.8 314.7 116.8C312.0 118.8 308.6 121.5 306.8 122.9C305.0 124.4 304.3 125.2 303.9 125.7 M526.8 174.6C528.0 175.8 531.5 179.3 533.7 181.8C535.9 184.3 537.9 187.0 540.1 189.5C542.3 192.0 544.9 194.2 547.1 196.6C549.4 199.1 551.9 201.4 553.7 204.2C555.4 206.9 556.8 210.1 557.8 213.2C558.8 216.4 559.0 219.8 559.6 223.1C560.2 226.3 560.7 229.6 561.5 232.9C562.4 236.1 563.7 239.2 564.6 242.4C565.5 245.6 566.2 248.8 567.0 252.1C567.7 255.3 567.8 258.8 568.9 261.9C570.0 264.9 572.1 267.4 573.7 270.3C575.2 273.2 577.1 276.1 578.3 279.1C579.5 282.2 580.0 285.6 581.0 288.8C581.9 292.0 582.9 295.2 584.0 298.3C585.1 301.4 586.7 304.4 587.7 307.6C588.7 310.7 589.7 314.0 589.9 317.3C590.2 320.6 589.6 323.9 589.2 327.3C588.9 330.6 588.1 335.5 587.9 337.2 M494.5 186.7C495.0 188.1 495.4 192.5 497.3 194.8C499.1 197.1 502.8 198.5 505.5 200.5C508.1 202.6 510.7 204.7 512.9 207.2C515.2 209.6 517.3 212.3 518.9 215.2C520.5 218.0 521.8 221.2 522.8 224.3C523.9 227.5 524.4 230.8 525.1 234.1C525.7 237.3 526.2 240.7 526.7 243.9C527.3 247.2 527.8 250.5 528.4 253.8C528.9 257.1 528.8 260.6 529.9 263.7C531.0 266.7 533.3 269.2 534.9 272.1C536.5 274.9 538.2 277.9 539.4 281.0C540.7 284.1 541.5 287.3 542.4 290.5C543.3 293.7 543.9 297.0 544.6 300.3C545.4 303.5 546.1 306.8 546.7 310.0C547.4 313.3 548.0 316.6 548.5 319.9C549.0 323.2 549.4 326.5 549.6 329.8C549.8 333.1 549.7 337.8 549.8 339.8C549.8 341.8 549.7 341.5 549.7 341.8 M525.6 87.3C527.2 87.5 532.2 88.1 535.4 88.8C538.7 89.5 542.0 90.4 545.0 91.6C548.1 92.8 551.2 94.3 554.0 96.0C556.8 97.7 559.5 99.8 562.0 101.9C564.6 104.1 566.9 106.4 569.4 108.7C571.8 111.0 574.2 113.3 576.6 115.7C578.9 118.1 581.1 120.5 583.3 123.0C585.5 125.5 588.4 129.2 589.7 130.7C591.0 132.2 590.8 132.0 591.0 132.2 M596.8 205.8C597.7 207.2 600.8 211.2 602.2 214.2C603.7 217.1 604.7 220.4 605.5 223.6C606.3 226.8 606.5 230.2 606.9 233.5C607.4 236.8 607.7 240.1 608.3 243.4C608.8 246.7 609.8 249.9 610.2 253.2C610.6 256.5 609.7 260.1 610.5 263.2C611.3 266.3 613.1 269.1 614.9 271.8C616.6 274.6 619.0 277.5 620.9 279.8C622.7 282.2 625.2 284.9 626.1 285.9 M505.6 102.6C507.3 102.9 512.2 103.4 515.5 104.1C518.7 104.8 522.0 105.6 525.1 106.7C528.3 107.8 531.4 109.1 534.3 110.6C537.3 112.1 540.1 113.9 542.9 115.7C545.7 117.6 548.4 119.6 551.1 121.5C553.7 123.5 556.3 125.6 558.9 127.7C561.6 129.7 564.2 131.8 566.8 133.9C569.5 135.9 572.2 137.8 574.9 139.8C577.6 141.7 580.9 144.0 583.1 145.5C585.3 147.0 587.1 148.4 588.0 149.0 M272.7 329.9C273.1 331.5 274.2 336.4 274.9 339.7C275.5 342.9 276.1 346.2 276.4 349.5C276.8 352.9 277.0 356.2 277.1 359.5C277.2 362.8 277.1 366.2 277.2 369.5C277.3 372.9 277.3 376.2 277.5 379.5C277.8 382.8 278.1 386.2 278.6 389.4C279.2 392.7 279.9 396.0 280.6 399.3C281.3 402.5 282.1 405.8 282.7 409.0C283.3 412.3 283.8 415.6 284.2 418.9C284.5 422.2 284.7 425.6 284.8 428.9C284.9 432.2 284.8 435.6 284.9 438.9C284.9 442.2 285.0 445.6 285.2 448.9C285.5 452.2 285.9 455.5 286.4 458.8C287.0 462.1 288.0 466.6 288.4 468.6C288.8 470.6 288.8 470.2 288.9 470.6 M469.3 73.8C467.7 73.4 462.8 72.5 459.5 71.7C456.3 71.0 453.1 70.0 449.8 69.4C446.6 68.7 443.3 68.1 440.0 67.7C436.7 67.4 433.3 67.3 430.0 67.4C426.7 67.5 423.3 67.9 420.0 68.4C416.8 68.9 413.5 69.6 410.2 70.3C406.9 70.9 403.7 71.6 400.4 72.2C397.1 72.8 393.8 73.3 390.5 73.7C387.2 74.1 383.9 74.4 380.6 74.8C377.3 75.2 374.0 75.5 370.7 76.0C367.4 76.4 364.0 76.9 360.8 77.5C357.5 78.2 354.2 78.8 351.0 79.8C347.9 80.8 344.7 82.0 341.7 83.3C338.7 84.7 335.8 86.4 332.9 88.1C330.0 89.8 327.3 91.7 324.5 93.5C321.7 95.4 319.0 97.3 316.2 99.0C313.4 100.8 309.9 102.8 307.6 104.2C305.3 105.5 303.2 106.6 302.3 107.1 M299.3 411.9C299.0 413.6 298.2 418.5 297.4 421.8C296.6 425.0 295.6 428.2 294.7 431.4C293.8 434.6 292.8 437.8 292.1 441.0C291.4 444.3 290.9 447.6 290.6 450.9C290.3 454.2 290.5 457.6 290.5 460.9C290.4 464.2 290.4 469.2 290.4 470.9 M516.3 245.8C515.9 247.4 514.6 252.3 514.1 255.6C513.5 258.8 512.8 262.0 512.9 265.2C513.1 268.5 514.7 271.7 515.1 275.0C515.4 278.3 515.2 281.7 515.0 285.0C514.8 288.3 514.2 291.6 513.8 294.9C513.4 298.2 513.0 301.5 512.6 304.8C512.1 308.1 511.7 311.5 510.9 314.7C510.1 317.9 509.0 321.1 507.8 324.2C506.5 327.3 505.0 330.2 503.5 333.2C502.0 336.2 500.4 339.1 499.0 342.1C497.6 345.1 496.1 348.1 494.9 351.2C493.7 354.3 492.8 357.6 491.8 360.8C490.9 364.0 490.2 367.2 489.1 370.4C488.1 373.6 486.9 376.7 485.6 379.7C484.3 382.8 482.6 385.7 481.2 388.7C479.7 391.7 478.2 394.7 477.1 397.8C475.9 400.9 475.0 404.1 474.0 407.3C473.0 410.5 472.2 414.1 471.3 417.0C470.4 419.8 469.0 423.2 468.6 424.5 M460.6 394.5C460.2 396.1 459.0 401.0 458.0 404.2C457.1 407.4 456.0 410.5 455.1 413.7C454.2 416.9 453.3 420.1 452.6 423.4C451.9 426.7 451.4 429.9 450.8 433.2C450.3 436.5 449.9 439.8 449.5 443.1C449.0 446.4 448.5 450.1 448.0 453.0C447.5 456.0 446.7 459.6 446.4 460.9 M296.0 227.2C295.6 228.8 294.6 233.7 293.8 237.0C293.0 240.2 292.1 243.4 291.3 246.6C290.5 249.9 289.7 253.2 288.8 256.3C288.0 259.5 287.5 262.8 286.1 265.7C284.7 268.6 282.0 271.0 280.3 273.9C278.7 276.7 277.4 279.9 276.2 283.0C275.1 286.1 274.2 289.3 273.4 292.6C272.6 295.8 272.0 299.1 271.4 302.4C270.9 305.6 270.6 309.0 270.3 312.3C269.9 315.6 269.7 318.9 269.2 322.2C268.8 325.5 268.3 328.8 267.7 332.1C267.1 335.4 266.3 338.6 265.6 341.9C265.0 345.2 264.3 348.4 263.9 351.7C263.5 355.0 263.2 360.0 263.1 361.7 M485.5 218.6C486.5 219.8 489.1 223.8 491.4 226.1C493.7 228.4 496.7 230.1 499.1 232.5C501.4 234.8 503.6 237.3 505.7 239.9C507.8 242.5 509.9 245.1 511.7 247.9C513.5 250.7 514.9 253.8 516.5 256.7C518.0 259.7 518.8 263.4 521.0 265.6C523.3 267.8 527.1 268.4 530.1 269.8C533.1 271.2 536.2 272.5 539.2 274.0C542.1 275.6 545.0 277.2 547.7 279.2C550.4 281.1 552.9 283.4 555.3 285.7C557.6 288.0 559.7 290.6 561.9 293.2C564.1 295.7 566.1 298.3 568.3 300.9C570.5 303.4 572.7 305.9 574.9 308.4C577.0 311.0 580.2 314.9 581.2 316.1 M325.3 130.6C324.4 131.9 321.3 135.9 319.6 138.8C317.8 141.6 316.3 144.6 314.8 147.5C313.3 150.5 311.9 153.5 310.5 156.6C309.2 159.6 307.8 162.7 306.6 165.8C305.3 168.8 304.1 172.0 303.0 175.1C302.0 178.3 301.2 181.5 300.1 184.7C299.1 187.9 297.9 191.0 296.9 194.1C295.9 197.3 295.1 200.6 294.3 203.8C293.4 207.0 292.7 210.3 292.0 213.5C291.4 216.8 290.9 220.1 290.5 223.4C290.0 226.7 289.6 230.0 289.4 233.3C289.1 236.7 288.9 240.0 288.9 243.3C288.9 246.7 289.0 250.0 289.3 253.3C289.5 256.7 290.6 260.1 290.2 263.3C289.7 266.4 287.9 269.3 286.6 272.3C285.3 275.3 283.6 278.3 282.3 281.4C281.1 284.4 279.9 287.6 279.0 290.8C278.2 294.0 277.6 297.3 277.2 300.6C276.7 303.9 276.6 307.3 276.6 310.6C276.5 313.9 276.9 318.9 276.9 320.6 M629.4 212.6C629.5 214.2 630.0 219.2 630.2 222.5C630.3 225.9 630.3 229.2 630.4 232.5C630.4 235.9 630.5 239.2 630.5 242.5C630.5 245.9 630.5 249.2 630.4 252.5C630.3 255.9 629.4 259.3 629.9 262.5C630.4 265.7 632.2 268.6 633.3 271.7C634.4 274.7 635.7 277.9 636.7 281.1C637.7 284.2 638.5 287.5 639.2 290.7C640.0 294.0 640.6 297.3 641.0 300.6C641.4 303.9 641.5 307.2 641.4 310.5C641.4 313.9 641.1 317.2 640.8 320.5C640.6 323.9 640.3 327.2 640.0 330.5C639.8 333.8 639.6 338.1 639.5 340.5C639.3 342.8 639.3 343.8 639.2 344.5 M454.5 129.5C456.0 130.3 460.4 132.7 463.2 134.5C466.0 136.3 468.5 138.5 471.3 140.3C474.1 142.2 477.1 143.7 479.8 145.6C482.5 147.5 485.4 149.5 487.5 152.0C489.6 154.4 491.5 157.4 492.5 160.5C493.6 163.6 493.8 167.1 493.9 170.4C494.0 173.7 493.2 177.0 493.1 180.3C492.9 183.7 492.8 187.0 493.0 190.3C493.3 193.6 492.8 197.7 494.4 200.2C496.1 202.7 500.3 203.4 503.0 205.4C505.6 207.4 508.0 209.8 510.5 212.0C512.9 214.2 515.6 216.4 517.7 218.9C519.9 221.4 521.9 224.2 523.3 227.1C524.7 230.1 525.5 233.4 526.1 236.7C526.8 239.9 526.8 243.3 527.2 246.6C527.6 249.9 527.9 253.3 528.4 256.5C529.0 259.8 529.1 263.5 530.7 266.3C532.2 269.1 535.8 270.7 537.9 273.2C540.0 275.8 541.9 278.6 543.3 281.6C544.7 284.6 545.7 288.8 546.4 291.1C547.0 293.3 547.1 294.3 547.2 295.0 M340.0 379.6C340.1 381.2 340.2 386.2 340.4 389.6C340.6 392.9 340.9 396.2 341.3 399.5C341.7 402.8 342.2 406.1 342.7 409.4C343.2 412.7 343.7 416.0 344.2 419.3C344.7 422.6 345.2 425.9 345.6 429.2C346.0 432.5 346.2 435.8 346.6 439.1C347.1 442.5 347.6 445.7 348.1 449.0C348.5 452.3 349.1 455.6 349.6 458.9C350.1 462.2 350.6 465.9 350.9 468.8C351.2 471.8 351.5 475.5 351.6 476.8 M406.3 130.1C404.9 131.0 400.6 133.5 397.7 135.2C394.9 137.0 392.0 138.7 389.2 140.5C386.4 142.4 383.6 144.1 380.9 146.1C378.3 148.2 375.7 150.3 373.4 152.7C371.2 155.1 369.2 157.8 367.4 160.6C365.6 163.4 364.2 166.5 362.7 169.5C361.2 172.4 359.9 175.5 358.4 178.5C356.9 181.5 355.3 184.4 353.6 187.3C351.9 190.2 350.1 192.9 348.3 195.7C346.5 198.6 344.7 201.3 343.0 204.2C341.3 207.1 339.6 210.0 338.2 213.0C336.7 216.0 334.9 220.6 334.2 222.2 M480.5 345.4C480.8 347.0 481.7 352.0 482.2 355.2C482.7 358.5 483.2 361.8 483.6 365.1C484.1 368.4 484.4 371.8 484.8 375.1C485.3 378.4 485.8 381.7 486.3 385.0C486.9 388.2 487.5 391.5 488.0 394.8C488.5 398.1 489.1 401.4 489.5 404.7C489.9 408.0 490.3 411.3 490.7 414.6C491.1 417.9 491.4 421.3 491.9 424.6C492.4 427.9 493.2 432.8 493.4 434.4" stroke="#aeaa9e" stroke-width="0.9" opacity="0.42"/>
<path d="M239.1 387.0C239.9 391.6 243.1 405.8 244.0 414.4C244.9 422.9 244.2 433.6 244.5 438.3C244.7 443.0 244.8 441.3 245.5 442.6C246.2 443.9 247.4 445.3 248.7 446.2C249.9 447.0 251.6 447.6 253.1 447.8C254.7 447.9 256.4 447.6 257.8 447.0C259.2 446.4 260.6 445.3 261.6 444.1C262.5 442.9 263.1 440.4 263.4 439.7 M257.3 404.6C258.2 408.6 262.1 421.8 262.7 428.5C263.3 435.2 260.9 441.1 260.8 444.8C260.7 448.5 261.1 448.7 262.2 450.6C263.3 452.5 265.5 455.0 267.7 456.1C269.9 457.3 272.9 457.8 275.3 457.5C277.8 457.1 280.6 455.8 282.4 454.1C284.2 452.5 285.7 449.8 286.2 447.4C286.7 444.9 285.5 440.9 285.4 439.6 M322.0 418.3C321.4 421.5 319.5 431.7 318.7 437.3C317.9 443.0 317.6 449.1 317.2 452.3C316.8 455.4 317.0 454.8 316.3 456.0C315.6 457.2 314.3 458.7 313.0 459.5C311.7 460.2 309.9 460.6 308.4 460.5C306.8 460.4 305.1 459.8 303.9 458.8C302.7 457.9 301.6 456.4 301.1 455.0C300.6 453.5 300.9 451.0 300.9 450.2 M345.9 406.2C345.8 410.2 345.4 422.7 345.1 430.4C344.8 438.2 344.4 448.3 344.2 452.5C343.9 456.8 344.2 454.8 343.3 456.0C342.5 457.1 340.8 459.0 339.2 459.6C337.6 460.2 335.3 460.2 333.7 459.5C332.2 458.9 330.5 457.3 329.7 455.8C329.0 454.2 328.9 451.9 329.4 450.3C329.9 448.7 332.2 446.7 332.8 446.0 M375.1 422.3C374.5 425.5 371.8 436.5 371.2 441.6C370.5 446.6 371.4 449.7 371.2 452.5C371.0 455.3 370.8 456.5 369.8 458.2C368.9 460.0 367.2 462.0 365.4 463.1C363.7 464.2 361.3 465.0 359.2 465.1C357.1 465.2 354.6 464.6 352.8 463.7C350.9 462.7 349.1 461.0 348.0 459.2C346.8 457.4 346.4 453.9 346.0 452.9 M415.6 417.9C415.9 421.6 416.8 433.3 417.1 439.9C417.3 446.5 416.9 454.0 417.1 457.7C417.3 461.3 417.2 460.4 418.1 461.8C419.0 463.2 420.8 465.3 422.6 466.0C424.4 466.8 426.9 466.9 428.7 466.4C430.6 465.9 432.6 464.4 433.7 462.8C434.8 461.2 435.4 458.7 435.2 456.8C435.0 454.9 433.0 452.2 432.6 451.3 M441.5 411.4C442.1 413.8 444.5 422.6 445.2 425.8C445.9 429.1 445.2 429.2 445.4 431.0C445.7 432.8 445.5 434.8 446.8 436.7C448.0 438.6 450.5 441.4 452.9 442.4C455.3 443.5 458.7 443.7 461.2 443.0C463.7 442.3 466.5 440.3 468.0 438.1C469.5 436.0 470.4 432.7 470.2 430.1C470.0 427.5 467.4 423.7 466.8 422.4 M478.8 410.2C479.1 412.9 480.7 421.5 480.4 426.2C480.1 430.9 477.6 435.8 476.9 438.4C476.2 441.0 476.9 440.6 476.1 441.7C475.3 442.9 473.7 444.7 472.1 445.3C470.5 445.9 468.3 445.9 466.7 445.3C465.2 444.7 463.5 443.1 462.8 441.6C462.1 440.1 461.9 437.9 462.3 436.3C462.8 434.7 465.1 432.7 465.6 432.0 M491.4 395.8C491.5 398.0 492.1 405.5 492.4 409.0C492.6 412.5 492.9 415.0 493.2 417.0C493.4 418.9 493.4 419.6 494.0 420.7C494.6 421.8 495.7 423.0 496.8 423.8C497.9 424.5 499.3 425.0 500.6 425.1C502.0 425.3 503.5 425.0 504.7 424.5C505.9 423.9 507.1 422.9 507.9 421.9C508.7 420.8 509.2 418.7 509.4 418.1 M269.0 386.0C269.2 388.5 269.5 397.3 270.0 401.1C270.4 404.9 271.1 406.5 271.6 408.6C272.1 410.7 271.9 412.0 272.8 413.6C273.7 415.2 275.4 417.1 277.1 418.1C278.8 419.1 281.1 419.6 283.1 419.5C285.1 419.4 287.4 418.7 289.0 417.5C290.6 416.3 292.1 414.4 292.8 412.6C293.5 410.7 293.2 407.4 293.3 406.4 M323.2 408.1C323.0 410.5 321.9 419.0 322.3 422.4C322.6 425.8 324.5 426.9 325.1 428.8C325.8 430.7 325.3 432.1 326.3 433.8C327.4 435.5 329.6 437.9 331.7 438.9C333.8 439.8 336.7 440.1 339.0 439.5C341.2 438.9 343.7 437.3 345.1 435.4C346.5 433.6 347.4 430.7 347.3 428.4C347.2 426.1 345.1 422.7 344.6 421.6 M389.9 409.1C389.0 412.0 385.2 421.0 384.7 426.5C384.1 432.0 386.3 439.1 386.5 442.1C386.7 445.2 386.4 443.8 385.9 444.7C385.3 445.5 384.3 446.7 383.3 447.2C382.3 447.6 380.9 447.8 379.7 447.6C378.6 447.4 377.4 446.6 376.7 445.8C375.9 444.9 375.4 443.6 375.3 442.5C375.3 441.3 376.1 439.6 376.3 439.0 M453.1 396.5C453.0 398.7 453.6 406.3 453.0 409.9C452.4 413.4 450.3 415.7 449.5 417.7C448.8 419.6 449.5 420.2 448.6 421.5C447.7 422.9 446.0 424.9 444.2 425.6C442.5 426.3 440.1 426.4 438.3 425.8C436.5 425.2 434.6 423.6 433.7 422.0C432.7 420.4 432.3 418.0 432.6 416.2C432.9 414.4 435.1 411.9 435.6 411.1" stroke="#5b636e" stroke-width="1.2" opacity="0.5"/>
<path d="M258.1 383.3C258.5 388.4 259.9 403.9 260.1 413.7C260.2 423.4 259.1 436.4 259.1 441.7C259.1 447.1 259.4 444.6 260.0 445.8C260.7 447.1 261.9 448.4 263.1 449.3C264.4 450.1 266.0 450.6 267.5 450.7C269.0 450.8 270.7 450.5 272.0 449.8C273.4 449.1 274.7 448.0 275.5 446.7C276.3 445.5 276.8 443.1 277.0 442.4 M242.3 372.1C242.0 377.8 240.1 395.8 240.1 406.1C240.2 416.5 242.0 428.5 242.6 434.2C243.3 439.9 242.6 438.2 244.1 440.3C245.6 442.5 248.7 445.9 251.7 447.0C254.6 448.0 258.9 447.8 261.7 446.5C264.5 445.2 267.5 442.1 268.7 439.2C269.8 436.4 269.8 432.1 268.7 429.2C267.5 426.3 262.9 423.1 261.7 421.9 M240.6 393.5C240.9 397.3 242.3 409.2 242.9 416.2C243.5 423.2 243.8 431.7 244.1 435.5C244.5 439.4 244.3 438.1 245.0 439.3C245.8 440.6 247.3 442.3 248.7 443.0C250.2 443.8 252.3 444.1 253.9 443.8C255.5 443.6 257.4 442.6 258.6 441.4C259.7 440.3 260.7 438.4 260.9 436.8C261.1 435.1 260.2 432.5 260.0 431.6 M249.8 398.4C250.2 402.0 251.2 413.8 252.2 419.9C253.1 426.0 254.6 431.8 255.3 435.2C256.1 438.6 255.7 438.7 256.5 440.2C257.3 441.7 258.7 443.3 260.1 444.3C261.6 445.3 263.5 446.0 265.2 446.1C267.0 446.3 269.0 446.0 270.6 445.3C272.2 444.6 273.8 443.4 274.9 442.0C276.0 440.7 276.7 437.9 277.1 437.1 M279.5 398.9C280.1 403.8 282.9 419.6 283.3 428.0C283.8 436.5 282.2 444.9 282.3 449.6C282.4 454.2 282.6 453.9 283.9 455.9C285.1 458.0 287.5 460.8 289.9 462.0C292.3 463.3 295.6 463.9 298.3 463.5C301.0 463.1 304.1 461.6 306.0 459.8C308.0 457.9 309.6 454.9 310.2 452.3C310.7 449.6 309.3 445.2 309.2 443.8 M264.3 408.9C265.3 412.0 269.6 422.2 270.3 427.2C271.0 432.2 268.7 436.1 268.6 438.8C268.5 441.6 268.6 442.0 269.8 443.7C271.0 445.4 273.4 448.1 275.7 448.9C278.0 449.8 281.4 449.7 283.6 448.7C285.9 447.7 288.2 445.4 289.2 443.1C290.2 440.9 290.3 437.6 289.5 435.2C288.7 432.9 285.2 430.3 284.3 429.3 M274.4 413.8C275.0 416.7 277.0 427.1 277.7 431.1C278.5 435.2 278.6 435.9 279.1 438.2C279.6 440.4 279.2 442.4 280.6 444.6C282.1 446.8 284.9 450.0 287.7 451.2C290.4 452.4 294.4 452.6 297.3 451.8C300.2 450.9 303.4 448.6 305.1 446.1C306.7 443.6 307.7 439.7 307.4 436.7C307.1 433.7 303.9 429.5 303.2 428.0 M281.2 407.2C281.2 410.9 281.5 423.3 281.1 429.3C280.7 435.3 279.5 439.9 278.9 443.2C278.3 446.5 278.9 447.1 277.5 449.2C276.1 451.2 273.3 454.4 270.6 455.5C267.9 456.5 264.0 456.6 261.2 455.6C258.5 454.6 255.6 452.0 254.2 449.5C252.8 446.9 252.3 443.0 253.0 440.2C253.6 437.4 257.3 433.8 258.2 432.5 M313.9 397.3C313.8 401.9 313.9 416.2 313.4 424.7C312.8 433.2 311.3 443.6 310.7 448.3C310.0 452.9 310.3 451.4 309.6 452.8C308.9 454.1 307.8 455.4 306.5 456.3C305.3 457.2 303.7 457.9 302.2 458.1C300.7 458.3 298.9 458.1 297.5 457.6C296.1 457.1 294.6 456.2 293.6 455.1C292.5 454.0 291.6 451.7 291.2 451.0 M310.1 409.4C311.2 413.5 315.5 426.9 316.3 434.0C317.0 441.0 314.7 447.8 314.6 451.7C314.6 455.6 314.8 455.5 316.0 457.3C317.1 459.2 319.3 461.7 321.5 462.8C323.7 463.9 326.7 464.3 329.2 463.9C331.6 463.5 334.3 462.0 336.0 460.2C337.7 458.4 339.0 455.6 339.3 453.2C339.6 450.7 338.0 446.8 337.7 445.6 M314.0 418.5C314.5 422.3 317.3 434.4 317.2 441.3C317.0 448.2 314.0 456.2 313.2 460.0C312.3 463.8 313.1 462.7 312.2 464.2C311.2 465.6 309.3 467.8 307.4 468.5C305.6 469.3 302.9 469.3 301.0 468.7C299.1 468.1 297.1 466.4 296.0 464.6C295.0 462.9 294.6 460.3 294.9 458.3C295.3 456.3 297.7 453.7 298.2 452.8 M298.5 412.7C298.9 415.8 300.9 426.2 300.8 431.7C300.7 437.3 298.5 442.9 297.8 446.0C297.2 449.1 297.7 448.7 296.9 450.1C296.0 451.5 294.2 453.5 292.5 454.3C290.7 455.1 288.3 455.3 286.4 454.8C284.6 454.3 282.5 452.9 281.4 451.3C280.3 449.8 279.6 447.4 279.7 445.5C279.8 443.6 281.6 440.9 282.0 439.9 M347.7 432.4C347.6 435.1 347.0 444.7 347.3 448.9C347.7 453.1 349.1 455.3 349.8 457.7C350.4 460.0 350.0 461.2 351.0 462.9C352.0 464.6 353.9 466.7 355.8 467.8C357.7 468.8 360.3 469.3 362.5 469.1C364.7 468.8 367.1 467.8 368.8 466.3C370.4 464.9 371.8 462.6 372.4 460.5C372.9 458.4 372.1 454.8 372.0 453.7 M351.1 410.1C350.5 413.9 348.3 426.2 347.8 433.0C347.3 439.9 348.2 447.5 348.1 451.2C347.9 455.0 347.7 454.3 347.0 455.7C346.3 457.0 345.0 458.5 343.7 459.4C342.4 460.2 340.6 460.9 339.0 461.0C337.4 461.1 335.6 460.7 334.2 460.1C332.7 459.4 331.3 458.2 330.4 456.9C329.4 455.6 328.9 453.0 328.6 452.2 M343.6 405.0C343.5 408.9 342.7 421.3 342.9 428.3C343.2 435.3 344.7 443.1 345.2 446.9C345.8 450.8 345.5 450.0 346.3 451.4C347.1 452.8 348.5 454.4 350.0 455.3C351.5 456.2 353.5 456.7 355.2 456.7C357.0 456.7 358.9 456.1 360.4 455.1C361.8 454.2 363.2 452.6 363.9 451.0C364.6 449.5 364.6 446.6 364.7 445.7 M339.7 417.4C340.5 421.3 344.0 433.3 344.7 440.9C345.5 448.5 344.1 458.8 344.1 463.0C344.1 467.2 344.2 465.0 344.8 466.0C345.4 467.0 346.5 468.3 347.6 468.9C348.8 469.5 350.3 469.8 351.6 469.6C352.9 469.5 354.3 468.8 355.2 468.0C356.2 467.1 357.0 465.8 357.3 464.5C357.6 463.3 357.0 461.2 357.0 460.5 M378.3 423.2C379.1 426.3 382.1 436.6 382.7 441.9C383.3 447.1 382.1 451.7 382.2 454.6C382.3 457.5 382.2 457.6 383.3 459.2C384.3 460.8 386.5 463.2 388.5 464.0C390.6 464.8 393.5 464.9 395.6 464.2C397.7 463.5 400.0 461.6 401.1 459.6C402.2 457.7 402.7 454.8 402.2 452.6C401.8 450.5 399.1 447.6 398.5 446.6 M387.9 430.2C386.8 433.0 382.4 442.8 381.5 446.8C380.5 450.8 382.3 452.1 382.2 454.3C382.1 456.5 382.2 458.1 380.8 460.1C379.4 462.1 376.5 465.4 373.7 466.4C370.9 467.3 366.9 467.2 364.2 466.0C361.5 464.8 358.7 461.9 357.6 459.2C356.5 456.5 356.4 452.5 357.4 449.8C358.5 447.0 362.8 443.9 363.9 442.8 M380.2 429.8C379.8 432.5 377.8 441.8 377.3 446.1C376.9 450.4 377.8 453.2 377.7 455.5C377.6 457.9 377.4 458.8 376.6 460.4C375.7 461.9 374.2 463.6 372.6 464.6C371.1 465.5 369.0 466.1 367.1 466.1C365.3 466.1 363.1 465.5 361.6 464.6C360.0 463.6 358.5 462.0 357.7 460.3C356.8 458.7 356.7 455.6 356.5 454.7 M376.4 419.9C375.5 422.7 371.7 432.5 370.8 436.6C369.9 440.6 371.3 441.8 371.1 444.1C371.0 446.3 371.0 447.9 369.7 449.9C368.5 451.8 366.1 454.6 363.7 455.7C361.3 456.8 357.9 457.2 355.4 456.6C352.8 456.0 349.9 454.1 348.3 452.1C346.6 450.0 345.5 446.8 345.5 444.2C345.4 441.6 347.7 437.6 348.1 436.2 M399.1 429.6C399.7 432.1 401.9 440.6 402.3 444.6C402.7 448.7 401.3 451.6 401.3 453.8C401.4 456.1 401.7 456.8 402.4 458.0C403.0 459.3 404.1 460.6 405.4 461.4C406.6 462.3 408.2 462.9 409.7 463.0C411.1 463.1 412.8 462.9 414.2 462.3C415.5 461.7 416.9 460.7 417.8 459.5C418.7 458.4 419.3 456.1 419.6 455.4 M412.4 429.6C412.4 432.4 412.1 442.1 412.4 446.3C412.7 450.5 413.8 452.7 414.4 455.0C414.9 457.3 414.5 458.5 415.6 460.3C416.8 462.1 419.1 464.7 421.4 465.7C423.7 466.7 426.9 466.9 429.3 466.3C431.7 465.6 434.3 463.7 435.7 461.7C437.1 459.6 438.0 456.5 437.8 454.0C437.6 451.6 435.0 448.0 434.5 446.8 M404.3 427.3C404.3 430.0 403.7 439.1 404.2 443.2C404.8 447.3 406.9 449.7 407.7 452.0C408.4 454.2 407.8 455.2 408.8 456.8C409.8 458.3 411.6 460.5 413.5 461.4C415.4 462.4 418.0 462.7 420.1 462.4C422.1 462.0 424.5 460.7 425.9 459.2C427.3 457.7 428.4 455.3 428.7 453.2C428.9 451.1 427.6 447.8 427.4 446.7 M419.5 414.9C419.0 418.5 417.0 429.9 416.5 436.4C416.1 443.0 416.9 450.6 416.8 454.3C416.6 457.9 416.7 456.8 415.8 458.1C415.0 459.4 413.4 461.3 411.8 462.0C410.2 462.8 407.9 463.0 406.2 462.6C404.4 462.2 402.5 460.9 401.4 459.5C400.4 458.1 399.6 456.0 399.6 454.2C399.6 452.4 401.2 449.8 401.5 448.9 M438.7 401.5C438.9 404.4 439.1 413.9 439.9 418.9C440.7 424.0 442.7 429.1 443.4 431.9C444.1 434.6 443.7 434.5 444.3 435.6C444.9 436.8 446.0 438.0 447.1 438.8C448.2 439.6 449.7 440.1 451.1 440.2C452.4 440.3 454.0 440.0 455.2 439.5C456.5 438.9 457.7 437.9 458.5 436.8C459.3 435.7 459.8 433.6 460.1 432.9 M439.4 405.1C439.9 408.8 441.7 420.6 442.5 427.3C443.3 434.0 443.9 441.8 444.3 445.5C444.8 449.2 444.4 448.2 445.3 449.6C446.3 450.9 448.2 453.1 450.0 453.8C451.8 454.6 454.5 454.6 456.3 454.0C458.2 453.3 460.2 451.6 461.2 449.9C462.2 448.1 462.6 445.5 462.2 443.6C461.7 441.7 459.3 439.2 458.7 438.3 M437.9 409.6C438.3 413.2 439.9 424.7 440.5 431.2C441.0 437.7 440.9 444.8 441.2 448.4C441.5 452.0 441.5 451.4 442.2 452.6C442.9 453.9 443.9 455.1 445.1 456.0C446.3 456.8 447.8 457.4 449.3 457.6C450.7 457.8 452.3 457.6 453.7 457.1C455.0 456.6 456.4 455.7 457.4 454.6C458.3 453.5 459.1 451.3 459.5 450.7 M451.7 408.2C451.6 411.8 451.1 423.8 451.0 429.6C450.9 435.4 451.3 439.8 451.1 443.0C450.9 446.2 450.8 446.9 449.7 448.8C448.6 450.7 446.5 453.2 444.3 454.3C442.1 455.5 439.1 456.0 436.7 455.7C434.3 455.4 431.5 454.1 429.7 452.5C427.8 450.8 426.3 448.2 425.8 445.8C425.2 443.4 426.3 439.4 426.4 438.1 M463.8 407.6C462.9 411.0 459.5 422.1 458.7 427.8C457.8 433.5 458.9 438.5 458.7 441.6C458.5 444.8 458.5 444.9 457.5 446.5C456.5 448.2 454.5 450.5 452.5 451.4C450.4 452.4 447.6 452.7 445.5 452.2C443.3 451.7 440.9 450.2 439.5 448.5C438.1 446.8 437.1 444.1 437.1 441.9C437.0 439.7 438.9 436.3 439.2 435.2 M471.0 402.1C470.7 404.8 469.6 414.0 469.4 418.1C469.2 422.2 470.1 424.5 469.9 426.8C469.8 429.1 469.7 430.1 468.8 431.7C467.8 433.3 465.9 435.4 464.1 436.4C462.2 437.4 459.6 437.8 457.5 437.5C455.4 437.1 453.0 436.0 451.5 434.5C450.0 433.0 448.8 430.6 448.5 428.5C448.1 426.5 449.3 423.1 449.5 422.0 M477.2 409.9C477.1 412.3 477.3 420.4 476.7 424.3C476.1 428.3 474.1 431.2 473.4 433.4C472.7 435.5 473.4 435.9 472.5 437.3C471.5 438.6 469.6 440.8 467.8 441.5C466.0 442.2 463.3 442.1 461.5 441.4C459.7 440.7 457.8 438.8 456.9 437.1C456.1 435.3 455.9 432.7 456.5 430.8C457.0 428.9 459.7 426.7 460.4 425.9 M502.4 384.3C502.7 386.7 504.3 394.5 504.3 399.0C504.3 403.5 502.8 408.8 502.6 411.3C502.5 413.7 502.9 413.1 503.2 413.8C503.6 414.6 504.3 415.3 505.0 415.8C505.7 416.3 506.6 416.7 507.4 416.8C508.3 417.0 509.2 416.9 510.1 416.6C510.9 416.3 511.7 415.8 512.3 415.2C512.9 414.6 513.4 413.3 513.6 412.9 M486.1 387.3C486.5 389.8 487.4 398.3 488.3 402.2C489.1 406.1 490.6 408.7 491.3 410.9C492.0 413.0 491.6 413.9 492.3 415.2C493.1 416.5 494.3 418.0 495.6 418.9C497.0 419.7 498.7 420.3 500.3 420.4C501.9 420.5 503.7 420.1 505.1 419.4C506.5 418.7 507.9 417.5 508.8 416.1C509.7 414.8 510.1 412.2 510.4 411.5 M264.7 386.1C264.0 388.5 261.6 396.2 260.8 400.5C259.9 404.9 260.0 409.9 259.8 412.3C259.5 414.7 259.6 414.1 259.1 414.9C258.7 415.7 258.0 416.5 257.3 417.1C256.5 417.6 255.5 418.0 254.6 418.1C253.7 418.2 252.7 418.0 251.8 417.7C250.9 417.4 250.1 416.8 249.5 416.1C248.9 415.4 248.4 413.9 248.2 413.5 M267.7 387.4C268.2 390.2 270.6 399.6 271.0 404.1C271.3 408.6 269.9 411.9 269.9 414.3C269.9 416.8 269.9 417.3 271.0 418.9C272.1 420.5 274.3 423.0 276.4 423.8C278.5 424.6 281.6 424.6 283.7 423.7C285.8 422.9 288.1 420.8 289.1 418.8C290.1 416.8 290.3 413.7 289.7 411.5C289.1 409.3 286.0 406.7 285.3 405.7 M332.5 403.8C332.5 406.0 332.6 413.7 332.5 417.0C332.4 420.3 332.3 421.6 332.1 423.4C331.8 425.2 331.9 426.4 331.0 427.8C330.1 429.3 328.5 431.2 326.8 432.0C325.2 432.9 322.8 433.3 321.0 433.0C319.1 432.8 317.0 431.8 315.6 430.5C314.3 429.2 313.1 427.1 312.8 425.2C312.4 423.4 313.4 420.3 313.5 419.3 M336.7 403.8C336.3 405.9 335.1 413.5 334.2 416.3C333.3 419.1 332.1 418.9 331.4 420.4C330.8 421.9 331.3 423.8 330.2 425.5C329.1 427.2 326.8 429.7 324.6 430.7C322.4 431.6 319.3 431.8 317.0 431.1C314.7 430.4 312.2 428.6 310.9 426.6C309.6 424.6 308.8 421.5 309.1 419.1C309.4 416.8 311.9 413.4 312.5 412.3 M406.0 421.6C404.9 423.5 400.6 429.9 399.7 432.9C398.8 435.8 400.7 437.6 400.7 439.3C400.8 440.9 400.6 441.5 399.9 442.6C399.2 443.7 397.9 445.2 396.6 445.9C395.3 446.5 393.4 446.7 392.0 446.5C390.5 446.2 388.9 445.2 387.9 444.1C386.9 443.0 386.2 441.3 386.1 439.8C386.0 438.4 387.0 436.1 387.2 435.3 M396.8 395.9C396.5 398.8 394.6 407.8 394.9 413.3C395.2 418.9 397.7 426.2 398.4 429.2C399.1 432.3 398.5 430.9 399.0 431.7C399.4 432.5 400.3 433.5 401.2 434.0C402.0 434.5 403.2 434.8 404.3 434.7C405.3 434.6 406.4 434.2 407.2 433.6C408.0 432.9 408.7 431.9 409.0 431.0C409.4 430.0 409.1 428.3 409.1 427.8 M445.3 394.8C445.9 396.6 447.8 402.3 448.7 405.5C449.6 408.7 450.4 412.1 450.8 413.8C451.2 415.6 450.9 415.3 451.3 416.0C451.7 416.7 452.4 417.5 453.1 417.9C453.8 418.4 454.7 418.6 455.6 418.7C456.4 418.7 457.3 418.4 458.1 418.0C458.8 417.6 459.5 416.9 459.9 416.2C460.3 415.4 460.4 414.1 460.5 413.6 M462.7 397.8C461.9 399.5 458.7 405.6 458.0 407.9C457.2 410.3 458.2 410.7 458.1 412.0C458.0 413.3 458.0 414.5 457.2 415.8C456.4 417.0 455.0 418.7 453.5 419.4C452.1 420.1 450.1 420.4 448.4 420.2C446.8 419.9 445.0 418.9 443.9 417.8C442.7 416.6 441.8 414.8 441.6 413.1C441.4 411.5 442.4 408.9 442.5 408.1 M636.7 283.3C637.1 285.9 636.8 296.1 638.9 298.7C640.9 301.4 646.1 297.7 649.0 299.2C651.9 300.6 654.9 304.0 656.4 307.4C657.8 310.8 658.3 315.7 657.5 319.4C656.8 323.1 654.5 327.2 651.9 329.5C649.4 331.7 645.4 333.0 642.2 332.7C639.1 332.4 634.6 328.5 633.1 327.7 M640.5 294.6C640.4 297.2 638.1 307.5 639.6 310.2C641.1 312.9 646.6 309.2 649.5 310.7C652.4 312.1 655.4 315.4 656.8 318.7C658.2 322.1 658.7 326.9 657.9 330.6C657.2 334.2 654.9 338.3 652.4 340.5C649.9 342.7 646.0 344.0 642.9 343.7C639.8 343.4 635.4 339.6 633.9 338.7 M646.8 289.6C646.1 291.9 641.5 301.3 642.5 303.8C643.6 306.2 650.2 302.7 653.3 304.3C656.5 305.8 659.7 309.5 661.3 313.1C662.8 316.7 663.3 322.0 662.5 325.9C661.7 329.9 659.3 334.3 656.5 336.7C653.8 339.1 649.5 340.6 646.1 340.2C642.8 339.9 638.0 335.7 636.3 334.8 M642.3 290.9C641.6 293.5 637.5 303.6 638.5 306.3C639.6 308.9 645.7 305.3 648.6 306.7C651.5 308.2 654.6 311.6 656.0 315.0C657.5 318.3 658.0 323.3 657.2 327.0C656.5 330.7 654.2 334.8 651.6 337.0C649.1 339.3 645.1 340.6 641.9 340.3C638.8 340.0 634.3 336.1 632.7 335.3 M646.8 290.2C646.7 293.5 645.1 306.4 646.2 309.7C647.4 313.0 651.6 308.9 653.8 310.0C656.0 311.1 658.4 313.7 659.4 316.2C660.5 318.8 660.9 322.5 660.3 325.3C659.8 328.1 658.0 331.2 656.1 332.9C654.2 334.6 651.1 335.6 648.8 335.4C646.4 335.2 643.0 332.2 641.8 331.6 M632.1 317.4C631.4 319.2 627.6 326.2 628.2 328.0C628.7 329.8 633.3 327.3 635.3 328.4C637.4 329.4 639.6 331.8 640.6 334.2C641.6 336.6 642.0 340.1 641.4 342.8C640.9 345.4 639.3 348.3 637.5 349.9C635.6 351.5 632.8 352.5 630.5 352.3C628.3 352.0 625.1 349.2 624.0 348.6 M618.3 317.8C618.2 319.8 616.8 327.6 617.8 329.6C618.7 331.7 622.3 329.0 624.2 329.9C626.0 330.9 628.0 333.0 628.9 335.2C629.8 337.3 630.1 340.5 629.7 342.8C629.2 345.2 627.7 347.8 626.1 349.2C624.5 350.6 621.9 351.5 619.9 351.3C617.9 351.1 615.1 348.6 614.1 348.1 M627.5 309.0C627.6 310.4 626.5 316.2 628.0 317.8C629.4 319.3 633.9 317.0 636.2 318.1C638.6 319.3 641.1 322.1 642.3 324.9C643.5 327.6 643.9 331.7 643.3 334.7C642.7 337.7 640.8 341.2 638.7 343.0C636.6 344.8 633.3 345.9 630.7 345.7C628.2 345.4 624.5 342.2 623.2 341.5 M649.5 271.8C649.3 273.3 647.4 279.0 648.8 280.5C650.2 282.1 655.4 279.6 658.1 281.0C660.7 282.3 663.6 285.4 664.9 288.5C666.2 291.6 666.6 296.2 666.0 299.6C665.3 302.9 663.2 306.8 660.8 308.8C658.5 310.9 654.8 312.1 651.9 311.8C649.0 311.6 644.9 308.0 643.5 307.2 M642.7 268.5C643.2 270.7 643.7 279.1 645.3 281.3C646.9 283.5 650.1 280.7 652.1 281.6C654.1 282.6 656.1 284.9 657.1 287.2C658.1 289.5 658.4 292.8 657.9 295.3C657.4 297.8 655.8 300.6 654.1 302.1C652.4 303.6 649.7 304.5 647.6 304.3C645.5 304.1 642.4 301.4 641.4 300.9 M644.6 262.5C644.7 263.9 643.5 269.5 645.1 271.0C646.8 272.5 651.8 270.1 654.5 271.4C657.2 272.8 660.1 276.0 661.4 279.1C662.8 282.3 663.2 286.9 662.5 290.3C661.9 293.8 659.7 297.7 657.3 299.7C654.9 301.8 651.2 303.1 648.2 302.8C645.3 302.5 641.1 298.9 639.7 298.1" stroke="#b4bcae" stroke-width="1.2" opacity="0.65"/>
</g>
<path d="M314.0 224.0 L340.0 222.0 L370.0 214.0 L400.0 204.0 L430.0 196.0 L460.0 190.0 L484.0 190.0 L487.0 250.0 L489.0 300.0 L478.0 328.0 L468.0 342.0 L469.0 358.0 L478.0 375.0 L470.0 388.0 L452.0 397.0 L412.0 389.0 L383.0 365.0 L351.0 324.0 L326.0 279.0Z" fill="#808080"/>
<g fill="none" stroke-linecap="round">
<path d="M314 224C318 250 330 285 351 322C365 345 378 360 392 375C405 386 418 393 431 396C448 398 465 395 478 384" stroke="#646a74" stroke-width="2" opacity="0.5" transform="translate(-1.5,1)"/>
<path d="M314 224C318 250 330 285 351 322C365 345 378 360 392 375C405 386 418 393 431 396C448 398 465 395 478 384" stroke="#a8aeac" stroke-width="1.2" opacity="0.65"/>
<path d="M392 233C402 222 420 210 457 203" stroke="#aaa79e" stroke-width="5" opacity="0.45"/>
<path d="M393.0 229.1 C404.0 218.1 422.0 206.1 455.0 201.1" stroke="#c0bcb0" stroke-width="0.8" opacity="0.7"/>
<path d="M395.0 230.4 C405.0 219.4 422.0 207.4 452.0 201.7" stroke="#626a76" stroke-width="0.8" opacity="0.7"/>
<path d="M397.0 231.7 C406.0 220.7 422.0 208.7 449.0 202.3" stroke="#c0bcb0" stroke-width="0.8" opacity="0.7"/>
<path d="M399.0 233.0 C407.0 222.0 422.0 210.0 446.0 203.0" stroke="#626a76" stroke-width="0.8" opacity="0.7"/>
<path d="M401.0 234.3 C408.0 223.3 422.0 211.3 443.0 203.7" stroke="#c0bcb0" stroke-width="0.8" opacity="0.7"/>
<path d="M403.0 235.6 C409.0 224.6 422.0 212.6 440.0 204.3" stroke="#626a76" stroke-width="0.8" opacity="0.7"/>
<path d="M405.0 236.9 C410.0 225.9 422.0 213.9 437.0 204.9" stroke="#c0bcb0" stroke-width="0.8" opacity="0.7"/>
<path d="M318 245C330 242 345 244 357 249" stroke="#aaa79e" stroke-width="4" opacity="0.4"/>
<path d="M318.0 242.6 C330 239.6 345 241.6 357.0 247.6" stroke="#c0bcb0" stroke-width="0.8" opacity="0.65"/>
<path d="M319.0 243.8 C330 240.8 345 242.8 355.0 248.3" stroke="#626a76" stroke-width="0.8" opacity="0.65"/>
<path d="M320.0 245.0 C330 242.0 345 244.0 353.0 249.0" stroke="#c0bcb0" stroke-width="0.8" opacity="0.65"/>
<path d="M321.0 246.2 C330 243.2 345 245.2 351.0 249.7" stroke="#626a76" stroke-width="0.8" opacity="0.65"/>
<path d="M322.0 247.4 C330 244.4 345 246.4 349.0 250.4" stroke="#c0bcb0" stroke-width="0.8" opacity="0.65"/>
<path d="M410 256C413 244 420 233 432 230C441 228 450 229 456 230" stroke="#c2c0b6" stroke-width="2.6" opacity="0.85"/>
<path d="M411 258C416 246 422 236 433 233C442 231 449 232 454 233" stroke="#5e6670" stroke-width="1.2" opacity="0.6"/>
<path d="M410 256C418 256 430 255 441 251C448 248 452 243 452 239" stroke="#9fb0b2" stroke-width="1.6" opacity="0.8"/>
<path d="M412 260C422 260 436 258 446 253C452 250 456 244 456 239" stroke="#8a9aa0" stroke-width="1" opacity="0.5"/>
<circle cx="434" cy="239.5" r="7.6" stroke="#c8c6bc" stroke-width="2" fill="#8a8c8c" opacity="0.9"/>
<circle cx="434.5" cy="239" r="2" fill="#d0ccc0" stroke="none"/>
<path d="M331 266C336 261 343 257 355 256C363 256 369 259 373 266" stroke="#c2c0b6" stroke-width="2.3" opacity="0.85"/>
<path d="M333 268C338 263 345 260 355 259C362 259 367 262 371 267" stroke="#5e6670" stroke-width="1" opacity="0.55"/>
<path d="M331 267C338 273 348 275 358 274C366 273 371 270 373 266" stroke="#9fb0b2" stroke-width="1.5" opacity="0.75"/>
<circle cx="358.8" cy="263.5" r="7" stroke="#c8c6bc" stroke-width="1.8" fill="#8a8c8c" opacity="0.9"/>
<circle cx="359" cy="263" r="1.8" fill="#d0ccc0" stroke="none"/>
<path d="M331 266L326 262M332 268L327 269M334 271L330 274" stroke="#a8aaa4" stroke-width="0.8" opacity="0.6"/>
<path d="M391 271C388 285 382 296 379 304" stroke="#9aa2a6" stroke-width="1" opacity="0.45"/>
<path d="M376 304C375 312 378 320 384 324C390 327 396 327 401 325" stroke="#a0b0b0" stroke-width="1.5" opacity="0.7"/>
<path d="M419 298C424 303 426 309 422 317C419 321 415 323 412 323" stroke="#a8b4b2" stroke-width="1.5" opacity="0.75"/>
<path d="M401 322C405 316 410 314 414 313" stroke="#d0c4b0" stroke-width="2.2" opacity="0.85"/>
<path d="M392.5 354C397 348 403 344 411 343C420 341 437 341 453 340C446 348 440 358 431 366C424 370 414 371 405 367C398 364 394 359 392.5 354Z" stroke="#a8c4bc" stroke-width="2.4" fill="#7c8080" opacity="0.9"/>
<path d="M398 353C410 351 425 348 445 343" stroke="#c09080" stroke-width="1.8" opacity="0.6"/>
<path d="M402 358L404 362M409 359L410 364M416 359L417 365M423 357L424 363M430 355L431 360M437 352L439 357M444 348L446 352" stroke="#9ab4ae" stroke-width="0.8" opacity="0.5"/>
</g>
<path d="M508 317C494 320 480 326 472 336C466 344 467 354 474 364C482 374 496 386 512 399" fill="none" stroke="#aab0ac" stroke-width="1.6" opacity="0.7"/>
<path d="M508 320C495 323 482 329 475 338C470 345 470 354 476 363C484 373 497 384 512 396" fill="none" stroke="#626a72" stroke-width="1" opacity="0.5" transform="translate(2,1)"/>
<path d="M435.0 582.0 L444.0 487.0 L461.0 439.0 L479.0 417.0 L501.0 408.0 L520.0 398.0 L532.0 386.0 L558.0 360.0 L585.0 346.0 L611.0 340.0 L646.0 351.0 L681.0 381.0 L707.0 417.0 L734.0 461.0 L760.0 509.0 L782.0 548.0 L791.0 582.0Z" fill="#808080"/>
<g clip-path="url(#swL)"><path d="M640.0 560.0 A60.0 60.0 0 0 1 760.0 560.0 A60.0 60.0 0 0 1 640.0 560.0 M636.8 560.0 A63.2 63.2 0 0 1 763.2 560.0 A63.2 63.2 0 0 1 636.8 560.0 M633.6 560.0 A66.4 66.4 0 0 1 766.4 560.0 A66.4 66.4 0 0 1 633.6 560.0 M630.4 560.0 A69.6 69.6 0 0 1 769.6 560.0 A69.6 69.6 0 0 1 630.4 560.0 M627.2 560.0 A72.8 72.8 0 0 1 772.8 560.0 A72.8 72.8 0 0 1 627.2 560.0 M624.0 560.0 A76.0 76.0 0 0 1 776.0 560.0 A76.0 76.0 0 0 1 624.0 560.0 M620.8 560.0 A79.2 79.2 0 0 1 779.2 560.0 A79.2 79.2 0 0 1 620.8 560.0 M617.6 560.0 A82.4 82.4 0 0 1 782.4 560.0 A82.4 82.4 0 0 1 617.6 560.0 M614.4 560.0 A85.6 85.6 0 0 1 785.6 560.0 A85.6 85.6 0 0 1 614.4 560.0 M611.2 560.0 A88.8 88.8 0 0 1 788.8 560.0 A88.8 88.8 0 0 1 611.2 560.0 M608.0 560.0 A92.0 92.0 0 0 1 792.0 560.0 A92.0 92.0 0 0 1 608.0 560.0 M604.8 560.0 A95.2 95.2 0 0 1 795.2 560.0 A95.2 95.2 0 0 1 604.8 560.0 M601.6 560.0 A98.4 98.4 0 0 1 798.4 560.0 A98.4 98.4 0 0 1 601.6 560.0 M598.4 560.0 A101.6 101.6 0 0 1 801.6 560.0 A101.6 101.6 0 0 1 598.4 560.0 M595.2 560.0 A104.8 104.8 0 0 1 804.8 560.0 A104.8 104.8 0 0 1 595.2 560.0 M592.0 560.0 A108.0 108.0 0 0 1 808.0 560.0 A108.0 108.0 0 0 1 592.0 560.0 M588.8 560.0 A111.2 111.2 0 0 1 811.2 560.0 A111.2 111.2 0 0 1 588.8 560.0 M585.6 560.0 A114.4 114.4 0 0 1 814.4 560.0 A114.4 114.4 0 0 1 585.6 560.0 M582.4 560.0 A117.6 117.6 0 0 1 817.6 560.0 A117.6 117.6 0 0 1 582.4 560.0 M579.2 560.0 A120.8 120.8 0 0 1 820.8 560.0 A120.8 120.8 0 0 1 579.2 560.0 M576.0 560.0 A124.0 124.0 0 0 1 824.0 560.0 A124.0 124.0 0 0 1 576.0 560.0 M572.8 560.0 A127.2 127.2 0 0 1 827.2 560.0 A127.2 127.2 0 0 1 572.8 560.0 M569.6 560.0 A130.4 130.4 0 0 1 830.4 560.0 A130.4 130.4 0 0 1 569.6 560.0 M566.4 560.0 A133.6 133.6 0 0 1 833.6 560.0 A133.6 133.6 0 0 1 566.4 560.0 M563.2 560.0 A136.8 136.8 0 0 1 836.8 560.0 A136.8 136.8 0 0 1 563.2 560.0 M560.0 560.0 A140.0 140.0 0 0 1 840.0 560.0 A140.0 140.0 0 0 1 560.0 560.0 M556.8 560.0 A143.2 143.2 0 0 1 843.2 560.0 A143.2 143.2 0 0 1 556.8 560.0 M553.6 560.0 A146.4 146.4 0 0 1 846.4 560.0 A146.4 146.4 0 0 1 553.6 560.0 M550.4 560.0 A149.6 149.6 0 0 1 849.6 560.0 A149.6 149.6 0 0 1 550.4 560.0 M547.2 560.0 A152.8 152.8 0 0 1 852.8 560.0 A152.8 152.8 0 0 1 547.2 560.0 M544.0 560.0 A156.0 156.0 0 0 1 856.0 560.0 A156.0 156.0 0 0 1 544.0 560.0 M540.8 560.0 A159.2 159.2 0 0 1 859.2 560.0 A159.2 159.2 0 0 1 540.8 560.0 M537.6 560.0 A162.4 162.4 0 0 1 862.4 560.0 A162.4 162.4 0 0 1 537.6 560.0 M534.4 560.0 A165.6 165.6 0 0 1 865.6 560.0 A165.6 165.6 0 0 1 534.4 560.0 M531.2 560.0 A168.8 168.8 0 0 1 868.8 560.0 A168.8 168.8 0 0 1 531.2 560.0 M528.0 560.0 A172.0 172.0 0 0 1 872.0 560.0 A172.0 172.0 0 0 1 528.0 560.0 M524.8 560.0 A175.2 175.2 0 0 1 875.2 560.0 A175.2 175.2 0 0 1 524.8 560.0 M521.6 560.0 A178.4 178.4 0 0 1 878.4 560.0 A178.4 178.4 0 0 1 521.6 560.0 M518.4 560.0 A181.6 181.6 0 0 1 881.6 560.0 A181.6 181.6 0 0 1 518.4 560.0 M515.2 560.0 A184.8 184.8 0 0 1 884.8 560.0 A184.8 184.8 0 0 1 515.2 560.0 M512.0 560.0 A188.0 188.0 0 0 1 888.0 560.0 A188.0 188.0 0 0 1 512.0 560.0 M508.8 560.0 A191.2 191.2 0 0 1 891.2 560.0 A191.2 191.2 0 0 1 508.8 560.0 M505.6 560.0 A194.4 194.4 0 0 1 894.4 560.0 A194.4 194.4 0 0 1 505.6 560.0 M502.4 560.0 A197.6 197.6 0 0 1 897.6 560.0 A197.6 197.6 0 0 1 502.4 560.0 M499.2 560.0 A200.8 200.8 0 0 1 900.8 560.0 A200.8 200.8 0 0 1 499.2 560.0 M496.0 560.0 A204.0 204.0 0 0 1 904.0 560.0 A204.0 204.0 0 0 1 496.0 560.0 M492.8 560.0 A207.2 207.2 0 0 1 907.2 560.0 A207.2 207.2 0 0 1 492.8 560.0 M489.6 560.0 A210.4 210.4 0 0 1 910.4 560.0 A210.4 210.4 0 0 1 489.6 560.0 M486.4 560.0 A213.6 213.6 0 0 1 913.6 560.0 A213.6 213.6 0 0 1 486.4 560.0 M483.2 560.0 A216.8 216.8 0 0 1 916.8 560.0 A216.8 216.8 0 0 1 483.2 560.0 M480.0 560.0 A220.0 220.0 0 0 1 920.0 560.0 A220.0 220.0 0 0 1 480.0 560.0 M476.8 560.0 A223.2 223.2 0 0 1 923.2 560.0 A223.2 223.2 0 0 1 476.8 560.0 M473.6 560.0 A226.4 226.4 0 0 1 926.4 560.0 A226.4 226.4 0 0 1 473.6 560.0 M470.4 560.0 A229.6 229.6 0 0 1 929.6 560.0 A229.6 229.6 0 0 1 470.4 560.0 M467.2 560.0 A232.8 232.8 0 0 1 932.8 560.0 A232.8 232.8 0 0 1 467.2 560.0 M464.0 560.0 A236.0 236.0 0 0 1 936.0 560.0 A236.0 236.0 0 0 1 464.0 560.0 M460.8 560.0 A239.2 239.2 0 0 1 939.2 560.0 A239.2 239.2 0 0 1 460.8 560.0 M457.6 560.0 A242.4 242.4 0 0 1 942.4 560.0 A242.4 242.4 0 0 1 457.6 560.0 M454.4 560.0 A245.6 245.6 0 0 1 945.6 560.0 A245.6 245.6 0 0 1 454.4 560.0 M451.2 560.0 A248.8 248.8 0 0 1 948.8 560.0 A248.8 248.8 0 0 1 451.2 560.0 M448.0 560.0 A252.0 252.0 0 0 1 952.0 560.0 A252.0 252.0 0 0 1 448.0 560.0 M444.8 560.0 A255.2 255.2 0 0 1 955.2 560.0 A255.2 255.2 0 0 1 444.8 560.0 M441.6 560.0 A258.4 258.4 0 0 1 958.4 560.0 A258.4 258.4 0 0 1 441.6 560.0 M438.4 560.0 A261.6 261.6 0 0 1 961.6 560.0 A261.6 261.6 0 0 1 438.4 560.0 M435.2 560.0 A264.8 264.8 0 0 1 964.8 560.0 A264.8 264.8 0 0 1 435.2 560.0 M432.0 560.0 A268.0 268.0 0 0 1 968.0 560.0 A268.0 268.0 0 0 1 432.0 560.0 M428.8 560.0 A271.2 271.2 0 0 1 971.2 560.0 A271.2 271.2 0 0 1 428.8 560.0 M425.6 560.0 A274.4 274.4 0 0 1 974.4 560.0 A274.4 274.4 0 0 1 425.6 560.0 M422.4 560.0 A277.6 277.6 0 0 1 977.6 560.0 A277.6 277.6 0 0 1 422.4 560.0 M419.2 560.0 A280.8 280.8 0 0 1 980.8 560.0 A280.8 280.8 0 0 1 419.2 560.0 M416.0 560.0 A284.0 284.0 0 0 1 984.0 560.0 A284.0 284.0 0 0 1 416.0 560.0 M412.8 560.0 A287.2 287.2 0 0 1 987.2 560.0 A287.2 287.2 0 0 1 412.8 560.0 M409.6 560.0 A290.4 290.4 0 0 1 990.4 560.0 A290.4 290.4 0 0 1 409.6 560.0 M406.4 560.0 A293.6 293.6 0 0 1 993.6 560.0 A293.6 293.6 0 0 1 406.4 560.0 M403.2 560.0 A296.8 296.8 0 0 1 996.8 560.0 A296.8 296.8 0 0 1 403.2 560.0 M400.0 560.0 A300.0 300.0 0 0 1 1000.0 560.0 A300.0 300.0 0 0 1 400.0 560.0 M396.8 560.0 A303.2 303.2 0 0 1 1003.2 560.0 A303.2 303.2 0 0 1 396.8 560.0 M393.6 560.0 A306.4 306.4 0 0 1 1006.4 560.0 A306.4 306.4 0 0 1 393.6 560.0 M390.4 560.0 A309.6 309.6 0 0 1 1009.6 560.0 A309.6 309.6 0 0 1 390.4 560.0 M387.2 560.0 A312.8 312.8 0 0 1 1012.8 560.0 A312.8 312.8 0 0 1 387.2 560.0 M384.0 560.0 A316.0 316.0 0 0 1 1016.0 560.0 A316.0 316.0 0 0 1 384.0 560.0 M380.8 560.0 A319.2 319.2 0 0 1 1019.2 560.0 A319.2 319.2 0 0 1 380.8 560.0 M377.6 560.0 A322.4 322.4 0 0 1 1022.4 560.0 A322.4 322.4 0 0 1 377.6 560.0 M374.4 560.0 A325.6 325.6 0 0 1 1025.6 560.0 A325.6 325.6 0 0 1 374.4 560.0 M371.2 560.0 A328.8 328.8 0 0 1 1028.8 560.0 A328.8 328.8 0 0 1 371.2 560.0 M368.0 560.0 A332.0 332.0 0 0 1 1032.0 560.0 A332.0 332.0 0 0 1 368.0 560.0 M364.8 560.0 A335.2 335.2 0 0 1 1035.2 560.0 A335.2 335.2 0 0 1 364.8 560.0 M361.6 560.0 A338.4 338.4 0 0 1 1038.4 560.0 A338.4 338.4 0 0 1 361.6 560.0 M358.4 560.0 A341.6 341.6 0 0 1 1041.6 560.0 A341.6 341.6 0 0 1 358.4 560.0 M355.2 560.0 A344.8 344.8 0 0 1 1044.8 560.0 A344.8 344.8 0 0 1 355.2 560.0 M352.0 560.0 A348.0 348.0 0 0 1 1048.0 560.0 A348.0 348.0 0 0 1 352.0 560.0 M348.8 560.0 A351.2 351.2 0 0 1 1051.2 560.0 A351.2 351.2 0 0 1 348.8 560.0 M345.6 560.0 A354.4 354.4 0 0 1 1054.4 560.0 A354.4 354.4 0 0 1 345.6 560.0 M342.4 560.0 A357.6 357.6 0 0 1 1057.6 560.0 A357.6 357.6 0 0 1 342.4 560.0 M339.2 560.0 A360.8 360.8 0 0 1 1060.8 560.0 A360.8 360.8 0 0 1 339.2 560.0 M336.0 560.0 A364.0 364.0 0 0 1 1064.0 560.0 A364.0 364.0 0 0 1 336.0 560.0 M332.8 560.0 A367.2 367.2 0 0 1 1067.2 560.0 A367.2 367.2 0 0 1 332.8 560.0 M329.6 560.0 A370.4 370.4 0 0 1 1070.4 560.0 A370.4 370.4 0 0 1 329.6 560.0 M326.4 560.0 A373.6 373.6 0 0 1 1073.6 560.0 A373.6 373.6 0 0 1 326.4 560.0 M323.2 560.0 A376.8 376.8 0 0 1 1076.8 560.0 A376.8 376.8 0 0 1 323.2 560.0" fill="none" stroke="#8f8a8c" stroke-width="1.2" opacity="0.35"/></g>
<g clip-path="url(#swR)"><path d="M540.0 520.0 A20.0 20.0 0 0 1 580.0 520.0 A20.0 20.0 0 0 1 540.0 520.0 M536.8 520.0 A23.2 23.2 0 0 1 583.2 520.0 A23.2 23.2 0 0 1 536.8 520.0 M533.6 520.0 A26.4 26.4 0 0 1 586.4 520.0 A26.4 26.4 0 0 1 533.6 520.0 M530.4 520.0 A29.6 29.6 0 0 1 589.6 520.0 A29.6 29.6 0 0 1 530.4 520.0 M527.2 520.0 A32.8 32.8 0 0 1 592.8 520.0 A32.8 32.8 0 0 1 527.2 520.0 M524.0 520.0 A36.0 36.0 0 0 1 596.0 520.0 A36.0 36.0 0 0 1 524.0 520.0 M520.8 520.0 A39.2 39.2 0 0 1 599.2 520.0 A39.2 39.2 0 0 1 520.8 520.0 M517.6 520.0 A42.4 42.4 0 0 1 602.4 520.0 A42.4 42.4 0 0 1 517.6 520.0 M514.4 520.0 A45.6 45.6 0 0 1 605.6 520.0 A45.6 45.6 0 0 1 514.4 520.0 M511.2 520.0 A48.8 48.8 0 0 1 608.8 520.0 A48.8 48.8 0 0 1 511.2 520.0 M508.0 520.0 A52.0 52.0 0 0 1 612.0 520.0 A52.0 52.0 0 0 1 508.0 520.0 M504.8 520.0 A55.2 55.2 0 0 1 615.2 520.0 A55.2 55.2 0 0 1 504.8 520.0 M501.6 520.0 A58.4 58.4 0 0 1 618.4 520.0 A58.4 58.4 0 0 1 501.6 520.0 M498.4 520.0 A61.6 61.6 0 0 1 621.6 520.0 A61.6 61.6 0 0 1 498.4 520.0 M495.2 520.0 A64.8 64.8 0 0 1 624.8 520.0 A64.8 64.8 0 0 1 495.2 520.0 M492.0 520.0 A68.0 68.0 0 0 1 628.0 520.0 A68.0 68.0 0 0 1 492.0 520.0 M488.8 520.0 A71.2 71.2 0 0 1 631.2 520.0 A71.2 71.2 0 0 1 488.8 520.0 M485.6 520.0 A74.4 74.4 0 0 1 634.4 520.0 A74.4 74.4 0 0 1 485.6 520.0 M482.4 520.0 A77.6 77.6 0 0 1 637.6 520.0 A77.6 77.6 0 0 1 482.4 520.0 M479.2 520.0 A80.8 80.8 0 0 1 640.8 520.0 A80.8 80.8 0 0 1 479.2 520.0 M476.0 520.0 A84.0 84.0 0 0 1 644.0 520.0 A84.0 84.0 0 0 1 476.0 520.0 M472.8 520.0 A87.2 87.2 0 0 1 647.2 520.0 A87.2 87.2 0 0 1 472.8 520.0 M469.6 520.0 A90.4 90.4 0 0 1 650.4 520.0 A90.4 90.4 0 0 1 469.6 520.0 M466.4 520.0 A93.6 93.6 0 0 1 653.6 520.0 A93.6 93.6 0 0 1 466.4 520.0 M463.2 520.0 A96.8 96.8 0 0 1 656.8 520.0 A96.8 96.8 0 0 1 463.2 520.0 M460.0 520.0 A100.0 100.0 0 0 1 660.0 520.0 A100.0 100.0 0 0 1 460.0 520.0 M456.8 520.0 A103.2 103.2 0 0 1 663.2 520.0 A103.2 103.2 0 0 1 456.8 520.0 M453.6 520.0 A106.4 106.4 0 0 1 666.4 520.0 A106.4 106.4 0 0 1 453.6 520.0 M450.4 520.0 A109.6 109.6 0 0 1 669.6 520.0 A109.6 109.6 0 0 1 450.4 520.0 M447.2 520.0 A112.8 112.8 0 0 1 672.8 520.0 A112.8 112.8 0 0 1 447.2 520.0 M444.0 520.0 A116.0 116.0 0 0 1 676.0 520.0 A116.0 116.0 0 0 1 444.0 520.0 M440.8 520.0 A119.2 119.2 0 0 1 679.2 520.0 A119.2 119.2 0 0 1 440.8 520.0 M437.6 520.0 A122.4 122.4 0 0 1 682.4 520.0 A122.4 122.4 0 0 1 437.6 520.0 M434.4 520.0 A125.6 125.6 0 0 1 685.6 520.0 A125.6 125.6 0 0 1 434.4 520.0 M431.2 520.0 A128.8 128.8 0 0 1 688.8 520.0 A128.8 128.8 0 0 1 431.2 520.0 M428.0 520.0 A132.0 132.0 0 0 1 692.0 520.0 A132.0 132.0 0 0 1 428.0 520.0 M424.8 520.0 A135.2 135.2 0 0 1 695.2 520.0 A135.2 135.2 0 0 1 424.8 520.0 M421.6 520.0 A138.4 138.4 0 0 1 698.4 520.0 A138.4 138.4 0 0 1 421.6 520.0 M418.4 520.0 A141.6 141.6 0 0 1 701.6 520.0 A141.6 141.6 0 0 1 418.4 520.0 M415.2 520.0 A144.8 144.8 0 0 1 704.8 520.0 A144.8 144.8 0 0 1 415.2 520.0 M412.0 520.0 A148.0 148.0 0 0 1 708.0 520.0 A148.0 148.0 0 0 1 412.0 520.0 M408.8 520.0 A151.2 151.2 0 0 1 711.2 520.0 A151.2 151.2 0 0 1 408.8 520.0 M405.6 520.0 A154.4 154.4 0 0 1 714.4 520.0 A154.4 154.4 0 0 1 405.6 520.0 M402.4 520.0 A157.6 157.6 0 0 1 717.6 520.0 A157.6 157.6 0 0 1 402.4 520.0 M399.2 520.0 A160.8 160.8 0 0 1 720.8 520.0 A160.8 160.8 0 0 1 399.2 520.0 M396.0 520.0 A164.0 164.0 0 0 1 724.0 520.0 A164.0 164.0 0 0 1 396.0 520.0 M392.8 520.0 A167.2 167.2 0 0 1 727.2 520.0 A167.2 167.2 0 0 1 392.8 520.0 M389.6 520.0 A170.4 170.4 0 0 1 730.4 520.0 A170.4 170.4 0 0 1 389.6 520.0 M386.4 520.0 A173.6 173.6 0 0 1 733.6 520.0 A173.6 173.6 0 0 1 386.4 520.0 M383.2 520.0 A176.8 176.8 0 0 1 736.8 520.0 A176.8 176.8 0 0 1 383.2 520.0 M380.0 520.0 A180.0 180.0 0 0 1 740.0 520.0 A180.0 180.0 0 0 1 380.0 520.0 M376.8 520.0 A183.2 183.2 0 0 1 743.2 520.0 A183.2 183.2 0 0 1 376.8 520.0 M373.6 520.0 A186.4 186.4 0 0 1 746.4 520.0 A186.4 186.4 0 0 1 373.6 520.0 M370.4 520.0 A189.6 189.6 0 0 1 749.6 520.0 A189.6 189.6 0 0 1 370.4 520.0 M367.2 520.0 A192.8 192.8 0 0 1 752.8 520.0 A192.8 192.8 0 0 1 367.2 520.0 M364.0 520.0 A196.0 196.0 0 0 1 756.0 520.0 A196.0 196.0 0 0 1 364.0 520.0 M360.8 520.0 A199.2 199.2 0 0 1 759.2 520.0 A199.2 199.2 0 0 1 360.8 520.0 M357.6 520.0 A202.4 202.4 0 0 1 762.4 520.0 A202.4 202.4 0 0 1 357.6 520.0 M354.4 520.0 A205.6 205.6 0 0 1 765.6 520.0 A205.6 205.6 0 0 1 354.4 520.0 M351.2 520.0 A208.8 208.8 0 0 1 768.8 520.0 A208.8 208.8 0 0 1 351.2 520.0 M348.0 520.0 A212.0 212.0 0 0 1 772.0 520.0 A212.0 212.0 0 0 1 348.0 520.0 M344.8 520.0 A215.2 215.2 0 0 1 775.2 520.0 A215.2 215.2 0 0 1 344.8 520.0 M341.6 520.0 A218.4 218.4 0 0 1 778.4 520.0 A218.4 218.4 0 0 1 341.6 520.0 M338.4 520.0 A221.6 221.6 0 0 1 781.6 520.0 A221.6 221.6 0 0 1 338.4 520.0 M335.2 520.0 A224.8 224.8 0 0 1 784.8 520.0 A224.8 224.8 0 0 1 335.2 520.0 M332.0 520.0 A228.0 228.0 0 0 1 788.0 520.0 A228.0 228.0 0 0 1 332.0 520.0 M328.8 520.0 A231.2 231.2 0 0 1 791.2 520.0 A231.2 231.2 0 0 1 328.8 520.0 M325.6 520.0 A234.4 234.4 0 0 1 794.4 520.0 A234.4 234.4 0 0 1 325.6 520.0 M322.4 520.0 A237.6 237.6 0 0 1 797.6 520.0 A237.6 237.6 0 0 1 322.4 520.0 M319.2 520.0 A240.8 240.8 0 0 1 800.8 520.0 A240.8 240.8 0 0 1 319.2 520.0 M316.0 520.0 A244.0 244.0 0 0 1 804.0 520.0 A244.0 244.0 0 0 1 316.0 520.0 M312.8 520.0 A247.2 247.2 0 0 1 807.2 520.0 A247.2 247.2 0 0 1 312.8 520.0 M309.6 520.0 A250.4 250.4 0 0 1 810.4 520.0 A250.4 250.4 0 0 1 309.6 520.0 M306.4 520.0 A253.6 253.6 0 0 1 813.6 520.0 A253.6 253.6 0 0 1 306.4 520.0 M303.2 520.0 A256.8 256.8 0 0 1 816.8 520.0 A256.8 256.8 0 0 1 303.2 520.0 M300.0 520.0 A260.0 260.0 0 0 1 820.0 520.0 A260.0 260.0 0 0 1 300.0 520.0 M296.8 520.0 A263.2 263.2 0 0 1 823.2 520.0 A263.2 263.2 0 0 1 296.8 520.0 M293.6 520.0 A266.4 266.4 0 0 1 826.4 520.0 A266.4 266.4 0 0 1 293.6 520.0 M290.4 520.0 A269.6 269.6 0 0 1 829.6 520.0 A269.6 269.6 0 0 1 290.4 520.0 M287.2 520.0 A272.8 272.8 0 0 1 832.8 520.0 A272.8 272.8 0 0 1 287.2 520.0 M284.0 520.0 A276.0 276.0 0 0 1 836.0 520.0 A276.0 276.0 0 0 1 284.0 520.0 M280.8 520.0 A279.2 279.2 0 0 1 839.2 520.0 A279.2 279.2 0 0 1 280.8 520.0 M277.6 520.0 A282.4 282.4 0 0 1 842.4 520.0 A282.4 282.4 0 0 1 277.6 520.0 M274.4 520.0 A285.6 285.6 0 0 1 845.6 520.0 A285.6 285.6 0 0 1 274.4 520.0 M271.2 520.0 A288.8 288.8 0 0 1 848.8 520.0 A288.8 288.8 0 0 1 271.2 520.0 M268.0 520.0 A292.0 292.0 0 0 1 852.0 520.0 A292.0 292.0 0 0 1 268.0 520.0 M264.8 520.0 A295.2 295.2 0 0 1 855.2 520.0 A295.2 295.2 0 0 1 264.8 520.0 M261.6 520.0 A298.4 298.4 0 0 1 858.4 520.0 A298.4 298.4 0 0 1 261.6 520.0" fill="none" stroke="#8a9090" stroke-width="1.2" opacity="0.35"/></g>
<defs><clipPath id="swL"><path d="M435.0 582.0 L444.0 487.0 L461.0 439.0 L479.0 417.0 L501.0 408.0 L520.0 398.0 L532.0 386.0 L558.0 360.0 L585.0 346.0 L611.0 340.0 L600.0 582.0Z"/></clipPath><clipPath id="swR"><path d="M611.0 340.0 L646.0 351.0 L681.0 381.0 L707.0 417.0 L734.0 461.0 L760.0 509.0 L782.0 548.0 L791.0 582.0 L600.0 582.0 L602.0 531.0 L606.0 452.0Z"/></clipPath></defs>
<g clip-path="url(#swL)"><path d="M640.0 560.0 A60.0 60.0 0 0 1 760.0 560.0 A60.0 60.0 0 0 1 640.0 560.0 M636.8 560.0 A63.2 63.2 0 0 1 763.2 560.0 A63.2 63.2 0 0 1 636.8 560.0 M633.6 560.0 A66.4 66.4 0 0 1 766.4 560.0 A66.4 66.4 0 0 1 633.6 560.0 M630.4 560.0 A69.6 69.6 0 0 1 769.6 560.0 A69.6 69.6 0 0 1 630.4 560.0 M627.2 560.0 A72.8 72.8 0 0 1 772.8 560.0 A72.8 72.8 0 0 1 627.2 560.0 M624.0 560.0 A76.0 76.0 0 0 1 776.0 560.0 A76.0 76.0 0 0 1 624.0 560.0 M620.8 560.0 A79.2 79.2 0 0 1 779.2 560.0 A79.2 79.2 0 0 1 620.8 560.0 M617.6 560.0 A82.4 82.4 0 0 1 782.4 560.0 A82.4 82.4 0 0 1 617.6 560.0 M614.4 560.0 A85.6 85.6 0 0 1 785.6 560.0 A85.6 85.6 0 0 1 614.4 560.0 M611.2 560.0 A88.8 88.8 0 0 1 788.8 560.0 A88.8 88.8 0 0 1 611.2 560.0 M608.0 560.0 A92.0 92.0 0 0 1 792.0 560.0 A92.0 92.0 0 0 1 608.0 560.0 M604.8 560.0 A95.2 95.2 0 0 1 795.2 560.0 A95.2 95.2 0 0 1 604.8 560.0 M601.6 560.0 A98.4 98.4 0 0 1 798.4 560.0 A98.4 98.4 0 0 1 601.6 560.0 M598.4 560.0 A101.6 101.6 0 0 1 801.6 560.0 A101.6 101.6 0 0 1 598.4 560.0 M595.2 560.0 A104.8 104.8 0 0 1 804.8 560.0 A104.8 104.8 0 0 1 595.2 560.0 M592.0 560.0 A108.0 108.0 0 0 1 808.0 560.0 A108.0 108.0 0 0 1 592.0 560.0 M588.8 560.0 A111.2 111.2 0 0 1 811.2 560.0 A111.2 111.2 0 0 1 588.8 560.0 M585.6 560.0 A114.4 114.4 0 0 1 814.4 560.0 A114.4 114.4 0 0 1 585.6 560.0 M582.4 560.0 A117.6 117.6 0 0 1 817.6 560.0 A117.6 117.6 0 0 1 582.4 560.0 M579.2 560.0 A120.8 120.8 0 0 1 820.8 560.0 A120.8 120.8 0 0 1 579.2 560.0 M576.0 560.0 A124.0 124.0 0 0 1 824.0 560.0 A124.0 124.0 0 0 1 576.0 560.0 M572.8 560.0 A127.2 127.2 0 0 1 827.2 560.0 A127.2 127.2 0 0 1 572.8 560.0 M569.6 560.0 A130.4 130.4 0 0 1 830.4 560.0 A130.4 130.4 0 0 1 569.6 560.0 M566.4 560.0 A133.6 133.6 0 0 1 833.6 560.0 A133.6 133.6 0 0 1 566.4 560.0 M563.2 560.0 A136.8 136.8 0 0 1 836.8 560.0 A136.8 136.8 0 0 1 563.2 560.0 M560.0 560.0 A140.0 140.0 0 0 1 840.0 560.0 A140.0 140.0 0 0 1 560.0 560.0 M556.8 560.0 A143.2 143.2 0 0 1 843.2 560.0 A143.2 143.2 0 0 1 556.8 560.0 M553.6 560.0 A146.4 146.4 0 0 1 846.4 560.0 A146.4 146.4 0 0 1 553.6 560.0 M550.4 560.0 A149.6 149.6 0 0 1 849.6 560.0 A149.6 149.6 0 0 1 550.4 560.0 M547.2 560.0 A152.8 152.8 0 0 1 852.8 560.0 A152.8 152.8 0 0 1 547.2 560.0 M544.0 560.0 A156.0 156.0 0 0 1 856.0 560.0 A156.0 156.0 0 0 1 544.0 560.0 M540.8 560.0 A159.2 159.2 0 0 1 859.2 560.0 A159.2 159.2 0 0 1 540.8 560.0 M537.6 560.0 A162.4 162.4 0 0 1 862.4 560.0 A162.4 162.4 0 0 1 537.6 560.0 M534.4 560.0 A165.6 165.6 0 0 1 865.6 560.0 A165.6 165.6 0 0 1 534.4 560.0 M531.2 560.0 A168.8 168.8 0 0 1 868.8 560.0 A168.8 168.8 0 0 1 531.2 560.0 M528.0 560.0 A172.0 172.0 0 0 1 872.0 560.0 A172.0 172.0 0 0 1 528.0 560.0 M524.8 560.0 A175.2 175.2 0 0 1 875.2 560.0 A175.2 175.2 0 0 1 524.8 560.0 M521.6 560.0 A178.4 178.4 0 0 1 878.4 560.0 A178.4 178.4 0 0 1 521.6 560.0 M518.4 560.0 A181.6 181.6 0 0 1 881.6 560.0 A181.6 181.6 0 0 1 518.4 560.0 M515.2 560.0 A184.8 184.8 0 0 1 884.8 560.0 A184.8 184.8 0 0 1 515.2 560.0 M512.0 560.0 A188.0 188.0 0 0 1 888.0 560.0 A188.0 188.0 0 0 1 512.0 560.0 M508.8 560.0 A191.2 191.2 0 0 1 891.2 560.0 A191.2 191.2 0 0 1 508.8 560.0 M505.6 560.0 A194.4 194.4 0 0 1 894.4 560.0 A194.4 194.4 0 0 1 505.6 560.0 M502.4 560.0 A197.6 197.6 0 0 1 897.6 560.0 A197.6 197.6 0 0 1 502.4 560.0 M499.2 560.0 A200.8 200.8 0 0 1 900.8 560.0 A200.8 200.8 0 0 1 499.2 560.0 M496.0 560.0 A204.0 204.0 0 0 1 904.0 560.0 A204.0 204.0 0 0 1 496.0 560.0 M492.8 560.0 A207.2 207.2 0 0 1 907.2 560.0 A207.2 207.2 0 0 1 492.8 560.0 M489.6 560.0 A210.4 210.4 0 0 1 910.4 560.0 A210.4 210.4 0 0 1 489.6 560.0 M486.4 560.0 A213.6 213.6 0 0 1 913.6 560.0 A213.6 213.6 0 0 1 486.4 560.0 M483.2 560.0 A216.8 216.8 0 0 1 916.8 560.0 A216.8 216.8 0 0 1 483.2 560.0 M480.0 560.0 A220.0 220.0 0 0 1 920.0 560.0 A220.0 220.0 0 0 1 480.0 560.0 M476.8 560.0 A223.2 223.2 0 0 1 923.2 560.0 A223.2 223.2 0 0 1 476.8 560.0 M473.6 560.0 A226.4 226.4 0 0 1 926.4 560.0 A226.4 226.4 0 0 1 473.6 560.0 M470.4 560.0 A229.6 229.6 0 0 1 929.6 560.0 A229.6 229.6 0 0 1 470.4 560.0 M467.2 560.0 A232.8 232.8 0 0 1 932.8 560.0 A232.8 232.8 0 0 1 467.2 560.0 M464.0 560.0 A236.0 236.0 0 0 1 936.0 560.0 A236.0 236.0 0 0 1 464.0 560.0 M460.8 560.0 A239.2 239.2 0 0 1 939.2 560.0 A239.2 239.2 0 0 1 460.8 560.0 M457.6 560.0 A242.4 242.4 0 0 1 942.4 560.0 A242.4 242.4 0 0 1 457.6 560.0 M454.4 560.0 A245.6 245.6 0 0 1 945.6 560.0 A245.6 245.6 0 0 1 454.4 560.0 M451.2 560.0 A248.8 248.8 0 0 1 948.8 560.0 A248.8 248.8 0 0 1 451.2 560.0 M448.0 560.0 A252.0 252.0 0 0 1 952.0 560.0 A252.0 252.0 0 0 1 448.0 560.0 M444.8 560.0 A255.2 255.2 0 0 1 955.2 560.0 A255.2 255.2 0 0 1 444.8 560.0 M441.6 560.0 A258.4 258.4 0 0 1 958.4 560.0 A258.4 258.4 0 0 1 441.6 560.0 M438.4 560.0 A261.6 261.6 0 0 1 961.6 560.0 A261.6 261.6 0 0 1 438.4 560.0 M435.2 560.0 A264.8 264.8 0 0 1 964.8 560.0 A264.8 264.8 0 0 1 435.2 560.0 M432.0 560.0 A268.0 268.0 0 0 1 968.0 560.0 A268.0 268.0 0 0 1 432.0 560.0 M428.8 560.0 A271.2 271.2 0 0 1 971.2 560.0 A271.2 271.2 0 0 1 428.8 560.0 M425.6 560.0 A274.4 274.4 0 0 1 974.4 560.0 A274.4 274.4 0 0 1 425.6 560.0 M422.4 560.0 A277.6 277.6 0 0 1 977.6 560.0 A277.6 277.6 0 0 1 422.4 560.0 M419.2 560.0 A280.8 280.8 0 0 1 980.8 560.0 A280.8 280.8 0 0 1 419.2 560.0 M416.0 560.0 A284.0 284.0 0 0 1 984.0 560.0 A284.0 284.0 0 0 1 416.0 560.0 M412.8 560.0 A287.2 287.2 0 0 1 987.2 560.0 A287.2 287.2 0 0 1 412.8 560.0 M409.6 560.0 A290.4 290.4 0 0 1 990.4 560.0 A290.4 290.4 0 0 1 409.6 560.0 M406.4 560.0 A293.6 293.6 0 0 1 993.6 560.0 A293.6 293.6 0 0 1 406.4 560.0 M403.2 560.0 A296.8 296.8 0 0 1 996.8 560.0 A296.8 296.8 0 0 1 403.2 560.0 M400.0 560.0 A300.0 300.0 0 0 1 1000.0 560.0 A300.0 300.0 0 0 1 400.0 560.0 M396.8 560.0 A303.2 303.2 0 0 1 1003.2 560.0 A303.2 303.2 0 0 1 396.8 560.0 M393.6 560.0 A306.4 306.4 0 0 1 1006.4 560.0 A306.4 306.4 0 0 1 393.6 560.0 M390.4 560.0 A309.6 309.6 0 0 1 1009.6 560.0 A309.6 309.6 0 0 1 390.4 560.0 M387.2 560.0 A312.8 312.8 0 0 1 1012.8 560.0 A312.8 312.8 0 0 1 387.2 560.0 M384.0 560.0 A316.0 316.0 0 0 1 1016.0 560.0 A316.0 316.0 0 0 1 384.0 560.0 M380.8 560.0 A319.2 319.2 0 0 1 1019.2 560.0 A319.2 319.2 0 0 1 380.8 560.0 M377.6 560.0 A322.4 322.4 0 0 1 1022.4 560.0 A322.4 322.4 0 0 1 377.6 560.0 M374.4 560.0 A325.6 325.6 0 0 1 1025.6 560.0 A325.6 325.6 0 0 1 374.4 560.0 M371.2 560.0 A328.8 328.8 0 0 1 1028.8 560.0 A328.8 328.8 0 0 1 371.2 560.0 M368.0 560.0 A332.0 332.0 0 0 1 1032.0 560.0 A332.0 332.0 0 0 1 368.0 560.0 M364.8 560.0 A335.2 335.2 0 0 1 1035.2 560.0 A335.2 335.2 0 0 1 364.8 560.0 M361.6 560.0 A338.4 338.4 0 0 1 1038.4 560.0 A338.4 338.4 0 0 1 361.6 560.0 M358.4 560.0 A341.6 341.6 0 0 1 1041.6 560.0 A341.6 341.6 0 0 1 358.4 560.0 M355.2 560.0 A344.8 344.8 0 0 1 1044.8 560.0 A344.8 344.8 0 0 1 355.2 560.0 M352.0 560.0 A348.0 348.0 0 0 1 1048.0 560.0 A348.0 348.0 0 0 1 352.0 560.0 M348.8 560.0 A351.2 351.2 0 0 1 1051.2 560.0 A351.2 351.2 0 0 1 348.8 560.0 M345.6 560.0 A354.4 354.4 0 0 1 1054.4 560.0 A354.4 354.4 0 0 1 345.6 560.0 M342.4 560.0 A357.6 357.6 0 0 1 1057.6 560.0 A357.6 357.6 0 0 1 342.4 560.0 M339.2 560.0 A360.8 360.8 0 0 1 1060.8 560.0 A360.8 360.8 0 0 1 339.2 560.0 M336.0 560.0 A364.0 364.0 0 0 1 1064.0 560.0 A364.0 364.0 0 0 1 336.0 560.0 M332.8 560.0 A367.2 367.2 0 0 1 1067.2 560.0 A367.2 367.2 0 0 1 332.8 560.0 M329.6 560.0 A370.4 370.4 0 0 1 1070.4 560.0 A370.4 370.4 0 0 1 329.6 560.0 M326.4 560.0 A373.6 373.6 0 0 1 1073.6 560.0 A373.6 373.6 0 0 1 326.4 560.0 M323.2 560.0 A376.8 376.8 0 0 1 1076.8 560.0 A376.8 376.8 0 0 1 323.2 560.0" fill="none" stroke="#6e7678" stroke-width="0.8" opacity="0.3" transform="translate(1.5,1.5)"/></g>
<g clip-path="url(#swR)"><path d="M540.0 520.0 A20.0 20.0 0 0 1 580.0 520.0 A20.0 20.0 0 0 1 540.0 520.0 M536.8 520.0 A23.2 23.2 0 0 1 583.2 520.0 A23.2 23.2 0 0 1 536.8 520.0 M533.6 520.0 A26.4 26.4 0 0 1 586.4 520.0 A26.4 26.4 0 0 1 533.6 520.0 M530.4 520.0 A29.6 29.6 0 0 1 589.6 520.0 A29.6 29.6 0 0 1 530.4 520.0 M527.2 520.0 A32.8 32.8 0 0 1 592.8 520.0 A32.8 32.8 0 0 1 527.2 520.0 M524.0 520.0 A36.0 36.0 0 0 1 596.0 520.0 A36.0 36.0 0 0 1 524.0 520.0 M520.8 520.0 A39.2 39.2 0 0 1 599.2 520.0 A39.2 39.2 0 0 1 520.8 520.0 M517.6 520.0 A42.4 42.4 0 0 1 602.4 520.0 A42.4 42.4 0 0 1 517.6 520.0 M514.4 520.0 A45.6 45.6 0 0 1 605.6 520.0 A45.6 45.6 0 0 1 514.4 520.0 M511.2 520.0 A48.8 48.8 0 0 1 608.8 520.0 A48.8 48.8 0 0 1 511.2 520.0 M508.0 520.0 A52.0 52.0 0 0 1 612.0 520.0 A52.0 52.0 0 0 1 508.0 520.0 M504.8 520.0 A55.2 55.2 0 0 1 615.2 520.0 A55.2 55.2 0 0 1 504.8 520.0 M501.6 520.0 A58.4 58.4 0 0 1 618.4 520.0 A58.4 58.4 0 0 1 501.6 520.0 M498.4 520.0 A61.6 61.6 0 0 1 621.6 520.0 A61.6 61.6 0 0 1 498.4 520.0 M495.2 520.0 A64.8 64.8 0 0 1 624.8 520.0 A64.8 64.8 0 0 1 495.2 520.0 M492.0 520.0 A68.0 68.0 0 0 1 628.0 520.0 A68.0 68.0 0 0 1 492.0 520.0 M488.8 520.0 A71.2 71.2 0 0 1 631.2 520.0 A71.2 71.2 0 0 1 488.8 520.0 M485.6 520.0 A74.4 74.4 0 0 1 634.4 520.0 A74.4 74.4 0 0 1 485.6 520.0 M482.4 520.0 A77.6 77.6 0 0 1 637.6 520.0 A77.6 77.6 0 0 1 482.4 520.0 M479.2 520.0 A80.8 80.8 0 0 1 640.8 520.0 A80.8 80.8 0 0 1 479.2 520.0 M476.0 520.0 A84.0 84.0 0 0 1 644.0 520.0 A84.0 84.0 0 0 1 476.0 520.0 M472.8 520.0 A87.2 87.2 0 0 1 647.2 520.0 A87.2 87.2 0 0 1 472.8 520.0 M469.6 520.0 A90.4 90.4 0 0 1 650.4 520.0 A90.4 90.4 0 0 1 469.6 520.0 M466.4 520.0 A93.6 93.6 0 0 1 653.6 520.0 A93.6 93.6 0 0 1 466.4 520.0 M463.2 520.0 A96.8 96.8 0 0 1 656.8 520.0 A96.8 96.8 0 0 1 463.2 520.0 M460.0 520.0 A100.0 100.0 0 0 1 660.0 520.0 A100.0 100.0 0 0 1 460.0 520.0 M456.8 520.0 A103.2 103.2 0 0 1 663.2 520.0 A103.2 103.2 0 0 1 456.8 520.0 M453.6 520.0 A106.4 106.4 0 0 1 666.4 520.0 A106.4 106.4 0 0 1 453.6 520.0 M450.4 520.0 A109.6 109.6 0 0 1 669.6 520.0 A109.6 109.6 0 0 1 450.4 520.0 M447.2 520.0 A112.8 112.8 0 0 1 672.8 520.0 A112.8 112.8 0 0 1 447.2 520.0 M444.0 520.0 A116.0 116.0 0 0 1 676.0 520.0 A116.0 116.0 0 0 1 444.0 520.0 M440.8 520.0 A119.2 119.2 0 0 1 679.2 520.0 A119.2 119.2 0 0 1 440.8 520.0 M437.6 520.0 A122.4 122.4 0 0 1 682.4 520.0 A122.4 122.4 0 0 1 437.6 520.0 M434.4 520.0 A125.6 125.6 0 0 1 685.6 520.0 A125.6 125.6 0 0 1 434.4 520.0 M431.2 520.0 A128.8 128.8 0 0 1 688.8 520.0 A128.8 128.8 0 0 1 431.2 520.0 M428.0 520.0 A132.0 132.0 0 0 1 692.0 520.0 A132.0 132.0 0 0 1 428.0 520.0 M424.8 520.0 A135.2 135.2 0 0 1 695.2 520.0 A135.2 135.2 0 0 1 424.8 520.0 M421.6 520.0 A138.4 138.4 0 0 1 698.4 520.0 A138.4 138.4 0 0 1 421.6 520.0 M418.4 520.0 A141.6 141.6 0 0 1 701.6 520.0 A141.6 141.6 0 0 1 418.4 520.0 M415.2 520.0 A144.8 144.8 0 0 1 704.8 520.0 A144.8 144.8 0 0 1 415.2 520.0 M412.0 520.0 A148.0 148.0 0 0 1 708.0 520.0 A148.0 148.0 0 0 1 412.0 520.0 M408.8 520.0 A151.2 151.2 0 0 1 711.2 520.0 A151.2 151.2 0 0 1 408.8 520.0 M405.6 520.0 A154.4 154.4 0 0 1 714.4 520.0 A154.4 154.4 0 0 1 405.6 520.0 M402.4 520.0 A157.6 157.6 0 0 1 717.6 520.0 A157.6 157.6 0 0 1 402.4 520.0 M399.2 520.0 A160.8 160.8 0 0 1 720.8 520.0 A160.8 160.8 0 0 1 399.2 520.0 M396.0 520.0 A164.0 164.0 0 0 1 724.0 520.0 A164.0 164.0 0 0 1 396.0 520.0 M392.8 520.0 A167.2 167.2 0 0 1 727.2 520.0 A167.2 167.2 0 0 1 392.8 520.0 M389.6 520.0 A170.4 170.4 0 0 1 730.4 520.0 A170.4 170.4 0 0 1 389.6 520.0 M386.4 520.0 A173.6 173.6 0 0 1 733.6 520.0 A173.6 173.6 0 0 1 386.4 520.0 M383.2 520.0 A176.8 176.8 0 0 1 736.8 520.0 A176.8 176.8 0 0 1 383.2 520.0 M380.0 520.0 A180.0 180.0 0 0 1 740.0 520.0 A180.0 180.0 0 0 1 380.0 520.0 M376.8 520.0 A183.2 183.2 0 0 1 743.2 520.0 A183.2 183.2 0 0 1 376.8 520.0 M373.6 520.0 A186.4 186.4 0 0 1 746.4 520.0 A186.4 186.4 0 0 1 373.6 520.0 M370.4 520.0 A189.6 189.6 0 0 1 749.6 520.0 A189.6 189.6 0 0 1 370.4 520.0 M367.2 520.0 A192.8 192.8 0 0 1 752.8 520.0 A192.8 192.8 0 0 1 367.2 520.0 M364.0 520.0 A196.0 196.0 0 0 1 756.0 520.0 A196.0 196.0 0 0 1 364.0 520.0 M360.8 520.0 A199.2 199.2 0 0 1 759.2 520.0 A199.2 199.2 0 0 1 360.8 520.0 M357.6 520.0 A202.4 202.4 0 0 1 762.4 520.0 A202.4 202.4 0 0 1 357.6 520.0 M354.4 520.0 A205.6 205.6 0 0 1 765.6 520.0 A205.6 205.6 0 0 1 354.4 520.0 M351.2 520.0 A208.8 208.8 0 0 1 768.8 520.0 A208.8 208.8 0 0 1 351.2 520.0 M348.0 520.0 A212.0 212.0 0 0 1 772.0 520.0 A212.0 212.0 0 0 1 348.0 520.0 M344.8 520.0 A215.2 215.2 0 0 1 775.2 520.0 A215.2 215.2 0 0 1 344.8 520.0 M341.6 520.0 A218.4 218.4 0 0 1 778.4 520.0 A218.4 218.4 0 0 1 341.6 520.0 M338.4 520.0 A221.6 221.6 0 0 1 781.6 520.0 A221.6 221.6 0 0 1 338.4 520.0 M335.2 520.0 A224.8 224.8 0 0 1 784.8 520.0 A224.8 224.8 0 0 1 335.2 520.0 M332.0 520.0 A228.0 228.0 0 0 1 788.0 520.0 A228.0 228.0 0 0 1 332.0 520.0 M328.8 520.0 A231.2 231.2 0 0 1 791.2 520.0 A231.2 231.2 0 0 1 328.8 520.0 M325.6 520.0 A234.4 234.4 0 0 1 794.4 520.0 A234.4 234.4 0 0 1 325.6 520.0 M322.4 520.0 A237.6 237.6 0 0 1 797.6 520.0 A237.6 237.6 0 0 1 322.4 520.0 M319.2 520.0 A240.8 240.8 0 0 1 800.8 520.0 A240.8 240.8 0 0 1 319.2 520.0 M316.0 520.0 A244.0 244.0 0 0 1 804.0 520.0 A244.0 244.0 0 0 1 316.0 520.0 M312.8 520.0 A247.2 247.2 0 0 1 807.2 520.0 A247.2 247.2 0 0 1 312.8 520.0 M309.6 520.0 A250.4 250.4 0 0 1 810.4 520.0 A250.4 250.4 0 0 1 309.6 520.0 M306.4 520.0 A253.6 253.6 0 0 1 813.6 520.0 A253.6 253.6 0 0 1 306.4 520.0 M303.2 520.0 A256.8 256.8 0 0 1 816.8 520.0 A256.8 256.8 0 0 1 303.2 520.0 M300.0 520.0 A260.0 260.0 0 0 1 820.0 520.0 A260.0 260.0 0 0 1 300.0 520.0 M296.8 520.0 A263.2 263.2 0 0 1 823.2 520.0 A263.2 263.2 0 0 1 296.8 520.0 M293.6 520.0 A266.4 266.4 0 0 1 826.4 520.0 A266.4 266.4 0 0 1 293.6 520.0 M290.4 520.0 A269.6 269.6 0 0 1 829.6 520.0 A269.6 269.6 0 0 1 290.4 520.0 M287.2 520.0 A272.8 272.8 0 0 1 832.8 520.0 A272.8 272.8 0 0 1 287.2 520.0 M284.0 520.0 A276.0 276.0 0 0 1 836.0 520.0 A276.0 276.0 0 0 1 284.0 520.0 M280.8 520.0 A279.2 279.2 0 0 1 839.2 520.0 A279.2 279.2 0 0 1 280.8 520.0 M277.6 520.0 A282.4 282.4 0 0 1 842.4 520.0 A282.4 282.4 0 0 1 277.6 520.0 M274.4 520.0 A285.6 285.6 0 0 1 845.6 520.0 A285.6 285.6 0 0 1 274.4 520.0 M271.2 520.0 A288.8 288.8 0 0 1 848.8 520.0 A288.8 288.8 0 0 1 271.2 520.0 M268.0 520.0 A292.0 292.0 0 0 1 852.0 520.0 A292.0 292.0 0 0 1 268.0 520.0 M264.8 520.0 A295.2 295.2 0 0 1 855.2 520.0 A295.2 295.2 0 0 1 264.8 520.0 M261.6 520.0 A298.4 298.4 0 0 1 858.4 520.0 A298.4 298.4 0 0 1 261.6 520.0" fill="none" stroke="#6e7678" stroke-width="0.8" opacity="0.3" transform="translate(-1.5,1.5)"/></g>
<defs><clipPath id="swclip"><path d="M435.0 582.0 L444.0 487.0 L461.0 439.0 L479.0 417.0 L501.0 408.0 L520.0 398.0 L532.0 386.0 L558.0 360.0 L585.0 346.0 L611.0 340.0 L646.0 351.0 L681.0 381.0 L707.0 417.0 L734.0 461.0 L760.0 509.0 L782.0 548.0 L791.0 582.0Z"/></clipPath></defs>
<path d="M435 582C437 540 444 487 461 439C468 425 485 412 501 408" fill="none" stroke="#9bb8b0" stroke-width="1.3" opacity="0.6"/>
<path d="M434 582C436 540 443 487 460 439" fill="none" stroke="#a87880" stroke-width="1" opacity="0.5" transform="translate(-2,0)"/>
<path d="M506 582C508 540 512 470 520 420C528 390 550 362 585 346C611 336 646 349 681 381C707 410 734 461 760 509C772 532 782 550 791 582" fill="none" stroke="#9db0ac" stroke-width="1.2" opacity="0.5"/>
<path d="M520 420C528 390 550 362 585 346C611 336 646 349 681 381C707 410 734 461 760 509C772 532 782 550 791 582" fill="none" stroke="#a08088" stroke-width="1" opacity="0.5" transform="translate(2,-2)"/>
<path d="M615 342C610 380 606 452 602 531C601 550 600 570 600 582" fill="none" stroke="#6f7a80" stroke-width="1.3" opacity="0.7"/>
<path d="M703 504C701 530 700 560 699 582" fill="none" stroke="#a09090" stroke-width="1" opacity="0.5"/>
</g></svg>
</div>
<!-- v scrollbar -->
<div class="a" style="left:968px;top:19px;width:13px;height:561px;background:#474747"></div>
<div class="a" style="left:970px;top:202px;width:9px;height:196px;background:#5e5e5e"></div>
<svg style="left:970px;top:23px" width="9" height="6"><path d="M1 4.5L4.5 1L8 4.5" stroke="#8c8c8c" fill="none" stroke-width="1"/></svg>
<svg style="left:970px;top:570px" width="9" height="6"><path d="M1 1.5L4.5 5L8 1.5" stroke="#8c8c8c" fill="none" stroke-width="1"/></svg>
<!-- status bar -->
<div class="a" style="left:31px;top:580px;width:950px;height:12px;background:#474747"></div>
<div class="a" style="left:31px;top:580px;width:38px;height:12px;background:#464646"></div>
<div class="a" style="left:69px;top:580px;width:143px;height:12px;background:#535353"></div>
<div class="t" style="left:40px;top:582px;color:#d0d0d0;letter-spacing:-0.7px">100%</div>
<div class="t" style="left:105px;top:582px;color:#d0d0d0;letter-spacing:-0.8px">Doc: 3.09M/9.27M</div>
<svg style="left:204px;top:583px" width="6" height="9"><path d="M1.5 1L4.5 4.5L1.5 8" stroke="#c0c0c0" fill="none" stroke-width="1"/></svg>
<svg style="left:219px;top:583px" width="6" height="9"><path d="M4.5 1L1.5 4.5L4.5 8" stroke="#9a9a9a" fill="none" stroke-width="1"/></svg>
<div class="a" style="left:453px;top:582px;width:276px;height:9px;background:#6a6a6a"></div>
<svg style="left:956px;top:583px" width="6" height="9"><path d="M1.5 1L4.5 4.5L1.5 8" stroke="#8a8a8a" fill="none" stroke-width="1"/></svg>
<!-- separators -->
<div class="a" style="left:981px;top:0;width:2px;height:592px;background:#414141"></div>
<div class="a" style="left:983px;top:6px;width:29px;height:586px;background:#535353"></div>
<div class="a" style="left:1012px;top:0;width:2px;height:592px;background:#424242"></div>
<!-- right panel -->
<div class="a" style="left:1014px;top:6px;width:186px;height:586px;background:#535353"></div>
<!-- right icon column -->
<div class="a" style="left:983px;top:59px;width:29px;height:1.5px;background:#3c3c3c"></div><div class="a" style="left:983px;top:113px;width:29px;height:1.5px;background:#3c3c3c"></div><div class="a" style="left:983px;top:145px;width:29px;height:1.5px;background:#3c3c3c"></div><div class="a" style="left:983px;top:177px;width:29px;height:1.5px;background:#3c3c3c"></div><div class="a" style="left:983px;top:209px;width:29px;height:1.5px;background:#3c3c3c"></div><div class="a" style="left:983px;top:241px;width:29px;height:1.5px;background:#3c3c3c"></div><div class="a" style="left:983px;top:273px;width:29px;height:1.5px;background:#3c3c3c"></div><div class="a" style="left:983px;top:305px;width:29px;height:1.5px;background:#3c3c3c"></div>
<div class="a" style="left:983px;top:6px;width:29px;height:53px;background:#535353"></div>
<div class="a" style="left:983px;top:61px;width:29px;height:52px;background:#535353"></div>
<div class="a" style="left:983px;top:115px;width:29px;height:30px;background:#535353"></div>
<div class="a" style="left:983px;top:147px;width:29px;height:30px;background:#535353"></div>
<div class="a" style="left:983px;top:179px;width:29px;height:30px;background:#535353"></div>
<div class="a" style="left:983px;top:211px;width:29px;height:30px;background:#535353"></div>
<div class="a" style="left:983px;top:243px;width:29px;height:30px;background:#535353"></div>
<div class="a" style="left:983px;top:275px;width:29px;height:30px;background:#535353"></div>
<svg style="left:983px;top:0" width="29" height="320" viewBox="983 0 29 320">
<g stroke="#434343" stroke-width="1" stroke-dasharray="1.5 1">
<path d="M990 9.5H1004M990 63.5H1004M990 118H1004M990 150H1004M990 182H1004M990 214H1004M990 246H1004M990 278H1004"/>
</g>
<path d="M1002.5 0L1004.5 2M1005.5 0L1007.5 2" stroke="#dcdcdc" fill="none" stroke-width="1.2"/>
<g fill="none" stroke="#e0e0e0" stroke-width="1">
<!-- history -->
<rect x="991.8" y="17.3" width="3.6" height="3.6" stroke-width="1"/>
<rect x="991.8" y="22.3" width="3.6" height="3.6" stroke-width="1"/>
<path d="M992.8 23.3H994.4L993.6 24.5Z" fill="#e0e0e0" stroke="none"/>
<rect x="991.3" y="27.2" width="4.6" height="3.2" fill="#e0e0e0" stroke="none"/>
<path d="M991.3 28.8H995.9" stroke="#535353" stroke-width="0.6"/>
<path d="M998.5 19C1001.5 20 1002.5 23 1001.5 26C1001 27.5 999.8 28.5 998.5 29" stroke-width="1.3"/>
<path d="M997.2 17.6L1000.8 18.6L998.2 21.2Z" fill="#e0e0e0" stroke="none"/>
<!-- play -->
<path d="M992.5 39.5L1003 45.5L992.5 51.5Z" fill="#e0e0e0" stroke="none"/>
<!-- 3d -->
<path d="M991 73.5L995 71.5L999 73.5V78L995 80L991 78Z" fill="none" stroke-width="1"/>
<path d="M991 73.5L995 75.5L999 73.5M995 75.5V80" stroke-width="0.9"/>
<rect x="1000.5" y="71" width="3.2" height="3.2" fill="#e0e0e0" stroke="none"/><rect x="1000.5" y="76" width="3.2" height="3.2" fill="#e0e0e0" stroke="none"/>
<rect x="990.5" y="81.5" width="13.5" height="2.8" fill="#e0e0e0" stroke="none"/>
<rect x="1001.5" y="82.2" width="1.5" height="1.4" fill="#535353" stroke="none"/>
<!-- info -->
<circle cx="997" cy="99.5" r="6" stroke-width="1.1"/>
<path d="M997 97.5V103.5" stroke-width="1.4"/><circle cx="997" cy="95.3" r="0.8" fill="#e0e0e0" stroke="none"/>
<!-- brush presets -->
<path d="M990.5 124.5H992M990.5 127.5H992M990.5 130.5H992M993.3 124.5H996.5M993.3 127.5H996.5M993.3 130.5H995.5" stroke-width="1.2"/>
<path d="M1005 125L999.5 131" stroke-width="1.8"/>
<path d="M997.8 131.2C995.8 132.4 996.3 135.4 994.5 136.5C997.3 137.3 1000.6 135.8 1000.6 132.8Z" fill="#e0e0e0" stroke="none"/>
<!-- clone source -->
<path d="M990.5 156.5H992M990.5 159.5H992M990.5 162.5H992M993.3 156.5H996.5M993.3 159.5H996.5M993.3 162.5H995.5" stroke-width="1.2"/>
<circle cx="1001" cy="157.5" r="2.2" fill="#e0e0e0" stroke="none"/>
<rect x="1000.2" y="159" width="1.6" height="2.5" fill="#e0e0e0" stroke="none"/>
<rect x="996.5" y="161.5" width="9" height="2.8" fill="#e0e0e0" stroke="none"/>
<path d="M996.5 166H1005.5" stroke-width="1"/>
<!-- tool presets (wrench/screwdriver) -->
<path d="M991.5 200.5L998 194" stroke-width="2"/>
<path d="M998 194L1004 188" stroke-width="1"/>
<path d="M992 188.5L1001 197.5" stroke-width="1.5"/>
<path d="M991.5 186.5C990.5 187.5 990.5 189.5 992 190.5L993.5 189L993 188L994.5 186.5C993.5 186 992.5 186 991.5 186.5Z" fill="#e0e0e0" stroke="none"/>
<circle cx="1002.5" cy="199" r="2" stroke-width="1.1"/>
<!-- libraries -->
<rect x="991.5" y="222" width="11" height="11" stroke-width="1.2"/>
<rect x="993.5" y="220.5" width="11" height="11" fill="#535353" stroke-width="1.2"/>
<path d="M999.5 221V226.5L1001 225.2L1002.5 226.5V221Z" fill="#e0e0e0" stroke="none"/>
<!-- gradients -->
<rect x="991.5" y="253.5" width="12" height="9" fill="url(#gr2)" stroke-width="1.1"/>
<!-- shapes -->
<path d="M995 285.5L990.5 292H997.5Z" fill="#e0e0e0" stroke="none"/>
<circle cx="1000" cy="292.5" r="4" stroke-width="1.2" fill="#535353"/>
<path d="M995 285.5L990.5 292H997.5Z" fill="#e0e0e0" stroke="none" opacity="0.9"/>
</g>
<defs><linearGradient id="gr2" x1="0" y1="0" x2="1" y2="1"><stop offset="0" stop-color="#2a2a2a"/><stop offset="1" stop-color="#d0d0d0"/></linearGradient></defs>
</svg>

<!-- right panel top strip -->
<svg style="left:1188px;top:0" width="10" height="6"><path d="M3.5 0L2 2M6.5 0L5 2" stroke="#dcdcdc" fill="none" stroke-width="1.2"/></svg>
<!-- navigator header -->
<div class="a" style="left:1014px;top:6px;width:186px;height:21.5px;background:#424242"></div>
<div class="a" style="left:1014px;top:6px;width:48px;height:21.5px;background:#474747"></div>
<div class="a" style="left:1062px;top:6px;width:50px;height:21.5px;background:#535353"></div>
<div class="t" style="left:1021px;top:11px;font-weight:bold;color:#a8a8a8;letter-spacing:-0.85px">Swatches</div>
<div class="t" style="left:1068.5px;top:11px;font-weight:bold;color:#f2f2f2;letter-spacing:-0.5px">Navigator</div>
<div class="a" style="left:1190px;top:14px;width:6px;height:5px;background:#7a7a7a"></div>
<!-- navigator preview -->
<div class="a" style="left:1017px;top:35px;width:178px;height:133px;background:#808080;border:2px solid #e85050;overflow:hidden"><svg style="left:0;top:0" width="174" height="129" viewBox="122 19 751 561" preserveAspectRatio="none"><use href="#imgc"/></svg></div>
<!-- zoom bar -->
<div class="a" style="left:1014px;top:177px;width:186px;height:19px;background:#555555"></div>
<div class="a" style="left:1014px;top:177px;width:44.5px;height:19px;background:#474747"></div>
<div class="t" style="left:1018px;top:182px;color:#d6d6d6;letter-spacing:-0.6px">100%</div>
<svg style="left:1060px;top:178px" width="140" height="18" viewBox="1060 178 140 18">
<path d="M1063 189.5L1066 186.8L1067.5 188L1069 186.5L1072 189.5Z" fill="#e6e6e6"/>
<path d="M1083 184.3H1160" stroke="#7a7a7a" stroke-width="1.2"/>
<path d="M1116.5 192.8V190L1120 186L1123.5 190V192.8Z" fill="#ececec"/>
<path d="M1168 189.5L1172 185L1174 187L1176.5 184.5L1181 189.5Z" fill="#e6e6e6"/>
</svg>
<div class="a" style="left:1014px;top:196px;width:186px;height:2px;background:#3e3e3e"></div>
<!-- layers header -->
<div class="a" style="left:1014px;top:198px;width:186px;height:22px;background:#424242"></div>
<div class="a" style="left:1014px;top:198px;width:37.5px;height:22px;background:#535353"></div>
<div class="a" style="left:1052px;top:198px;width:45.5px;height:22px;background:#474747"></div>
<div class="a" style="left:1099px;top:198px;width:32.5px;height:22px;background:#474747"></div>
<div class="t" style="left:1021px;top:203px;font-weight:bold;color:#f2f2f2;letter-spacing:-0.9px">Layers</div>
<div class="t" style="left:1057.5px;top:203px;font-weight:bold;color:#a8a8a8;letter-spacing:-0.9px">Channels</div>
<div class="t" style="left:1105px;top:203px;font-weight:bold;color:#a8a8a8;letter-spacing:-0.9px">Paths</div>
<div class="a" style="left:1190px;top:206px;width:6px;height:5px;background:#7a7a7a"></div>
<!-- layers body -->
<div class="a" style="left:1014px;top:220px;width:186px;height:372px;background:#535353"></div>
<div class="a" style="left:1014px;top:369px;width:174px;height:204px;background:#4b4b4b"></div>
<!-- filter row -->
<div class="a" style="left:1017px;top:227.5px;width:66.5px;height:13px;background:#464646;border-radius:2px"></div>
<svg style="left:1022px;top:230px" width="9" height="9"><circle cx="3.7" cy="3.7" r="2.7" fill="none" stroke="#e0e0e0" stroke-width="1.1"/><path d="M5.8 5.8L8.3 8.3" stroke="#e0e0e0" stroke-width="1.3"/></svg>
<div class="t" style="left:1033px;top:229px;color:#dcdcdc;letter-spacing:-0.5px">Kind</div>
<svg style="left:1075px;top:232px" width="6" height="4"><path d="M0.5 0.5L3 3L5.5 0.5" stroke="#bdbdbd" fill="none" stroke-width="0.9"/></svg>
<svg style="left:1090px;top:226px" width="110" height="16" viewBox="1090 226 110 16">
<g fill="none" stroke="#e0e0e0" stroke-width="1.1">
<rect x="1094.5" y="229.5" width="9.5" height="8"/>
<path d="M1096.5 236L1098.3 233.3L1099.5 234.7L1100.5 233.3L1102.3 236Z" fill="#e0e0e0" stroke="none"/>
<circle cx="1117" cy="233.5" r="4.3" stroke-width="1.2"/>
<path d="M1120 230.5A4.3 4.3 0 0 1 1114 236.5Z" fill="#e0e0e0" stroke="none"/>
<path d="M1131.5 229.5H1140.5M1131.5 229.5V231M1140.5 229.5V231M1136 229.5V238M1134.3 238H1137.7" stroke-width="1.4"/>
<rect x="1151" y="229.5" width="8" height="8"/>
<circle cx="1151" cy="229.5" r="1.1" fill="#535353"/><circle cx="1159" cy="229.5" r="1.1" fill="#535353"/><circle cx="1151" cy="237.5" r="1.1" fill="#535353"/><circle cx="1159" cy="237.5" r="1.1" fill="#535353"/>
<path d="M1172 233V230.5H1175.5L1177.5 232.5V237.5H1175" stroke-width="1"/>
<rect x="1170.3" y="234" width="4.8" height="4" fill="#e0e0e0" stroke="none"/>
<path d="M1171.3 234V232.5C1171.3 231 1174 231 1174 232.5V234" stroke-width="0.9"/>
</g>
<circle cx="1191" cy="230" r="3.6" fill="#e4e4e4"/>
<rect x="1188.5" y="233" width="5" height="7.5" rx="2.5" fill="#3f3f3f"/>
<circle cx="1191" cy="230" r="3.6" fill="#e4e4e4"/>
</svg>
<div class="a" style="left:1014px;top:243.5px;width:186px;height:1px;background:#4a4a4a"></div>
<!-- blend row -->
<div class="a" style="left:1017px;top:249px;width:100px;height:13.5px;background:#464646;border-radius:2px"></div>
<div class="t" style="left:1023px;top:251px;color:#dcdcdc;letter-spacing:-0.5px">Normal</div>
<svg style="left:1108px;top:254px" width="6" height="4"><path d="M0.5 0.5L3 3L5.5 0.5" stroke="#bdbdbd" fill="none" stroke-width="0.9"/></svg>
<div class="t" style="left:1123px;top:251px;color:#c8c8c8;letter-spacing:-0.6px">Opacity:</div>
<div class="a" style="left:1155.5px;top:250px;width:27px;height:11px;background:#464646"></div>
<div class="a" style="left:1183px;top:250px;width:10px;height:11px;background:#474747;border-left:1px solid #555"></div>
<div class="t" style="left:1157.5px;top:251px;color:#e6e6e6;letter-spacing:-0.6px">100%</div>
<svg style="left:1185px;top:254px" width="6" height="4"><path d="M0.5 0.5L3 3L5.5 0.5" stroke="#bdbdbd" fill="none" stroke-width="0.9"/></svg>
<div class="a" style="left:1014px;top:265.5px;width:186px;height:1px;background:#4a4a4a"></div>
<!-- lock row -->
<div class="t" style="left:1019px;top:273px;color:#c8c8c8;letter-spacing:-0.6px">Lock:</div>
<svg style="left:1040px;top:268px" width="90" height="18" viewBox="1040 268 90 18">
<rect x="1043.8" y="272.8" width="9.5" height="9.5" fill="#e0e0e0"/>
<g fill="#535353"><rect x="1045" y="274" width="2.3" height="2.3"/><rect x="1049.5" y="274" width="2.3" height="2.3"/><rect x="1047.3" y="276.3" width="2.3" height="2.3"/><rect x="1045" y="278.6" width="2.3" height="2.3"/><rect x="1049.5" y="278.6" width="2.3" height="2.3"/></g>
<path d="M1072 272L1066.5 278" stroke="#e0e0e0" stroke-width="1.6"/>
<path d="M1065 278.2C1063.3 279.3 1063.7 282 1062 283C1064.5 283.7 1067.4 282.3 1067.4 279.6Z" fill="#e0e0e0"/>
<g stroke="#e0e0e0" stroke-width="1.1" fill="none"><path d="M1083 272.5V283M1077.8 277.7H1088.2"/></g>
<path d="M1083 271.5L1081.3 273.5H1084.7Z M1083 284L1081.3 282H1084.7Z M1076.8 277.7L1078.8 276V279.4Z M1089.2 277.7L1087.2 276V279.4Z" fill="#e0e0e0"/>
<g stroke="#e0e0e0" stroke-width="1" fill="none"><path d="M1097 273.5H1105V282.5M1095 275.5H1103V284M1095 275.5V282.5H1106M1104 272L1106.5 274"/></g>
<rect x="1113.5" y="276.5" width="7.5" height="6" fill="#e0e0e0"/>
<path d="M1115 276.5V275C1115 272.5 1119.5 272.5 1119.5 275V276.5" stroke="#e0e0e0" stroke-width="1.2" fill="none"/>
<rect x="1116.6" y="278.5" width="1.4" height="2" fill="#535353"/>
</svg>
<div class="t" style="left:1140px;top:273px;color:#c8c8c8;letter-spacing:-0.6px">Fill:</div>
<div class="a" style="left:1155.5px;top:272px;width:27px;height:11px;background:#464646"></div>
<div class="a" style="left:1183px;top:272px;width:10px;height:11px;background:#474747;border-left:1px solid #555"></div>
<div class="t" style="left:1157.5px;top:273px;color:#e6e6e6;letter-spacing:-0.6px">100%</div>
<svg style="left:1185px;top:276px" width="6" height="4"><path d="M0.5 0.5L3 3L5.5 0.5" stroke="#bdbdbd" fill="none" stroke-width="0.9"/></svg>
<!-- layers list -->
<div class="a" style="left:1014px;top:289.5px;width:174px;height:80px;background:#535353"></div>
<div class="a" style="left:1188px;top:287px;width:12px;height:286px;background:#484848"></div>
<div class="a" style="left:1037.5px;top:289.5px;width:150.5px;height:25px;background:#676767"></div>
<div class="a" style="left:1014px;top:314.5px;width:174px;height:1px;background:#4a4a4a"></div>
<div class="a" style="left:1014px;top:341.8px;width:174px;height:1px;background:#4a4a4a"></div>
<div class="a" style="left:1014px;top:368.5px;width:174px;height:1px;background:#4a4a4a"></div>
<div class="a" style="left:1036.5px;top:315px;width:1px;height:54px;background:#4c4c4c"></div>
<svg style="left:1014px;top:289px" width="174" height="80" viewBox="1014 289 174 80">
<g fill="#e8e8e8">
<path d="M1020 303C1022 299.8 1028 299.8 1030 303C1028 306.2 1022 306.2 1020 303Z"/>
<path d="M1020 329.5C1022 326.3 1028 326.3 1030 329.5C1028 332.7 1022 332.7 1020 329.5Z"/>
<path d="M1020 356C1022 352.8 1028 352.8 1030 356C1028 359.2 1022 359.2 1020 356Z"/>
</g>
<g fill="#535353"><circle cx="1025" cy="303" r="1.6"/><circle cx="1025" cy="329.5" r="1.6"/><circle cx="1025" cy="356" r="1.6"/></g>
<!-- thumb 1 -->
<rect x="1039.5" y="291.5" width="27" height="22" fill="#5d5d5d"/>
<path d="M1039.5 296V291.5H1044M1062 291.5H1066.5V296M1066.5 309V313.5H1062M1044 313.5H1039.5V309" stroke="#e6e6e6" stroke-width="1.1" fill="none"/>
<rect x="1046" y="297" width="15" height="12" fill="#767676"/>
<!-- thumb 2 -->
<rect x="1040" y="320" width="25" height="19.5" fill="#4a4a4a" stroke="#404040" stroke-width="1"/>
<rect x="1046" y="323.5" width="14.5" height="12" fill="#7c7c7c"/>
<!-- thumb 3 -->
<rect x="1040" y="346.5" width="25" height="19.5" fill="#4a4a4a" stroke="#404040" stroke-width="1"/>
<rect x="1046" y="350" width="14.5" height="11.5" fill="#d89a2a"/>
<rect x="1046" y="350" width="5" height="11.5" fill="#b8781c"/>
<circle cx="1051.5" cy="354" r="2.8" fill="#5a2a1a"/>
<path d="M1049 361.5C1050 357 1056 356 1060.5 358V361.5Z" fill="#e03a1a"/>
<circle cx="1052" cy="355" r="1.5" fill="#c88868"/>
<!-- lock -->
<rect x="1167" y="354.5" width="8.5" height="6.5" fill="none" stroke="#dcdcdc" stroke-width="1.1"/>
<path d="M1169 354.5V353C1169 350.8 1173.5 350.8 1173.5 353V354.5" stroke="#dcdcdc" stroke-width="1.1" fill="none"/>
<rect x="1170.6" y="356.8" width="1.4" height="2" fill="#dcdcdc"/>
</svg>
<div class="t" style="left:1073px;top:298px;color:#ececec;letter-spacing:-0.5px">Background copy 2</div>
<div class="t" style="left:1073px;top:324.5px;color:#e6e6e6;letter-spacing:-0.5px">Background copy</div>
<div class="t" style="left:1073px;top:351px;color:#e6e6e6;letter-spacing:-0.5px;font-style:italic">Background</div>
<!-- bottom toolbar -->
<div class="a" style="left:1014px;top:573px;width:186px;height:1px;background:#454545"></div>
<div class="a" style="left:1014px;top:574px;width:186px;height:18px;background:#535353"></div>
<svg style="left:1035px;top:575px" width="150" height="17" viewBox="1035 575 150 17">
<g fill="none" stroke="#8e8e8e" stroke-width="1.3"><rect x="1041.5" y="581.5" width="6" height="4.5" rx="2.2"/><rect x="1045.5" y="581.5" width="6" height="4.5" rx="2.2"/></g>
<text x="1063" y="588" font-family="Liberation Serif" font-style="italic" font-size="11" fill="#e0e0e0">fx</text>
<rect x="1073" y="588" width="1.5" height="1.5" fill="#e0e0e0"/>
<rect x="1084" y="579.5" width="10.5" height="8" fill="#e6e6e6"/>
<circle cx="1089.3" cy="583.5" r="2.3" fill="#535353"/>
<circle cx="1110.5" cy="583.5" r="4.5" fill="none" stroke="#e0e0e0" stroke-width="1.2"/>
<path d="M1113.7 580.3A4.5 4.5 0 0 1 1107.3 586.7Z" fill="#e0e0e0"/>
<rect x="1115" y="588" width="1.5" height="1.5" fill="#e0e0e0"/>
<path d="M1127 580H1131L1132 581H1137V588H1127Z" fill="#e0e0e0"/>
<rect x="1147.5" y="578.5" width="9.5" height="9.5" fill="none" stroke="#e0e0e0" stroke-width="1.1"/>
<path d="M1152.3 580.5V586M1149.5 583.3H1155" stroke="#e0e0e0" stroke-width="1.1"/>
<path d="M1169 580.5H1177.5M1171.5 580.5V579H1175V580.5" stroke="#e0e0e0" stroke-width="1.1" fill="none"/>
<path d="M1170 582H1176.5L1176 589H1170.5Z" fill="none" stroke="#e0e0e0" stroke-width="1.1"/>
<path d="M1172.2 583V588M1174.3 583V588" stroke="#e0e0e0" stroke-width="0.8"/>
</svg>

</body></html>
